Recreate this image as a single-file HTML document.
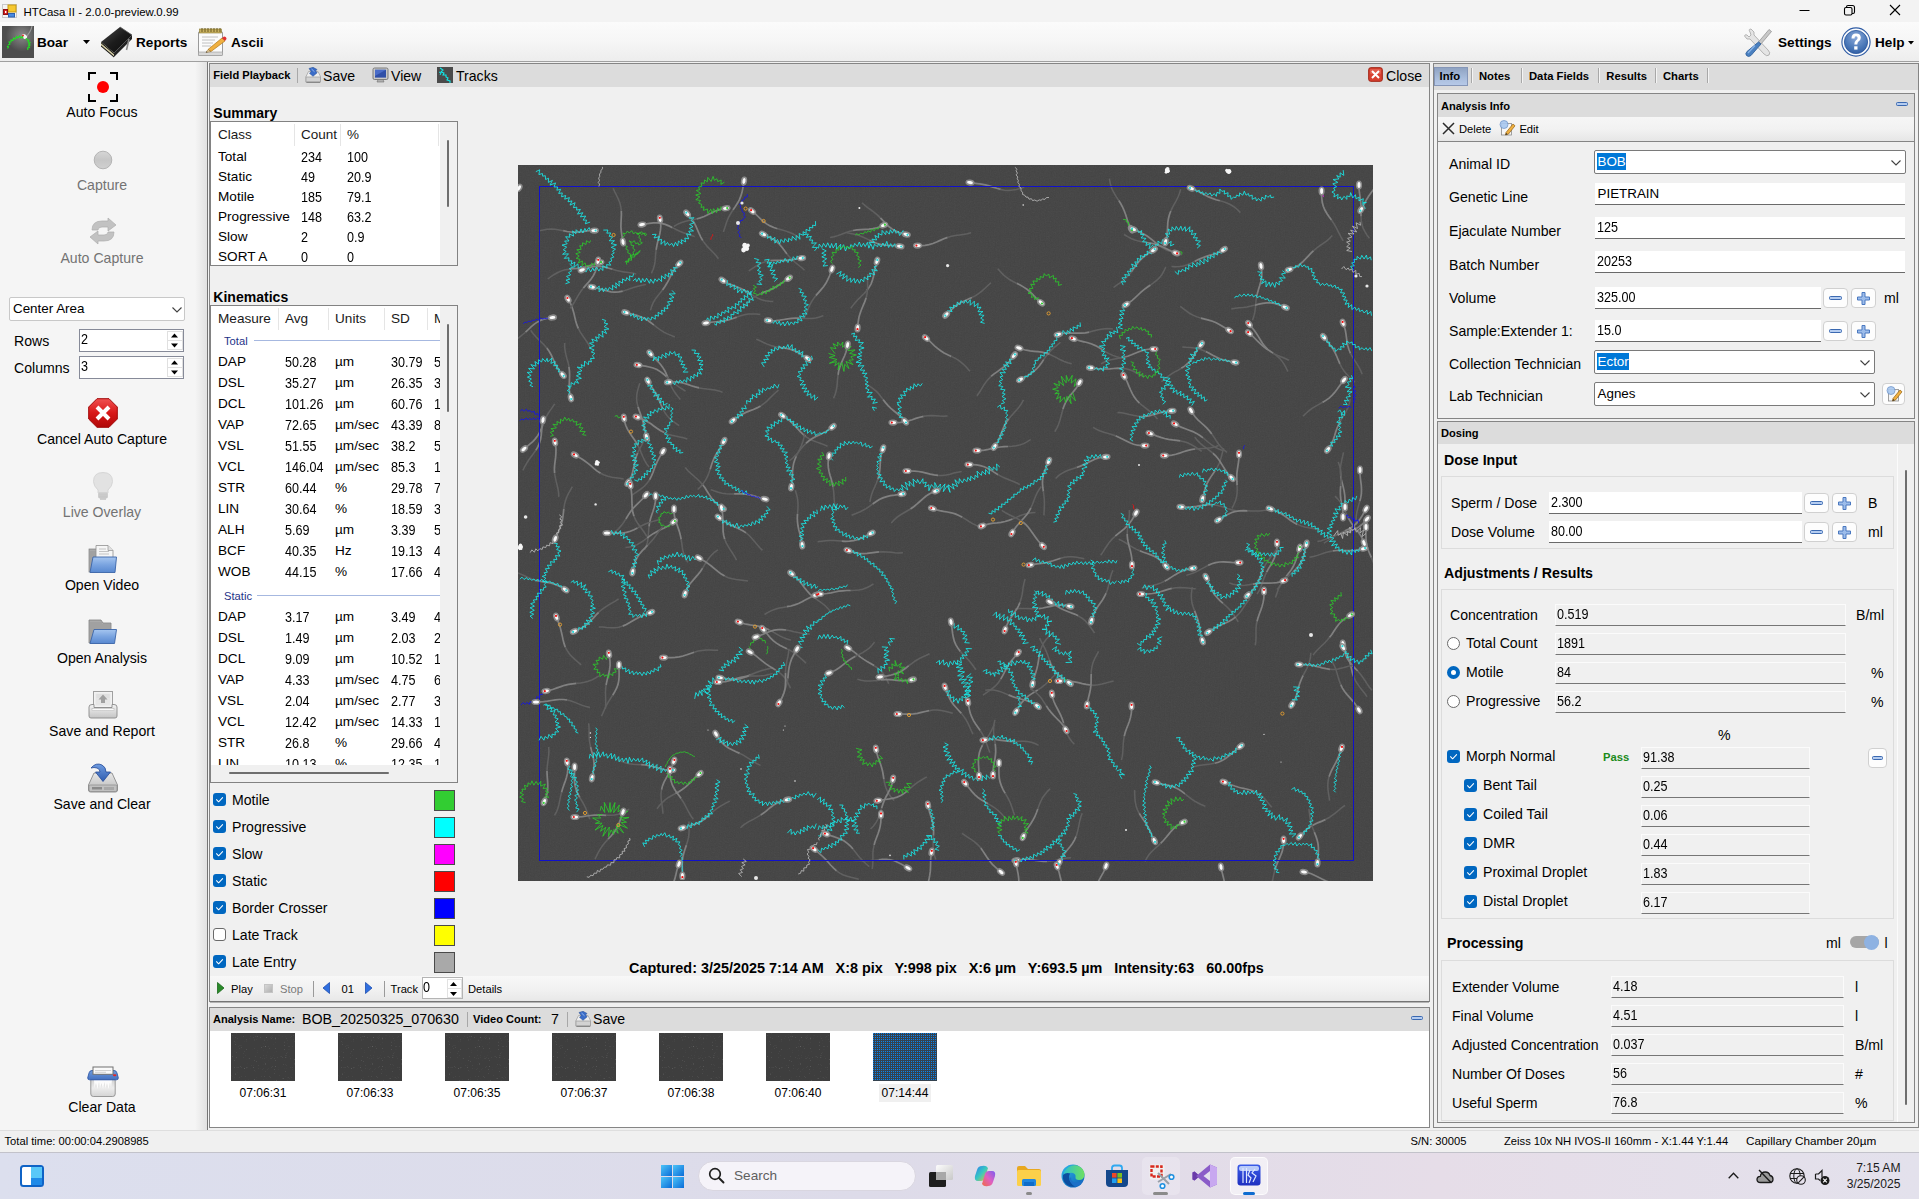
<!DOCTYPE html>
<html><head><meta charset="utf-8"><title>HTCasa II - 2.0.0-preview.0.99</title>
<style>
html,body{margin:0;padding:0;width:1919px;height:1199px;overflow:hidden;background:#f0f0f0;font-family:"Liberation Sans",sans-serif;}
#root{position:relative;width:1919px;height:1199px;overflow:hidden}
#root div{position:absolute;box-sizing:border-box}
.t{white-space:pre}
.tb{background:#fff;border-bottom:1px solid #6a6a6a}
.ro{background:#f0f0f0;border:1px solid #fbfbfb;border-bottom:1px solid #767676}
.btn{background:#fdfdfd;border:1px solid #d0d0d0;border-radius:4px}
.cb{background:#0067c0;border-radius:3px}
.gb{border:1px solid #dcdcdc}
svg{display:block}
</style></head><body><div id="root">

<div style="left:0px;top:0px;width:1919px;height:22px;background:#f3f3f3"></div>
<div style="left:2px;top:3px"><svg width="16" height="16" viewBox="0 0 16 16"><rect x="0.5" y="1.5" width="14" height="13" fill="#f4f4f4" stroke="#c8c8c8"/>
<rect x="6" y="2" width="8" height="7" fill="#f6c830" stroke="#c79a10" stroke-width="1"/>
<rect x="1.5" y="6.5" width="4" height="5" fill="#d02020" stroke="#901010"/>
<rect x="3" y="8" width="1.4" height="2" fill="#fff"/>
<rect x="6.5" y="10.5" width="6" height="3.5" fill="#4a8ae0" stroke="#2a60b0"/></svg></div>
<div class="t" style="left:23.5px;top:1.5px;line-height:20px;font-size:11.45px;color:#000;">HTCasa II - 2.0.0-preview.0.99</div>
<div style="left:1780px;top:0"><svg width="139" height="22" viewBox="0 0 139 22"><path d="M19.500 10.500 H29.500" stroke="#000" stroke-width="1"/><rect x="64.500" y="7.500" width="7.500" height="7.500" rx="1.500" fill="none" stroke="#000" stroke-width="1.100"/><path d="M66.500 7.500 V7 Q66.500 5.500 68 5.500 H72.500 Q74.500 5.500 74.500 7.500 V12 Q74.500 13.500 73 13.500 H72" fill="none" stroke="#000" stroke-width="1.100"/><path d="M110 5 L120 15 M120 5 L110 15" stroke="#000" stroke-width="1.100"/></svg></div>
<div style="left:0px;top:22px;width:1919px;height:39px;background:linear-gradient(#fbfbfb,#f6f6f6 50%,#ededed)"></div>
<div style="left:0px;top:60px;width:1919px;height:2px;background:#a0a0a0;height:1px;top:61px"></div>
<div style="left:2px;top:26px"><svg width="32" height="32" viewBox="0 0 32 32"><defs><radialGradient id="bg1" cx="0.62" cy="0.3" r="0.5"><stop offset="0" stop-color="#8a8a8a"/><stop offset="1" stop-color="#4d4d4d"/></radialGradient></defs>
<rect width="32" height="32" fill="url(#bg1)"/>
<path d="M23 12 Q29 6 30 0" stroke="#9a9a9a" stroke-width="1.2" fill="none"/>
<ellipse cx="22.5" cy="10.5" rx="3" ry="2" fill="#f4f4f4" transform="rotate(35 22.5 10.5)"/>
<path d="M6 19 l2-1 -1-2 2 0 0-2 2 .5 .5-2.5 2 1 1-2.500 1.500 1.500 1.500-2 1 2 2-1.500 .5 2 M24 12 l1 2 2 0 -1 2 2 .5 -1.500 1.500 1.500 1 -1.500 1 1 1.500 -2 .5 .5 2 M5 20 l1.500 1 -1 1.500" stroke="#22e022" stroke-width="1.1" fill="none"/>
<circle cx="21" cy="9.500" r="0.900" fill="#e01010"/></svg></div>
<div class="t" style="left:37px;top:32.8px;line-height:20px;font-size:13.6px;font-weight:bold;color:#000;">Boar</div>
<div style="left:83px;top:40px"><svg width="7" height="4"><path d="M0 0 H7 L3.500 4 Z" fill="#000"/></svg></div>
<div style="left:100px;top:26px"><svg width="34" height="32" viewBox="0 0 34 32"><defs><linearGradient id="bk" x1="0" y1="0" x2="1" y2="1"><stop offset="0" stop-color="#4a4a4a"/><stop offset="0.5" stop-color="#1c1c1c"/><stop offset="1" stop-color="#0a0a0a"/></linearGradient></defs>
<path d="M1 16 L20 1 L32 9 L14 27 Z" fill="url(#bk)"/>
<path d="M1 16 L14 27 L14 31 L1 20 Z" fill="#d8d0a8"/>
<path d="M1 16 L14 27 L14 28.200 L1 17.200 Z" fill="#111"/>
<path d="M1 19.200 L14 30.200 L14 31.500 L1 20.600 Z" fill="#111"/>
<path d="M14 27 L32 9 L32 13 L14 31 Z" fill="#222"/>
<path d="M29 13 L26.500 24" stroke="#8a8a8a" stroke-width="1.600"/>
<path d="M20 1 L32 9" stroke="#555" stroke-width="0.800"/></svg></div>
<div class="t" style="left:136px;top:32.8px;line-height:20px;font-size:13.6px;font-weight:bold;color:#000;">Reports</div>
<div style="left:197px;top:27px"><svg width="30" height="30" viewBox="0 0 30 30"><rect x="1.500" y="4.500" width="24" height="24" rx="1.500" fill="#fbfbfb" stroke="#9a9a9a"/>
<rect x="1.500" y="25" width="24" height="3.500" fill="#d8d8d8" stroke="#9a9a9a" stroke-width="0.600"/>
<rect x="2.500" y="2" width="22" height="4" fill="#c8b060" stroke="#8a7a30" stroke-width="0.600"/>
<path d="M5 1v4M8 1v4M11 1v4M14 1v4M17 1v4M20 1v4M23 1v4" stroke="#6a5a20" stroke-width="1"/>
<path d="M5 10h16M5 13h13M5 16h11M5 19h9" stroke="#c0c0c0" stroke-width="1"/>
<path d="M11 22.500 L25 11 L28 14 L14 24.500 Z" fill="#f0b040" stroke="#b07818" stroke-width="0.700"/>
<path d="M25 11 L27 9.500 Q29.500 9.500 29.500 12 L28 14 Z" fill="#e03030"/>
<path d="M11 22.500 L9 25.500 L14 24.500 Z" fill="#e8d0a0" stroke="#8a6a30" stroke-width="0.500"/>
<path d="M9 25.500 l1.500-.3 -.8-1z" fill="#333"/></svg></div>
<div class="t" style="left:231px;top:32.8px;line-height:20px;font-size:13.6px;font-weight:bold;color:#000;">Ascii</div>
<div style="left:1744px;top:28px"><svg width="30" height="30" viewBox="0 0 30 30"><path d="M6 4 Q4 1 7 1 L10 4 L10 7 L24 22 Q27 25 25 27 Q23 29 20 26 L6 11 L3 11 L0.500 8 Q1 6 3 7 L5 9 L7 7 Z" fill="#e4e4e4" stroke="#a4a4a4" stroke-width="0.800"/>
<path d="M25 1.500 L27.500 3.500 L17 16 L14.500 14 Z" fill="#c8c8c8" stroke="#8c8c8c" stroke-width="0.700"/>
<path d="M14.500 14 L17 16 L7 27.500 Q4.500 29.500 2.500 27.500 Q1 25.500 3 23.500 Z" fill="#4a80c0" stroke="#2a5a98" stroke-width="0.800"/>
<path d="M4 25 L11 17.500" stroke="#8ab4e8" stroke-width="1.200"/></svg></div>
<div class="t" style="left:1778px;top:32.8px;line-height:20px;font-size:13.6px;font-weight:bold;color:#000;">Settings</div>
<div style="left:1841px;top:27px"><svg width="30" height="30" viewBox="0 0 30 30"><defs><radialGradient id="hg" cx="0.5" cy="0.3" r="0.8"><stop offset="0" stop-color="#8aa8d8"/><stop offset="0.6" stop-color="#4a78b8"/><stop offset="1" stop-color="#2a569c"/></radialGradient></defs>
<circle cx="15" cy="15" r="14.100" fill="#fbfcfe" stroke="#2f5ca4" stroke-width="1.100"/>
<circle cx="15" cy="15" r="11.600" fill="url(#hg)" stroke="#2a569c" stroke-width="0.800"/>
<path d="M10.500 11.500 Q10.500 6.500 15 6.500 Q19.800 6.500 19.800 10.800 Q19.800 13.200 17.500 14.600 Q16.300 15.400 16.300 17.500 L13.300 17.500 Q13.300 14.600 15 13.300 Q16.600 12.200 16.600 11 Q16.600 9.300 15 9.300 Q13.500 9.300 13.500 11.500 Z" fill="#fff"/>
<rect x="13.200" y="19.300" width="3.300" height="3.300" fill="#fff"/></svg></div>
<div class="t" style="left:1875px;top:32.8px;line-height:20px;font-size:13.6px;font-weight:bold;color:#000;">Help</div>
<div style="left:1908px;top:41px"><svg width="6" height="4"><path d="M0 0 H6 L3 3.500 Z" fill="#000"/></svg></div>
<div style="left:0px;top:62px;width:207px;height:1068px;background:linear-gradient(90deg,#f5f5f5 0,#f5f5f5 195px,#e2e2e2 207px)"></div>
<div style="left:207px;top:62px;width:2px;height:1068px;background:#f4f4f4;border-left:1px solid #767676"></div>
<div style="left:88px;top:72px"><svg width="30" height="30" viewBox="0 0 30 30"><path d="M1 8V1H8M22 1H29V8M29 22V29H22M8 29H1V22" fill="none" stroke="#000" stroke-width="2"/>
<circle cx="15" cy="15" r="6" fill="#ff0000"/></svg></div>
<div class="t" style="left:-98px;width:400px;text-align:center;top:102.0px;line-height:20px;font-size:14.1px;color:#000;">Auto Focus</div>
<div style="left:93px;top:150px"><svg width="20" height="20" viewBox="0 0 20 20"><defs><linearGradient id="cg" x1="0" y1="0" x2="0" y2="1"><stop offset="0" stop-color="#d6d6d6"/><stop offset="0.5" stop-color="#c6c6c6"/><stop offset="1" stop-color="#d0d0d0"/></linearGradient></defs>
<circle cx="10" cy="10" r="8.800" fill="url(#cg)" stroke="#b4b4b4" stroke-width="1"/></svg></div>
<div class="t" style="left:-98px;width:400px;text-align:center;top:175.0px;line-height:20px;font-size:14.1px;color:#737373;">Capture</div>
<div style="left:89px;top:217px"><svg width="28" height="28" viewBox="0 0 28 28"><g fill="#c2c2c2" stroke="#aeaeae" stroke-width="0.700">
<path d="M3 13 Q3 4 13 4 L19 4 L19 1 L27 8 L19 14 L19 10 L13 10 Q9 10 9 13 Z"/>
<path d="M25 15 Q25 24 15 24 L9 24 L9 27 L1 20 L9 14 L9 18 L15 18 Q19 18 19 15 Z"/></g></svg></div>
<div class="t" style="left:-98px;width:400px;text-align:center;top:248.0px;line-height:20px;font-size:14.1px;color:#737373;">Auto Capture</div>
<div style="left:9px;top:297px;width:176px;height:24px;background:#fff;border:1px solid #c8c8c8;border-radius:2px"></div>
<div class="t" style="left:13px;top:299.3px;line-height:20px;font-size:13.4px;color:#000;">Center Area</div>
<div style="left:172px;top:307px"><svg width="10" height="6" viewBox="0 0 10 6"><path d="M0.500 0.500 L5 5 L9.500 0.500" fill="none" stroke="#404040" stroke-width="1.100"/></svg></div>
<div class="t" style="left:14px;top:331.0px;line-height:20px;font-size:14.1px;color:#000;">Rows</div>
<div class="t" style="left:14px;top:358.0px;line-height:20px;font-size:14.1px;color:#000;">Columns</div>
<div style="left:79px;top:329px;width:105px;height:23px;background:#fff;border:1px solid #868a98"></div>
<div class="t" style="left:80.5px;top:329.1px;line-height:20px;font-size:14.3px;color:#000;transform:scaleX(0.88);transform-origin:0 50%;">2</div>
<div style="left:170px;top:332px"><svg width="9" height="17" viewBox="0 0 9 17"><path d="M1 5.500 L4.500 1.500 L8 5.500 Z M1 11.5 L4.500 15.5 L8 11.5 Z" fill="#000"/></svg></div>
<div style="left:167px;top:331px;width:16px;height:19px;border:1px solid #e0e0e0;background:transparent"></div>
<div style="left:167px;top:340.0px;width:16px;height:1px;background:#e0e0e0"></div>
<div style="left:79px;top:356px;width:105px;height:23px;background:#fff;border:1px solid #868a98"></div>
<div class="t" style="left:80.5px;top:356.1px;line-height:20px;font-size:14.3px;color:#000;transform:scaleX(0.88);transform-origin:0 50%;">3</div>
<div style="left:170px;top:359px"><svg width="9" height="17" viewBox="0 0 9 17"><path d="M1 5.500 L4.500 1.500 L8 5.500 Z M1 11.5 L4.500 15.5 L8 11.5 Z" fill="#000"/></svg></div>
<div style="left:167px;top:358px;width:16px;height:19px;border:1px solid #e0e0e0;background:transparent"></div>
<div style="left:167px;top:367.0px;width:16px;height:1px;background:#e0e0e0"></div>
<div style="left:88px;top:398px"><svg width="30" height="30" viewBox="0 0 30 30"><defs><linearGradient id="rg" x1="0" y1="0" x2="0" y2="1"><stop offset="0" stop-color="#f05050"/><stop offset="0.5" stop-color="#d81818"/><stop offset="1" stop-color="#b00808"/></linearGradient></defs>
<path d="M9 0.700 H21 L29.300 9 V21 L21 29.300 H9 L0.700 21 V9 Z" fill="url(#rg)" stroke="#a00808" stroke-width="1"/>
<path d="M9 9 L21 21 M21 9 L9 21" stroke="#fff" stroke-width="4" stroke-linecap="butt"/></svg></div>
<div class="t" style="left:-98px;width:400px;text-align:center;top:429.2px;line-height:20px;font-size:14.1px;color:#000;">Cancel Auto Capture</div>
<div style="left:93px;top:472px"><svg width="20" height="28" viewBox="0 0 20 28"><path d="M10 0.500 Q19.500 0.500 19.500 9.500 Q19.500 14 15 18 L15 21 L5 21 L5 18 Q0.500 14 0.500 9.500 Q0.500 0.500 10 0.500 Z" fill="#e2e2e2" stroke="#d0d0d0" stroke-width="0.800"/>
<rect x="5.500" y="21" width="9" height="5" rx="1" fill="#d2d2d2" stroke="#c0c0c0" stroke-width="0.600"/>
<path d="M6 23h8M6 24.800h8" stroke="#bcbcbc" stroke-width="0.700"/>
<path d="M7 27 h6" stroke="#c0c0c0" stroke-width="1.500"/></svg></div>
<div class="t" style="left:-98px;width:400px;text-align:center;top:502.20000000000005px;line-height:20px;font-size:14.1px;color:#737373;">Live Overlay</div>
<div style="left:88px;top:544px"><svg width="30" height="30" viewBox="0 0 30 30"><defs><linearGradient id="fg1" x1="0" y1="0" x2="0" y2="1"><stop offset="0" stop-color="#a6c6f0"/><stop offset="0.5" stop-color="#7aa4e0"/><stop offset="1" stop-color="#5888d0"/></linearGradient></defs>
<rect x="1" y="5" width="8" height="23" fill="#aaaaaa" stroke="#808080" stroke-width="0.700"/>
<path d="M2 8h6M2 10h6M2 12h6M2 14h6M2 16h6M2 18h6M2 20h6M2 22h6M2 24h6" stroke="#8e8e8e" stroke-width="0.600"/>
<path d="M8 1.500 H20 L25 6.500 V20 H8 Z" fill="#f6f6f6" stroke="#909090" stroke-width="0.800"/>
<path d="M20 1.500 V6.500 H25" fill="#e0e0e0" stroke="#909090" stroke-width="0.700"/>
<path d="M11 5h7M11 7.500h10M11 10h10" stroke="#b8b8b8" stroke-width="0.800"/>
<path d="M5 13 H28.500 L27 28.500 H2 Z" fill="url(#fg1)" stroke="#3a64a8" stroke-width="0.900"/></svg></div>
<div class="t" style="left:-98px;width:400px;text-align:center;top:575.0px;line-height:20px;font-size:14.1px;color:#000;">Open Video</div>
<div style="left:88px;top:619px"><svg width="30" height="26" viewBox="0 0 30 26"><defs><linearGradient id="fg2" x1="0" y1="0" x2="0" y2="1"><stop offset="0" stop-color="#a6c6f0"/><stop offset="0.5" stop-color="#7aa4e0"/><stop offset="1" stop-color="#5888d0"/></linearGradient></defs>
<path d="M1 1 H13 L15 4 H23 V24 H1 Z" fill="#aaaaaa" stroke="#808080" stroke-width="0.800"/>
<path d="M2 4h12M2 6h20M2 8h20M2 10h20M2 12h20M2 14h20M2 16h20M2 18h20M2 20h20M2 22h20" stroke="#8e8e8e" stroke-width="0.600"/>
<path d="M6 10.500 H28.500 L26.500 24.500 H2 Z" fill="url(#fg2)" stroke="#3a64a8" stroke-width="0.900"/></svg></div>
<div class="t" style="left:-98px;width:400px;text-align:center;top:648.0px;line-height:20px;font-size:14.1px;color:#000;">Open Analysis</div>
<div style="left:88px;top:691px"><svg width="30" height="28" viewBox="0 0 30 28"><defs><linearGradient id="pg" x1="0" y1="0" x2="0" y2="1"><stop offset="0" stop-color="#f4f4f4"/><stop offset="1" stop-color="#c4c4c4"/></linearGradient></defs>
<rect x="5.500" y="0.500" width="19" height="16" fill="#f2f2f2" stroke="#a0a0a0"/>
<rect x="7.500" y="2.500" width="15" height="12" fill="#e6e6e6"/>
<path d="M8.500 4h13M8.500 6h13" stroke="#d4d4d4" stroke-width="0.700"/>
<path d="M15 3.500 L19.500 8.500 H17 V12 H13 V8.500 H10.500 Z" fill="#a0a0a0"/>
<path d="M1 16 Q1 13.500 4 13.500 H6 V16.500 H24 V13.500 H26 Q29 13.500 29 16 V25 Q29 27 27 27 H3 Q1 27 1 25 Z" fill="url(#pg)" stroke="#8a8a8a" stroke-width="0.900"/>
<rect x="4" y="17.500" width="22" height="2.200" fill="#fafafa" stroke="#b0b0b0" stroke-width="0.500"/></svg></div>
<div class="t" style="left:-98px;width:400px;text-align:center;top:721.0px;line-height:20px;font-size:14.1px;color:#000;">Save and Report</div>
<div style="left:88px;top:763px"><svg width="30" height="30" viewBox="0 0 30 30"><defs><linearGradient id="dg" x1="0" y1="0" x2="0" y2="1"><stop offset="0" stop-color="#e8e8e8"/><stop offset="1" stop-color="#b8b8b8"/></linearGradient>
<linearGradient id="ag" x1="0" y1="0" x2="0" y2="1"><stop offset="0" stop-color="#6f9ce0"/><stop offset="1" stop-color="#2f5cb0"/></linearGradient></defs>
<path d="M6 10 H24 L29.500 22 V27 Q29.500 29 27.500 29 H2.500 Q0.500 29 0.500 27 V22 Z" fill="url(#dg)" stroke="#8a8a8a" stroke-width="0.900"/>
<rect x="1" y="22" width="28" height="6.500" rx="1.500" fill="#c0c0c0" stroke="#8a8a8a" stroke-width="0.700"/>
<rect x="4" y="24" width="10" height="2.500" fill="#8a8a8a"/>
<path d="M17 24v3M19 24v3M21 24v3M23 24v3M25 24v3" stroke="#8a8a8a" stroke-width="0.900"/>
<path d="M3 5 Q8 -1 14 2 Q18 4 18 9 H22.500 L15 18.500 L7.500 9 H12 Q12 6 9 5 Q6 4 3 5 Z" fill="url(#ag)" stroke="#244a98" stroke-width="0.800"/></svg></div>
<div class="t" style="left:-98px;width:400px;text-align:center;top:794.0px;line-height:20px;font-size:14.1px;color:#000;">Save and Clear</div>
<div style="left:87px;top:1066px"><svg width="32" height="32" viewBox="0 0 32 32"><defs><linearGradient id="sg" x1="0" y1="0" x2="0" y2="1"><stop offset="0" stop-color="#6f9cdc"/><stop offset="1" stop-color="#4470c0"/></linearGradient>
<linearGradient id="bing" x1="0" y1="0" x2="0" y2="1"><stop offset="0" stop-color="#d2d2d2"/><stop offset="0.5" stop-color="#ececec"/><stop offset="1" stop-color="#d4d4d4"/></linearGradient></defs>
<path d="M3.800 13.500 H28.200 V28 Q28.200 30.500 25.700 30.500 H6.300 Q3.800 30.500 3.800 28 Z" fill="url(#bing)" stroke="#8e8e8e" stroke-width="0.900"/>
<path d="M7 14 L7.500 22 L9 17 L10.500 23 L12 16 L13 22.500 L14.500 17 L16 23 L17.500 16 L18.500 22.500 L20 17 L21.500 23 L23 16.500 L24 22 L25 14 Z" fill="#fdfdfd" opacity="0.95"/>
<path d="M5 4.500 H27 Q29.300 4.500 29.900 6.800 L31.300 11.800 Q31.400 13.800 29.400 13.800 H2.600 Q0.600 13.800 0.700 11.800 L2.100 6.800 Q2.700 4.500 5 4.500 Z" fill="url(#sg)" stroke="#2f58a8" stroke-width="0.900"/>
<rect x="6" y="1" width="20" height="7.300" fill="#fafafa" stroke="#707070" stroke-width="1"/>
<path d="M8 4.500h16M8 6.300h11" stroke="#c8c8c8" stroke-width="0.800"/>
<rect x="26" y="8.200" width="3.400" height="2.100" rx="1" fill="#e02828"/></svg></div>
<div class="t" style="left:-98px;width:400px;text-align:center;top:1097.0px;line-height:20px;font-size:14.1px;color:#000;">Clear Data</div>
<div style="left:209px;top:63px;width:1221px;height:939px;background:#f0f0f0;border:1px solid #858585"></div>
<div style="left:210px;top:64px;width:1219px;height:23px;background:#dcdcdc"></div>
<div class="t" style="left:213.3px;top:65.3px;line-height:20px;font-size:11.1px;font-weight:bold;color:#000;">Field Playback</div>
<div style="left:297px;top:68px;width:1px;height:15px;background:#a8a8a8"></div>
<div style="left:305px;top:67px"><svg width="17" height="17" viewBox="0 0 17 17"><path d="M1 9.500 L3.500 4.500 H13 L15.500 9.500 V15 H1 Z" fill="#eeeeee" stroke="#a4a4a4" stroke-width="0.800"/>
<rect x="1" y="10" width="14.500" height="5" fill="#d2d2d2" stroke="#9a9a9a" stroke-width="0.700"/>
<path d="M1.500 15.300 H15" stroke="#7c7c7c" stroke-width="1"/>
<path d="M4 1.500 L8 0.300 L12 2.500 L10.500 4 L12.200 5.800 L8 9.300 L4.500 6.300 L6.300 4.800 Z" fill="#3a6cc8" stroke="#1f4890" stroke-width="0.500"/>
<path d="M6.500 2 L9.500 4.800" stroke="#9cc0f4" stroke-width="0.900"/></svg></div>
<div class="t" style="left:323px;top:65.5px;line-height:20px;font-size:14.1px;color:#000;">Save</div>
<div style="left:372px;top:67px"><svg width="17" height="16" viewBox="0 0 17 16"><rect x="1" y="1" width="15" height="11.500" rx="1.500" fill="#c8c8c8" stroke="#707070" stroke-width="0.900"/>
<rect x="3" y="2.800" width="11" height="7.800" fill="#2f4fa8"/>
<path d="M3 2.800 H14 L3 9 Z" fill="#4a6cc8"/>
<path d="M5 15 H12 L11 12.500 H6 Z" fill="#b0b0b0" stroke="#707070" stroke-width="0.600"/></svg></div>
<div class="t" style="left:391px;top:65.5px;line-height:20px;font-size:14.1px;color:#000;">View</div>
<div style="left:437px;top:67px"><svg width="16" height="16" viewBox="0 0 16 16"><rect width="16" height="16" fill="#4a4a4a"/>
<path d="M3 1 l3 2 -2 2 3 1 -1 2 3 0 0 2 2 1 -1 2 3 1 0 2" stroke="#10e8e8" stroke-width="1.100" fill="none"/>
<path d="M2 5 l2 1 -1 2" stroke="#10e8e8" stroke-width="1" fill="none"/></svg></div>
<div class="t" style="left:456px;top:65.5px;line-height:20px;font-size:14.1px;color:#000;">Tracks</div>
<div style="left:1368px;top:67px"><svg width="15" height="15" viewBox="0 0 15 15"><rect x="0.700" y="0.700" width="13.600" height="13.600" rx="2" fill="#d84030" stroke="#a02010" stroke-width="1"/>
<rect x="2" y="2" width="11" height="5" rx="1" fill="#e87060" opacity="0.6"/>
<path d="M4 4 L11 11 M11 4 L4 11" stroke="#fff" stroke-width="2"/></svg></div>
<div class="t" style="left:1386px;top:65.5px;line-height:20px;font-size:14.1px;color:#000;">Close</div>
<div class="t" style="left:213.3px;top:103.3px;line-height:20px;font-size:14.05px;font-weight:bold;color:#000;">Summary</div>
<div style="left:210px;top:121px;width:248px;height:145px;background:#fff;border:1px solid #828282"></div>
<div style="left:440px;top:122px;width:17px;height:143px;background:#f0f0f0"></div>
<div style="left:446.5px;top:140px;width:2px;height:67px;background:#6e6e6e;border-radius:1px"></div>
<div style="left:294px;top:124px;width:1px;height:22px;background:#e5e5e5"></div>
<div style="left:340px;top:124px;width:1px;height:22px;background:#e5e5e5"></div>
<div style="left:438px;top:124px;width:1px;height:22px;background:#e5e5e5"></div>
<div class="t" style="left:218px;top:125.0px;line-height:20px;font-size:13.5px;color:#1a1a1a;">Class</div>
<div class="t" style="left:301px;top:125.0px;line-height:20px;font-size:13.5px;color:#1a1a1a;">Count</div>
<div class="t" style="left:347px;top:125.0px;line-height:20px;font-size:13.5px;color:#1a1a1a;">%</div>
<div style="left:211px;top:147px;width:228px;height:118px;overflow:hidden">
<div class="t" style="left:7px;top:0.4000000000000057px;line-height:20px;font-size:13.6px;color:#000;">Total</div>
<div class="t" style="left:89.9px;top:-0.49999999999999467px;line-height:20px;font-size:14.3px;color:#000;transform:scaleX(0.88);transform-origin:0 50%;">234</div>
<div class="t" style="left:135.9px;top:-0.49999999999999467px;line-height:20px;font-size:14.3px;color:#000;transform:scaleX(0.88);transform-origin:0 50%;">100</div>
<div class="t" style="left:7px;top:20.400000000000006px;line-height:20px;font-size:13.6px;color:#000;">Static</div>
<div class="t" style="left:89.9px;top:19.500000000000007px;line-height:20px;font-size:14.3px;color:#000;transform:scaleX(0.88);transform-origin:0 50%;">49</div>
<div class="t" style="left:135.9px;top:19.500000000000007px;line-height:20px;font-size:14.3px;color:#000;transform:scaleX(0.88);transform-origin:0 50%;">20.9</div>
<div class="t" style="left:7px;top:40.400000000000006px;line-height:20px;font-size:13.6px;color:#000;">Motile</div>
<div class="t" style="left:89.9px;top:39.50000000000001px;line-height:20px;font-size:14.3px;color:#000;transform:scaleX(0.88);transform-origin:0 50%;">185</div>
<div class="t" style="left:135.9px;top:39.50000000000001px;line-height:20px;font-size:14.3px;color:#000;transform:scaleX(0.88);transform-origin:0 50%;">79.1</div>
<div class="t" style="left:7px;top:60.400000000000006px;line-height:20px;font-size:13.6px;color:#000;">Progressive</div>
<div class="t" style="left:89.9px;top:59.5px;line-height:20px;font-size:14.3px;color:#000;transform:scaleX(0.88);transform-origin:0 50%;">148</div>
<div class="t" style="left:135.9px;top:59.5px;line-height:20px;font-size:14.3px;color:#000;transform:scaleX(0.88);transform-origin:0 50%;">63.2</div>
<div class="t" style="left:7px;top:80.4px;line-height:20px;font-size:13.6px;color:#000;">Slow</div>
<div class="t" style="left:89.9px;top:79.5px;line-height:20px;font-size:14.3px;color:#000;transform:scaleX(0.88);transform-origin:0 50%;">2</div>
<div class="t" style="left:135.9px;top:79.5px;line-height:20px;font-size:14.3px;color:#000;transform:scaleX(0.88);transform-origin:0 50%;">0.9</div>
<div class="t" style="left:7px;top:100.39999999999998px;line-height:20px;font-size:13.6px;color:#000;">SORT A</div>
<div class="t" style="left:89.9px;top:99.49999999999997px;line-height:20px;font-size:14.3px;color:#000;transform:scaleX(0.88);transform-origin:0 50%;">0</div>
<div class="t" style="left:135.9px;top:99.49999999999997px;line-height:20px;font-size:14.3px;color:#000;transform:scaleX(0.88);transform-origin:0 50%;">0</div>
</div>
<div class="t" style="left:213.3px;top:287.3px;line-height:20px;font-size:14.05px;font-weight:bold;color:#000;">Kinematics</div>
<div style="left:210px;top:305px;width:248px;height:478px;background:#fff;border:1px solid #828282"></div>
<div style="left:440px;top:306px;width:17px;height:459px;background:#f0f0f0"></div>
<div style="left:211px;top:765px;width:246px;height:17px;background:#f0f0f0"></div>
<div style="left:446.5px;top:324px;width:2px;height:88px;background:#6e6e6e;border-radius:1px"></div>
<div style="left:229px;top:772px;width:160px;height:2px;background:#6e6e6e;border-radius:1px"></div>
<div style="left:278px;top:308px;width:1px;height:22px;background:#e5e5e5"></div>
<div style="left:328px;top:308px;width:1px;height:22px;background:#e5e5e5"></div>
<div style="left:384px;top:308px;width:1px;height:22px;background:#e5e5e5"></div>
<div style="left:427px;top:308px;width:1px;height:22px;background:#e5e5e5"></div>
<div style="left:211px;top:306px;width:229px;height:459px;overflow:hidden">
<div class="t" style="left:7px;top:3.0px;line-height:20px;font-size:13.6px;color:#1a1a1a;">Measure</div>
<div class="t" style="left:74px;top:3.0px;line-height:20px;font-size:13.6px;color:#1a1a1a;">Avg</div>
<div class="t" style="left:124px;top:3.0px;line-height:20px;font-size:13.6px;color:#1a1a1a;">Units</div>
<div class="t" style="left:180px;top:3.0px;line-height:20px;font-size:13.6px;color:#1a1a1a;">SD</div>
<div class="t" style="left:223px;top:3.0px;line-height:20px;font-size:13.6px;color:#1a1a1a;">Max</div>
<div class="t" style="left:13px;top:24.5px;line-height:20px;font-size:11.2px;color:#1e3287;">Total</div>
<div style="left:43px;top:34.0px;width:300px;height:1px;background:#a6b8e0"></div>
<div class="t" style="left:7px;top:46.39999999999998px;line-height:20px;font-size:13.6px;color:#000;">DAP</div>
<div class="t" style="left:73.9px;top:45.49999999999998px;line-height:20px;font-size:14.3px;color:#000;transform:scaleX(0.88);transform-origin:0 50%;">50.28</div>
<div class="t" style="left:124px;top:46.39999999999998px;line-height:20px;font-size:13.6px;color:#000;">µm</div>
<div class="t" style="left:179.9px;top:45.49999999999998px;line-height:20px;font-size:14.3px;color:#000;transform:scaleX(0.88);transform-origin:0 50%;">30.79</div>
<div class="t" style="left:222.9px;top:45.49999999999998px;line-height:20px;font-size:14.3px;color:#000;transform:scaleX(0.88);transform-origin:0 50%;">5</div>
<div class="t" style="left:7px;top:67.39999999999998px;line-height:20px;font-size:13.6px;color:#000;">DSL</div>
<div class="t" style="left:73.9px;top:66.49999999999997px;line-height:20px;font-size:14.3px;color:#000;transform:scaleX(0.88);transform-origin:0 50%;">35.27</div>
<div class="t" style="left:124px;top:67.39999999999998px;line-height:20px;font-size:13.6px;color:#000;">µm</div>
<div class="t" style="left:179.9px;top:66.49999999999997px;line-height:20px;font-size:14.3px;color:#000;transform:scaleX(0.88);transform-origin:0 50%;">26.35</div>
<div class="t" style="left:222.9px;top:66.49999999999997px;line-height:20px;font-size:14.3px;color:#000;transform:scaleX(0.88);transform-origin:0 50%;">3</div>
<div class="t" style="left:7px;top:88.39999999999998px;line-height:20px;font-size:13.6px;color:#000;">DCL</div>
<div class="t" style="left:73.9px;top:87.49999999999997px;line-height:20px;font-size:14.3px;color:#000;transform:scaleX(0.88);transform-origin:0 50%;">101.26</div>
<div class="t" style="left:124px;top:88.39999999999998px;line-height:20px;font-size:13.6px;color:#000;">µm</div>
<div class="t" style="left:179.9px;top:87.49999999999997px;line-height:20px;font-size:14.3px;color:#000;transform:scaleX(0.88);transform-origin:0 50%;">60.76</div>
<div class="t" style="left:222.9px;top:87.49999999999997px;line-height:20px;font-size:14.3px;color:#000;transform:scaleX(0.88);transform-origin:0 50%;">1</div>
<div class="t" style="left:7px;top:109.39999999999998px;line-height:20px;font-size:13.6px;color:#000;">VAP</div>
<div class="t" style="left:73.9px;top:108.49999999999997px;line-height:20px;font-size:14.3px;color:#000;transform:scaleX(0.88);transform-origin:0 50%;">72.65</div>
<div class="t" style="left:124px;top:109.39999999999998px;line-height:20px;font-size:13.6px;color:#000;">µm/sec</div>
<div class="t" style="left:179.9px;top:108.49999999999997px;line-height:20px;font-size:14.3px;color:#000;transform:scaleX(0.88);transform-origin:0 50%;">43.39</div>
<div class="t" style="left:222.9px;top:108.49999999999997px;line-height:20px;font-size:14.3px;color:#000;transform:scaleX(0.88);transform-origin:0 50%;">8</div>
<div class="t" style="left:7px;top:130.39999999999998px;line-height:20px;font-size:13.6px;color:#000;">VSL</div>
<div class="t" style="left:73.9px;top:129.49999999999997px;line-height:20px;font-size:14.3px;color:#000;transform:scaleX(0.88);transform-origin:0 50%;">51.55</div>
<div class="t" style="left:124px;top:130.39999999999998px;line-height:20px;font-size:13.6px;color:#000;">µm/sec</div>
<div class="t" style="left:179.9px;top:129.49999999999997px;line-height:20px;font-size:14.3px;color:#000;transform:scaleX(0.88);transform-origin:0 50%;">38.2</div>
<div class="t" style="left:222.9px;top:129.49999999999997px;line-height:20px;font-size:14.3px;color:#000;transform:scaleX(0.88);transform-origin:0 50%;">5</div>
<div class="t" style="left:7px;top:151.39999999999998px;line-height:20px;font-size:13.6px;color:#000;">VCL</div>
<div class="t" style="left:73.9px;top:150.49999999999997px;line-height:20px;font-size:14.3px;color:#000;transform:scaleX(0.88);transform-origin:0 50%;">146.04</div>
<div class="t" style="left:124px;top:151.39999999999998px;line-height:20px;font-size:13.6px;color:#000;">µm/sec</div>
<div class="t" style="left:179.9px;top:150.49999999999997px;line-height:20px;font-size:14.3px;color:#000;transform:scaleX(0.88);transform-origin:0 50%;">85.3</div>
<div class="t" style="left:222.9px;top:150.49999999999997px;line-height:20px;font-size:14.3px;color:#000;transform:scaleX(0.88);transform-origin:0 50%;">1</div>
<div class="t" style="left:7px;top:172.39999999999998px;line-height:20px;font-size:13.6px;color:#000;">STR</div>
<div class="t" style="left:73.9px;top:171.49999999999997px;line-height:20px;font-size:14.3px;color:#000;transform:scaleX(0.88);transform-origin:0 50%;">60.44</div>
<div class="t" style="left:124px;top:172.39999999999998px;line-height:20px;font-size:13.6px;color:#000;">%</div>
<div class="t" style="left:179.9px;top:171.49999999999997px;line-height:20px;font-size:14.3px;color:#000;transform:scaleX(0.88);transform-origin:0 50%;">29.78</div>
<div class="t" style="left:222.9px;top:171.49999999999997px;line-height:20px;font-size:14.3px;color:#000;transform:scaleX(0.88);transform-origin:0 50%;">7</div>
<div class="t" style="left:7px;top:193.39999999999998px;line-height:20px;font-size:13.6px;color:#000;">LIN</div>
<div class="t" style="left:73.9px;top:192.49999999999997px;line-height:20px;font-size:14.3px;color:#000;transform:scaleX(0.88);transform-origin:0 50%;">30.64</div>
<div class="t" style="left:124px;top:193.39999999999998px;line-height:20px;font-size:13.6px;color:#000;">%</div>
<div class="t" style="left:179.9px;top:192.49999999999997px;line-height:20px;font-size:14.3px;color:#000;transform:scaleX(0.88);transform-origin:0 50%;">18.59</div>
<div class="t" style="left:222.9px;top:192.49999999999997px;line-height:20px;font-size:14.3px;color:#000;transform:scaleX(0.88);transform-origin:0 50%;">3</div>
<div class="t" style="left:7px;top:214.39999999999998px;line-height:20px;font-size:13.6px;color:#000;">ALH</div>
<div class="t" style="left:73.9px;top:213.49999999999997px;line-height:20px;font-size:14.3px;color:#000;transform:scaleX(0.88);transform-origin:0 50%;">5.69</div>
<div class="t" style="left:124px;top:214.39999999999998px;line-height:20px;font-size:13.6px;color:#000;">µm</div>
<div class="t" style="left:179.9px;top:213.49999999999997px;line-height:20px;font-size:14.3px;color:#000;transform:scaleX(0.88);transform-origin:0 50%;">3.39</div>
<div class="t" style="left:222.9px;top:213.49999999999997px;line-height:20px;font-size:14.3px;color:#000;transform:scaleX(0.88);transform-origin:0 50%;">5</div>
<div class="t" style="left:7px;top:235.39999999999998px;line-height:20px;font-size:13.6px;color:#000;">BCF</div>
<div class="t" style="left:73.9px;top:234.49999999999997px;line-height:20px;font-size:14.3px;color:#000;transform:scaleX(0.88);transform-origin:0 50%;">40.35</div>
<div class="t" style="left:124px;top:235.39999999999998px;line-height:20px;font-size:13.6px;color:#000;">Hz</div>
<div class="t" style="left:179.9px;top:234.49999999999997px;line-height:20px;font-size:14.3px;color:#000;transform:scaleX(0.88);transform-origin:0 50%;">19.13</div>
<div class="t" style="left:222.9px;top:234.49999999999997px;line-height:20px;font-size:14.3px;color:#000;transform:scaleX(0.88);transform-origin:0 50%;">4</div>
<div class="t" style="left:7px;top:256.4px;line-height:20px;font-size:13.6px;color:#000;">WOB</div>
<div class="t" style="left:73.9px;top:255.5px;line-height:20px;font-size:14.3px;color:#000;transform:scaleX(0.88);transform-origin:0 50%;">44.15</div>
<div class="t" style="left:124px;top:256.4px;line-height:20px;font-size:13.6px;color:#000;">%</div>
<div class="t" style="left:179.9px;top:255.5px;line-height:20px;font-size:14.3px;color:#000;transform:scaleX(0.88);transform-origin:0 50%;">17.66</div>
<div class="t" style="left:222.9px;top:255.5px;line-height:20px;font-size:14.3px;color:#000;transform:scaleX(0.88);transform-origin:0 50%;">4</div>
<div class="t" style="left:13px;top:279.5px;line-height:20px;font-size:11.2px;color:#1e3287;">Static</div>
<div style="left:46px;top:289.0px;width:300px;height:1px;background:#a6b8e0"></div>
<div class="t" style="left:7px;top:301.4px;line-height:20px;font-size:13.6px;color:#000;">DAP</div>
<div class="t" style="left:73.9px;top:300.5px;line-height:20px;font-size:14.3px;color:#000;transform:scaleX(0.88);transform-origin:0 50%;">3.17</div>
<div class="t" style="left:124px;top:301.4px;line-height:20px;font-size:13.6px;color:#000;">µm</div>
<div class="t" style="left:179.9px;top:300.5px;line-height:20px;font-size:14.3px;color:#000;transform:scaleX(0.88);transform-origin:0 50%;">3.49</div>
<div class="t" style="left:222.9px;top:300.5px;line-height:20px;font-size:14.3px;color:#000;transform:scaleX(0.88);transform-origin:0 50%;">4</div>
<div class="t" style="left:7px;top:322.4px;line-height:20px;font-size:13.6px;color:#000;">DSL</div>
<div class="t" style="left:73.9px;top:321.5px;line-height:20px;font-size:14.3px;color:#000;transform:scaleX(0.88);transform-origin:0 50%;">1.49</div>
<div class="t" style="left:124px;top:322.4px;line-height:20px;font-size:13.6px;color:#000;">µm</div>
<div class="t" style="left:179.9px;top:321.5px;line-height:20px;font-size:14.3px;color:#000;transform:scaleX(0.88);transform-origin:0 50%;">2.03</div>
<div class="t" style="left:222.9px;top:321.5px;line-height:20px;font-size:14.3px;color:#000;transform:scaleX(0.88);transform-origin:0 50%;">2</div>
<div class="t" style="left:7px;top:343.4px;line-height:20px;font-size:13.6px;color:#000;">DCL</div>
<div class="t" style="left:73.9px;top:342.5px;line-height:20px;font-size:14.3px;color:#000;transform:scaleX(0.88);transform-origin:0 50%;">9.09</div>
<div class="t" style="left:124px;top:343.4px;line-height:20px;font-size:13.6px;color:#000;">µm</div>
<div class="t" style="left:179.9px;top:342.5px;line-height:20px;font-size:14.3px;color:#000;transform:scaleX(0.88);transform-origin:0 50%;">10.52</div>
<div class="t" style="left:222.9px;top:342.5px;line-height:20px;font-size:14.3px;color:#000;transform:scaleX(0.88);transform-origin:0 50%;">1</div>
<div class="t" style="left:7px;top:364.4px;line-height:20px;font-size:13.6px;color:#000;">VAP</div>
<div class="t" style="left:73.9px;top:363.5px;line-height:20px;font-size:14.3px;color:#000;transform:scaleX(0.88);transform-origin:0 50%;">4.33</div>
<div class="t" style="left:124px;top:364.4px;line-height:20px;font-size:13.6px;color:#000;">µm/sec</div>
<div class="t" style="left:179.9px;top:363.5px;line-height:20px;font-size:14.3px;color:#000;transform:scaleX(0.88);transform-origin:0 50%;">4.75</div>
<div class="t" style="left:222.9px;top:363.5px;line-height:20px;font-size:14.3px;color:#000;transform:scaleX(0.88);transform-origin:0 50%;">6</div>
<div class="t" style="left:7px;top:385.4px;line-height:20px;font-size:13.6px;color:#000;">VSL</div>
<div class="t" style="left:73.9px;top:384.5px;line-height:20px;font-size:14.3px;color:#000;transform:scaleX(0.88);transform-origin:0 50%;">2.04</div>
<div class="t" style="left:124px;top:385.4px;line-height:20px;font-size:13.6px;color:#000;">µm/sec</div>
<div class="t" style="left:179.9px;top:384.5px;line-height:20px;font-size:14.3px;color:#000;transform:scaleX(0.88);transform-origin:0 50%;">2.77</div>
<div class="t" style="left:222.9px;top:384.5px;line-height:20px;font-size:14.3px;color:#000;transform:scaleX(0.88);transform-origin:0 50%;">3</div>
<div class="t" style="left:7px;top:406.4px;line-height:20px;font-size:13.6px;color:#000;">VCL</div>
<div class="t" style="left:73.9px;top:405.5px;line-height:20px;font-size:14.3px;color:#000;transform:scaleX(0.88);transform-origin:0 50%;">12.42</div>
<div class="t" style="left:124px;top:406.4px;line-height:20px;font-size:13.6px;color:#000;">µm/sec</div>
<div class="t" style="left:179.9px;top:405.5px;line-height:20px;font-size:14.3px;color:#000;transform:scaleX(0.88);transform-origin:0 50%;">14.33</div>
<div class="t" style="left:222.9px;top:405.5px;line-height:20px;font-size:14.3px;color:#000;transform:scaleX(0.88);transform-origin:0 50%;">1</div>
<div class="t" style="left:7px;top:427.4px;line-height:20px;font-size:13.6px;color:#000;">STR</div>
<div class="t" style="left:73.9px;top:426.5px;line-height:20px;font-size:14.3px;color:#000;transform:scaleX(0.88);transform-origin:0 50%;">26.8</div>
<div class="t" style="left:124px;top:427.4px;line-height:20px;font-size:13.6px;color:#000;">%</div>
<div class="t" style="left:179.9px;top:426.5px;line-height:20px;font-size:14.3px;color:#000;transform:scaleX(0.88);transform-origin:0 50%;">29.66</div>
<div class="t" style="left:222.9px;top:426.5px;line-height:20px;font-size:14.3px;color:#000;transform:scaleX(0.88);transform-origin:0 50%;">4</div>
<div class="t" style="left:7px;top:448.4px;line-height:20px;font-size:13.6px;color:#000;">LIN</div>
<div class="t" style="left:73.9px;top:447.5px;line-height:20px;font-size:14.3px;color:#000;transform:scaleX(0.88);transform-origin:0 50%;">10.13</div>
<div class="t" style="left:124px;top:448.4px;line-height:20px;font-size:13.6px;color:#000;">%</div>
<div class="t" style="left:179.9px;top:447.5px;line-height:20px;font-size:14.3px;color:#000;transform:scaleX(0.88);transform-origin:0 50%;">12.35</div>
<div class="t" style="left:222.9px;top:447.5px;line-height:20px;font-size:14.3px;color:#000;transform:scaleX(0.88);transform-origin:0 50%;">1</div>
</div>
<div style="left:210px;top:1001px;width:1219px;height:1px;background:#757575"></div>
<div style="left:210px;top:1002px;width:1219px;height:1px;background:#b4b4b4"></div>
<div class="cb" style="left:213px;top:793px;width:13px;height:13px;"><svg width="13" height="13" viewBox="0 0 13 13"><path d="M3.500 6.700 L5.600 8.800 L9.600 4.600" fill="none" stroke="#fff" stroke-width="1.050" stroke-linecap="round" stroke-linejoin="round"/></svg></div>
<div class="t" style="left:232px;top:790.0px;line-height:20px;font-size:14.1px;color:#000;">Motile</div>
<div style="left:434px;top:790px;width:21px;height:21px;background:#32cd32;border:1px solid #4a4a4a"></div>
<div class="cb" style="left:213px;top:820px;width:13px;height:13px;"><svg width="13" height="13" viewBox="0 0 13 13"><path d="M3.500 6.700 L5.600 8.800 L9.600 4.600" fill="none" stroke="#fff" stroke-width="1.050" stroke-linecap="round" stroke-linejoin="round"/></svg></div>
<div class="t" style="left:232px;top:817.0px;line-height:20px;font-size:14.1px;color:#000;">Progressive</div>
<div style="left:434px;top:817px;width:21px;height:21px;background:#00ffff;border:1px solid #4a4a4a"></div>
<div class="cb" style="left:213px;top:847px;width:13px;height:13px;"><svg width="13" height="13" viewBox="0 0 13 13"><path d="M3.500 6.700 L5.600 8.800 L9.600 4.600" fill="none" stroke="#fff" stroke-width="1.050" stroke-linecap="round" stroke-linejoin="round"/></svg></div>
<div class="t" style="left:232px;top:844.0px;line-height:20px;font-size:14.1px;color:#000;">Slow</div>
<div style="left:434px;top:844px;width:21px;height:21px;background:#ff00ff;border:1px solid #4a4a4a"></div>
<div class="cb" style="left:213px;top:874px;width:13px;height:13px;"><svg width="13" height="13" viewBox="0 0 13 13"><path d="M3.500 6.700 L5.600 8.800 L9.600 4.600" fill="none" stroke="#fff" stroke-width="1.050" stroke-linecap="round" stroke-linejoin="round"/></svg></div>
<div class="t" style="left:232px;top:871.0px;line-height:20px;font-size:14.1px;color:#000;">Static</div>
<div style="left:434px;top:871px;width:21px;height:21px;background:#ff0000;border:1px solid #4a4a4a"></div>
<div class="cb" style="left:213px;top:901px;width:13px;height:13px;"><svg width="13" height="13" viewBox="0 0 13 13"><path d="M3.500 6.700 L5.600 8.800 L9.600 4.600" fill="none" stroke="#fff" stroke-width="1.050" stroke-linecap="round" stroke-linejoin="round"/></svg></div>
<div class="t" style="left:232px;top:898.0px;line-height:20px;font-size:14.1px;color:#000;">Border Crosser</div>
<div style="left:434px;top:898px;width:21px;height:21px;background:#0000ff;border:1px solid #4a4a4a"></div>
<div style="left:213px;top:928px;width:13px;height:13px;background:#fff;border:1px solid #6a6a6a;border-radius:3px"></div>
<div class="t" style="left:232px;top:925.0px;line-height:20px;font-size:14.1px;color:#000;">Late Track</div>
<div style="left:434px;top:925px;width:21px;height:21px;background:#ffff00;border:1px solid #4a4a4a"></div>
<div class="cb" style="left:213px;top:955px;width:13px;height:13px;"><svg width="13" height="13" viewBox="0 0 13 13"><path d="M3.500 6.700 L5.600 8.800 L9.600 4.600" fill="none" stroke="#fff" stroke-width="1.050" stroke-linecap="round" stroke-linejoin="round"/></svg></div>
<div class="t" style="left:232px;top:952.0px;line-height:20px;font-size:14.1px;color:#000;">Late Entry</div>
<div style="left:434px;top:952px;width:21px;height:21px;background:#a9a9a9;border:1px solid #4a4a4a"></div>
<div style="left:518px;top:165px;width:855px;height:716px;overflow:hidden"><svg width="855" height="716" viewBox="0 0 855 716"><defs><filter id="nz" x="0" y="0" width="100%" height="100%"><feTurbulence type="fractalNoise" baseFrequency="0.8" numOctaves="2" seed="3" result="n"/><feColorMatrix in="n" type="matrix" values="0 0 0 0 0.262  0 0 0 0 0.262  0 0 0 0 0.262  0.35 0.35 0 0 -0.2"/></filter><filter id="bl1" x="0" y="0" width="100%" height="100%"><feGaussianBlur stdDeviation="0.55"/></filter><filter id="bl2" x="0" y="0" width="100%" height="100%"><feGaussianBlur stdDeviation="0.45"/></filter></defs><rect width="855" height="716" fill="#444444"/><rect width="855" height="716" fill="#2e2e2e" filter="url(#nz)" opacity="0.3"/><g filter="url(#bl1)"><path d="M72.9 65.6 L68.9 66.0 L65.0 66.6 L61.0 67.0 L57.0 67.2 L53.0 67.0 L49.0 66.5 L45.1 65.7" stroke="#808080" stroke-width="1.700" fill="none"/><path d="M45.1 65.7 L41.2 64.9 L37.2 64.3 L33.2 64.1 L29.2 64.3 L25.3 64.9 L21.3 65.7" stroke="#606060" stroke-width="1.500" fill="none"/><path d="M78.6 98.4 L74.8 99.7 L71.0 100.9 L67.1 102.0 L63.2 102.8 L59.2 103.4 L55.2 103.7 L51.3 104.2" stroke="#808080" stroke-width="1.700" fill="none"/><path d="M51.3 104.2 L47.3 104.8 L43.5 105.9 L39.8 107.5 L36.3 109.5 L33.0 111.7 L29.7 114.0" stroke="#606060" stroke-width="1.500" fill="none"/><path d="M171.4 51.1 L173.9 54.3 L176.1 57.6 L177.9 61.2 L179.5 64.8 L181.1 68.5 L182.8 72.1 L184.8 75.6" stroke="#808080" stroke-width="1.700" fill="none"/><path d="M184.8 75.6 L187.1 78.8 L189.7 81.9 L192.5 84.7 L195.3 87.6 L198.0 90.5 L200.4 93.7" stroke="#606060" stroke-width="1.500" fill="none"/><path d="M142.6 57.4 L142.8 61.4 L142.4 65.4 L141.7 69.4 L140.6 73.2 L139.6 77.1 L138.8 81.0 L138.1 84.9" stroke="#808080" stroke-width="1.700" fill="none"/><path d="M138.1 84.9 L137.7 88.9 L137.4 92.9 L137.0 96.9 L136.3 100.8 L135.1 104.6 L133.4 108.3" stroke="#606060" stroke-width="1.500" fill="none"/><path d="M127.4 59.0 L131.4 58.3 L135.4 57.9 L139.4 57.8 L143.3 58.4 L147.2 59.4 L150.9 60.9 L154.5 62.7" stroke="#808080" stroke-width="1.700" fill="none"/><path d="M154.5 62.7 L158.1 64.5 L161.7 66.2 L165.4 67.7 L169.2 69.0 L173.0 70.2 L176.7 71.6" stroke="#606060" stroke-width="1.500" fill="none"/><path d="M204.5 43.8 L200.7 44.9 L196.9 46.3 L193.3 48.1 L189.7 49.8 L186.1 51.5 L182.3 52.9 L178.5 54.0" stroke="#808080" stroke-width="1.700" fill="none"/><path d="M178.5 54.0 L174.6 54.8 L170.7 55.6 L166.8 56.5 L163.0 57.7 L159.3 59.3 L155.9 61.4" stroke="#606060" stroke-width="1.500" fill="none"/><path d="M248.4 70.6 L252.0 72.4 L255.4 74.4 L258.7 76.7 L261.6 79.5 L264.2 82.5 L266.6 85.7 L269.0 88.9" stroke="#808080" stroke-width="1.700" fill="none"/><path d="M269.0 88.9 L271.6 91.9 L274.3 94.8 L277.3 97.5 L280.4 100.0 L283.6 102.5 L286.5 105.2" stroke="#606060" stroke-width="1.500" fill="none"/><path d="M158.9 101.1 L156.5 104.2 L154.4 107.6 L152.6 111.2 L150.8 114.8 L148.9 118.3 L146.8 121.7 L144.5 125.0" stroke="#808080" stroke-width="1.700" fill="none"/><path d="M144.5 125.0 L142.0 128.1 L139.5 131.2 L137.1 134.4 L135.1 137.9 L133.6 141.6 L132.5 145.4" stroke="#606060" stroke-width="1.500" fill="none"/><path d="M77.5 122.7 L81.3 123.8 L85.2 124.9 L89.0 126.0 L92.9 126.8 L96.9 127.1 L100.9 126.9 L104.8 126.1" stroke="#808080" stroke-width="1.700" fill="none"/><path d="M104.8 126.1 L108.7 124.9 L112.4 123.6 L116.2 122.3 L120.1 121.2 L124.0 120.3 L127.9 119.6" stroke="#606060" stroke-width="1.500" fill="none"/><path d="M111.0 148.4 L114.9 149.4 L118.8 150.4 L122.6 151.7 L126.2 153.3 L129.7 155.3 L132.9 157.7 L136.0 160.2" stroke="#808080" stroke-width="1.700" fill="none"/><path d="M136.0 160.2 L139.2 162.7 L142.4 165.0 L145.8 167.1 L149.4 168.9 L153.1 170.4 L156.8 172.0" stroke="#606060" stroke-width="1.500" fill="none"/><path d="M42.6 207.3 L40.3 204.0 L38.2 200.6 L36.5 197.0 L34.8 193.3 L33.1 189.7 L31.1 186.3 L28.8 183.0" stroke="#808080" stroke-width="1.700" fill="none"/><path d="M28.8 183.0 L26.2 180.0 L23.4 177.2 L20.4 174.4 L17.6 171.6 L15.0 168.5 L12.7 165.3" stroke="#606060" stroke-width="1.500" fill="none"/><path d="M52.0 229.6 L51.4 225.6 L51.2 221.6 L51.3 217.6 L51.5 213.6 L51.6 209.6 L51.4 205.6 L50.9 201.7" stroke="#808080" stroke-width="1.700" fill="none"/><path d="M50.9 201.7 L50.1 197.7 L49.0 193.9 L48.0 190.0 L47.2 186.1 L46.7 182.1 L46.7 178.1" stroke="#606060" stroke-width="1.500" fill="none"/><path d="M30.9 153.0 L27.0 153.8 L23.2 155.1 L19.6 156.9 L16.3 159.1 L13.3 161.7 L10.4 164.5 L7.5 167.2" stroke="#808080" stroke-width="1.700" fill="none"/><path d="M7.5 167.2 L4.4 169.8 L1.3 172.3 L-2.0 174.6 L-5.3 176.9 L-8.4 179.4 L-11.3 182.1" stroke="#606060" stroke-width="1.500" fill="none"/><path d="M280.1 93.6 L276.2 94.4 L272.2 94.9 L268.2 95.3 L264.2 95.3 L260.2 95.3 L256.2 95.3 L252.3 95.7" stroke="#808080" stroke-width="1.700" fill="none"/><path d="M252.3 95.7 L248.3 96.4 L244.5 97.7 L240.9 99.5 L237.5 101.5 L234.2 103.7 L230.8 105.9" stroke="#606060" stroke-width="1.500" fill="none"/><path d="M267.7 115.2 L264.5 117.5 L261.2 119.8 L257.8 122.0 L254.3 123.9 L250.6 125.5 L246.9 126.9 L243.2 128.4" stroke="#808080" stroke-width="1.700" fill="none"/><path d="M243.2 128.4 L239.6 130.1 L236.1 132.1 L232.9 134.5 L230.0 137.3 L227.4 140.3 L224.8 143.3" stroke="#606060" stroke-width="1.500" fill="none"/><path d="M207.7 117.2 L211.3 118.9 L215.0 120.4 L218.7 121.8 L222.4 123.3 L226.0 125.0 L229.5 127.0 L232.9 129.1" stroke="#808080" stroke-width="1.700" fill="none"/><path d="M232.9 129.1 L236.3 131.2 L239.8 133.2 L243.5 134.7 L247.4 135.7 L251.3 136.3 L255.3 136.5" stroke="#606060" stroke-width="1.500" fill="none"/><path d="M253.9 155.8 L257.9 155.7 L261.9 155.2 L265.8 154.5 L269.7 153.8 L273.7 153.3 L277.7 153.1 L281.7 153.1" stroke="#808080" stroke-width="1.700" fill="none"/><path d="M281.7 153.1 L285.7 153.4 L289.7 153.5 L293.7 153.5 L297.7 153.0 L301.5 152.0 L305.3 150.6" stroke="#606060" stroke-width="1.500" fill="none"/><path d="M286.7 191.6 L283.4 189.4 L279.9 187.4 L276.3 185.7 L272.5 184.4 L268.6 183.5 L264.7 182.9 L260.7 182.3" stroke="#808080" stroke-width="1.700" fill="none"/><path d="M260.7 182.3 L256.8 181.5 L252.9 180.5 L249.2 179.1 L245.5 177.5 L241.9 175.7 L238.3 174.1" stroke="#606060" stroke-width="1.500" fill="none"/><path d="M134.6 191.1 L137.4 194.0 L140.2 196.8 L142.8 199.8 L145.2 203.1 L147.2 206.5 L148.8 210.2 L150.3 213.9" stroke="#808080" stroke-width="1.700" fill="none"/><path d="M150.3 213.9 L151.7 217.7 L153.3 221.3 L155.2 224.9 L157.4 228.2 L159.8 231.4 L162.3 234.5" stroke="#606060" stroke-width="1.500" fill="none"/><path d="M153.9 216.8 L157.9 216.8 L161.9 217.3 L165.8 218.2 L169.6 219.4 L173.3 220.7 L177.2 221.9 L181.1 222.9" stroke="#808080" stroke-width="1.700" fill="none"/><path d="M181.1 222.9 L185.0 223.5 L189.0 224.0 L193.0 224.4 L196.9 225.0 L200.8 225.9 L204.5 227.3" stroke="#606060" stroke-width="1.500" fill="none"/><path d="M131.7 218.9 L133.9 222.3 L136.1 225.6 L138.2 229.0 L140.0 232.6 L141.6 236.3 L143.1 240.0 L144.7 243.6" stroke="#808080" stroke-width="1.700" fill="none"/><path d="M144.7 243.6 L146.6 247.2 L148.9 250.4 L151.6 253.4 L154.6 256.0 L157.9 258.3 L161.2 260.6" stroke="#606060" stroke-width="1.500" fill="none"/><path d="M-0.8 26.0 L-2.5 29.6 L-3.9 33.4 L-4.9 37.2 L-5.4 41.2 L-5.6 45.2 L-5.7 49.2 L-6.0 53.2" stroke="#808080" stroke-width="1.700" fill="none"/><path d="M-6.0 53.2 L-6.5 57.2 L-7.4 61.1 L-8.4 64.9 L-9.5 68.8 L-10.5 72.6 L-11.1 76.6" stroke="#606060" stroke-width="1.500" fill="none"/><path d="M225.4 19.4 L224.8 23.4 L224.0 27.3 L222.8 31.2 L221.3 34.8 L219.4 38.3 L217.2 41.7 L214.9 45.0" stroke="#808080" stroke-width="1.700" fill="none"/><path d="M214.9 45.0 L212.8 48.4 L210.8 51.9 L209.2 55.5 L207.9 59.3 L206.7 63.1 L205.4 66.9" stroke="#606060" stroke-width="1.500" fill="none"/><path d="M191.4 157.4 L195.4 157.0 L199.4 156.7 L203.4 156.3 L207.3 155.7 L211.2 154.7 L215.0 153.5 L218.8 152.1" stroke="#808080" stroke-width="1.700" fill="none"/><path d="M218.8 152.1 L222.6 150.8 L226.4 149.7 L230.4 149.1 L234.4 148.9 L238.4 149.1 L242.3 149.5" stroke="#606060" stroke-width="1.500" fill="none"/><path d="M51.8 137.0 L53.5 140.6 L54.8 144.4 L55.9 148.3 L56.8 152.2 L57.7 156.0 L58.9 159.9 L60.4 163.6" stroke="#808080" stroke-width="1.700" fill="none"/><path d="M60.4 163.6 L62.3 167.1 L64.5 170.4 L66.8 173.7 L69.1 177.0 L71.1 180.4 L72.8 184.1" stroke="#606060" stroke-width="1.500" fill="none"/><path d="M67.3 103.8 L71.1 102.6 L75.0 101.7 L79.0 101.3 L83.0 101.5 L86.9 102.2 L90.8 103.2 L94.6 104.3" stroke="#808080" stroke-width="1.700" fill="none"/><path d="M94.6 104.3 L98.5 105.4 L102.4 106.3 L106.3 106.9 L110.3 107.5 L114.2 108.0 L118.2 108.9" stroke="#606060" stroke-width="1.500" fill="none"/><path d="M104.4 73.6 L103.7 69.6 L103.2 65.6 L102.9 61.7 L103.0 57.7 L103.2 53.7 L103.4 49.7 L103.3 45.7" stroke="#808080" stroke-width="1.700" fill="none"/><path d="M103.3 45.7 L102.8 41.7 L101.8 37.8 L100.3 34.1 L98.6 30.5 L96.8 26.9 L95.1 23.3" stroke="#606060" stroke-width="1.500" fill="none"/><path d="M236.7 48.2 L239.6 51.0 L242.5 53.8 L245.4 56.5 L248.6 58.9 L252.1 60.9 L255.8 62.5 L259.6 63.7" stroke="#808080" stroke-width="1.700" fill="none"/><path d="M259.6 63.7 L263.4 64.8 L267.2 65.9 L271.0 67.2 L274.7 68.8 L278.2 70.7 L281.7 72.7" stroke="#606060" stroke-width="1.500" fill="none"/><path d="M123.4 200.6 L127.4 201.2 L131.3 202.0 L135.2 203.0 L138.9 204.5 L142.3 206.6 L145.5 209.0 L148.5 211.6" stroke="#808080" stroke-width="1.700" fill="none"/><path d="M148.5 211.6 L151.4 214.4 L154.4 217.0 L157.6 219.5 L160.8 221.8 L164.2 224.0 L167.5 226.2" stroke="#606060" stroke-width="1.500" fill="none"/><path d="M79.4 99.4 L78.5 103.3 L77.1 107.1 L75.3 110.7 L73.1 114.0 L70.6 117.1 L67.9 120.1 L65.3 123.1" stroke="#808080" stroke-width="1.700" fill="none"/><path d="M65.3 123.1 L62.9 126.3 L60.7 129.7 L58.7 133.1 L56.7 136.6 L54.6 140.0 L52.2 143.2" stroke="#606060" stroke-width="1.500" fill="none"/><path d="M455.4 18.2 L459.4 18.7 L463.4 19.2 L467.3 19.9 L471.2 20.9 L475.0 22.1 L478.8 23.3 L482.7 24.4" stroke="#808080" stroke-width="1.700" fill="none"/><path d="M482.7 24.4 L486.6 25.2 L490.6 25.4 L494.6 25.1 L498.5 24.4 L502.4 23.4 L506.2 22.3" stroke="#606060" stroke-width="1.500" fill="none"/><path d="M362.6 61.6 L358.8 62.9 L354.9 63.7 L350.9 64.2 L347.0 64.4 L343.0 64.6 L339.0 64.9 L335.0 65.5" stroke="#808080" stroke-width="1.700" fill="none"/><path d="M335.0 65.5 L331.1 66.5 L327.4 67.8 L323.6 69.2 L319.9 70.6 L316.0 71.8 L312.1 72.5" stroke="#606060" stroke-width="1.500" fill="none"/><path d="M378.5 80.8 L374.5 80.5 L370.5 80.3 L366.5 80.0 L362.6 79.3 L358.7 78.3 L355.0 76.9 L351.4 75.2" stroke="#808080" stroke-width="1.700" fill="none"/><path d="M351.4 75.2 L347.8 73.4 L344.2 71.7 L340.4 70.2 L336.6 69.2 L332.7 68.4 L328.7 67.8" stroke="#606060" stroke-width="1.500" fill="none"/><path d="M384.9 68.6 L381.1 67.5 L377.4 65.9 L374.0 63.9 L370.8 61.5 L367.9 58.7 L365.2 55.8 L362.4 52.9" stroke="#808080" stroke-width="1.700" fill="none"/><path d="M362.4 52.9 L359.5 50.1 L356.5 47.6 L353.3 45.2 L350.0 42.8 L346.9 40.4 L343.9 37.7" stroke="#606060" stroke-width="1.500" fill="none"/><path d="M358.0 99.4 L357.1 103.3 L356.3 107.3 L355.5 111.2 L354.5 115.0 L353.1 118.8 L351.1 122.3 L348.8 125.5" stroke="#808080" stroke-width="1.700" fill="none"/><path d="M348.8 125.5 L346.1 128.5 L343.3 131.3 L340.4 134.1 L337.7 137.0 L335.1 140.1 L332.8 143.3" stroke="#606060" stroke-width="1.500" fill="none"/><path d="M312.8 107.3 L311.4 111.0 L309.8 114.7 L307.9 118.2 L305.7 121.5 L303.1 124.6 L300.5 127.6 L297.8 130.6" stroke="#808080" stroke-width="1.700" fill="none"/><path d="M297.8 130.6 L295.4 133.8 L293.3 137.2 L291.4 140.7 L289.9 144.4 L288.4 148.1 L286.8 151.8" stroke="#606060" stroke-width="1.500" fill="none"/><path d="M403.1 80.6 L407.1 80.3 L411.0 79.6 L414.9 78.5 L418.6 77.0 L422.2 75.4 L425.9 73.8 L429.6 72.4" stroke="#808080" stroke-width="1.700" fill="none"/><path d="M429.6 72.4 L433.5 71.3 L437.4 70.5 L441.4 70.0 L445.3 69.4 L449.3 68.7 L453.1 67.7" stroke="#606060" stroke-width="1.500" fill="none"/><path d="M430.7 147.3 L433.5 144.5 L436.5 141.8 L439.7 139.5 L443.1 137.4 L446.7 135.7 L450.4 134.1 L454.0 132.4" stroke="#808080" stroke-width="1.700" fill="none"/><path d="M454.0 132.4 L457.6 130.6 L460.9 128.4 L464.1 125.9 L467.0 123.2 L469.9 120.5 L472.9 117.8" stroke="#606060" stroke-width="1.500" fill="none"/><path d="M410.7 175.2 L413.6 178.0 L416.5 180.8 L419.5 183.4 L422.7 185.8 L426.1 187.9 L429.7 189.7 L433.3 191.4" stroke="#808080" stroke-width="1.700" fill="none"/><path d="M433.3 191.4 L436.9 193.2 L440.3 195.2 L443.5 197.6 L446.5 200.2 L449.3 203.2 L451.9 206.2" stroke="#606060" stroke-width="1.500" fill="none"/><path d="M520.5 135.4 L517.6 132.6 L514.9 129.7 L512.0 126.9 L509.0 124.3 L505.7 122.1 L502.2 120.1 L498.6 118.3" stroke="#808080" stroke-width="1.700" fill="none"/><path d="M498.6 118.3 L495.0 116.5 L491.5 114.5 L488.3 112.2 L485.2 109.6 L482.5 106.8 L479.8 103.8" stroke="#606060" stroke-width="1.500" fill="none"/><path d="M339.9 159.5 L340.4 155.5 L341.1 151.6 L342.3 147.8 L343.7 144.0 L345.2 140.4 L346.8 136.7 L348.1 132.9" stroke="#808080" stroke-width="1.700" fill="none"/><path d="M348.1 132.9 L349.0 129.0 L349.5 125.0 L349.6 121.0 L349.6 117.0 L349.6 113.0 L349.8 109.0" stroke="#606060" stroke-width="1.500" fill="none"/><path d="M329.0 183.4 L327.9 187.3 L326.5 191.0 L324.8 194.7 L323.2 198.3 L321.8 202.1 L320.7 205.9 L320.1 209.9" stroke="#808080" stroke-width="1.700" fill="none"/><path d="M320.1 209.9 L319.6 213.9 L319.3 217.8 L318.9 221.8 L318.2 225.8 L317.1 229.6 L315.6 233.3" stroke="#606060" stroke-width="1.500" fill="none"/><path d="M543.5 168.6 L547.4 168.1 L551.4 168.0 L555.4 168.1 L559.4 168.2 L563.4 168.1 L567.4 167.8 L571.3 167.1" stroke="#808080" stroke-width="1.700" fill="none"/><path d="M571.3 167.1 L575.2 166.1 L579.1 165.1 L583.0 164.2 L587.0 163.7 L591.0 163.6 L594.9 163.9" stroke="#606060" stroke-width="1.500" fill="none"/><path d="M505.3 212.9 L508.8 211.0 L512.3 208.9 L515.5 206.6 L518.5 204.0 L521.2 201.0 L523.6 197.7 L525.8 194.4" stroke="#808080" stroke-width="1.700" fill="none"/><path d="M525.8 194.4 L528.1 191.2 L530.6 188.1 L533.4 185.1 L536.3 182.4 L539.4 179.9 L542.4 177.2" stroke="#606060" stroke-width="1.500" fill="none"/><path d="M494.1 193.2 L491.6 196.3 L488.8 199.2 L485.8 201.9 L482.6 204.3 L479.4 206.6 L476.1 208.9 L473.0 211.4" stroke="#808080" stroke-width="1.700" fill="none"/><path d="M473.0 211.4 L470.2 214.3 L467.7 217.4 L465.5 220.7 L463.4 224.1 L461.3 227.5 L458.9 230.8" stroke="#606060" stroke-width="1.500" fill="none"/><path d="M558.3 174.8 L562.1 175.9 L566.0 176.8 L569.9 177.8 L573.7 179.0 L577.4 180.6 L580.9 182.5 L584.3 184.6" stroke="#808080" stroke-width="1.700" fill="none"/><path d="M584.3 184.6 L587.7 186.8 L591.1 188.7 L594.8 190.4 L598.6 191.7 L602.4 192.7 L606.4 193.4" stroke="#606060" stroke-width="1.500" fill="none"/><path d="M504.3 184.2 L508.2 185.2 L512.1 185.9 L516.1 186.3 L520.1 186.7 L524.0 187.2 L527.9 188.1 L531.7 189.4" stroke="#808080" stroke-width="1.700" fill="none"/><path d="M531.7 189.4 L535.3 191.1 L538.9 192.9 L542.4 194.8 L546.1 196.5 L549.8 197.8 L553.7 198.8" stroke="#606060" stroke-width="1.500" fill="none"/><path d="M575.9 203.2 L579.9 203.6 L583.9 203.9 L587.9 204.0 L591.8 203.8 L595.8 203.5 L599.8 203.2 L603.8 203.3" stroke="#808080" stroke-width="1.700" fill="none"/><path d="M603.8 203.3 L607.8 203.8 L611.7 204.8 L615.4 206.3 L618.9 208.1 L622.4 210.0 L626.0 211.9" stroke="#606060" stroke-width="1.500" fill="none"/><path d="M559.9 220.6 L557.6 223.9 L555.1 227.0 L552.5 230.1 L550.1 233.3 L548.0 236.7 L546.3 240.3 L544.9 244.1" stroke="#808080" stroke-width="1.700" fill="none"/><path d="M544.9 244.1 L543.9 248.0 L542.9 251.8 L541.8 255.7 L540.5 259.5 L538.8 263.1 L536.8 266.6" stroke="#606060" stroke-width="1.500" fill="none"/><path d="M676.4 24.5 L680.0 26.3 L683.5 28.2 L687.0 30.1 L690.6 31.9 L694.3 33.4 L698.1 34.7 L701.9 35.8" stroke="#808080" stroke-width="1.700" fill="none"/><path d="M701.9 35.8 L705.8 36.9 L709.5 38.3 L713.1 40.0 L716.5 42.2 L719.6 44.8 L722.4 47.6" stroke="#606060" stroke-width="1.500" fill="none"/><path d="M803.6 29.5 L803.8 33.5 L804.3 37.5 L805.3 41.3 L806.9 45.0 L808.9 48.5 L811.1 51.8 L813.5 55.0" stroke="#808080" stroke-width="1.700" fill="none"/><path d="M813.5 55.0 L815.7 58.3 L817.8 61.8 L819.6 65.3 L821.4 68.9 L823.2 72.5 L825.2 75.9" stroke="#606060" stroke-width="1.500" fill="none"/><path d="M844.8 41.7 L846.7 38.2 L848.5 34.7 L850.6 31.2 L852.9 27.9 L855.3 24.8 L857.8 21.6 L860.2 18.4" stroke="#808080" stroke-width="1.700" fill="none"/><path d="M860.2 18.4 L862.3 15.0 L863.9 11.4 L865.1 7.6 L865.8 3.6 L866.2 -0.4 L866.6 -4.3" stroke="#606060" stroke-width="1.500" fill="none"/><path d="M841.0 23.5 L841.4 27.5 L842.0 31.4 L842.5 35.4 L842.9 39.4 L843.0 43.4 L843.0 47.4 L843.0 51.4" stroke="#808080" stroke-width="1.700" fill="none"/><path d="M843.0 51.4 L843.2 55.4 L843.9 59.3 L845.1 63.1 L846.9 66.7 L849.0 70.1 L851.4 73.3" stroke="#606060" stroke-width="1.500" fill="none"/><path d="M611.7 61.1 L610.1 57.4 L608.9 53.6 L607.7 49.8 L606.3 46.0 L604.7 42.3 L602.8 38.8 L600.7 35.4" stroke="#808080" stroke-width="1.700" fill="none"/><path d="M600.7 35.4 L598.5 32.1 L596.4 28.7 L594.5 25.2 L593.1 21.4 L592.1 17.6 L591.4 13.6" stroke="#606060" stroke-width="1.500" fill="none"/><path d="M618.4 65.6 L622.1 67.2 L625.6 68.9 L629.1 71.0 L632.3 73.3 L635.4 75.9 L638.4 78.5 L641.6 81.0" stroke="#808080" stroke-width="1.700" fill="none"/><path d="M641.6 81.0 L644.9 83.2 L648.5 85.0 L652.2 86.4 L656.0 87.6 L659.9 88.7 L663.7 89.9" stroke="#606060" stroke-width="1.500" fill="none"/><path d="M648.4 73.5 L649.0 69.6 L649.4 65.6 L649.6 61.6 L649.8 57.6 L650.4 53.7 L651.4 49.8 L652.8 46.0" stroke="#808080" stroke-width="1.700" fill="none"/><path d="M652.8 46.0 L654.5 42.4 L656.4 38.9 L658.4 35.4 L660.1 31.8 L661.6 28.1 L662.7 24.3" stroke="#606060" stroke-width="1.500" fill="none"/><path d="M632.8 86.8 L629.4 89.0 L626.2 91.4 L623.2 94.1 L620.5 97.0 L618.0 100.2 L615.7 103.4 L613.4 106.7" stroke="#808080" stroke-width="1.700" fill="none"/><path d="M613.4 106.7 L611.0 109.8 L608.2 112.7 L605.2 115.4 L602.0 117.8 L598.7 120.1 L595.5 122.5" stroke="#606060" stroke-width="1.500" fill="none"/><path d="M654.7 86.8 L651.1 85.1 L647.5 83.3 L643.9 81.6 L640.2 80.1 L636.4 78.9 L632.5 78.1 L628.5 77.5" stroke="#808080" stroke-width="1.700" fill="none"/><path d="M628.5 77.5 L624.6 76.9 L620.6 76.1 L616.8 75.0 L613.1 73.5 L609.6 71.6 L606.1 69.5" stroke="#606060" stroke-width="1.500" fill="none"/><path d="M702.7 86.4 L699.1 88.0 L695.3 89.3 L691.4 90.4 L687.6 91.6 L683.9 93.0 L680.2 94.6 L676.6 96.4" stroke="#808080" stroke-width="1.700" fill="none"/><path d="M676.6 96.4 L673.0 98.1 L669.4 99.7 L665.5 100.9 L661.6 101.6 L657.6 101.8 L653.6 101.5" stroke="#606060" stroke-width="1.500" fill="none"/><path d="M743.6 104.4 L743.9 108.4 L743.6 112.4 L742.8 116.4 L741.8 120.2 L740.6 124.0 L739.5 127.9 L738.6 131.8" stroke="#808080" stroke-width="1.700" fill="none"/><path d="M738.6 131.8 L738.0 135.7 L737.7 139.7 L737.3 143.7 L736.7 147.7 L735.8 151.6 L734.4 155.3" stroke="#606060" stroke-width="1.500" fill="none"/><path d="M774.4 103.5 L778.0 101.8 L781.4 99.6 L784.5 97.0 L787.3 94.2 L790.0 91.3 L792.7 88.4 L795.6 85.6" stroke="#808080" stroke-width="1.700" fill="none"/><path d="M795.6 85.6 L798.7 83.0 L801.9 80.7 L805.2 78.4 L808.5 76.1 L811.5 73.5 L814.2 70.5" stroke="#606060" stroke-width="1.500" fill="none"/><path d="M764.2 141.0 L760.5 139.6 L756.6 138.5 L752.7 137.9 L748.7 137.8 L744.7 138.3 L740.8 139.2 L736.9 140.2" stroke="#808080" stroke-width="1.700" fill="none"/><path d="M736.9 140.2 L733.0 141.1 L729.1 141.9 L725.2 142.4 L721.2 142.8 L717.2 143.3 L713.3 144.0" stroke="#606060" stroke-width="1.500" fill="none"/><path d="M733.2 161.7 L735.8 164.8 L738.1 168.0 L740.3 171.4 L742.3 174.8 L744.5 178.2 L746.9 181.4 L749.6 184.3" stroke="#808080" stroke-width="1.700" fill="none"/><path d="M749.6 184.3 L752.7 186.8 L756.2 188.9 L759.8 190.5 L763.5 192.0 L767.2 193.5 L770.9 195.2" stroke="#606060" stroke-width="1.500" fill="none"/><path d="M733.7 170.2 L736.5 173.0 L739.3 175.9 L742.2 178.7 L745.2 181.3 L748.4 183.7 L751.8 185.9 L755.1 188.1" stroke="#808080" stroke-width="1.700" fill="none"/><path d="M755.1 188.1 L758.3 190.5 L761.3 193.1 L764.0 196.1 L766.2 199.4 L768.1 202.9 L769.9 206.5" stroke="#606060" stroke-width="1.500" fill="none"/><path d="M708.6 163.8 L705.2 161.7 L701.8 159.7 L698.2 157.8 L694.5 156.3 L690.7 155.1 L686.8 154.1 L682.9 153.1" stroke="#808080" stroke-width="1.700" fill="none"/><path d="M682.9 153.1 L679.1 151.9 L675.4 150.4 L671.9 148.5 L668.6 146.2 L665.5 143.8 L662.3 141.3" stroke="#606060" stroke-width="1.500" fill="none"/><path d="M826.2 161.3 L827.3 165.1 L828.0 169.1 L828.5 173.0 L829.1 177.0 L829.8 180.9 L831.0 184.8 L832.5 188.5" stroke="#808080" stroke-width="1.700" fill="none"/><path d="M832.5 188.5 L834.5 192.0 L836.6 195.3 L838.8 198.7 L840.9 202.1 L842.7 205.6 L844.2 209.3" stroke="#606060" stroke-width="1.500" fill="none"/><path d="M807.9 174.8 L810.5 177.9 L812.9 181.0 L815.2 184.3 L817.1 187.8 L818.8 191.5 L820.3 195.2 L821.9 198.8" stroke="#808080" stroke-width="1.700" fill="none"/><path d="M821.9 198.8 L823.7 202.4 L825.9 205.8 L828.4 208.9 L831.2 211.7 L834.1 214.4 L837.1 217.2" stroke="#606060" stroke-width="1.500" fill="none"/><path d="M611.0 137.8 L614.2 135.4 L617.2 132.7 L620.0 130.0 L623.0 127.2 L626.0 124.6 L629.2 122.2 L632.5 120.0" stroke="#808080" stroke-width="1.700" fill="none"/><path d="M632.5 120.0 L635.8 117.7 L638.9 115.2 L641.7 112.4 L644.2 109.2 L646.1 105.7 L647.7 102.0" stroke="#606060" stroke-width="1.500" fill="none"/><path d="M632.5 184.0 L628.5 184.5 L624.7 185.5 L620.9 186.8 L617.2 188.3 L613.5 189.8 L609.7 191.2 L605.8 192.2" stroke="#808080" stroke-width="1.700" fill="none"/><path d="M605.8 192.2 L601.9 193.0 L598.0 193.7 L594.1 194.4 L590.2 195.5 L586.5 197.0 L583.0 198.9" stroke="#606060" stroke-width="1.500" fill="none"/><path d="M607.8 214.0 L609.5 217.6 L611.0 221.3 L612.6 225.0 L614.3 228.6 L616.3 232.1 L618.7 235.3 L621.5 238.1" stroke="#808080" stroke-width="1.700" fill="none"/><path d="M621.5 238.1 L624.6 240.7 L627.7 243.1 L630.9 245.6 L634.0 248.2 L636.8 251.0 L639.5 254.0" stroke="#606060" stroke-width="1.500" fill="none"/><path d="M681.1 182.2 L679.0 185.6 L676.9 189.0 L674.8 192.4 L672.4 195.6 L669.7 198.5 L666.6 201.1 L663.2 203.3" stroke="#808080" stroke-width="1.700" fill="none"/><path d="M663.2 203.3 L659.8 205.3 L656.3 207.2 L652.8 209.3 L649.6 211.6 L646.5 214.1 L643.5 216.8" stroke="#606060" stroke-width="1.500" fill="none"/><path d="M713.5 196.7 L709.6 195.9 L705.7 195.0 L701.9 193.7 L698.3 192.1 L694.7 190.3 L691.2 188.3 L687.7 186.5" stroke="#808080" stroke-width="1.700" fill="none"/><path d="M687.7 186.5 L684.0 185.0 L680.1 183.8 L676.2 183.1 L672.2 182.6 L668.2 182.3 L664.3 181.9" stroke="#606060" stroke-width="1.500" fill="none"/><path d="M823.8 217.7 L821.4 220.9 L819.1 224.2 L816.7 227.4 L814.0 230.4 L811.1 233.1 L807.8 235.4 L804.4 237.4" stroke="#808080" stroke-width="1.700" fill="none"/><path d="M804.4 237.4 L800.9 239.3 L797.4 241.3 L794.0 243.4 L790.8 245.9 L787.8 248.5 L785.0 251.3" stroke="#606060" stroke-width="1.500" fill="none"/><path d="M24.4 258.4 L23.9 262.4 L23.6 266.4 L23.2 270.4 L22.6 274.3 L21.4 278.2 L19.8 281.8 L17.8 285.3" stroke="#808080" stroke-width="1.700" fill="none"/><path d="M17.8 285.3 L15.5 288.5 L13.1 291.7 L10.7 295.0 L8.6 298.3 L6.6 301.8 L4.9 305.4" stroke="#606060" stroke-width="1.500" fill="none"/><path d="M37.6 280.4 L38.0 284.4 L37.9 288.4 L37.6 292.4 L37.1 296.4 L36.6 300.4 L36.4 304.4 L36.6 308.3" stroke="#808080" stroke-width="1.700" fill="none"/><path d="M36.6 308.3 L37.3 312.3 L38.1 316.2 L39.1 320.1 L40.0 324.0 L40.6 327.9 L40.8 331.9" stroke="#606060" stroke-width="1.500" fill="none"/><path d="M8.7 281.8 L11.8 279.2 L14.8 276.6 L17.5 273.6 L19.9 270.4 L21.8 266.9 L23.5 263.3 L24.9 259.6" stroke="#808080" stroke-width="1.700" fill="none"/><path d="M24.9 259.6 L26.4 255.8 L28.1 252.2 L30.0 248.7 L32.2 245.4 L34.5 242.1 L36.7 238.8" stroke="#606060" stroke-width="1.500" fill="none"/><path d="M60.0 291.8 L63.5 293.8 L66.8 296.0 L70.0 298.4 L73.1 300.9 L76.1 303.6 L79.2 306.1 L82.6 308.3" stroke="#808080" stroke-width="1.700" fill="none"/><path d="M82.6 308.3 L86.2 310.0 L89.9 311.3 L93.9 312.2 L97.8 312.7 L101.8 313.3 L105.7 313.9" stroke="#606060" stroke-width="1.500" fill="none"/><path d="M106.6 256.4 L107.7 260.3 L109.3 263.9 L111.3 267.4 L113.6 270.7 L115.9 274.0 L118.1 277.3 L120.1 280.8" stroke="#808080" stroke-width="1.700" fill="none"/><path d="M120.1 280.8 L121.8 284.4 L123.3 288.1 L124.9 291.8 L126.6 295.4 L128.6 298.9 L131.1 302.0" stroke="#606060" stroke-width="1.500" fill="none"/><path d="M122.3 253.2 L126.0 254.8 L129.5 256.7 L132.9 258.8 L136.1 261.2 L139.3 263.5 L142.7 265.7 L146.2 267.6" stroke="#808080" stroke-width="1.700" fill="none"/><path d="M146.2 267.6 L149.9 269.1 L153.7 270.2 L157.6 271.1 L161.6 271.9 L165.5 272.8 L169.3 274.0" stroke="#606060" stroke-width="1.500" fill="none"/><path d="M127.6 268.6 L126.7 264.7 L125.9 260.7 L125.0 256.8 L123.9 253.0 L122.6 249.2 L121.2 245.5 L120.0 241.7" stroke="#808080" stroke-width="1.700" fill="none"/><path d="M120.0 241.7 L119.0 237.8 L118.6 233.8 L118.8 229.8 L119.5 225.9 L120.6 222.0 L121.8 218.2" stroke="#606060" stroke-width="1.500" fill="none"/><path d="M111.8 314.7 L113.4 311.1 L114.6 307.2 L115.5 303.3 L116.3 299.4 L117.1 295.5 L118.2 291.7 L119.7 287.9" stroke="#808080" stroke-width="1.700" fill="none"/><path d="M119.7 287.9 L121.4 284.3 L123.3 280.8 L125.1 277.2 L126.7 273.6 L128.0 269.8 L128.8 265.9" stroke="#606060" stroke-width="1.500" fill="none"/><path d="M143.2 289.4 L141.2 292.9 L139.4 296.4 L137.7 300.1 L136.3 303.8 L134.9 307.6 L133.4 311.2 L131.5 314.8" stroke="#808080" stroke-width="1.700" fill="none"/><path d="M131.5 314.8 L129.2 318.1 L126.5 321.0 L123.4 323.6 L120.2 325.9 L116.9 328.2 L113.6 330.5" stroke="#606060" stroke-width="1.500" fill="none"/><path d="M113.0 323.4 L113.5 327.4 L113.8 331.4 L113.9 335.4 L114.0 339.4 L114.2 343.4 L114.8 347.3 L116.0 351.2" stroke="#808080" stroke-width="1.700" fill="none"/><path d="M116.0 351.2 L117.6 354.8 L119.7 358.3 L122.0 361.5 L124.4 364.7 L126.7 368.0 L128.8 371.4" stroke="#606060" stroke-width="1.500" fill="none"/><path d="M125.8 332.7 L122.9 335.5 L120.0 338.3 L117.2 341.1 L114.5 344.0 L112.1 347.2 L109.9 350.6 L107.8 354.0" stroke="#808080" stroke-width="1.700" fill="none"/><path d="M107.8 354.0 L105.7 357.4 L103.3 360.6 L100.7 363.6 L97.6 366.2 L94.4 368.5 L91.0 370.7" stroke="#606060" stroke-width="1.500" fill="none"/><path d="M137.6 334.5 L137.1 338.5 L136.2 342.4 L135.0 346.2 L133.7 350.0 L132.5 353.8 L131.6 357.7 L131.0 361.6" stroke="#808080" stroke-width="1.700" fill="none"/><path d="M131.0 361.6 L130.6 365.6 L130.4 369.6 L130.0 373.6 L129.3 377.5 L128.1 381.4 L126.5 385.0" stroke="#606060" stroke-width="1.500" fill="none"/><path d="M201.8 341.1 L198.7 338.6 L195.8 335.8 L193.3 332.7 L191.1 329.4 L188.9 326.0 L186.8 322.6 L184.4 319.4" stroke="#808080" stroke-width="1.700" fill="none"/><path d="M184.4 319.4 L181.8 316.4 L178.9 313.7 L175.8 311.0 L172.8 308.4 L169.9 305.7 L167.3 302.6" stroke="#606060" stroke-width="1.500" fill="none"/><path d="M153.2 358.9 L149.9 361.1 L146.3 362.9 L142.7 364.6 L139.1 366.4 L135.6 368.4 L132.3 370.6 L129.1 373.0" stroke="#808080" stroke-width="1.700" fill="none"/><path d="M129.1 373.0 L125.9 375.4 L122.6 377.6 L119.1 379.6 L115.4 381.0 L111.5 382.0 L107.5 382.6" stroke="#606060" stroke-width="1.500" fill="none"/><path d="M156.0 347.5 L156.5 351.5 L157.5 355.3 L158.8 359.1 L160.1 362.9 L161.4 366.7 L162.4 370.6 L163.2 374.5" stroke="#808080" stroke-width="1.700" fill="none"/><path d="M163.2 374.5 L163.8 378.4 L164.3 382.4 L165.0 386.3 L166.2 390.2 L167.8 393.8 L169.8 397.3" stroke="#606060" stroke-width="1.500" fill="none"/><path d="M217.6 253.5 L220.9 251.2 L224.3 249.2 L227.9 247.4 L231.6 245.9 L235.4 244.5 L239.0 242.9 L242.6 241.0" stroke="#808080" stroke-width="1.700" fill="none"/><path d="M242.6 241.0 L245.8 238.7 L248.9 236.1 L251.7 233.3 L254.5 230.5 L257.4 227.7 L260.5 225.1" stroke="#606060" stroke-width="1.500" fill="none"/><path d="M267.2 252.4 L270.5 254.8 L273.5 257.4 L276.4 260.2 L279.1 263.1 L281.8 266.1 L284.6 268.9 L287.6 271.5" stroke="#808080" stroke-width="1.700" fill="none"/><path d="M287.6 271.5 L291.0 273.7 L294.6 275.5 L298.3 276.9 L302.1 278.3 L305.8 279.6 L309.5 281.2" stroke="#606060" stroke-width="1.500" fill="none"/><path d="M273.9 318.5 L274.2 314.5 L274.4 310.5 L274.5 306.5 L274.9 302.6 L275.6 298.6 L276.8 294.8 L278.3 291.1" stroke="#808080" stroke-width="1.700" fill="none"/><path d="M278.3 291.1 L280.1 287.5 L281.9 283.9 L283.5 280.3 L284.9 276.5 L285.9 272.7 L286.6 268.7" stroke="#606060" stroke-width="1.500" fill="none"/><path d="M204.3 279.3 L202.3 282.8 L200.1 286.1 L198.0 289.5 L196.1 293.1 L194.6 296.8 L193.3 300.5 L192.1 304.4" stroke="#808080" stroke-width="1.700" fill="none"/><path d="M192.1 304.4 L190.8 308.2 L189.3 311.9 L187.4 315.4 L185.1 318.6 L182.5 321.7 L179.7 324.6" stroke="#606060" stroke-width="1.500" fill="none"/><path d="M243.5 333.3 L239.7 332.1 L235.9 330.9 L232.0 329.9 L228.1 329.1 L224.1 328.8 L220.1 328.8 L216.1 328.9" stroke="#808080" stroke-width="1.700" fill="none"/><path d="M216.1 328.9 L212.1 329.0 L208.1 328.8 L204.2 328.2 L200.3 327.3 L196.5 326.0 L192.7 324.6" stroke="#606060" stroke-width="1.500" fill="none"/><path d="M203.6 354.5 L206.9 356.8 L210.3 358.9 L213.9 360.6 L217.6 362.2 L221.2 363.9 L224.8 365.7 L228.1 367.9" stroke="#808080" stroke-width="1.700" fill="none"/><path d="M228.1 367.9 L231.2 370.5 L233.9 373.4 L236.5 376.4 L239.0 379.5 L241.6 382.6 L244.5 385.4" stroke="#606060" stroke-width="1.500" fill="none"/><path d="M204.2 346.4 L204.7 350.4 L204.9 354.4 L205.0 358.4 L205.0 362.4 L205.1 366.4 L205.7 370.4 L206.7 374.2" stroke="#808080" stroke-width="1.700" fill="none"/><path d="M206.7 374.2 L208.2 377.9 L210.2 381.4 L212.3 384.8 L214.5 388.1 L216.6 391.5 L218.5 395.1" stroke="#606060" stroke-width="1.500" fill="none"/><path d="M38.6 370.6 L40.3 367.0 L41.9 363.3 L43.2 359.6 L44.3 355.7 L44.9 351.8 L45.4 347.8 L45.8 343.8" stroke="#808080" stroke-width="1.700" fill="none"/><path d="M45.8 343.8 L46.4 339.8 L47.4 336.0 L48.7 332.2 L50.4 328.6 L52.4 325.1 L54.3 321.6" stroke="#606060" stroke-width="1.500" fill="none"/><path d="M44.3 422.8 L40.8 420.9 L37.1 419.4 L33.3 418.2 L29.4 417.5 L25.4 416.9 L21.5 416.2 L17.6 415.3" stroke="#808080" stroke-width="1.700" fill="none"/><path d="M17.6 415.3 L13.8 414.1 L10.1 412.5 L6.5 410.8 L2.8 409.1 L-0.9 407.6 L-4.7 406.4" stroke="#606060" stroke-width="1.500" fill="none"/><path d="M59.4 465.0 L63.0 463.2 L66.4 461.2 L69.6 458.8 L72.5 456.0 L75.3 453.1 L77.9 450.2 L80.7 447.3" stroke="#808080" stroke-width="1.700" fill="none"/><path d="M80.7 447.3 L83.7 444.6 L86.9 442.3 L90.3 440.1 L93.8 438.2 L97.3 436.2 L100.6 433.9" stroke="#606060" stroke-width="1.500" fill="none"/><path d="M39.6 455.3 L41.0 459.0 L42.3 462.8 L43.3 466.7 L44.2 470.6 L45.0 474.5 L46.0 478.4 L47.3 482.2" stroke="#808080" stroke-width="1.700" fill="none"/><path d="M47.3 482.2 L49.2 485.7 L51.5 489.0 L54.2 491.9 L57.1 494.6 L60.2 497.2 L63.1 499.9" stroke="#606060" stroke-width="1.500" fill="none"/><path d="M115.3 403.5 L116.2 399.6 L117.5 395.9 L119.3 392.3 L121.5 388.9 L124.1 385.9 L126.9 383.0 L129.7 380.2" stroke="#808080" stroke-width="1.700" fill="none"/><path d="M129.7 380.2 L132.5 377.3 L135.1 374.3 L137.5 371.1 L139.8 367.8 L142.1 364.6 L144.7 361.5" stroke="#606060" stroke-width="1.500" fill="none"/><path d="M92.5 368.0 L96.5 368.1 L100.5 368.2 L104.5 368.0 L108.4 367.4 L112.3 366.2 L116.0 364.7 L119.5 362.9" stroke="#808080" stroke-width="1.700" fill="none"/><path d="M119.5 362.9 L123.1 361.0 L126.7 359.3 L130.4 357.8 L134.2 356.6 L138.1 355.5 L141.9 354.5" stroke="#606060" stroke-width="1.500" fill="none"/><path d="M129.6 448.6 L125.9 450.0 L122.2 451.7 L118.7 453.5 L115.2 455.6 L111.8 457.6 L108.3 459.5 L104.6 461.1" stroke="#808080" stroke-width="1.700" fill="none"/><path d="M104.6 461.1 L100.8 462.2 L96.8 462.7 L92.8 462.7 L88.8 462.5 L84.8 462.1 L80.8 461.9" stroke="#606060" stroke-width="1.500" fill="none"/><path d="M168.1 425.6 L169.9 422.0 L172.1 418.7 L174.7 415.6 L177.3 412.6 L179.9 409.6 L182.4 406.4 L184.6 403.1" stroke="#808080" stroke-width="1.700" fill="none"/><path d="M184.6 403.1 L186.7 399.7 L188.8 396.3 L191.1 393.0 L193.6 389.9 L196.6 387.2 L199.9 384.9" stroke="#606060" stroke-width="1.500" fill="none"/><path d="M184.0 394.8 L187.5 396.8 L190.8 399.1 L193.9 401.5 L197.0 404.1 L200.1 406.7 L203.3 409.1 L206.7 411.1" stroke="#808080" stroke-width="1.700" fill="none"/><path d="M206.7 411.1 L210.3 412.7 L214.2 413.8 L218.1 414.5 L222.1 414.9 L226.1 415.4 L230.0 416.0" stroke="#606060" stroke-width="1.500" fill="none"/><path d="M283.8 376.5 L283.0 372.6 L281.9 368.7 L280.8 364.9 L280.0 361.0 L279.5 357.0 L279.3 353.0 L279.5 349.0" stroke="#808080" stroke-width="1.700" fill="none"/><path d="M279.5 349.0 L279.8 345.0 L280.0 341.0 L279.9 337.0 L279.4 333.1 L278.5 329.2 L277.3 325.3" stroke="#606060" stroke-width="1.500" fill="none"/><path d="M276.2 410.5 L279.1 413.3 L281.7 416.3 L284.1 419.5 L286.5 422.7 L289.0 425.8 L291.7 428.8 L294.7 431.4" stroke="#808080" stroke-width="1.700" fill="none"/><path d="M294.7 431.4 L297.9 433.9 L301.1 436.2 L304.4 438.5 L307.5 441.0 L310.3 443.9 L312.8 447.0" stroke="#606060" stroke-width="1.500" fill="none"/><path d="M294.7 431.2 L291.1 432.9 L287.6 434.8 L284.1 436.7 L280.5 438.5 L276.7 439.9 L272.9 441.0 L268.9 441.7" stroke="#808080" stroke-width="1.700" fill="none"/><path d="M268.9 441.7 L265.0 442.4 L261.1 443.1 L257.2 444.2 L253.5 445.6 L249.9 447.4 L246.5 449.5" stroke="#606060" stroke-width="1.500" fill="none"/><path d="M224.3 458.2 L228.2 459.2 L232.1 459.9 L236.1 460.5 L240.0 461.1 L243.9 462.0 L247.7 463.2 L251.4 464.9" stroke="#808080" stroke-width="1.700" fill="none"/><path d="M251.4 464.9 L254.9 466.8 L258.3 468.9 L261.8 470.8 L265.3 472.6 L269.1 474.0 L272.9 475.1" stroke="#606060" stroke-width="1.500" fill="none"/><path d="M247.2 466.7 L249.8 469.8 L252.4 472.8 L255.2 475.6 L258.4 478.1 L261.8 480.2 L265.3 482.1 L268.9 483.8" stroke="#808080" stroke-width="1.700" fill="none"/><path d="M268.9 483.8 L272.5 485.6 L275.9 487.7 L279.1 490.1 L282.1 492.7 L285.1 495.4 L288.0 498.1" stroke="#606060" stroke-width="1.500" fill="none"/><path d="M241.3 470.8 L245.0 469.3 L248.6 467.7 L252.4 466.2 L256.2 465.1 L260.2 464.6 L264.2 464.6 L268.2 465.0" stroke="#808080" stroke-width="1.700" fill="none"/><path d="M268.2 465.0 L272.1 465.8 L276.0 466.8 L279.9 467.6 L283.8 468.2 L287.8 468.7 L291.8 468.9" stroke="#606060" stroke-width="1.500" fill="none"/><path d="M311.8 263.9 L308.5 266.2 L305.0 268.1 L301.4 269.9 L297.8 271.6 L294.3 273.5 L291.0 275.8 L287.9 278.4" stroke="#808080" stroke-width="1.700" fill="none"/><path d="M287.9 278.4 L285.2 281.2 L282.6 284.3 L280.1 287.4 L277.4 290.4 L274.6 293.2 L271.5 295.8" stroke="#606060" stroke-width="1.500" fill="none"/><path d="M385.0 253.8 L382.2 251.1 L379.1 248.5 L376.0 246.0 L372.9 243.4 L370.1 240.6 L367.5 237.6 L365.0 234.4" stroke="#808080" stroke-width="1.700" fill="none"/><path d="M365.0 234.4 L362.6 231.2 L360.1 228.1 L357.2 225.3 L354.1 222.8 L350.7 220.7 L347.2 218.9" stroke="#606060" stroke-width="1.500" fill="none"/><path d="M378.5 257.6 L382.5 257.4 L386.5 256.8 L390.3 255.9 L394.2 254.7 L397.9 253.4 L401.8 252.2 L405.6 251.3" stroke="#808080" stroke-width="1.700" fill="none"/><path d="M405.6 251.3 L409.6 250.8 L413.6 250.6 L417.6 250.8 L421.6 251.1 L425.6 251.2 L429.6 251.0" stroke="#606060" stroke-width="1.500" fill="none"/><path d="M478.4 278.8 L480.4 275.3 L482.0 271.6 L483.4 267.9 L484.9 264.1 L486.5 260.5 L488.5 257.0 L490.8 253.7" stroke="#808080" stroke-width="1.700" fill="none"/><path d="M490.8 253.7 L493.4 250.7 L496.1 247.8 L498.8 244.8 L501.3 241.7 L503.6 238.4 L505.5 234.9" stroke="#606060" stroke-width="1.500" fill="none"/><path d="M462.5 285.6 L466.5 285.1 L470.4 284.3 L474.3 283.4 L478.2 282.6 L482.2 282.0 L486.1 281.7 L490.1 281.5" stroke="#808080" stroke-width="1.700" fill="none"/><path d="M490.1 281.5 L494.1 281.3 L498.1 280.8 L502.0 279.9 L505.8 278.6 L509.3 276.7 L512.6 274.5" stroke="#606060" stroke-width="1.500" fill="none"/><path d="M454.5 299.6 L458.5 299.9 L462.4 300.6 L466.2 301.8 L469.9 303.4 L473.3 305.4 L476.7 307.6 L480.1 309.7" stroke="#808080" stroke-width="1.700" fill="none"/><path d="M480.1 309.7 L483.6 311.6 L487.3 313.3 L491.0 314.8 L494.7 316.2 L498.4 317.8 L501.9 319.7" stroke="#606060" stroke-width="1.500" fill="none"/><path d="M392.5 306.0 L396.5 306.1 L400.5 306.5 L404.4 307.2 L408.3 308.1 L412.2 309.1 L416.1 309.9 L420.1 310.4" stroke="#808080" stroke-width="1.700" fill="none"/><path d="M420.1 310.4 L424.1 310.4 L428.1 310.0 L432.0 309.2 L435.8 308.1 L439.7 307.2 L443.6 306.4" stroke="#606060" stroke-width="1.500" fill="none"/><path d="M310.4 294.4 L310.1 298.4 L310.3 302.4 L311.0 306.4 L312.0 310.2 L313.2 314.1 L314.2 317.9 L315.0 321.9" stroke="#808080" stroke-width="1.700" fill="none"/><path d="M315.0 321.9 L315.6 325.8 L315.9 329.8 L316.1 333.8 L316.5 337.8 L317.2 341.7 L318.4 345.5" stroke="#606060" stroke-width="1.500" fill="none"/><path d="M363.9 287.0 L363.0 290.9 L362.5 294.9 L362.2 298.9 L362.0 302.9 L361.6 306.9 L360.9 310.8 L359.7 314.6" stroke="#808080" stroke-width="1.700" fill="none"/><path d="M359.7 314.6 L358.3 318.3 L356.7 322.0 L355.0 325.7 L353.6 329.4 L352.6 333.3 L351.9 337.2" stroke="#606060" stroke-width="1.500" fill="none"/><path d="M380.6 329.6 L376.6 330.2 L372.6 330.7 L368.7 331.6 L364.9 332.9 L361.3 334.6 L357.9 336.7 L354.6 339.0" stroke="#808080" stroke-width="1.700" fill="none"/><path d="M354.6 339.0 L351.4 341.3 L348.1 343.6 L344.6 345.5 L341.0 347.3 L337.3 348.8 L333.6 350.2" stroke="#606060" stroke-width="1.500" fill="none"/><path d="M414.7 327.2 L411.2 329.0 L407.8 331.3 L404.8 333.8 L401.8 336.5 L398.8 339.2 L395.7 341.7 L392.4 344.0" stroke="#808080" stroke-width="1.700" fill="none"/><path d="M392.4 344.0 L389.0 346.0 L385.5 348.0 L382.1 350.1 L378.9 352.4 L375.9 355.1 L373.3 358.1" stroke="#606060" stroke-width="1.500" fill="none"/><path d="M417.7 344.6 L421.6 345.6 L425.5 346.4 L429.4 347.0 L433.4 347.8 L437.2 348.9 L440.9 350.4 L444.4 352.3" stroke="#808080" stroke-width="1.700" fill="none"/><path d="M444.4 352.3 L447.8 354.4 L451.2 356.6 L454.6 358.6 L458.2 360.4 L461.9 361.8 L465.8 363.0" stroke="#606060" stroke-width="1.500" fill="none"/><path d="M350.2 369.6 L346.7 371.4 L343.1 373.2 L339.3 374.6 L335.5 375.7 L331.5 376.2 L327.5 376.3 L323.5 376.1" stroke="#808080" stroke-width="1.700" fill="none"/><path d="M323.5 376.1 L319.5 375.7 L315.6 375.5 L311.6 375.5 L307.6 375.8 L303.6 376.3 L299.6 376.8" stroke="#606060" stroke-width="1.500" fill="none"/><path d="M333.3 386.6 L337.1 387.7 L341.1 388.4 L345.1 388.6 L349.1 388.3 L353.0 387.8 L357.0 387.3 L361.0 386.9" stroke="#808080" stroke-width="1.700" fill="none"/><path d="M361.0 386.9 L365.0 386.7 L369.0 386.9 L372.9 387.3 L376.9 387.7 L380.9 387.9 L384.9 387.8" stroke="#606060" stroke-width="1.500" fill="none"/><path d="M529.4 299.4 L527.8 303.0 L526.3 306.8 L525.2 310.6 L524.6 314.6 L524.5 318.6 L524.8 322.5 L525.4 326.5" stroke="#808080" stroke-width="1.700" fill="none"/><path d="M525.4 326.5 L525.9 330.5 L526.3 334.5 L526.4 338.5 L526.3 342.5 L526.1 346.4 L525.9 350.4" stroke="#606060" stroke-width="1.500" fill="none"/><path d="M584.5 292.1 L580.6 292.9 L576.8 294.2 L573.2 295.9 L569.6 297.7 L566.0 299.5 L562.4 301.1 L558.6 302.5" stroke="#808080" stroke-width="1.700" fill="none"/><path d="M558.6 302.5 L554.8 303.8 L551.0 305.0 L547.3 306.5 L543.8 308.4 L540.5 310.7 L537.6 313.5" stroke="#606060" stroke-width="1.500" fill="none"/><path d="M467.3 359.8 L471.2 358.9 L475.1 358.2 L479.1 357.8 L483.1 357.3 L487.0 356.5 L490.8 355.4 L494.6 354.0" stroke="#808080" stroke-width="1.700" fill="none"/><path d="M494.6 354.0 L498.3 352.4 L501.9 350.8 L505.7 349.4 L509.5 348.4 L513.5 347.7 L517.5 347.5" stroke="#606060" stroke-width="1.500" fill="none"/><path d="M495.8 365.0 L498.1 361.7 L500.7 358.7 L503.4 355.7 L506.1 352.8 L508.7 349.8 L511.0 346.5 L512.9 342.9" stroke="#808080" stroke-width="1.700" fill="none"/><path d="M512.9 342.9 L514.5 339.3 L515.9 335.5 L517.4 331.8 L519.0 328.2 L521.0 324.7 L523.3 321.5" stroke="#606060" stroke-width="1.500" fill="none"/><path d="M522.5 378.5 L519.9 375.5 L517.5 372.3 L515.2 369.0 L512.9 365.7 L510.5 362.5 L507.9 359.6 L504.8 357.0" stroke="#808080" stroke-width="1.700" fill="none"/><path d="M504.8 357.0 L501.5 354.8 L497.9 352.9 L494.3 351.2 L490.7 349.5 L487.2 347.6 L483.8 345.4" stroke="#606060" stroke-width="1.500" fill="none"/><path d="M515.4 399.4 L519.4 398.9 L523.4 398.5 L527.3 397.8 L531.2 396.9 L535.1 395.8 L538.9 394.5 L542.7 393.3" stroke="#808080" stroke-width="1.700" fill="none"/><path d="M542.7 393.3 L546.5 392.3 L550.5 391.8 L554.5 391.7 L558.5 392.2 L562.4 392.9 L566.3 393.8" stroke="#606060" stroke-width="1.500" fill="none"/><path d="M305.1 429.0 L309.1 428.5 L313.0 427.8 L316.9 427.0 L320.8 426.2 L324.8 425.8 L328.8 425.5 L332.8 425.5" stroke="#808080" stroke-width="1.700" fill="none"/><path d="M332.8 425.5 L336.8 425.3 L340.8 425.0 L344.7 424.2 L348.5 422.8 L352.1 421.0 L355.5 418.9" stroke="#606060" stroke-width="1.500" fill="none"/><path d="M433.6 460.4 L434.1 464.4 L434.6 468.4 L435.3 472.3 L436.3 476.2 L437.9 479.9 L440.0 483.3 L442.4 486.4" stroke="#808080" stroke-width="1.700" fill="none"/><path d="M442.4 486.4 L445.1 489.4 L447.9 492.2 L450.7 495.2 L453.2 498.3 L455.6 501.5 L457.9 504.7" stroke="#606060" stroke-width="1.500" fill="none"/><path d="M574.4 452.6 L575.9 448.8 L577.7 445.2 L579.7 441.8 L582.0 438.5 L584.3 435.2 L586.3 431.8 L588.1 428.2" stroke="#808080" stroke-width="1.700" fill="none"/><path d="M588.1 428.2 L589.5 424.5 L590.5 420.6 L591.4 416.7 L592.3 412.8 L593.4 409.0 L594.9 405.3" stroke="#606060" stroke-width="1.500" fill="none"/><path d="M548.5 440.7 L544.6 440.2 L540.6 440.1 L536.6 440.5 L532.7 441.3 L528.8 442.2 L524.8 443.0 L520.9 443.6" stroke="#808080" stroke-width="1.700" fill="none"/><path d="M520.9 443.6 L516.9 443.8 L512.9 443.8 L508.9 443.6 L504.9 443.5 L500.9 443.6 L496.9 444.2" stroke="#606060" stroke-width="1.500" fill="none"/><path d="M535.0 438.8 L538.4 440.8 L541.9 442.9 L545.5 444.7 L549.1 446.2 L552.9 447.7 L556.6 449.1 L560.2 450.8" stroke="#808080" stroke-width="1.700" fill="none"/><path d="M560.2 450.8 L563.6 452.9 L566.8 455.4 L569.5 458.3 L572.0 461.5 L574.3 464.7 L576.6 468.0" stroke="#606060" stroke-width="1.500" fill="none"/><path d="M488.2 461.7 L489.8 458.0 L491.7 454.5 L493.9 451.2 L496.1 447.9 L498.4 444.6 L500.4 441.1 L502.0 437.4" stroke="#808080" stroke-width="1.700" fill="none"/><path d="M502.0 437.4 L503.2 433.6 L504.1 429.7 L504.7 425.8 L505.2 421.8 L506.0 417.9 L507.1 414.0" stroke="#606060" stroke-width="1.500" fill="none"/><path d="M650.5 246.1 L646.5 246.7 L642.6 247.6 L638.8 248.7 L635.0 249.8 L631.1 250.8 L627.1 251.4 L623.1 251.5" stroke="#808080" stroke-width="1.700" fill="none"/><path d="M623.1 251.5 L619.1 251.1 L615.2 250.3 L611.3 249.4 L607.4 248.5 L603.5 247.8 L599.5 247.4" stroke="#606060" stroke-width="1.500" fill="none"/><path d="M674.8 248.6 L677.1 251.8 L679.9 254.8 L682.8 257.5 L685.8 260.2 L688.7 262.9 L691.4 265.9 L693.8 269.0" stroke="#808080" stroke-width="1.700" fill="none"/><path d="M693.8 269.0 L696.1 272.3 L698.2 275.7 L700.5 279.0 L703.0 282.1 L705.9 284.9 L709.0 287.4" stroke="#606060" stroke-width="1.500" fill="none"/><path d="M660.0 260.8 L663.7 262.4 L667.4 263.8 L671.2 265.2 L674.9 266.6 L678.5 268.4 L681.9 270.5 L685.1 272.9" stroke="#808080" stroke-width="1.700" fill="none"/><path d="M685.1 272.9 L688.2 275.5 L691.2 278.0 L694.4 280.4 L697.8 282.5 L701.4 284.3 L705.2 285.7" stroke="#606060" stroke-width="1.500" fill="none"/><path d="M635.3 269.6 L639.0 271.1 L642.8 272.4 L646.6 273.5 L650.5 274.3 L654.5 274.9 L658.5 275.3 L662.4 275.9" stroke="#808080" stroke-width="1.700" fill="none"/><path d="M662.4 275.9 L666.3 276.7 L670.1 278.0 L673.7 279.8 L677.2 281.8 L680.5 284.1 L683.8 286.3" stroke="#606060" stroke-width="1.500" fill="none"/><path d="M623.5 280.6 L619.5 280.2 L615.6 279.2 L611.9 277.8 L608.3 276.0 L604.8 274.2 L601.2 272.4 L597.5 270.8" stroke="#808080" stroke-width="1.700" fill="none"/><path d="M597.5 270.8 L593.7 269.5 L589.9 268.4 L586.0 267.3 L582.2 266.0 L578.6 264.4 L575.2 262.3" stroke="#606060" stroke-width="1.500" fill="none"/><path d="M649.9 290.6 L653.9 290.2 L657.8 289.3 L661.6 288.1 L665.4 286.8 L669.2 285.6 L673.1 284.6 L677.0 284.0" stroke="#808080" stroke-width="1.700" fill="none"/><path d="M677.0 284.0 L681.0 283.7 L685.0 283.5 L689.0 283.3 L693.0 282.8 L696.9 281.9 L700.6 280.5" stroke="#606060" stroke-width="1.500" fill="none"/><path d="M721.0 292.5 L720.6 296.5 L720.0 300.4 L719.4 304.4 L718.9 308.4 L718.8 312.4 L718.9 316.4 L719.1 320.4" stroke="#808080" stroke-width="1.700" fill="none"/><path d="M719.1 320.4 L719.2 324.3 L719.1 328.3 L718.5 332.3 L717.4 336.1 L715.8 339.8 L714.0 343.4" stroke="#606060" stroke-width="1.500" fill="none"/><path d="M811.9 281.8 L813.8 278.3 L815.3 274.6 L816.6 270.8 L817.7 266.9 L819.0 263.2 L820.6 259.5 L822.4 255.9" stroke="#808080" stroke-width="1.700" fill="none"/><path d="M822.4 255.9 L824.4 252.5 L826.5 249.1 L828.5 245.6 L830.2 242.0 L831.4 238.2 L832.2 234.2" stroke="#606060" stroke-width="1.500" fill="none"/><path d="M842.0 308.5 L842.3 312.5 L842.8 316.5 L843.3 320.4 L843.5 324.4 L843.4 328.4 L842.8 332.4 L841.8 336.3" stroke="#808080" stroke-width="1.700" fill="none"/><path d="M841.8 336.3 L840.7 340.1 L839.6 344.0 L838.7 347.9 L838.2 351.8 L838.1 355.8 L838.1 359.8" stroke="#606060" stroke-width="1.500" fill="none"/><path d="M685.4 330.5 L686.3 326.7 L687.4 322.8 L688.8 319.1 L690.6 315.5 L692.7 312.1 L695.0 308.8 L697.2 305.5" stroke="#808080" stroke-width="1.700" fill="none"/><path d="M697.2 305.5 L699.3 302.1 L701.1 298.5 L702.5 294.8 L703.6 290.9 L704.6 287.0 L705.7 283.2" stroke="#606060" stroke-width="1.500" fill="none"/><path d="M711.4 310.5 L708.9 307.4 L706.7 304.0 L704.6 300.6 L702.5 297.2 L700.3 293.9 L697.7 290.8 L694.8 288.1" stroke="#808080" stroke-width="1.700" fill="none"/><path d="M694.8 288.1 L691.7 285.6 L688.5 283.2 L685.3 280.8 L682.2 278.2 L679.4 275.4 L676.8 272.3" stroke="#606060" stroke-width="1.500" fill="none"/><path d="M666.5 342.1 L670.5 342.2 L674.5 341.9 L678.5 341.4 L682.4 340.7 L686.3 340.1 L690.3 339.7 L694.3 339.7" stroke="#808080" stroke-width="1.700" fill="none"/><path d="M694.3 339.7 L698.3 340.2 L702.2 341.1 L706.0 342.3 L709.8 343.6 L713.6 344.8 L717.5 345.7" stroke="#606060" stroke-width="1.500" fill="none"/><path d="M703.3 353.2 L706.7 351.1 L710.2 349.2 L713.8 347.5 L717.7 346.4 L721.6 345.8 L725.6 345.6 L729.6 345.8" stroke="#808080" stroke-width="1.700" fill="none"/><path d="M729.6 345.8 L733.6 346.0 L737.6 346.1 L741.6 346.0 L745.6 345.6 L749.6 345.1 L753.5 344.7" stroke="#606060" stroke-width="1.500" fill="none"/><path d="M616.2 351.0 L614.2 354.5 L611.9 357.8 L609.3 360.8 L606.5 363.6 L603.4 366.1 L600.2 368.6 L597.2 371.2" stroke="#808080" stroke-width="1.700" fill="none"/><path d="M597.2 371.2 L594.3 373.9 L591.6 376.9 L589.3 380.2 L587.1 383.5 L585.0 386.9 L582.7 390.2" stroke="#606060" stroke-width="1.500" fill="none"/><path d="M646.0 398.9 L643.1 396.1 L640.0 393.6 L636.6 391.5 L632.9 389.9 L629.2 388.5 L625.4 387.2 L621.7 385.8" stroke="#808080" stroke-width="1.700" fill="none"/><path d="M621.7 385.8 L618.0 384.1 L614.5 382.2 L611.1 380.1 L607.7 377.9 L604.3 375.9 L600.7 374.2" stroke="#606060" stroke-width="1.500" fill="none"/><path d="M671.5 403.9 L667.7 404.9 L663.9 406.2 L660.2 407.9 L656.8 409.9 L653.4 412.1 L650.1 414.2 L646.6 416.2" stroke="#808080" stroke-width="1.700" fill="none"/><path d="M646.6 416.2 L643.0 417.9 L639.2 419.2 L635.3 420.2 L631.4 421.1 L627.5 422.0 L623.7 423.1" stroke="#606060" stroke-width="1.500" fill="none"/><path d="M717.5 397.6 L713.5 397.4 L709.5 397.1 L705.5 396.9 L701.5 397.0 L697.6 397.7 L693.7 398.8 L690.1 400.4" stroke="#808080" stroke-width="1.700" fill="none"/><path d="M690.1 400.4 L686.5 402.3 L683.1 404.2 L679.5 406.1 L675.9 407.7 L672.1 409.1 L668.3 410.4" stroke="#606060" stroke-width="1.500" fill="none"/><path d="M614.0 396.5 L613.7 392.5 L613.0 388.6 L612.1 384.7 L611.0 380.8 L610.1 376.9 L609.4 373.0 L609.2 369.0" stroke="#808080" stroke-width="1.700" fill="none"/><path d="M609.2 369.0 L609.4 365.0 L609.9 361.0 L610.5 357.1 L611.1 353.1 L611.4 349.1 L611.4 345.1" stroke="#606060" stroke-width="1.500" fill="none"/><path d="M755.4 344.9 L759.1 346.5 L762.6 348.4 L766.0 350.6 L769.2 352.9 L772.4 355.3 L775.8 357.5 L779.3 359.4" stroke="#808080" stroke-width="1.700" fill="none"/><path d="M779.3 359.4 L783.0 360.9 L786.8 362.0 L790.8 362.8 L794.7 363.4 L798.6 364.2 L802.5 365.2" stroke="#606060" stroke-width="1.500" fill="none"/><path d="M842.6 384.4 L838.6 385.2 L834.7 385.6 L830.7 385.7 L826.7 385.6 L822.7 385.4 L818.7 385.5 L814.7 385.9" stroke="#808080" stroke-width="1.700" fill="none"/><path d="M814.7 385.9 L810.8 386.7 L806.9 387.8 L803.2 389.1 L799.4 390.4 L795.5 391.5 L791.6 392.2" stroke="#606060" stroke-width="1.500" fill="none"/><path d="M827.0 338.5 L827.0 334.5 L826.8 330.5 L826.2 326.5 L825.4 322.6 L824.4 318.8 L823.4 314.9 L822.7 311.0" stroke="#808080" stroke-width="1.700" fill="none"/><path d="M822.7 311.0 L822.3 307.0 L822.4 303.0 L823.0 299.0 L823.8 295.1 L824.7 291.2 L825.5 287.3" stroke="#606060" stroke-width="1.500" fill="none"/><path d="M825.0 348.5 L824.6 344.5 L823.9 340.6 L823.2 336.6 L822.6 332.7 L822.4 328.7 L822.4 324.7 L822.7 320.7" stroke="#808080" stroke-width="1.700" fill="none"/><path d="M822.7 320.7 L823.1 316.7 L823.3 312.7 L823.2 308.7 L822.6 304.8 L821.6 300.9 L820.2 297.1" stroke="#606060" stroke-width="1.500" fill="none"/><path d="M846.2 347.0 L844.3 350.5 L842.1 353.9 L839.7 357.1 L836.9 359.9 L833.7 362.3 L830.2 364.3 L826.6 366.0" stroke="#808080" stroke-width="1.700" fill="none"/><path d="M826.6 366.0 L823.0 367.7 L819.4 369.5 L815.9 371.5 L812.6 373.7 L809.3 376.0 L806.0 378.2" stroke="#606060" stroke-width="1.500" fill="none"/><path d="M846.8 356.7 L843.9 359.5 L840.8 362.0 L837.3 363.9 L833.6 365.4 L829.8 366.6 L825.9 367.6 L822.0 368.7" stroke="#808080" stroke-width="1.700" fill="none"/><path d="M822.0 368.7 L818.2 369.9 L814.5 371.3 L810.8 372.9 L807.1 374.4 L803.3 375.7 L799.4 376.6" stroke="#606060" stroke-width="1.500" fill="none"/><path d="M848.0 365.5 L847.9 369.5 L848.0 373.5 L848.3 377.5 L849.1 381.4 L850.3 385.2 L851.8 388.9 L853.4 392.6" stroke="#808080" stroke-width="1.700" fill="none"/><path d="M853.4 392.6 L854.9 396.3 L856.1 400.1 L856.9 404.0 L857.5 408.0 L857.9 412.0 L858.3 416.0" stroke="#606060" stroke-width="1.500" fill="none"/><path d="M844.8 374.7 L843.0 371.1 L840.8 367.8 L838.4 364.6 L835.9 361.5 L833.5 358.3 L831.4 354.9 L829.5 351.4" stroke="#808080" stroke-width="1.700" fill="none"/><path d="M829.5 351.4 L827.8 347.7 L826.2 344.1 L824.4 340.5 L822.3 337.1 L819.8 333.9 L817.0 331.1" stroke="#606060" stroke-width="1.500" fill="none"/><path d="M780.5 386.4 L779.4 390.3 L778.3 394.1 L776.9 397.9 L775.2 401.5 L773.2 404.9 L770.8 408.1 L768.3 411.3" stroke="#808080" stroke-width="1.700" fill="none"/><path d="M768.3 411.3 L765.9 414.5 L763.7 417.8 L761.7 421.3 L760.1 424.9 L758.8 428.7 L757.5 432.5" stroke="#606060" stroke-width="1.500" fill="none"/><path d="M759.0 381.5 L758.6 385.5 L757.7 389.4 L756.3 393.1 L754.6 396.7 L752.6 400.2 L750.5 403.6 L748.6 407.2" stroke="#808080" stroke-width="1.700" fill="none"/><path d="M748.6 407.2 L747.0 410.8 L745.5 414.5 L744.2 418.3 L742.8 422.0 L741.1 425.7 L739.0 429.1" stroke="#606060" stroke-width="1.500" fill="none"/><path d="M732.1 427.9 L734.8 425.0 L737.2 421.8 L739.3 418.4 L741.0 414.8 L742.5 411.1 L743.9 407.3 L745.4 403.6" stroke="#808080" stroke-width="1.700" fill="none"/><path d="M745.4 403.6 L747.2 400.1 L749.4 396.7 L751.7 393.5 L754.2 390.3 L756.6 387.1 L758.8 383.8" stroke="#606060" stroke-width="1.500" fill="none"/><path d="M787.7 382.5 L786.8 386.4 L785.9 390.3 L784.6 394.0 L782.9 397.6 L780.6 401.0 L778.0 404.0 L775.1 406.8" stroke="#808080" stroke-width="1.700" fill="none"/><path d="M775.1 406.8 L772.2 409.5 L769.3 412.2 L766.6 415.2 L764.0 418.2 L761.5 421.4 L759.1 424.5" stroke="#606060" stroke-width="1.500" fill="none"/><path d="M762.7 416.8 L758.8 417.6 L754.8 418.0 L750.8 418.1 L746.8 418.1 L742.8 418.2 L738.8 418.5 L734.9 419.1" stroke="#808080" stroke-width="1.700" fill="none"/><path d="M734.9 419.1 L730.9 419.7 L727.0 420.2 L723.0 420.4 L719.0 420.1 L715.1 419.2 L711.3 417.9" stroke="#606060" stroke-width="1.500" fill="none"/><path d="M746.0 429.5 L745.8 433.5 L745.1 437.4 L744.1 441.3 L742.8 445.1 L741.4 448.8 L740.1 452.6 L739.0 456.5" stroke="#808080" stroke-width="1.700" fill="none"/><path d="M739.0 456.5 L738.3 460.4 L738.0 464.4 L738.0 468.4 L738.0 472.4 L737.8 476.4 L737.3 480.4" stroke="#606060" stroke-width="1.500" fill="none"/><path d="M689.7 415.3 L691.3 419.0 L692.9 422.7 L694.6 426.3 L696.7 429.7 L699.2 432.8 L702.0 435.7 L705.0 438.4" stroke="#808080" stroke-width="1.700" fill="none"/><path d="M705.0 438.4 L708.0 441.0 L710.8 443.8 L713.5 446.8 L715.9 450.0 L718.1 453.3 L720.2 456.8" stroke="#606060" stroke-width="1.500" fill="none"/><path d="M693.2 465.2 L696.7 463.1 L700.2 461.3 L703.9 459.6 L707.5 458.0 L711.2 456.3 L714.6 454.3 L717.8 451.9" stroke="#808080" stroke-width="1.700" fill="none"/><path d="M717.8 451.9 L720.7 449.1 L723.2 446.0 L725.4 442.7 L727.6 439.3 L729.9 436.1 L732.4 432.9" stroke="#606060" stroke-width="1.500" fill="none"/><path d="M683.5 472.6 L682.6 468.7 L682.0 464.7 L681.3 460.8 L680.4 456.9 L679.3 453.1 L677.9 449.3 L676.5 445.6" stroke="#808080" stroke-width="1.700" fill="none"/><path d="M676.5 445.6 L675.1 441.8 L674.0 438.0 L673.4 434.0 L673.3 430.0 L673.7 426.0 L674.3 422.1" stroke="#606060" stroke-width="1.500" fill="none"/><path d="M626.5 429.0 L630.5 428.9 L634.5 428.5 L638.4 427.8 L642.3 426.8 L646.1 425.6 L649.9 424.4 L653.8 423.4" stroke="#808080" stroke-width="1.700" fill="none"/><path d="M653.8 423.4 L657.7 422.7 L661.7 422.5 L665.7 422.7 L669.7 423.1 L673.7 423.5 L677.7 423.7" stroke="#606060" stroke-width="1.500" fill="none"/><path d="M829.7 451.7 L826.4 453.9 L823.3 456.5 L820.6 459.5 L818.2 462.7 L816.0 466.0 L813.8 469.4 L811.4 472.6" stroke="#808080" stroke-width="1.700" fill="none"/><path d="M811.4 472.6 L808.9 475.6 L806.1 478.5 L803.1 481.2 L800.3 484.0 L797.5 486.9 L795.1 490.1" stroke="#606060" stroke-width="1.500" fill="none"/><path d="M825.6 482.4 L826.5 486.3 L827.7 490.1 L829.5 493.8 L831.7 497.1 L834.2 500.2 L836.9 503.1 L839.7 506.0" stroke="#808080" stroke-width="1.700" fill="none"/><path d="M839.7 506.0 L842.3 509.0 L844.7 512.2 L847.0 515.5 L849.1 518.9 L851.4 522.2 L853.9 525.3" stroke="#606060" stroke-width="1.500" fill="none"/><path d="M91.6 492.4 L92.0 496.4 L92.1 500.4 L91.6 504.4 L90.8 508.3 L89.8 512.2 L88.9 516.1 L88.1 520.0" stroke="#808080" stroke-width="1.700" fill="none"/><path d="M88.1 520.0 L87.6 524.0 L87.5 528.0 L87.6 532.0 L87.7 536.0 L87.7 540.0 L87.3 543.9" stroke="#606060" stroke-width="1.500" fill="none"/><path d="M101.0 503.5 L101.1 507.5 L101.1 511.5 L100.8 515.5 L100.0 519.4 L98.6 523.2 L96.8 526.7 L94.7 530.2" stroke="#808080" stroke-width="1.700" fill="none"/><path d="M94.7 530.2 L92.5 533.5 L90.4 536.9 L88.4 540.4 L86.7 544.0 L85.1 547.6 L83.5 551.3" stroke="#606060" stroke-width="1.500" fill="none"/><path d="M149.1 492.6 L153.1 492.6 L157.1 492.4 L161.1 491.9 L165.0 491.0 L168.8 489.8 L172.5 488.5 L176.3 487.2" stroke="#808080" stroke-width="1.700" fill="none"/><path d="M176.3 487.2 L180.2 486.1 L184.1 485.4 L188.1 485.1 L192.1 485.1 L196.1 485.2 L200.1 485.2" stroke="#606060" stroke-width="1.500" fill="none"/><path d="M31.4 525.4 L35.3 524.3 L39.1 522.9 L42.8 521.6 L46.6 520.3 L50.5 519.4 L54.5 518.8 L58.4 518.3" stroke="#808080" stroke-width="1.700" fill="none"/><path d="M58.4 518.3 L62.4 517.9 L66.4 517.3 L70.2 516.3 L74.0 514.9 L77.5 513.0 L80.9 510.8" stroke="#606060" stroke-width="1.500" fill="none"/><path d="M21.5 537.0 L25.5 536.7 L29.5 536.2 L33.4 535.5 L37.3 534.9 L41.3 534.5 L45.3 534.5 L49.3 535.0" stroke="#808080" stroke-width="1.700" fill="none"/><path d="M49.3 535.0 L53.2 536.0 L56.9 537.4 L60.6 538.9 L64.3 540.4 L68.1 541.6 L72.0 542.6" stroke="#606060" stroke-width="1.500" fill="none"/><path d="M74.7 609.5 L75.5 605.6 L76.0 601.6 L76.0 597.6 L75.5 593.7 L74.7 589.8 L73.6 585.9 L72.6 582.0" stroke="#808080" stroke-width="1.700" fill="none"/><path d="M72.6 582.0 L71.8 578.1 L71.3 574.1 L71.1 570.1 L71.1 566.1 L71.0 562.1 L70.7 558.2" stroke="#606060" stroke-width="1.500" fill="none"/><path d="M150.5 605.0 L146.5 604.5 L142.6 603.6 L138.8 602.6 L134.9 601.5 L131.0 600.6 L127.1 600.0 L123.1 599.7" stroke="#808080" stroke-width="1.700" fill="none"/><path d="M123.1 599.7 L119.1 599.5 L115.1 599.3 L111.1 598.8 L107.2 597.8 L103.5 596.3 L100.0 594.5" stroke="#606060" stroke-width="1.500" fill="none"/><path d="M49.6 600.4 L49.8 604.4 L49.4 608.4 L48.5 612.3 L47.3 616.1 L45.9 619.9 L44.6 623.7 L43.5 627.5" stroke="#808080" stroke-width="1.700" fill="none"/><path d="M43.5 627.5 L42.6 631.4 L41.8 635.3 L41.0 639.2 L40.0 643.1 L38.5 646.8 L36.5 650.3" stroke="#606060" stroke-width="1.500" fill="none"/><path d="M56.6 605.5 L56.5 609.5 L56.4 613.5 L56.5 617.5 L57.2 621.4 L58.3 625.3 L59.9 629.0 L61.8 632.5" stroke="#808080" stroke-width="1.700" fill="none"/><path d="M61.8 632.5 L63.8 635.9 L65.8 639.4 L67.6 643.0 L69.1 646.7 L70.5 650.4 L71.8 654.2" stroke="#606060" stroke-width="1.500" fill="none"/><path d="M60.5 652.0 L64.5 651.6 L68.4 651.0 L72.4 650.5 L76.4 650.1 L80.4 650.0 L84.4 650.1 L88.4 650.3" stroke="#808080" stroke-width="1.700" fill="none"/><path d="M88.4 650.3 L92.4 650.3 L96.4 650.0 L100.3 649.2 L104.0 647.8 L107.6 646.1 L111.1 644.1" stroke="#606060" stroke-width="1.500" fill="none"/><path d="M27.6 633.6 L28.8 629.8 L29.6 625.9 L29.8 621.9 L29.7 617.9 L29.4 613.9 L29.1 609.9 L29.0 605.9" stroke="#808080" stroke-width="1.700" fill="none"/><path d="M29.0 605.9 L29.2 601.9 L29.7 597.9 L30.2 594.0 L30.7 590.0 L30.9 586.0 L30.6 582.0" stroke="#606060" stroke-width="1.500" fill="none"/><path d="M103.8 650.3 L102.6 654.1 L101.2 657.9 L99.7 661.5 L97.7 665.0 L95.4 668.3 L92.8 671.3 L90.0 674.2" stroke="#808080" stroke-width="1.700" fill="none"/><path d="M90.0 674.2 L87.3 677.2 L84.8 680.3 L82.5 683.6 L80.5 687.0 L78.7 690.6 L77.0 694.2" stroke="#606060" stroke-width="1.500" fill="none"/><path d="M178.8 610.9 L175.9 613.7 L173.2 616.6 L170.4 619.4 L167.4 622.1 L164.2 624.5 L160.8 626.7 L157.3 628.6" stroke="#808080" stroke-width="1.700" fill="none"/><path d="M157.3 628.6 L153.8 630.5 L150.4 632.5 L147.1 634.9 L144.2 637.6 L141.5 640.5 L139.0 643.7" stroke="#606060" stroke-width="1.500" fill="none"/><path d="M154.8 599.3 L153.3 603.0 L151.6 606.6 L149.8 610.2 L147.9 613.7 L146.0 617.2 L144.5 620.9 L143.5 624.8" stroke="#808080" stroke-width="1.700" fill="none"/><path d="M143.5 624.8 L143.0 628.8 L143.1 632.8 L143.5 636.8 L144.1 640.7 L144.6 644.7 L145.0 648.7" stroke="#606060" stroke-width="1.500" fill="none"/><path d="M152.0 608.5 L152.3 612.5 L153.1 616.4 L154.4 620.2 L156.3 623.7 L158.4 627.1 L160.8 630.3 L163.1 633.6" stroke="#808080" stroke-width="1.700" fill="none"/><path d="M163.1 633.6 L165.3 637.0 L167.2 640.4 L169.1 644.0 L170.9 647.5 L173.0 651.0 L175.3 654.2" stroke="#606060" stroke-width="1.500" fill="none"/><path d="M205.5 513.2 L209.4 513.8 L213.4 514.2 L217.4 514.3 L221.4 513.8 L225.3 512.8 L229.0 511.4 L232.7 509.8" stroke="#808080" stroke-width="1.700" fill="none"/><path d="M232.7 509.8 L236.3 508.2 L240.1 506.7 L243.9 505.5 L247.7 504.5 L251.6 503.6 L255.5 502.7" stroke="#606060" stroke-width="1.500" fill="none"/><path d="M203.5 517.0 L207.5 516.6 L211.4 515.7 L215.2 514.6 L219.0 513.4 L222.9 512.3 L226.8 511.5 L230.8 511.1" stroke="#808080" stroke-width="1.700" fill="none"/><path d="M230.8 511.1 L234.8 511.0 L238.8 510.9 L242.8 510.8 L246.8 510.4 L250.7 509.6 L254.5 508.4" stroke="#606060" stroke-width="1.500" fill="none"/><path d="M199.8 572.0 L202.0 575.3 L204.6 578.4 L207.6 581.0 L210.9 583.2 L214.5 585.1 L218.1 586.8 L221.7 588.4" stroke="#808080" stroke-width="1.700" fill="none"/><path d="M221.7 588.4 L225.3 590.2 L228.8 592.3 L232.1 594.4 L235.5 596.6 L238.9 598.7 L242.5 600.4" stroke="#606060" stroke-width="1.500" fill="none"/><path d="M235.0 488.8 L238.3 491.1 L241.3 493.7 L244.4 496.2 L247.6 498.6 L250.9 500.9 L254.3 503.0 L257.7 505.1" stroke="#808080" stroke-width="1.700" fill="none"/><path d="M257.7 505.1 L261.0 507.3 L264.1 509.9 L266.8 512.8 L269.1 516.1 L270.9 519.7 L272.5 523.3" stroke="#606060" stroke-width="1.500" fill="none"/><path d="M277.2 487.0 L275.3 490.5 L273.5 494.1 L272.2 497.9 L271.2 501.8 L270.6 505.7 L270.2 509.7 L269.8 513.7" stroke="#808080" stroke-width="1.700" fill="none"/><path d="M269.8 513.7 L269.2 517.6 L268.2 521.5 L266.9 525.3 L265.4 529.0 L263.8 532.7 L262.4 536.4" stroke="#606060" stroke-width="1.500" fill="none"/><path d="M262.8 535.0 L264.6 531.4 L266.0 527.7 L267.0 523.8 L267.4 519.8 L267.6 515.8 L267.5 511.8 L267.5 507.8" stroke="#808080" stroke-width="1.700" fill="none"/><path d="M267.5 507.8 L267.7 503.8 L268.2 499.9 L268.9 495.9 L269.8 492.0 L270.5 488.1 L270.8 484.1" stroke="#606060" stroke-width="1.500" fill="none"/><path d="M167.4 662.0 L171.3 660.9 L175.1 659.8 L178.9 658.4 L182.5 656.7 L185.9 654.5 L189.0 652.0 L192.0 649.4" stroke="#808080" stroke-width="1.700" fill="none"/><path d="M192.0 649.4 L194.9 646.7 L198.0 644.1 L201.3 641.8 L204.7 639.8 L208.3 637.9 L211.8 636.1" stroke="#606060" stroke-width="1.500" fill="none"/><path d="M266.1 635.3 L262.3 636.5 L258.7 638.2 L255.3 640.3 L252.1 642.7 L249.0 645.3 L245.9 647.8 L242.6 650.1" stroke="#808080" stroke-width="1.700" fill="none"/><path d="M242.6 650.1 L239.2 652.2 L235.7 654.1 L232.2 655.9 L228.7 657.9 L225.4 660.2 L222.4 662.8" stroke="#606060" stroke-width="1.500" fill="none"/><path d="M164.4 707.5 L164.3 703.5 L164.2 699.5 L164.4 695.5 L164.9 691.5 L165.9 687.7 L167.1 683.9 L168.4 680.1" stroke="#808080" stroke-width="1.700" fill="none"/><path d="M168.4 680.1 L169.6 676.3 L170.5 672.4 L171.0 668.4 L171.1 664.4 L171.0 660.4 L170.9 656.4" stroke="#606060" stroke-width="1.500" fill="none"/><path d="M159.8 702.3 L158.7 706.1 L157.8 710.0 L156.8 713.9 L155.5 717.7 L153.9 721.4 L152.1 724.9 L150.1 728.4" stroke="#808080" stroke-width="1.700" fill="none"/><path d="M150.1 728.4 L148.2 731.9 L146.6 735.6 L145.4 739.4 L144.6 743.3 L144.2 747.3 L144.1 751.3" stroke="#606060" stroke-width="1.500" fill="none"/><path d="M298.7 686.2 L301.8 688.8 L304.7 691.5 L307.6 694.3 L310.2 697.3 L312.8 700.3 L315.6 703.2 L318.6 705.9" stroke="#808080" stroke-width="1.700" fill="none"/><path d="M318.6 705.9 L321.8 708.2 L325.4 710.0 L329.2 711.3 L333.1 712.3 L337.0 713.2 L340.8 714.2" stroke="#606060" stroke-width="1.500" fill="none"/><path d="M333.0 484.8 L336.3 487.1 L339.4 489.6 L342.5 492.1 L345.8 494.4 L349.2 496.6 L352.6 498.6 L356.1 500.6" stroke="#808080" stroke-width="1.700" fill="none"/><path d="M356.1 500.6 L359.4 502.8 L362.4 505.4 L365.1 508.4 L367.4 511.7 L369.2 515.3 L370.7 518.9" stroke="#606060" stroke-width="1.500" fill="none"/><path d="M314.3 506.8 L317.8 505.0 L321.2 502.7 L324.3 500.3 L327.4 497.8 L330.6 495.4 L334.0 493.2 L337.5 491.3" stroke="#808080" stroke-width="1.700" fill="none"/><path d="M337.5 491.3 L341.1 489.4 L344.6 487.6 L348.0 485.5 L351.2 483.1 L354.0 480.3 L356.5 477.1" stroke="#606060" stroke-width="1.500" fill="none"/><path d="M365.4 511.4 L369.4 510.8 L373.3 510.0 L377.2 508.9 L380.9 507.4 L384.4 505.5 L387.6 503.2 L390.8 500.7" stroke="#808080" stroke-width="1.700" fill="none"/><path d="M390.8 500.7 L394.0 498.3 L397.2 496.0 L400.7 493.9 L404.2 492.1 L407.9 490.5 L411.5 488.8" stroke="#606060" stroke-width="1.500" fill="none"/><path d="M390.9 515.3 L387.0 515.7 L383.0 515.7 L379.0 515.3 L375.0 514.9 L371.0 514.6 L367.0 514.6 L363.0 514.9" stroke="#808080" stroke-width="1.700" fill="none"/><path d="M363.0 514.9 L359.0 515.4 L355.1 515.8 L351.1 516.1 L347.1 515.9 L343.1 515.2 L339.3 514.1" stroke="#606060" stroke-width="1.500" fill="none"/><path d="M383.5 549.0 L387.5 549.1 L391.5 549.1 L395.5 548.8 L399.4 548.3 L403.4 547.4 L407.2 546.5 L411.2 545.7" stroke="#808080" stroke-width="1.700" fill="none"/><path d="M411.2 545.7 L415.1 545.1 L419.1 545.1 L423.1 545.5 L427.0 546.3 L430.9 547.2 L434.8 548.2" stroke="#606060" stroke-width="1.500" fill="none"/><path d="M428.2 525.3 L429.6 529.0 L431.2 532.7 L433.1 536.2 L435.4 539.5 L438.0 542.5 L440.7 545.5 L443.4 548.4" stroke="#808080" stroke-width="1.700" fill="none"/><path d="M443.4 548.4 L445.9 551.6 L448.1 554.9 L450.0 558.4 L451.7 562.0 L453.3 565.7 L455.0 569.3" stroke="#606060" stroke-width="1.500" fill="none"/><path d="M450.6 540.4 L451.3 544.4 L452.3 548.3 L453.7 552.0 L455.5 555.6 L457.6 559.0 L459.9 562.3 L462.2 565.5" stroke="#808080" stroke-width="1.700" fill="none"/><path d="M462.2 565.5 L464.3 568.9 L466.2 572.5 L467.7 576.1 L469.1 579.9 L470.4 583.7 L471.8 587.4" stroke="#606060" stroke-width="1.500" fill="none"/><path d="M515.3 515.5 L516.4 511.7 L517.6 507.9 L518.8 504.0 L519.7 500.2 L520.4 496.2 L521.0 492.3 L521.7 488.3" stroke="#808080" stroke-width="1.700" fill="none"/><path d="M521.7 488.3 L522.7 484.5 L524.2 480.7 L526.1 477.2 L528.5 474.0 L531.3 471.1 L534.1 468.3" stroke="#606060" stroke-width="1.500" fill="none"/><path d="M516.8 539.1 L513.2 537.3 L509.5 535.9 L505.6 534.8 L501.8 533.8 L497.9 532.7 L494.1 531.4 L490.4 529.9" stroke="#808080" stroke-width="1.700" fill="none"/><path d="M490.4 529.9 L486.7 528.4 L483.0 526.9 L479.2 525.7 L475.3 524.9 L471.3 524.8 L467.3 525.2" stroke="#606060" stroke-width="1.500" fill="none"/><path d="M499.8 543.7 L501.9 540.3 L504.2 537.1 L506.9 534.1 L509.9 531.4 L513.1 529.1 L516.5 527.0 L519.9 524.9" stroke="#808080" stroke-width="1.700" fill="none"/><path d="M519.9 524.9 L523.3 522.7 L526.4 520.2 L529.4 517.5 L532.2 514.7 L535.0 511.8 L537.9 509.1" stroke="#606060" stroke-width="1.500" fill="none"/><path d="M497.8 490.7 L495.1 493.7 L492.6 496.8 L490.4 500.1 L488.3 503.6 L486.5 507.1 L484.7 510.7 L482.7 514.2" stroke="#808080" stroke-width="1.700" fill="none"/><path d="M482.7 514.2 L480.5 517.5 L477.8 520.5 L474.8 523.1 L471.6 525.5 L468.3 527.8 L465.0 530.1" stroke="#606060" stroke-width="1.500" fill="none"/><path d="M548.8 516.1 L545.5 513.9 L542.3 511.5 L539.3 508.8 L536.7 505.8 L534.5 502.4 L532.8 498.8 L531.4 495.1" stroke="#808080" stroke-width="1.700" fill="none"/><path d="M531.4 495.1 L530.1 491.3 L528.7 487.5 L527.1 483.9 L525.3 480.3 L523.4 476.8 L521.6 473.2" stroke="#606060" stroke-width="1.500" fill="none"/><path d="M544.5 516.0 L548.5 516.0 L552.5 516.3 L556.5 516.8 L560.4 517.6 L564.3 518.6 L568.2 519.4 L572.1 520.0" stroke="#808080" stroke-width="1.700" fill="none"/><path d="M572.1 520.0 L576.1 520.2 L580.1 519.8 L584.0 519.0 L587.9 518.0 L591.7 516.9 L595.6 515.9" stroke="#606060" stroke-width="1.500" fill="none"/><path d="M534.6 532.4 L535.8 536.3 L537.4 539.9 L539.3 543.5 L541.1 547.0 L542.9 550.6 L544.4 554.3 L545.6 558.1" stroke="#808080" stroke-width="1.700" fill="none"/><path d="M545.6 558.1 L546.8 562.0 L548.0 565.8 L549.4 569.5 L551.3 573.0 L553.6 576.3 L556.3 579.2" stroke="#606060" stroke-width="1.500" fill="none"/><path d="M546.2 562.0 L543.8 558.8 L541.1 555.8 L538.3 553.0 L535.5 550.1 L532.9 547.1 L530.4 544.0 L528.2 540.6" stroke="#808080" stroke-width="1.700" fill="none"/><path d="M528.2 540.6 L526.1 537.3 L523.8 533.9 L521.3 530.8 L518.5 528.0 L515.3 525.6 L511.9 523.5" stroke="#606060" stroke-width="1.500" fill="none"/><path d="M569.6 536.6 L570.5 532.7 L571.5 528.8 L572.3 524.9 L572.9 520.9 L573.1 516.9 L573.1 512.9 L573.2 508.9" stroke="#808080" stroke-width="1.700" fill="none"/><path d="M573.2 508.9 L573.4 504.9 L574.1 501.0 L575.2 497.1 L576.8 493.5 L578.7 489.9 L580.6 486.4" stroke="#606060" stroke-width="1.500" fill="none"/><path d="M358.6 587.4 L359.7 591.3 L361.1 595.1 L362.4 598.8 L363.6 602.6 L364.6 606.5 L365.3 610.5 L365.9 614.4" stroke="#808080" stroke-width="1.700" fill="none"/><path d="M365.9 614.4 L366.6 618.3 L367.7 622.2 L369.2 625.9 L371.1 629.4 L373.5 632.6 L376.1 635.6" stroke="#606060" stroke-width="1.500" fill="none"/><path d="M374.4 617.4 L373.2 621.3 L371.6 624.9 L369.8 628.5 L367.9 632.0 L366.2 635.7 L364.8 639.4 L363.6 643.2" stroke="#808080" stroke-width="1.700" fill="none"/><path d="M363.6 643.2 L362.4 647.0 L361.2 650.8 L359.7 654.5 L357.7 658.0 L355.3 661.2 L352.5 664.1" stroke="#606060" stroke-width="1.500" fill="none"/><path d="M469.4 574.4 L473.4 574.2 L477.4 574.5 L481.4 575.1 L485.3 575.7 L489.3 576.2 L493.3 576.4 L497.3 576.4" stroke="#808080" stroke-width="1.700" fill="none"/><path d="M497.3 576.4 L501.3 576.3 L505.3 576.3 L509.3 576.5 L513.2 577.3 L517.0 578.5 L520.6 580.3" stroke="#606060" stroke-width="1.500" fill="none"/><path d="M461.0 607.5 L460.8 603.5 L460.5 599.5 L460.4 595.5 L460.7 591.5 L461.4 587.6 L462.7 583.8 L464.5 580.2" stroke="#808080" stroke-width="1.700" fill="none"/><path d="M464.5 580.2 L466.6 576.8 L468.8 573.5 L470.9 570.1 L472.9 566.6 L474.6 563.0 L476.3 559.4" stroke="#606060" stroke-width="1.500" fill="none"/><path d="M475.0 606.5 L475.4 602.5 L476.1 598.6 L476.8 594.6 L477.4 590.7 L477.7 586.7 L477.6 582.7 L477.2 578.7" stroke="#808080" stroke-width="1.700" fill="none"/><path d="M477.2 578.7 L476.6 574.8 L476.0 570.8 L475.6 566.8 L475.7 562.8 L476.1 558.8 L476.9 554.9" stroke="#606060" stroke-width="1.500" fill="none"/><path d="M481.0 601.5 L480.9 605.5 L481.0 609.5 L481.3 613.5 L482.2 617.4 L483.5 621.2 L485.2 624.8 L487.2 628.3" stroke="#808080" stroke-width="1.700" fill="none"/><path d="M487.2 628.3 L489.2 631.7 L491.1 635.3 L492.7 638.9 L494.1 642.7 L495.3 646.5 L496.6 650.3" stroke="#606060" stroke-width="1.500" fill="none"/><path d="M449.2 620.7 L451.7 623.8 L454.2 626.9 L457.0 629.9 L460.0 632.5 L463.2 634.8 L466.7 636.8 L470.2 638.8" stroke="#808080" stroke-width="1.700" fill="none"/><path d="M470.2 638.8 L473.7 640.8 L477.0 643.0 L480.1 645.5 L483.0 648.3 L485.7 651.2 L488.4 654.2" stroke="#606060" stroke-width="1.500" fill="none"/><path d="M506.6 668.6 L508.5 665.1 L510.7 661.8 L512.9 658.5 L515.0 655.0 L516.9 651.5 L518.4 647.8 L519.8 644.0" stroke="#808080" stroke-width="1.700" fill="none"/><path d="M519.8 644.0 L521.1 640.3 L522.6 636.6 L524.4 633.0 L526.7 629.7 L529.3 626.6 L532.1 623.8" stroke="#606060" stroke-width="1.500" fill="none"/><path d="M501.5 694.8 L505.5 694.4 L509.5 694.4 L513.4 694.7 L517.4 695.3 L521.4 695.9 L525.3 696.4 L529.3 696.5" stroke="#808080" stroke-width="1.700" fill="none"/><path d="M529.3 696.5 L533.3 696.1 L537.3 695.5 L541.2 694.6 L545.1 693.7 L549.0 693.0 L553.0 692.7" stroke="#606060" stroke-width="1.500" fill="none"/><path d="M542.7 694.7 L544.7 691.2 L547.0 687.9 L549.5 684.8 L552.0 681.7 L554.4 678.5 L556.4 675.1 L558.1 671.4" stroke="#808080" stroke-width="1.700" fill="none"/><path d="M558.1 671.4 L559.3 667.6 L560.2 663.7 L561.0 659.8 L561.8 655.9 L562.8 652.0 L564.2 648.2" stroke="#606060" stroke-width="1.500" fill="none"/><path d="M586.8 704.3 L585.1 707.9 L583.1 711.4 L581.2 714.9 L579.4 718.5 L577.8 722.2 L576.5 725.9 L575.3 729.7" stroke="#808080" stroke-width="1.700" fill="none"/><path d="M575.3 729.7 L573.9 733.5 L572.3 737.1 L570.2 740.5 L567.7 743.7 L564.8 746.5 L561.7 749.0" stroke="#606060" stroke-width="1.500" fill="none"/><path d="M311.3 670.2 L315.1 671.4 L318.9 672.7 L322.6 674.1 L326.2 676.0 L329.4 678.3 L332.4 681.0 L335.0 684.0" stroke="#808080" stroke-width="1.700" fill="none"/><path d="M335.0 684.0 L337.5 687.2 L339.9 690.3 L342.5 693.4 L345.3 696.2 L348.2 699.0 L351.2 701.6" stroke="#606060" stroke-width="1.500" fill="none"/><path d="M363.4 635.0 L367.4 634.5 L371.4 633.9 L375.3 633.2 L379.1 632.1 L382.8 630.5 L386.2 628.4 L389.4 625.9" stroke="#808080" stroke-width="1.700" fill="none"/><path d="M389.4 625.9 L392.4 623.3 L395.4 620.7 L398.6 618.2 L401.9 616.0 L405.3 613.9 L408.8 611.9" stroke="#606060" stroke-width="1.500" fill="none"/><path d="M363.0 653.1 L362.8 657.1 L362.2 661.1 L361.3 664.9 L360.0 668.7 L358.6 672.5 L357.2 676.2 L356.1 680.1" stroke="#808080" stroke-width="1.700" fill="none"/><path d="M356.1 680.1 L355.3 684.0 L354.9 688.0 L354.9 692.0 L354.9 696.0 L354.7 700.0 L354.3 704.0" stroke="#606060" stroke-width="1.500" fill="none"/><path d="M410.6 643.4 L411.6 647.3 L412.8 651.1 L414.0 655.0 L414.9 658.9 L415.5 662.8 L415.6 666.8 L415.5 670.8" stroke="#808080" stroke-width="1.700" fill="none"/><path d="M415.5 670.8 L415.2 674.8 L415.1 678.8 L415.2 682.8 L415.7 686.8 L416.6 690.7 L417.8 694.5" stroke="#606060" stroke-width="1.500" fill="none"/><path d="M413.0 690.4 L412.7 694.4 L412.6 698.4 L412.5 702.4 L412.3 706.4 L411.7 710.4 L411.0 714.3 L410.1 718.2" stroke="#808080" stroke-width="1.700" fill="none"/><path d="M410.1 718.2 L409.4 722.2 L408.9 726.1 L409.0 730.1 L409.6 734.1 L410.6 738.0 L411.9 741.7" stroke="#606060" stroke-width="1.500" fill="none"/><path d="M387.0 701.2 L383.5 699.2 L380.0 697.4 L376.3 695.8 L372.4 694.8 L368.4 694.4 L364.4 694.4 L360.4 694.8" stroke="#808080" stroke-width="1.700" fill="none"/><path d="M360.4 694.8 L356.5 695.2 L352.5 695.6 L348.5 695.7 L344.5 695.7 L340.5 695.5 L336.5 695.4" stroke="#606060" stroke-width="1.500" fill="none"/><path d="M480.3 704.8 L477.3 702.1 L474.4 699.4 L471.8 696.3 L469.5 693.1 L467.3 689.7 L465.1 686.4 L462.8 683.1" stroke="#808080" stroke-width="1.700" fill="none"/><path d="M462.8 683.1 L460.2 680.1 L457.2 677.4 L454.0 675.0 L450.7 672.8 L447.3 670.6 L444.1 668.3" stroke="#606060" stroke-width="1.500" fill="none"/><path d="M498.6 701.4 L499.4 705.4 L500.2 709.3 L500.7 713.3 L500.9 717.3 L500.8 721.3 L500.7 725.3 L500.7 729.3" stroke="#808080" stroke-width="1.700" fill="none"/><path d="M500.7 729.3 L501.1 733.2 L501.9 737.2 L503.2 740.9 L504.9 744.6 L506.7 748.1 L508.6 751.6" stroke="#606060" stroke-width="1.500" fill="none"/><path d="M540.2 704.3 L541.3 708.1 L542.2 712.0 L543.3 715.9 L544.5 719.7 L546.1 723.4 L547.8 727.0 L549.5 730.6" stroke="#808080" stroke-width="1.700" fill="none"/><path d="M549.5 730.6 L551.0 734.3 L552.1 738.2 L552.7 742.1 L552.8 746.1 L552.5 750.1 L552.0 754.1" stroke="#606060" stroke-width="1.500" fill="none"/><path d="M826.7 485.3 L828.6 488.8 L830.2 492.5 L831.6 496.3 L832.6 500.1 L833.5 504.0 L834.4 507.9 L835.7 511.7" stroke="#808080" stroke-width="1.700" fill="none"/><path d="M835.7 511.7 L837.3 515.4 L839.4 518.8 L841.7 522.1 L844.2 525.2 L846.7 528.3 L848.9 531.6" stroke="#606060" stroke-width="1.500" fill="none"/><path d="M784.5 499.6 L788.5 499.8 L792.5 500.2 L796.4 500.9 L800.3 501.8 L804.2 502.9 L808.1 503.7 L812.0 504.3" stroke="#808080" stroke-width="1.700" fill="none"/><path d="M812.0 504.3 L816.0 504.4 L820.0 503.9 L823.9 503.1 L827.8 502.0 L831.6 500.9 L835.5 499.9" stroke="#606060" stroke-width="1.500" fill="none"/><path d="M613.6 544.5 L613.3 548.5 L612.5 552.4 L611.4 556.2 L610.0 560.0 L608.5 563.7 L607.2 567.5 L606.2 571.4" stroke="#808080" stroke-width="1.700" fill="none"/><path d="M606.2 571.4 L605.6 575.3 L605.2 579.3 L605.0 583.3 L604.8 587.3 L604.3 591.3 L603.4 595.2" stroke="#606060" stroke-width="1.500" fill="none"/><path d="M775.8 536.7 L777.5 533.1 L778.8 529.3 L779.8 525.5 L780.8 521.6 L782.0 517.8 L783.5 514.0 L785.2 510.4" stroke="#808080" stroke-width="1.700" fill="none"/><path d="M785.2 510.4 L787.0 506.9 L788.9 503.3 L790.5 499.7 L791.7 495.9 L792.5 491.9 L792.8 487.9" stroke="#606060" stroke-width="1.500" fill="none"/><path d="M839.2 542.0 L837.0 538.7 L834.4 535.6 L831.8 532.6 L829.1 529.6 L826.6 526.5 L824.4 523.1 L822.7 519.5" stroke="#808080" stroke-width="1.700" fill="none"/><path d="M822.7 519.5 L821.3 515.8 L820.1 512.0 L819.0 508.1 L817.8 504.3 L816.3 500.6 L814.4 497.1" stroke="#606060" stroke-width="1.500" fill="none"/><path d="M719.8 583.3 L716.7 585.8 L713.7 588.5 L710.7 591.1 L707.5 593.5 L704.1 595.6 L700.4 597.2 L696.6 598.2" stroke="#808080" stroke-width="1.700" fill="none"/><path d="M696.6 598.2 L692.6 598.9 L688.6 599.4 L684.7 599.9 L680.7 600.5 L676.8 601.4 L673.0 602.5" stroke="#606060" stroke-width="1.500" fill="none"/><path d="M641.4 618.4 L645.3 619.3 L649.3 620.1 L653.1 621.1 L656.9 622.5 L660.5 624.3 L663.8 626.4 L667.0 628.9" stroke="#808080" stroke-width="1.700" fill="none"/><path d="M667.0 628.9 L670.1 631.4 L673.3 633.8 L676.6 636.1 L680.1 638.0 L683.7 639.8 L687.4 641.4" stroke="#606060" stroke-width="1.500" fill="none"/><path d="M635.0 672.6 L633.4 669.0 L631.8 665.3 L629.9 661.8 L627.9 658.3 L625.6 655.0 L623.4 651.7 L621.2 648.3" stroke="#808080" stroke-width="1.700" fill="none"/><path d="M621.2 648.3 L619.4 644.8 L618.1 641.0 L617.3 637.1 L616.9 633.1 L616.7 629.1 L616.6 625.1" stroke="#606060" stroke-width="1.500" fill="none"/><path d="M822.4 586.3 L821.1 590.1 L819.6 593.8 L817.9 597.4 L816.0 600.9 L814.1 604.5 L812.4 608.1 L811.0 611.8" stroke="#808080" stroke-width="1.700" fill="none"/><path d="M811.0 611.8 L810.1 615.7 L809.8 619.7 L809.9 623.7 L810.4 627.7 L811.0 631.6 L811.6 635.6" stroke="#606060" stroke-width="1.500" fill="none"/><path d="M709.3 618.2 L713.0 619.7 L716.8 621.0 L720.6 622.2 L724.5 623.2 L728.4 624.0 L732.3 625.0 L736.0 626.3" stroke="#808080" stroke-width="1.700" fill="none"/><path d="M736.0 626.3 L739.6 628.1 L742.9 630.4 L745.9 633.0 L748.6 636.0 L751.1 639.1 L753.7 642.2" stroke="#606060" stroke-width="1.500" fill="none"/><path d="M784.0 668.9 L786.8 666.0 L789.8 663.4 L793.1 661.2 L796.7 659.3 L800.3 657.6 L804.0 656.1 L807.6 654.4" stroke="#808080" stroke-width="1.700" fill="none"/><path d="M807.6 654.4 L811.1 652.5 L814.5 650.2 L817.6 647.8 L820.7 645.2 L823.8 642.7 L827.0 640.4" stroke="#606060" stroke-width="1.500" fill="none"/><path d="M662.2 658.6 L658.9 660.8 L655.8 663.4 L653.1 666.3 L650.6 669.4 L648.0 672.5 L645.4 675.5 L642.6 678.4" stroke="#808080" stroke-width="1.700" fill="none"/><path d="M642.6 678.4 L639.7 681.1 L636.7 683.7 L633.8 686.5 L631.1 689.5 L628.9 692.8 L627.1 696.4" stroke="#606060" stroke-width="1.500" fill="none"/><path d="M765.6 678.5 L765.1 682.5 L764.2 686.4 L762.8 690.1 L761.2 693.8 L759.6 697.4 L758.1 701.2 L756.9 705.0" stroke="#808080" stroke-width="1.700" fill="none"/><path d="M756.9 705.0 L755.9 708.8 L755.1 712.8 L754.3 716.7 L753.3 720.6 L751.9 724.3 L750.0 727.8" stroke="#606060" stroke-width="1.500" fill="none"/><path d="M799.7 694.5 L800.1 690.5 L800.4 686.5 L800.4 682.5 L800.0 678.6 L799.1 674.7 L797.8 670.9 L796.3 667.1" stroke="#808080" stroke-width="1.700" fill="none"/><path d="M796.3 667.1 L794.9 663.4 L793.6 659.6 L792.6 655.8 L791.9 651.8 L791.4 647.8 L791.0 643.9" stroke="#606060" stroke-width="1.500" fill="none"/><path d="M703.6 705.4 L704.6 709.3 L705.6 713.2 L706.4 717.1 L707.0 721.1 L707.2 725.1 L707.0 729.1 L706.7 733.1" stroke="#808080" stroke-width="1.700" fill="none"/><path d="M706.7 733.1 L706.5 737.0 L706.5 741.0 L706.9 745.0 L707.7 748.9 L708.9 752.8 L710.2 756.6" stroke="#606060" stroke-width="1.500" fill="none"/><path d="M789.4 707.6 L793.3 708.8 L796.9 710.4 L800.5 712.2 L804.0 714.1 L807.7 715.7 L811.4 717.2 L815.2 718.4" stroke="#808080" stroke-width="1.700" fill="none"/><path d="M815.2 718.4 L819.0 719.6 L822.8 720.8 L826.5 722.4 L830.0 724.3 L833.2 726.8 L836.0 729.6" stroke="#606060" stroke-width="1.500" fill="none"/></g><rect x="21.500" y="21.500" width="814" height="674" fill="none" stroke="#1010cc" stroke-width="1"/><g fill="none" stroke-width="0.850" stroke-linejoin="bevel"><polyline points="17.8,6.7 21.7,4.8 20.9,9.6 24.4,8.5 24.7,11.2 27.3,10.7 27.6,14.5 30.6,13.2 30.3,17.4 34.4,15.4 32.0,20.1 37.6,17.9 36.0,21.9 39.7,22.0 38.8,25.2 42.6,24.3 40.7,28.5 44.3,27.9 43.5,31.8 47.7,30.5 46.7,34.2 51.4,32.6 50.0,36.8 54.0,35.9 52.0,40.1 57.1,37.7 55.4,42.7 58.8,42.1 58.6,45.1 62.4,44.4 59.5,49.1 64.8,47.7 62.4,51.9 67.7,51.0 65.1,55.1 68.6,55.1 67.3,58.8 72.1,57.1" stroke="#18eaea"/><polyline points="84.5,1.9 84.4,3.9 83.1,5.2 82.7,7.8 81.5,9.0 81.7,11.6 80.6,13.1 81.5,15.5 80.2,17.6 81.6,19.1 80.9,21.5" stroke="#b8b8b8"/><polyline points="85.3,65.1 89.9,65.0 88.8,68.2 92.7,67.9 91.2,71.3 94.5,72.0 91.3,75.8 96.5,75.7 93.0,78.5 98.5,79.9 93.2,82.4 97.5,84.2 94.5,86.1 96.3,88.0 93.6,89.4 95.8,92.1 92.8,93.2 93.7,96.0 90.9,97.2 92.7,100.2 88.6,99.6 89.1,103.1 84.7,100.7 85.0,105.5 82.5,103.1 80.9,106.1 78.5,102.1 76.1,105.8 74.8,102.9 72.7,106.9 70.3,102.7 67.9,107.1 66.9,102.7 64.0,104.7 63.1,101.0 60.4,103.8 59.9,98.9 55.7,102.5 57.0,97.1 53.2,99.1 53.9,95.8 50.6,96.1 51.0,92.8 46.3,93.4 50.5,88.8 44.6,89.3 48.2,86.4 45.3,84.8 48.7,82.1 44.0,80.1 49.2,78.8 46.6,76.0 51.0,76.0 47.6,71.7 51.9,72.2 51.3,68.8 55.6,71.1 54.6,65.9 57.9,68.7 58.2,64.7 61.5,68.0 63.0,63.9 64.9,68.0 66.9,63.4 68.3,66.3 71.1,62.5 72.9,67.5" stroke="#18eaea"/><polyline points="51.6,99.0 54.8,102.2 51.5,103.5 53.6,106.1 50.5,107.6 52.7,109.9 48.5,111.4 51.9,114.2 48.0,115.1 51.5,117.4 47.4,118.8" stroke="#18eaea"/><polyline points="72.5,75.4 71.6,77.7 68.5,75.7 68.0,79.5 64.6,77.8 64.5,81.0 61.7,80.7 63.2,84.3 58.8,84.7 62.3,87.5 57.8,88.7 61.2,91.1 58.2,93.3 62.0,94.4 60.2,98.0 64.4,95.9 64.0,100.7 67.0,97.8 68.0,101.6 70.0,100.1 72.5,101.5 73.8,98.1 76.5,100.4 76.9,97.1 80.9,100.1" stroke="#2cc82c"/><polyline points="108.8,99.6 107.9,96.1 110.9,96.2 110.5,93.6 113.2,93.0 112.4,90.4 115.8,89.7 115.0,87.3 117.2,85.2 114.8,83.2 115.8,80.5 113.2,80.3 113.0,77.7 111.2,75.9 114.1,77.4 116.3,75.7 117.7,78.7 120.1,77.8 120.8,80.1 122.5,79.0 124.3,77.8 121.8,76.5 122.7,73.9 120.8,72.6 121.6,70.6 119.0,68.2 121.5,68.5 123.5,66.7 125.1,68.8 127.4,68.1 128.5,69.1 127.4,70.9 125.8,68.1 123.6,69.7 122.0,67.6 119.2,69.3 117.6,66.9 115.6,69.0 113.7,65.6 111.2,68.1 109.4,66.0 107.7,68.7 105.0,68.1 106.7,70.6 104.4,72.3 106.2,73.9 105.5,76.6 107.3,77.7 106.7,80.5 109.4,81.5 107.8,83.9 110.2,85.2 109.7,87.7 112.3,88.9 112.4,92.1 115.0,89.4 117.0,90.4 118.0,88.1 120.6,88.2 122.2,85.6 120.1,87.2 119.3,89.4 117.3,89.6 116.5,92.1 113.5,91.9 113.5,95.3 110.1,94.5 110.4,97.3 107.2,96.4" stroke="#2cc82c"/><polyline points="134.1,69.5 138.1,69.3 136.0,73.0 141.5,71.6 139.9,75.3 143.6,74.4 142.9,79.3 146.7,75.8 147.1,80.5 149.5,77.4 151.2,80.3 153.9,78.4 155.6,81.6 157.4,77.3 159.6,81.0 160.5,76.0 164.1,79.1 163.1,74.7 167.7,76.9 166.8,73.0 170.7,73.9 168.6,68.8 173.0,70.0 170.7,66.3 175.5,65.9 171.3,63.3 175.0,61.7 171.6,59.4 176.2,57.8 173.1,55.7 175.9,52.6 171.2,53.3 172.3,48.9" stroke="#18eaea"/><polyline points="206.4,17.2 202.9,19.3 203.2,15.0 199.7,16.6 198.9,13.7 196.4,15.4 195.1,11.4 193.1,16.5 189.8,12.4 189.3,16.8 186.6,14.9 186.2,18.4 183.1,17.9 183.9,21.2 180.5,22.0 181.8,24.7 178.3,25.4 182.9,28.6 177.7,30.0 181.8,31.9 177.8,34.7 182.5,35.5 180.5,38.1 183.7,39.4 183.0,42.4 186.0,41.8 185.4,45.4 189.4,44.0 189.9,48.5 192.7,44.2 194.5,48.7 195.5,43.7 198.6,47.7 199.7,42.8 202.1,46.0 203.1,41.6 206.2,45.3" stroke="#2cc82c"/><polyline points="229.3,29.1 229.3,31.9 226.7,32.2 226.3,34.3 223.8,35.6 224.0,37.5 221.3,39.3 222.9,40.8 222.2,42.9 224.1,44.3 224.2,46.7 226.6,48.2 225.7,50.2 227.4,52.2 225.4,53.4 224.7,55.4 222.3,55.4 221.8,58.3 219.4,59.0 220.5,61.3 219.5,63.5 221.7,65.5 219.9,67.3 222.0,69.4 221.2,71.5 223.4,72.5" stroke="#1414e8"/><polyline points="194.6,69.2 194.7,70.9 193.1,72.3 192.8,74.8" stroke="#f01010"/><polyline points="246.1,70.8 249.8,69.4 249.3,73.4 252.8,71.1 253.2,75.4 256.9,72.3 256.9,78.2 259.5,74.5 261.7,78.9 263.0,74.4 265.9,77.5 267.0,73.6 270.3,77.1 270.7,73.3 273.7,75.6 274.4,71.3 278.1,75.3 278.2,70.6 282.1,74.3 281.1,68.6 285.4,70.3 285.0,66.7 288.2,68.3 288.0,64.4 292.0,66.0 291.4,62.3 294.8,62.9 294.5,60.2 297.6,60.7 297.5,56.2" stroke="#18eaea"/><polyline points="285.7,69.6 290.4,69.1 288.3,72.4 293.4,71.3 291.4,75.2 294.8,75.0 293.7,78.3 298.4,77.8 294.3,82.4 299.5,82.4 296.5,85.9" stroke="#18eaea"/><polyline points="114.9,116.0 117.5,113.6 118.7,116.7 120.9,112.9 123.0,117.7 124.7,113.5 126.6,117.0 128.6,113.2 131.5,118.3 132.6,114.1 135.4,118.3 136.9,113.8 139.0,116.4 140.8,113.6 143.6,116.6 143.4,110.8 147.1,113.9 147.2,109.1 150.8,112.1 150.4,108.1 154.8,110.2 152.6,104.7 157.8,106.6 155.3,102.3 159.4,103.1 157.4,99.1" stroke="#18eaea"/><polyline points="115.6,108.6 114.7,111.8 111.4,110.9 111.9,115.6 108.7,112.6 107.9,115.9 104.5,113.9 104.6,118.1 100.9,116.1 101.3,121.2 97.7,117.8 98.4,123.2 94.3,120.1 94.8,125.0 91.3,122.5 89.8,125.8 87.7,122.8 85.4,126.8 84.4,122.9 81.1,126.8 81.2,121.0 77.3,124.8 76.7,119.8" stroke="#18eaea"/><polyline points="154.0,125.4 157.2,128.8 151.2,129.0 156.0,132.5 151.4,133.5 155.0,136.2 149.5,136.8 152.1,139.8 149.0,140.4 150.0,143.7 146.1,142.7 146.9,146.4 143.4,145.2 144.2,149.4 140.0,147.4 140.5,151.2 137.2,150.0 137.3,154.2 133.8,151.9 132.9,155.2 129.9,152.5 128.3,155.5 126.7,152.2 123.5,156.0 123.2,151.4 120.1,154.7 118.7,150.7 116.0,152.5 115.4,148.5 112.7,151.2 111.6,147.8" stroke="#18eaea"/><polyline points="15.0,221.7 12.0,220.4 14.3,218.0 10.7,216.2 13.4,214.0 9.4,212.1 13.1,210.5 9.2,207.4 14.2,207.2 10.6,203.4 16.5,203.9 12.9,199.6 18.1,201.2 16.9,196.5 20.6,199.1 20.6,194.7 23.6,197.0 24.6,193.5 27.5,196.7 29.1,193.3 29.8,196.8 33.9,193.1 32.9,198.4 37.2,196.5 35.7,200.8 39.8,200.2 38.0,203.8 41.5,204.0 40.2,207.0 45.2,206.4" stroke="#18eaea"/><polyline points="84.1,154.3 87.7,155.5 86.3,158.1 89.8,158.8 86.1,161.6 90.9,164.0 86.4,164.5 88.6,168.5 84.0,166.2 85.2,172.2 80.8,169.1 81.0,173.3 77.6,171.8 79.3,176.3 73.8,174.1 75.5,177.5 71.5,178.2 76.4,180.8 71.2,183.0 76.1,184.9 73.3,187.0 76.9,188.3 74.4,190.6 76.4,193.4 72.5,193.5 73.5,197.0 70.8,196.0 70.4,199.8 66.6,196.0 66.4,201.3 63.1,199.6 64.2,202.9 59.2,202.1 63.9,205.8 59.2,207.4 62.6,209.0 58.4,210.8 63.4,213.3 58.2,214.6 60.6,218.3 57.1,216.5 56.4,219.6 53.2,217.6 52.8,222.2 49.7,220.8 52.2,223.3 49.3,225.6 51.8,226.9 50.4,229.8" stroke="#18eaea"/><polyline points="5.1,158.7 7.2,157.1 8.7,157.5 10.8,156.2 13.2,156.8 14.4,155.1 16.8,155.4 18.4,154.1 20.6,155.0 22.6,153.1 24.9,154.1 26.5,153.2 28.3,153.8 30.7,152.7" stroke="#1414e8"/><polyline points="236.2,93.4 240.7,94.7 238.1,97.5 242.9,97.9 239.4,101.0 242.4,102.8 239.4,105.4 243.1,106.7 240.2,108.9 245.3,110.3 241.6,112.2 244.2,114.4 240.8,116.2 243.7,119.5 238.7,119.0" stroke="#18eaea"/><polyline points="246.3,95.1 251.2,94.3 249.0,98.2 253.6,97.3 249.7,101.8 254.4,101.7 252.0,105.6 257.1,105.2 252.9,108.8 257.6,109.8 254.7,112.7 259.6,113.5 256.2,116.5" stroke="#18eaea"/><polyline points="250.9,102.2 251.7,97.7 254.2,101.0 255.6,97.2 258.3,98.9 259.0,96.4 262.2,98.0 262.9,95.1 265.4,97.1 267.1,93.4 270.0,97.6 271.3,94.0 273.9,96.3 275.3,91.7 277.8,95.0 279.2,90.9 281.2,94.6" stroke="#18eaea"/><polyline points="235.1,120.2 238.4,122.3 235.3,123.8 237.5,125.6 235.3,128.2 238.4,128.9 239.7,130.6 241.7,128.5 244.0,130.0 244.7,126.2 248.2,128.9 248.8,125.8 251.7,126.5 252.3,123.5 255.0,124.9 254.9,121.1 258.6,123.0 259.0,119.9 262.4,120.5 262.6,117.7 265.5,118.1 265.8,115.4 268.8,115.8" stroke="#2cc82c"/><polyline points="234.4,125.6 231.8,129.2 230.0,125.6 227.7,127.6 226.1,124.0 223.8,128.2 222.6,124.0 219.6,127.8 219.9,121.9 216.1,124.5 216.4,119.9 212.0,122.4 212.4,118.9 208.6,120.4 209.6,115.6 205.9,118.0" stroke="#18eaea"/><polyline points="232.5,126.3 233.2,130.1 229.2,128.4 229.9,132.5 226.1,130.5 226.9,134.9 222.8,133.5 223.7,137.2 220.5,136.4 220.9,140.2 217.2,138.5 217.8,143.6 213.8,141.5 213.7,144.2 209.6,142.1 210.9,147.5 207.2,145.4 206.9,148.3 203.9,146.8 203.2,151.0 199.8,148.2 200.0,153.1 196.7,151.0 195.9,154.5 192.7,150.9 192.0,156.2 189.6,152.8 187.8,157.3" stroke="#18eaea"/><polyline points="233.1,130.3 235.4,135.4 230.6,133.3 231.8,137.4 228.7,136.9 229.6,141.1 225.2,138.8 226.3,143.1 222.2,141.5 223.2,146.5 219.6,144.7 220.3,148.8 215.8,146.6 215.9,149.8 212.9,149.2 213.5,153.6 209.7,151.3 209.5,155.0 205.8,152.6 206.5,157.5 202.3,154.8 202.2,158.4 198.9,156.8 198.4,160.3 196.0,158.6" stroke="#18eaea"/><polyline points="280.6,123.4 283.5,124.5 281.9,127.5 285.6,127.8 283.7,131.1 288.3,131.3 285.1,134.9 288.5,135.4 286.4,138.5 290.4,139.7 286.2,142.1 289.3,144.5 286.0,145.5 289.1,149.1 284.4,148.5 286.6,152.2 281.6,150.9 284.1,156.0 279.7,154.0 280.1,158.0 276.7,156.8 275.8,159.6 273.2,156.9 271.2,160.3 269.6,156.2 266.7,161.0 265.2,157.0 262.6,160.4 261.3,156.1 259.4,159.2 257.3,155.6 255.3,158.4 254.0,154.8" stroke="#18eaea"/><polyline points="246.3,202.0 243.5,197.8 247.9,197.6 245.7,194.4 250.6,194.5 247.2,190.5 251.5,190.8 250.0,187.2 254.2,188.2 253.0,184.3 256.4,186.1 256.8,182.3 260.0,185.1 261.1,180.8 264.3,184.1 265.7,181.0 267.7,183.6 269.9,179.5 271.2,183.6 274.1,179.6 274.4,185.3 277.6,183.5 277.8,187.4 281.6,185.4 280.8,189.2 285.0,186.5 283.7,192.1 287.9,190.3" stroke="#18eaea"/><polyline points="293.4,190.8 294.6,194.3 290.9,193.6 292.7,198.0 287.5,195.8 289.5,200.3 284.9,199.6 286.9,203.7 282.9,202.7 284.4,206.2 280.1,206.8 282.9,209.5 279.2,211.5 283.2,212.9 281.7,215.2 286.0,216.1 282.1,220.0 287.5,219.5 284.0,223.6 288.9,223.0 285.9,227.1 290.8,225.8 288.9,230.5 292.7,228.7 293.1,233.3 296.7,229.9 296.6,235.2 300.1,231.9" stroke="#18eaea"/><polyline points="228.9,239.2 228.5,235.6 232.8,237.0 232.1,233.4 234.6,233.9 234.2,229.6 239.0,232.7 238.3,228.6 242.1,229.7 240.7,224.5 244.5,227.7 244.7,223.2 247.7,225.6 249.4,222.8 252.1,224.0 253.3,221.4 255.2,223.1 256.3,219.1 259.5,223.2 261.0,219.3" stroke="#18eaea"/><polyline points="170.2,207.0 165.2,207.1 168.9,203.4 164.4,202.5 166.9,199.6 162.9,199.6 165.1,196.1 161.4,196.1 163.8,192.0 160.3,192.0 161.3,188.7 157.5,190.5 156.7,186.6 154.0,189.1 152.0,186.4 151.2,190.5 147.6,187.9 148.1,192.8 144.2,189.4 143.6,193.4 140.3,191.4 140.5,195.8 137.9,192.0 135.0,196.0 136.4,191.4 132.5,191.6" stroke="#18eaea"/><polyline points="173.6,185.0 177.6,185.2 176.3,188.5 181.2,188.4 179.0,191.8 183.1,192.0 179.6,195.4 184.9,195.7 181.0,199.4 185.1,199.5 182.0,202.5 185.0,204.7 180.7,204.5 183.5,209.2 179.5,207.5 179.6,211.6 176.0,209.3 175.8,213.5 172.9,211.0 172.5,216.2 169.1,212.4 168.6,217.4 166.3,214.7 164.3,217.6 162.1,214.9 160.4,218.4 158.6,215.6 156.5,219.8 154.1,215.8" stroke="#18eaea"/><polyline points="149.5,238.3 145.5,240.2 145.4,236.2 141.7,237.8 143.7,233.1 138.9,234.8 141.3,229.5 135.7,231.3 138.2,227.9 134.8,227.5 135.9,224.7 131.9,223.9 134.4,220.2 129.7,221.2 133.1,216.9" stroke="#18eaea"/><polyline points="497.2,2.3 498.9,4.3 498.1,5.7 499.4,8.2 498.1,9.9 499.8,12.0 499.2,13.8 500.3,15.4 499.9,17.7 501.4,19.3 500.9,21.5 503.0,23.0 503.0,25.8 504.6,27.2 504.6,29.5 506.6,30.1 508.0,32.1 510.0,32.1 511.0,34.2 513.4,33.7 514.6,35.6 516.7,35.0 519.1,36.2 521.3,34.9 523.0,35.3 524.6,34.0 526.9,34.4 528.5,32.5 531.0,32.5" stroke="#b8b8b8"/><polyline points="337.4,70.4 338.5,68.6 340.9,70.1 342.5,68.2 345.4,69.0 346.8,66.5 348.7,67.9 349.9,65.7 352.7,67.2 353.5,64.2 356.5,65.7 357.4,63.4 360.3,64.0 361.4,61.6 363.8,62.5" stroke="#2cc82c"/><polyline points="300.5,83.4 301.2,79.0 303.8,82.5 305.5,78.4 307.9,82.2 309.7,77.8 312.1,83.0 313.6,78.5 315.2,83.0 318.2,78.0 318.5,84.2 322.7,79.3 322.6,84.7 325.6,79.7 327.5,86.0 329.4,81.1 331.6,84.0 332.8,79.6 335.5,81.9 336.7,78.4 339.4,81.4 341.3,77.0 343.2,81.9 345.5,78.3 347.2,81.6 349.4,77.4 350.9,83.2 352.7,78.7 355.1,84.3 356.4,79.3 359.6,81.7 360.4,78.7 363.1,82.0 364.9,78.0 366.8,81.4 368.8,76.4 370.6,82.5 372.7,78.6 374.4,82.2 376.8,78.7 378.1,82.7" stroke="#18eaea"/><polyline points="353.0,80.6 350.9,77.2 356.6,77.8 353.9,74.1 358.6,75.0 356.9,70.4 360.7,72.7 360.2,68.4 363.9,70.1 364.1,65.4 367.6,69.6 368.3,65.8 371.3,69.2 372.3,64.7 374.3,68.2 376.4,64.2 378.1,68.3 380.3,66.1 381.6,70.5 385.1,65.6 385.6,71.4" stroke="#18eaea"/><polyline points="303.8,83.7 308.2,85.9 303.8,88.3 308.0,89.8 303.8,91.9 308.7,93.7 304.5,96.4 307.7,97.5 305.0,101.1 309.8,100.5" stroke="#18eaea"/><polyline points="314.4,98.6 312.5,96.2 314.9,94.4 313.2,92.0 315.7,90.5 314.1,87.3 318.3,87.8 317.8,84.5 320.8,85.2 320.8,81.6 323.6,83.4 325.2,80.8 327.5,82.9 329.3,81.0 330.6,84.0 333.9,81.3 334.4,84.9 337.3,84.7 336.5,87.1 340.3,87.6 338.6,90.6 341.4,92.0 339.7,94.2 343.3,95.9 340.4,98.1 342.9,100.1 340.2,102.6" stroke="#2cc82c"/><polyline points="318.4,109.1 323.2,106.4 321.6,111.4 326.4,108.8 324.5,114.0 329.1,110.5 328.7,116.3 332.6,113.1 332.9,117.4 336.1,113.3 337.2,118.1 339.4,114.2 341.5,118.3 343.1,114.0 345.7,116.8 346.3,112.0 350.0,114.9 349.5,111.2 352.8,111.6 351.5,108.1 356.7,109.7 353.8,104.5 359.3,105.9 356.0,101.8 358.8,101.1 356.2,98.3" stroke="#18eaea"/><polyline points="400.6,80.6 403.1,80.5" stroke="#2cc82c"/><polyline points="466.6,158.4 462.5,157.2 465.7,155.0 462.7,153.2 466.1,150.4 460.9,149.7 465.0,146.5 460.0,146.7 463.0,142.1 459.5,143.1 460.2,138.3 456.3,141.6 456.3,136.2 452.2,140.3 452.3,134.7 449.6,138.2 447.5,135.0 446.0,138.4 442.9,135.6 441.9,139.9 439.3,136.9 438.8,141.6 435.4,140.0 435.7,143.0 431.6,142.1 434.1,146.6 429.5,145.7 430.6,149.4" stroke="#18eaea"/><polyline points="543.8,119.5 540.3,120.4 540.9,116.8 537.3,116.9 538.2,113.0 535.4,114.1 535.4,110.4 531.5,112.8 530.9,109.2 528.2,110.9 526.2,108.6 525.4,112.5 522.2,111.5 522.0,114.8 518.6,113.3 519.3,116.4 514.9,115.9 516.5,119.8 512.7,119.2 514.9,123.4 511.0,123.8 513.3,126.0 510.0,128.2 514.2,129.2 513.3,132.5 516.3,131.4 516.5,134.6 520.3,132.6 519.6,137.1" stroke="#2cc82c"/><polyline points="333.2,169.1 336.6,168.1 335.5,171.8 339.0,171.1 337.3,175.5 341.8,174.8 340.6,177.6 345.4,177.6 341.1,181.4 346.1,182.9 340.9,184.7 344.1,187.6 340.3,188.7 343.6,190.9 339.0,192.1 343.6,194.4 338.0,197.3 343.4,197.8 340.0,201.2 345.9,200.6 342.2,205.1 346.7,205.2 344.4,208.5 349.1,208.2 345.7,211.5 349.7,213.0 346.9,215.5 350.1,217.0 347.1,219.2 350.7,220.6 347.5,223.1 351.0,224.8 348.8,227.5 354.2,227.4 349.5,232.2 354.2,231.4 353.4,234.6 357.4,234.0 354.8,238.4 359.6,237.3" stroke="#18eaea"/><polyline points="317.1,188.6 312.4,182.6 318.0,183.6 315.0,178.7 319.8,181.1 319.6,177.0 322.6,180.4 324.9,177.0 324.5,182.2 330.4,177.1 327.1,184.3 333.2,181.2 330.0,185.6 337.1,184.9 331.6,188.4 338.3,189.9 332.8,191.8 335.3,194.9 331.0,195.2 335.0,199.6 328.0,196.5 331.0,203.6 326.7,199.3 325.9,206.4 323.9,197.6 320.0,204.8 321.1,197.6 316.8,200.7 318.5,196.6 311.4,198.3 318.9,194.5 311.3,192.4 317.1,190.6 310.5,188.4" stroke="#2cc82c"/><polyline points="380.9,240.3 379.2,237.5 382.9,237.0 380.4,233.2 384.5,233.3 382.5,229.8 387.6,230.7 385.5,226.2 388.7,226.8 388.6,223.3 392.3,225.2 392.4,221.4 395.3,223.8 396.1,218.7 398.5,221.9 399.9,218.8 402.4,221.0 404.3,218.4" stroke="#18eaea"/><polyline points="562.0,157.4 562.5,161.5 559.1,160.2 559.4,163.5 555.0,161.9 555.6,166.3 552.3,163.5 551.9,167.9 549.4,165.6 548.5,169.8 545.1,165.5 543.8,170.9" stroke="#18eaea"/><polyline points="541.5,169.3 541.1,172.1 538.5,172.2 539.0,175.4 535.9,175.9 536.6,178.7 533.7,179.0 534.7,181.7 531.5,181.9 532.0,185.1 529.1,185.5 529.4,187.7 526.2,187.8 526.2,191.2 522.6,189.9 522.8,193.1 520.3,192.8 520.2,195.3 516.9,195.4 517.8,198.9 515.8,199.5 517.0,201.9 514.3,203.2 516.4,206.7 513.0,206.8 513.2,209.8 510.6,209.2 509.9,212.0 506.8,211.0 506.6,214.2" stroke="#18eaea"/><polyline points="493.5,190.6 494.9,194.1 491.3,194.1 493.2,198.7 487.6,196.8 491.0,201.6 485.6,199.7 488.4,204.3 484.2,204.3 487.4,207.8 482.0,207.6 484.8,211.2 482.0,211.9 484.7,214.7 481.1,216.4 483.7,218.3 480.7,220.7 484.8,221.5 482.6,224.3 487.1,224.8 484.4,228.3 487.2,229.1 484.0,231.5 487.9,233.8 484.4,235.5 486.5,237.8 483.0,238.9" stroke="#18eaea"/><polyline points="598.5,161.9 599.9,167.7 595.8,165.8 596.3,168.8 591.6,166.7 593.8,171.9 589.0,169.4 590.1,173.8 587.0,173.9 587.7,176.7 583.4,176.5 587.2,180.5 581.4,181.1 586.8,183.6 583.3,186.0 586.7,186.8 584.3,190.4 588.1,190.1 586.3,194.0 591.2,192.9 587.7,196.0 591.6,198.7 587.9,199.8 589.5,203.0 585.5,201.7 585.3,206.2 582.8,203.0 580.2,205.2 578.7,202.6 576.1,204.9 575.2,201.5" stroke="#18eaea"/><polyline points="561.7,214.4 556.2,221.6 558.0,213.8 553.1,218.1 554.3,210.3 550.5,216.3 548.3,210.4 548.2,217.8 543.3,211.3 545.6,220.6 540.7,216.1 541.5,220.7 535.9,218.3 540.2,222.7 534.6,224.2 540.8,225.9 536.8,228.8 541.2,228.2 538.5,234.1 542.8,231.3 541.8,237.3 546.3,232.2 547.5,237.4 549.0,231.3 553.2,238.7 551.6,229.8 557.5,235.8 554.6,227.6" stroke="#2cc82c"/><polyline points="674.3,25.8 676.9,24.0 678.6,27.0 681.2,25.2 682.3,28.1 684.6,26.8 685.6,29.9 688.1,27.5 689.8,29.8 692.2,27.9 693.7,31.0 696.3,28.6 698.3,31.3 699.0,27.3 701.9,28.4 701.8,24.0 703.9,26.4 706.6,25.7 706.2,29.1 710.1,27.7 709.6,31.6 712.5,30.6 713.1,34.3 715.4,32.2 717.8,32.6 718.5,30.1 721.4,31.2 721.6,27.9 724.8,30.2 726.3,26.1 728.0,30.2 730.4,28.5 731.1,31.2 734.2,30.1 734.2,34.3 737.6,32.6 738.5,36.0 740.5,33.5 743.0,36.2 743.9,32.1 747.0,34.3 747.6,30.0 749.8,32.3 752.5,30.1 753.0,32.7 756.1,32.0" stroke="#18eaea"/><polyline points="802.0,29.7 804.9,29.5 805.4,31.9" stroke="#f020f0"/><polyline points="825.2,5.1 825.8,10.4 822.1,7.8 822.2,12.2 818.7,10.5 820.9,14.0 815.1,14.5 819.8,17.4 814.8,18.8 818.6,21.7 815.6,23.0 817.1,25.4 813.9,27.0 816.6,28.7 815.9,32.0 820.1,29.3 819.5,33.8 822.4,31.9 823.7,35.0 825.9,31.3 829.0,34.4 828.7,30.9 831.9,31.7 832.6,27.6 834.8,32.9 837.4,29.7 838.1,33.8 841.2,32.0 840.9,35.8 845.3,33.7 844.7,37.7 848.4,37.4 844.4,38.7 847.3,43.4 843.3,41.5" stroke="#18eaea"/><polyline points="841.9,56.8 842.5,60.2 838.1,57.8 839.5,63.5 834.4,61.1 838.7,66.9 832.6,65.2 836.0,69.0 830.0,68.3 833.9,72.0 829.6,73.4 832.4,76.0 828.6,77.1 831.7,79.1 828.7,81.7 832.3,83.0 828.7,85.5 833.9,86.5" stroke="#b8b8b8"/><polyline points="835.2,104.8 832.6,101.4 836.4,100.7 833.6,98.1 836.5,97.3 836.0,94.2 838.9,94.6 839.1,91.4 842.3,94.1 843.8,90.3 846.1,94.0 848.4,90.1 849.3,94.2 852.5,91.9 853.2,95.2" stroke="#18eaea"/><polyline points="823.6,104.0 825.8,101.5 828.1,104.7 830.2,103.0 831.4,105.1 833.8,104.1 835.0,107.3 837.8,105.4 837.9,109.2 841.2,108.4 841.7,111.5 844.0,111.6" stroke="#b8b8b8"/><polyline points="605.1,54.5 608.4,54.7 608.3,57.0 610.8,57.4 610.1,60.2 612.8,61.2" stroke="#2cc82c"/><polyline points="616.5,67.1 619.4,64.3 620.6,67.5 623.8,65.6 622.6,69.5 626.1,69.4 623.1,72.9 628.1,73.4 624.5,76.6 628.9,77.2 627.9,80.5 632.3,78.5 631.1,83.7 634.6,80.2 636.9,84.0 637.3,79.7 640.2,80.2 639.9,76.1 643.5,78.7 644.6,74.5 646.6,78.0 649.5,74.7 648.9,79.1 653.2,76.4 652.5,80.9 656.2,79.2" stroke="#18eaea"/><polyline points="649.3,75.1 647.2,73.2 650.8,71.6 647.3,68.7 651.7,69.2 650.2,64.0 653.6,66.2 654.1,61.8 656.9,65.3 658.3,61.4 660.7,65.3 662.9,61.2 664.4,65.6 667.1,61.7 667.7,66.4 671.9,61.7 671.5,66.7 674.7,65.2 673.3,69.5 678.1,68.5 675.3,72.9 679.4,72.7 677.6,75.5 682.5,76.1 678.6,79.4 682.4,80.4 679.1,83.2" stroke="#18eaea"/><polyline points="633.4,84.3 633.4,89.0 629.1,86.0 629.6,89.9 626.4,89.4 626.4,92.0 622.3,90.5 622.9,94.5 619.2,93.4 620.1,97.3 616.8,96.8 618.9,101.6 613.6,99.0 615.4,103.5 612.0,103.9 613.0,106.4 609.4,106.2 611.6,110.4 606.7,109.5 608.2,112.6 603.8,112.9 607.7,116.9 603.4,116.6 605.2,120.1" stroke="#18eaea"/><polyline points="661.0,86.3 664.0,87.2 663.7,89.5" stroke="#2cc82c"/><polyline points="703.0,83.9 703.5,88.3 699.6,86.6 699.6,90.1 695.8,87.7 696.2,92.6 692.6,90.5 692.6,93.7 689.6,91.7 690.0,97.0 686.0,93.6 686.0,99.0 682.0,94.9 682.0,100.2 679.0,97.4 678.8,101.9 674.8,97.7 674.6,102.1 670.7,99.8 670.8,104.4 667.5,102.4 667.7,106.4 664.2,104.4 663.0,107.0 660.6,105.4 660.2,109.5 656.8,106.4" stroke="#18eaea"/><polyline points="739.5,106.7 743.9,107.4 740.8,110.3 744.0,111.8 742.1,114.2 745.9,114.4 743.5,118.8 747.9,115.9 748.1,122.0 751.2,117.0 752.4,121.5 754.4,117.5 756.9,122.4 758.1,117.2 761.4,120.0 761.0,116.5 764.5,115.9 761.5,112.7 767.3,113.1 763.5,108.9 767.7,108.1 764.4,105.7" stroke="#18eaea"/><polyline points="773.5,105.1 774.5,102.1 777.2,103.0 777.6,100.5 780.4,102.3 782.2,98.6 784.0,101.8 786.4,99.9 787.8,102.2 790.3,101.6 790.5,104.4 793.9,103.4 793.6,107.2 796.4,107.7 794.1,110.6 797.4,111.2 795.3,114.1 799.5,114.8 798.6,117.7 801.2,117.7 802.3,120.5 804.7,118.3 806.3,120.4 809.0,118.4 810.7,121.2 813.1,119.7 814.2,122.3 817.1,120.1 818.0,123.3 820.3,122.2 821.3,124.7 824.3,124.2 822.5,127.7 826.7,128.0 824.3,131.3 828.0,132.0 825.6,135.0 829.2,135.2 827.1,139.4 830.9,138.1 830.2,142.5 833.7,139.7 833.9,144.6 836.9,142.1 838.4,145.3 840.8,143.1 841.7,146.6 844.3,145.1 846.2,148.0 848.9,145.1 849.6,149.2 852.8,146.5 853.5,150.7" stroke="#18eaea"/><polyline points="716.5,133.2 718.0,131.1 719.8,131.9 721.7,129.4 723.7,131.6 726.1,128.9 728.1,131.3 730.1,128.8 731.7,131.1 734.2,129.3 735.4,132.0 738.0,129.9 739.1,132.8 742.2,130.9 743.6,133.3 745.4,132.5 746.9,134.5 749.9,133.7 750.9,136.2 753.5,135.3 754.5,137.8 757.4,136.4 757.9,138.9 761.0,138.3 761.9,140.7 764.7,139.8" stroke="#18eaea"/><polyline points="806.2,174.5 809.3,174.2 808.6,177.2 811.8,177.3 811.0,181.2 814.0,180.8 814.6,183.3 816.7,183.0 817.7,186.6 820.3,183.8 823.1,184.8 822.6,181.5 826.2,182.2 824.5,178.1 828.4,179.8 828.7,176.0 831.7,178.1 834.1,176.9 834.4,179.7 837.2,179.4 837.4,182.7 840.9,181.3 841.5,184.8 844.1,182.7 846.1,184.9 848.1,182.7 849.7,185.4 852.0,182.6 853.8,185.9" stroke="#18eaea"/><polyline points="603.9,142.1 606.8,145.7 601.8,145.8 606.1,149.1 601.6,149.6 605.1,153.3 600.9,154.2 604.0,155.9 600.3,158.6 604.4,159.8 600.0,162.4 604.8,163.9" stroke="#18eaea"/><polyline points="602.4,174.1 601.2,170.4 604.6,170.3 603.9,167.3 606.7,167.8 607.1,164.4 610.0,165.9 610.9,163.0 613.2,164.8 614.7,161.4 616.7,163.6 619.0,161.8 621.2,164.7 623.1,162.4 624.0,165.4 627.1,163.9 627.8,166.3 630.6,166.2 630.0,169.5 633.6,169.7 633.2,172.5" stroke="#2cc82c"/><polyline points="608.0,173.4 611.1,172.3 610.6,176.1 614.6,175.0 613.4,178.7 617.4,178.1 616.7,181.2 620.3,180.0 619.6,184.1 623.6,181.9 624.2,185.7 626.7,184.4 627.3,187.2 630.7,187.5 628.4,190.7 630.7,191.9 628.2,194.6 631.7,196.3 628.1,198.3 632.5,199.7 630.1,202.6 633.7,201.8 634.1,205.4 636.7,203.9 637.5,207.8 640.1,206.2 640.6,208.8 643.9,209.0 642.6,212.4 646.2,212.1 645.5,215.3 649.2,215.4 647.5,218.4 650.8,219.8 646.4,220.6 647.3,224.5 643.4,222.6 644.3,225.8 641.4,227.3 644.5,228.7 642.5,231.9 645.5,232.5 644.2,235.0 647.7,236.6 644.7,239.3" stroke="#18eaea"/><polyline points="634.3,186.6 638.7,186.5 637.6,189.8 639.8,190.6 639.3,193.2 642.3,194.6 640.4,197.1 642.0,198.5 639.5,200.5 642.1,203.0 639.4,204.6 640.5,207.3 637.2,206.9 637.3,210.2 635.1,209.8 634.3,212.4 631.1,210.1 629.7,213.6 627.8,210.4 625.0,212.2 624.7,208.4 621.0,211.5 622.2,206.8 618.2,208.3 618.8,204.6 615.1,204.7 617.1,201.8 614.0,200.6 615.6,197.7 612.7,196.7" stroke="#2cc82c"/><polyline points="602.0,180.6 607.3,181.5 602.1,184.8 607.6,185.6 604.6,187.8 606.8,190.0 603.6,191.9 607.3,193.9 604.3,195.6 608.0,198.3 603.7,199.2 605.8,202.2 601.5,203.7 605.3,205.1 603.8,208.2 607.5,208.9 604.2,212.6" stroke="#18eaea"/><polyline points="680.4,180.0 681.8,183.0 677.9,182.8 679.4,186.3 676.1,187.0 677.6,190.5 672.3,189.1 676.1,193.3 670.6,193.4 673.5,196.1 670.4,197.6 672.8,199.9 668.0,201.5 672.1,203.7 667.3,205.5 671.0,207.6 667.8,210.1 672.0,211.7 669.0,213.7 673.4,215.0 670.2,218.0 672.8,218.9 671.1,222.3 675.7,221.9 673.3,225.5 677.8,224.3 676.2,228.9 680.7,227.5 679.7,231.5 683.4,229.7 683.3,233.9 686.2,231.8 686.7,236.2 689.4,234.7" stroke="#18eaea"/><polyline points="674.6,199.0 675.4,196.9 678.5,197.9 679.1,195.4 682.0,195.7 683.3,193.8 685.7,195.6 687.0,192.4 689.0,194.4 691.0,192.4 693.4,195.4 695.6,193.2 697.3,194.6 699.6,193.6 701.5,195.8 703.6,194.2 705.3,196.0 707.5,194.2 709.2,196.8 710.9,195.5 712.7,197.6" stroke="#18eaea"/><polyline points="646.6,212.4 652.1,213.4 648.4,216.1 652.8,216.8 649.8,220.0 654.9,220.2 651.9,223.8 656.4,223.0 654.9,227.7 658.7,225.1 659.0,229.4 663.0,226.2 662.3,230.7 665.8,228.7 665.8,232.7 669.9,230.8 669.0,234.8 673.3,233.8 671.3,238.2 676.4,236.3 673.7,240.7" stroke="#18eaea"/><polyline points="833.4,210.3 834.7,213.6 831.2,213.5 833.0,216.6 829.4,217.0 831.1,219.8 827.3,222.1 833.3,223.0 829.0,226.6 834.1,226.8 830.6,229.2 832.4,231.4 828.1,232.2 830.7,235.9 826.3,235.3 829.2,239.6 825.1,239.3" stroke="#18eaea"/><polyline points="835.1,220.2 837.2,221.9 834.8,223.9 837.9,226.0 835.8,228.4 838.0,230.3 835.5,232.2 837.4,233.8 835.6,236.1 836.8,237.8" stroke="#1414e8"/><polyline points="2.3,246.1 4.0,244.5 6.1,246.2 8.3,244.2 9.7,246.2 12.2,245.6 13.4,247.2 16.3,246.4 17.0,249.4 19.8,248.6 20.2,250.8" stroke="#1414e8"/><polyline points="1.7,255.5 3.6,254.1 6.0,255.0 8.0,253.0 10.2,254.8 11.6,253.4 13.9,254.6 15.9,252.9 17.6,255.0 19.8,252.6 21.6,255.2 23.7,252.8" stroke="#1414e8"/><polyline points="68.2,270.3 64.5,269.7 67.2,266.5 61.7,266.3 65.1,262.9 61.2,262.7 63.3,258.4 58.0,260.3 59.1,256.6 55.6,257.0 54.6,254.3 52.0,256.3 50.7,253.1 48.8,255.5 46.7,252.2 45.0,256.1 42.4,254.1 42.6,258.4 38.9,256.4 39.3,260.0 34.9,259.2 38.4,263.0 32.9,263.6 36.0,266.0 32.4,267.2 35.5,270.4 32.3,271.3" stroke="#2cc82c"/><polyline points="96.7,251.3 99.2,250.5 100.3,252.9 102.8,251.9" stroke="#2cc82c"/><polyline points="130.7,268.8 126.2,269.1 128.4,265.5 124.8,264.8 127.5,262.2 123.7,260.5 127.5,259.0 125.1,256.0 129.6,256.0 125.5,251.9 131.1,253.3 129.2,249.0 133.1,250.8 132.2,246.3 135.4,248.2 136.7,244.5 139.6,247.2 140.5,243.1 143.3,245.1 144.2,242.5 147.4,245.0 148.3,240.7 150.8,244.2 151.3,239.0" stroke="#18eaea"/><polyline points="152.8,242.3 155.2,244.0 152.5,246.1 154.6,247.9 152.7,250.2 154.3,252.1 152.2,253.8 154.6,256.6 151.5,257.2 151.9,260.4 149.5,260.4 150.5,263.7 146.1,263.7 149.2,266.5 146.4,268.9 150.2,270.5 147.8,273.5 152.4,272.9 149.3,277.2 153.3,277.4 152.8,279.5 155.9,279.6 155.0,284.0 159.0,282.4 158.1,286.6 162.2,284.8 161.6,288.1 165.2,287.5" stroke="#18eaea"/><polyline points="126.4,270.9 127.9,276.4 123.7,274.2 124.1,277.6 120.0,275.1 120.5,279.3 116.5,278.7 118.0,282.1 114.3,282.6 118.0,286.0 114.5,287.1 117.4,289.6 112.8,291.0 118.1,292.9 114.4,295.5 119.0,295.8 115.6,299.8 120.4,299.9 115.6,302.7 119.9,305.5 116.1,305.9 117.4,308.9 114.5,309.3 115.4,312.7 111.9,312.8 114.0,316.7" stroke="#18eaea"/><polyline points="128.5,274.3 132.0,275.0 129.4,278.2 133.5,279.5 130.7,282.5 135.1,283.0 132.0,286.3 135.5,287.2 133.7,289.4 137.7,290.7 133.8,293.8 137.9,294.8 135.3,297.0 137.6,299.5 134.2,300.1 134.7,303.3 132.3,303.7 132.5,306.8 128.8,305.6 129.5,309.9 126.2,308.3 126.8,312.6 123.7,311.5 123.5,315.0 120.7,313.7 119.8,316.3 116.3,314.8" stroke="#18eaea"/><polyline points="142.5,290.1 142.8,288.2 145.1,287.8" stroke="#f020f0"/><polyline points="131.0,330.6 133.2,328.7 135.0,330.5 137.4,328.5 138.4,331.1 141.1,329.4 142.5,331.7 144.7,330.1 146.3,333.1 148.9,331.3 150.5,333.9 152.9,332.7 154.2,334.5 156.7,332.6 158.9,335.3 160.2,332.9 162.6,334.7 164.0,332.2 166.9,333.8 168.3,330.4 170.3,333.0 172.3,330.2 174.3,331.6 175.8,330.3 177.9,332.2 180.6,329.4 181.8,332.4 184.3,330.8 185.8,333.0 188.5,331.0 189.1,334.3 192.0,333.2 192.7,335.7 195.8,334.7 196.2,337.9 199.5,337.3 199.3,340.4 202.9,339.7" stroke="#18eaea"/><polyline points="146.6,331.8 147.9,335.2 142.9,334.2 144.8,338.1 141.0,337.6 142.4,341.3 138.5,341.3 140.9,344.6 138.0,346.1 139.4,348.2" stroke="#18eaea"/><polyline points="154.6,348.2 152.3,348.8 150.4,347.2 148.4,348.1 146.0,346.6 145.0,348.4 142.9,348.9 143.0,351.2 140.5,352.8 142.0,355.0 140.7,357.3 142.7,358.0 143.1,360.7 145.2,360.0 147.4,362.0 149.3,361.3 151.1,361.8 152.2,359.5 154.6,359.5" stroke="#2cc82c"/><polyline points="226.8,239.9 228.3,243.8 223.6,243.0 225.4,246.7 221.7,246.8 224.8,251.0 219.1,249.1 220.6,253.2 217.1,251.9" stroke="#18eaea"/><polyline points="299.8,268.9 297.4,270.5 296.5,266.6 293.5,268.9 292.6,265.3 289.5,268.3 289.4,264.2 286.1,266.8 286.0,262.7 282.4,264.9 282.5,260.8 278.3,262.8 279.6,258.6 275.0,260.5 275.9,256.2 272.6,257.0 272.5,254.1 269.1,255.1 269.1,251.4 266.2,253.0" stroke="#18eaea"/><polyline points="263.6,252.6 263.7,256.9 260.4,255.0 260.2,258.8 256.3,256.6 256.5,261.3 252.8,259.3 254.2,263.4 248.9,261.9 251.1,265.9 247.5,265.8 250.6,269.2 246.9,271.0 250.9,271.8 249.8,275.4 253.4,273.1 253.9,277.8 257.3,275.3 258.0,277.7 261.2,277.0 260.1,280.4 264.4,280.0 262.1,283.8 266.3,283.7 263.9,286.8 269.4,287.3 265.9,290.0 270.0,291.8 266.8,293.6 269.6,295.8 267.1,297.8 270.3,299.5 268.0,302.3 272.2,302.3 268.6,306.2 273.9,305.4 271.3,310.0 275.6,309.7 273.7,311.8 276.9,314.3 272.2,315.7 275.9,318.6 271.9,318.9" stroke="#18eaea"/><polyline points="203.4,277.2 205.3,280.3 201.4,280.5 203.7,283.8 200.3,284.4 202.2,287.8 198.1,288.0 200.9,290.6 196.5,292.7 199.9,294.6 196.4,296.9 201.3,298.4 197.9,301.0 202.3,301.5 197.4,305.1 201.6,305.6 199.1,309.2 203.2,309.5 201.3,313.2 205.5,312.8 204.0,315.8 207.4,315.7 206.6,319.5 210.2,318.1 210.6,321.1 213.8,320.0 214.2,323.4 217.7,321.8 217.9,326.0 220.7,323.1 221.1,327.5 224.0,325.0 225.6,329.2 228.2,325.7 229.1,329.6" stroke="#18eaea"/><polyline points="223.1,326.0 224.6,325.9 226.4,328.1 228.6,328.1 229.7,329.8 231.9,329.7 233.7,331.4 236.2,331.1 237.4,332.3 239.9,331.9 241.5,333.4 243.9,333.0" stroke="#1414e8"/><polyline points="248.9,341.4 252.1,344.9 248.1,345.5 250.1,348.4 246.0,349.1 247.7,352.3 243.1,350.8 244.8,355.4 240.9,353.8 241.6,358.3 237.8,355.6 237.0,359.6 234.2,356.8 233.1,360.9 230.5,358.7 229.4,361.1 226.6,359.7 225.3,362.0 223.2,360.0 220.8,363.4 218.9,358.1 216.4,362.6 215.0,359.2 212.9,361.6 211.7,356.8 209.0,360.2 208.6,355.2 204.2,358.2 205.2,355.0 202.3,355.1" stroke="#18eaea"/><polyline points="41.3,349.8 43.7,351.7 41.8,354.1 44.0,355.3 42.3,357.3 44.6,360.1 41.4,360.8 42.7,363.3 40.3,365.0 40.9,367.3 38.5,367.9 39.5,371.3" stroke="#b8b8b8"/><polyline points="12.2,387.6 13.8,384.9 16.4,387.2 17.8,383.8 19.8,385.8 21.8,383.7 24.2,384.4 24.9,381.9 27.8,382.5 28.6,380.2 31.5,380.8 32.0,377.7 35.1,378.7 34.6,375.5" stroke="#b8b8b8"/><polyline points="35.7,378.1 39.4,378.6 38.0,381.6 41.6,381.8 38.6,384.5 43.0,386.0 39.8,387.7 41.9,391.1 37.5,390.5 38.9,394.6 35.7,394.3 36.5,397.3 32.4,396.6 33.3,400.4 29.3,400.2 31.4,403.5 27.4,403.7 29.4,407.2 26.1,407.8 28.1,410.1 24.2,411.3 27.8,413.1 24.7,416.6 29.3,416.7 26.2,419.3 28.2,422.1 25.7,422.6 25.3,425.3 22.2,424.4 23.4,428.5 19.5,428.1 20.4,431.7 17.9,431.3 19.0,434.6 15.3,435.0 16.6,437.4 12.6,438.7 16.4,441.2 12.1,442.8 16.3,445.3 11.8,447.3 15.7,449.2 12.0,451.1 14.9,453.5" stroke="#18eaea"/><polyline points="2.0,414.2 3.9,412.1 6.1,414.5 8.5,412.6 10.0,414.8 11.9,413.5 13.5,415.3 15.9,414.1 17.7,415.8 20.1,414.3 21.5,416.3 23.8,414.2 26.0,417.0 28.0,415.5 29.3,417.7 31.8,416.0 33.2,417.9 35.5,417.7 37.0,419.9 39.9,418.5 41.0,421.3 43.3,420.7 43.8,423.8" stroke="#18eaea"/><polyline points="52.8,417.5 55.7,415.5 56.1,418.2 59.2,416.0 59.5,420.4 63.6,417.3 63.1,422.7 67.7,419.6 65.1,424.5 69.1,424.0 67.1,427.8 72.2,426.6 70.2,430.8 74.5,431.0 72.3,433.5 75.1,435.3 73.2,437.8 75.9,439.5 72.6,441.1 77.4,443.3 72.0,444.7 76.6,448.0 72.6,449.2 74.7,451.3 71.1,452.6 74.1,456.6 68.2,455.0 71.5,459.4 66.5,458.1 67.8,462.6 64.8,461.1 64.4,464.4 60.8,462.4 60.3,466.1 57.3,463.6" stroke="#18eaea"/><polyline points="92.0,369.8 93.5,365.4 96.0,370.2 98.0,366.4 99.6,369.3 102.5,365.6 102.9,371.0 106.4,368.4 105.3,373.4 109.1,371.2 109.2,374.4 112.2,374.7 111.1,377.8 115.6,377.6 113.5,380.6 117.1,381.1 114.1,384.9 119.0,384.8 116.9,387.4 120.7,389.6 116.7,391.5 118.6,393.7 115.7,394.7 119.0,398.1 114.3,398.6 118.0,401.7 113.2,402.4" stroke="#18eaea"/><polyline points="90.3,406.9 93.9,404.9 94.2,408.5 97.1,406.0 98.2,410.0 100.8,407.9 101.7,411.1 105.8,410.3 103.9,413.8 106.8,414.8 103.5,417.4 107.7,419.1 103.1,421.6 107.2,422.9 104.3,425.3 108.3,426.9 105.4,430.0 108.4,430.9 106.2,433.4 110.1,434.0 108.2,437.4 111.8,438.2 109.8,441.0 112.8,442.5 110.3,444.2 113.1,446.3 110.7,449.3 114.7,449.2 115.0,452.4 118.0,449.3 119.4,451.5 121.9,449.2 123.9,452.8 125.5,447.7 128.4,451.7 128.8,446.5" stroke="#18eaea"/><polyline points="103.3,414.8 106.5,414.1 106.0,417.8 109.4,416.7 108.9,420.4 112.3,419.7 111.0,423.5 115.1,422.7 113.5,426.9 118.1,425.9 116.6,429.7 119.8,429.5 118.5,432.7 122.4,433.0 120.4,436.5 123.7,436.6 122.6,439.5 126.2,440.0 124.1,443.1 128.2,443.5 126.6,446.8" stroke="#18eaea"/><polyline points="131.6,413.5 130.2,409.8 133.8,410.7 132.5,405.7 137.6,408.2 135.9,403.4 139.7,406.0 140.3,401.2 143.4,404.8 144.5,401.1 147.6,404.3 148.9,399.1 150.7,403.5 153.4,400.3 154.2,403.4 157.6,401.7 157.0,406.1 161.9,402.9 160.5,407.4 164.9,405.4 164.2,409.8 167.4,409.0 165.4,412.8 169.0,413.1 167.3,415.6 171.2,417.2 168.3,419.6 172.0,421.4 168.4,423.1 170.5,425.9 166.4,426.6" stroke="#18eaea"/><polyline points="140.5,399.9 139.2,395.6 143.3,396.9 142.4,392.4 145.9,394.5 146.5,390.8 150.0,393.3 151.1,389.7 153.6,392.1 154.8,388.7 156.7,392.0 159.2,387.0 161.0,391.8 163.8,388.4 164.4,392.0 167.3,390.1 168.1,395.1 170.9,390.4 172.0,395.9 174.7,391.4 177.1,395.0 178.4,391.5 180.3,394.0" stroke="#18eaea"/><polyline points="298.8,344.7 299.5,348.7 295.2,346.5 296.9,351.8 292.2,349.3 292.7,353.5 289.2,352.6 290.3,355.8 285.9,355.3 288.2,358.5 283.3,358.7 286.2,362.3 282.7,363.0 285.4,366.3 282.0,367.2 286.0,369.8 281.2,371.2 285.2,373.4 281.6,375.8 285.2,377.3" stroke="#18eaea"/><polyline points="300.1,421.4 297.8,423.3 296.7,419.0 293.4,423.4 293.0,418.9 289.8,421.0 289.5,417.1 285.9,420.4 286.2,415.6 282.2,417.9 283.1,413.6 278.8,415.2 279.3,411.7 275.5,413.0 276.6,408.1" stroke="#18eaea"/><polyline points="232.4,480.6 232.5,478.0 235.8,477.3 235.4,474.9 238.0,475.2 239.2,472.3 241.7,473.7 243.8,473.6 244.5,475.9 247.0,475.3 247.5,478.3" stroke="#2cc82c"/><polyline points="299.3,455.2 299.1,457.8 295.5,456.5 295.9,460.4 292.2,459.9 293.5,464.4 288.4,461.2 291.0,466.4 285.3,465.0 288.9,469.1 284.7,469.8 286.8,472.6 281.8,472.4 285.8,476.2 280.5,476.5 283.3,480.0" stroke="#18eaea"/><polyline points="300.3,269.5 301.6,267.7 304.0,269.1 305.5,267.3 308.1,268.1 309.0,265.4 311.4,264.9 312.1,262.5" stroke="#18eaea"/><polyline points="356.4,245.8 354.3,242.1 358.8,243.2" stroke="#18eaea"/><polyline points="379.2,239.4 383.5,242.6 379.9,243.9 382.6,246.3 379.8,247.8 383.4,248.9 381.3,252.6 384.8,252.0 384.9,255.1" stroke="#18eaea"/><polyline points="479.2,242.3 482.3,240.0 483.2,244.2 486.6,242.1 486.2,245.5 489.8,245.4 487.7,248.3 489.8,250.0 487.5,252.5 489.5,254.1 487.2,256.2 488.6,258.4 486.0,259.9 488.1,262.8 485.6,264.2 486.6,265.9 483.2,267.1 485.3,270.0 481.5,270.4 483.6,273.7 479.8,274.2 481.0,277.2 478.3,277.9 479.2,280.6" stroke="#18eaea"/><polyline points="303.9,287.1 306.0,290.4 302.0,291.0 304.0,294.3 299.7,294.3 302.7,297.1 299.5,298.9 303.5,301.3 298.5,303.6 302.9,305.2 300.9,308.0 304.6,308.2 303.2,311.6 306.6,311.4 305.0,315.5 309.4,313.6 308.4,317.8 312.1,315.4 311.8,320.8 315.1,317.6 316.4,321.2 317.9,317.2 321.3,320.8 320.5,316.1 325.2,319.3 324.1,314.2 327.8,316.2 327.7,312.0" stroke="#2cc82c"/><polyline points="354.6,281.2 351.9,283.0 350.8,280.2 348.2,282.0 347.5,278.2 344.2,281.3 343.0,276.9 340.5,279.1 338.6,277.0 336.7,278.5 335.2,276.2 333.0,279.1 331.0,276.4 329.4,279.8 326.4,276.3 326.0,280.7 322.2,278.1 322.6,283.1 319.1,281.8 319.8,284.8 316.7,284.9 318.0,288.2 313.5,288.1 315.3,290.8 311.7,291.7 314.8,295.3" stroke="#18eaea"/><polyline points="363.3,285.2 365.2,287.7 361.3,289.0 363.2,291.7 359.6,292.0 363.1,295.3 358.9,296.7 360.5,298.8 358.6,300.7 360.4,302.4 358.6,304.6 360.9,306.3 358.9,308.8 363.2,309.8 360.6,312.7 364.4,312.9 361.9,316.9 366.7,315.9 365.4,320.5 368.2,319.4 368.4,323.1 372.0,320.7 372.0,324.8 375.1,322.8 376.3,326.5 378.9,323.7 380.9,325.9 382.5,323.4 384.7,325.9" stroke="#18eaea"/><polyline points="385.2,325.9 383.5,319.9 389.8,325.0 387.2,317.2 391.9,321.2 391.0,316.2 396.0,321.6 395.0,313.9 398.7,317.8 399.5,314.5 401.8,318.8 404.9,313.7 405.0,318.3 408.3,317.1 406.7,321.9 410.8,319.8 410.9,325.7 413.4,319.6 417.2,324.0 416.7,317.5 419.5,322.8 422.5,319.0 421.7,325.0 427.0,318.9 425.3,326.6 429.3,320.7 432.1,327.4 430.3,319.8 436.2,324.2 434.2,318.8 439.5,321.5 436.9,314.7 440.9,318.5 441.4,313.6 444.4,317.9 446.1,313.8 448.9,316.7 449.9,312.4 452.6,315.9 452.7,311.2 456.7,314.5 457.2,310.2 460.0,312.6 459.0,306.1 463.3,310.4 464.2,306.3 467.6,309.6 467.5,304.5 471.5,309.2 470.9,301.0 474.8,305.3 475.4,302.0 479.1,305.5 478.5,299.0 481.9,302.2" stroke="#18eaea"/><polyline points="302.5,346.1 303.6,340.8 306.2,345.2 307.2,340.0 309.9,343.5 311.8,339.7 314.2,343.9 315.6,338.6 317.9,343.1 319.3,338.6" stroke="#18eaea"/><polyline points="330.1,342.1 327.8,344.8 326.2,340.2 324.3,342.8 322.3,339.9 320.3,344.1 317.2,341.4 318.6,344.9 313.8,344.1 315.8,347.7 313.7,349.1 315.5,351.8 312.7,353.7 316.6,354.8 314.0,357.4 317.3,358.2 315.2,361.7 319.0,361.8 317.1,365.5 321.1,364.2 321.2,367.3 324.7,366.8 324.8,370.8 328.3,367.8 328.0,372.1 331.2,369.9 332.0,373.6 335.0,370.7 336.5,374.3 339.0,372.0 340.8,375.2 342.7,372.1 345.7,374.7 345.4,370.1 349.6,372.9 349.7,368.7" stroke="#18eaea"/><polyline points="332.4,386.8 335.5,385.6 336.2,388.6 339.2,387.1 339.4,391.1 342.5,388.7 343.2,392.4 346.5,391.3 346.4,394.6 349.6,393.5 349.9,397.1 352.2,396.4 352.3,399.3 355.9,398.0 355.9,402.0 358.6,401.4 359.1,404.2 361.9,404.1 361.7,407.1 365.2,406.9 363.5,410.4 367.2,410.1 366.8,413.3 369.3,413.7 368.6,416.9 371.1,417.1 370.7,420.2 373.3,421.1 372.2,423.4 375.4,424.0 373.5,426.8 375.7,428.4 374.2,431.1 376.8,432.6 375.3,434.5 378.7,436.3 376.9,438.9" stroke="#18eaea"/><polyline points="528.4,297.2 529.9,300.4 527.2,301.0 529.8,304.5 526.0,305.3 528.7,308.2 524.1,308.6 525.6,311.7 522.2,311.5 523.0,314.8 519.8,314.1 518.8,316.8 516.2,315.2 515.8,319.4 512.8,318.3 512.6,321.2 509.7,320.1 509.2,323.3 505.8,321.4 505.5,324.7 502.4,323.6 502.0,327.2 499.6,327.2 499.1,329.4 495.7,329.1 496.1,332.3 493.5,332.0 492.6,334.7 489.4,334.0 489.9,337.5 487.2,337.0 486.9,339.6 483.6,338.9 483.9,342.3 480.3,341.4 480.7,345.0 476.9,343.8 477.2,347.3 474.1,345.6 473.9,349.0 470.5,348.2" stroke="#18eaea"/><polyline points="586.1,289.5 583.6,293.3 582.3,289.4 579.8,292.5 577.8,289.4 576.2,293.3 573.9,289.9 572.6,293.4 568.6,291.2 571.0,295.7 565.9,295.0 569.7,298.8 564.8,299.4 569.1,302.1 563.9,303.7 566.9,306.5 563.9,307.6 565.6,310.3 562.0,310.6 563.1,313.9 558.7,311.6 559.1,316.0 555.3,314.6 556.3,319.0 552.6,317.1 552.8,320.3 549.6,321.1 553.4,323.9 549.4,325.5 551.8,328.0 548.9,329.6 552.1,331.7 548.9,333.2 550.3,336.5 546.8,335.7 547.5,338.9 544.2,339.2 545.9,342.8 541.0,341.7 543.1,345.5 540.2,345.8 541.6,349.2 537.7,349.9 540.5,352.6 536.8,353.5 538.8,356.2 535.4,357.2" stroke="#18eaea"/><polyline points="514.4,395.5 517.5,392.9 518.3,396.7 520.9,394.3 522.2,398.3 525.1,395.7 526.1,398.2 528.9,397.3 530.0,399.3 533.0,397.8 533.3,401.7 536.3,400.0 537.7,402.5 540.1,400.8 542.0,403.4 543.4,399.8 545.8,403.6 546.8,399.3 549.9,401.7 550.8,398.1 553.8,399.9 555.2,397.1 557.1,399.5 558.8,396.2 560.9,399.1 563.4,396.8 565.3,399.6 567.5,396.7 568.9,399.6 571.3,396.7 573.0,399.7 575.0,396.9 577.1,398.6 579.2,396.0 581.5,398.4 583.3,396.6 584.9,398.1 587.1,396.1 589.6,397.9 590.8,394.8 593.5,398.2 594.8,395.0 597.7,398.2 599.0,395.4" stroke="#18eaea"/><polyline points="572.7,395.0 575.9,397.0 574.0,399.3 576.3,400.3 573.2,403.2 577.0,404.2 575.2,406.9 578.2,407.9 576.9,411.3 580.5,410.8 580.2,414.8 583.9,413.0 584.0,416.8 587.1,414.0 588.6,417.2 590.6,414.8 592.4,419.5 594.7,416.6 596.3,418.7 598.6,415.6" stroke="#18eaea"/><polyline points="300.2,425.7 302.1,424.4 304.4,425.5 306.1,424.3 307.8,425.1 309.7,424.2 311.8,425.2 313.5,423.3 316.4,424.8 317.6,423.3 320.1,424.1 321.4,421.7 324.3,422.7 325.8,420.9 327.7,422.1 329.6,419.6" stroke="#18eaea"/><polyline points="300.7,456.6 300.8,454.3 303.6,454.6 304.3,451.4 306.8,451.4 307.7,449.2 310.0,448.8 311.1,446.9 313.5,447.1 314.5,445.1 316.7,445.2 318.5,443.7 320.5,444.4 322.2,441.7 324.1,443.5 325.9,440.8 327.8,442.1 329.5,439.6 332.3,440.8" stroke="#18eaea"/><polyline points="299.8,474.5 301.5,470.0 303.8,473.6 305.9,469.4 307.8,473.5 309.9,469.3 311.7,474.0 314.3,470.2 315.8,472.9 318.5,471.5 319.8,474.1 322.9,471.4 323.2,475.6 326.1,473.9 326.4,477.5 329.8,475.2 328.8,480.9" stroke="#18eaea"/><polyline points="372.2,480.6 370.2,477.1 374.6,476.7 371.6,473.5 376.8,473.9" stroke="#18eaea"/><polyline points="433.0,460.1 436.2,458.4 436.1,463.3 440.7,459.9 439.7,465.1 443.5,463.4 442.9,466.6 446.8,466.6 444.8,469.6 449.1,470.3 444.7,473.7 449.2,474.0 446.7,477.6 451.6,478.0" stroke="#18eaea"/><polyline points="547.5,429.6 548.4,425.1 551.4,428.7 552.7,424.8 554.7,427.9 556.7,424.4 558.5,427.6 561.0,425.3 561.9,428.7 565.2,425.8 565.9,429.9 568.6,429.1 568.1,432.8 571.4,431.8 570.6,436.1 574.3,435.3 573.1,438.0 577.5,438.7 575.0,441.5 578.7,443.0 575.3,445.1 577.8,447.6 573.9,448.5 576.2,451.4 572.2,451.8" stroke="#18eaea"/><polyline points="517.7,427.0 520.5,426.0 520.6,429.7 524.9,426.2 524.0,431.2 528.0,428.4 528.3,432.6 531.8,430.4 530.7,434.6 534.5,434.0 533.5,438.4 536.8,436.9 537.8,440.2 540.5,436.3 541.1,441.6 544.2,438.3 545.3,442.4 547.6,439.6 549.1,442.9" stroke="#18eaea"/><polyline points="516.4,425.8 519.2,428.5 515.9,429.5 518.8,432.6 515.2,433.4 517.5,435.8 514.2,437.7 518.8,439.4 514.4,442.4 520.0,442.7 516.5,446.7 520.8,446.8 517.7,449.5 521.6,451.4 517.5,452.0 517.9,455.6 514.6,452.5 513.7,456.5 511.3,453.1 509.3,457.0 508.0,451.6 505.3,454.9 503.7,451.7 500.9,454.8 500.5,450.4 497.2,452.5 497.5,447.4 492.7,451.0 494.6,445.8 490.8,447.6 490.5,444.1" stroke="#18eaea"/><polyline points="474.8,450.8 478.5,446.9 478.4,452.9 481.9,448.7 481.6,454.4 486.2,449.4 485.4,455.5 490.0,451.6 489.2,456.3 493.8,454.4 491.9,459.9 495.9,457.6 495.9,461.5 498.7,461.1 497.4,464.3 502.1,464.2 499.7,467.3 504.4,467.4 501.0,471.1 506.6,470.3 503.6,474.3 507.9,474.5 504.8,478.6 510.5,477.7" stroke="#18eaea"/><polyline points="519.9,451.1 522.1,449.7 523.4,452.7 526.4,449.3 527.0,454.5 530.3,451.2 529.2,456.8 533.9,456.1 529.0,457.0 531.1,460.6 527.3,459.9 528.8,464.1 524.0,464.3 529.1,464.7 527.7,469.5 531.7,465.9 531.1,472.0 535.0,467.3 535.1,471.8 538.6,471.0 537.1,474.1 541.5,474.3 537.1,477.8 542.9,479.3" stroke="#18eaea"/><polyline points="615.1,276.2 611.9,274.0 614.6,271.9 612.3,269.6 615.5,268.5 613.0,265.6 617.3,265.0 614.0,261.6 618.9,261.6 616.4,258.0 620.3,257.9 618.7,254.5 622.2,255.1 621.4,251.4 626.1,253.6 625.7,249.2 629.0,251.2 630.3,248.2 632.1,249.5 633.8,246.2 636.6,249.8 637.2,245.1 639.9,247.8 641.4,244.6 644.3,248.1 645.9,245.3 648.3,248.5 649.8,244.7 652.4,247.2" stroke="#18eaea"/><polyline points="645.3,249.4 648.9,247.4 648.2,252.1 652.2,250.3 652.1,253.7" stroke="#18eaea"/><polyline points="725.6,284.1 725.5,282.4 726.7,280.3" stroke="#1414e8"/><polyline points="819.6,247.2 821.8,244.8 823.9,248.7 826.4,245.5 826.6,248.1 826.7,250.4 823.2,248.7 824.5,252.9 820.9,252.4 821.9,254.9 818.7,257.2 823.3,258.3 820.4,260.6 822.8,262.3 820.5,264.7 823.9,267.0 820.2,268.1 822.4,271.6 818.3,270.9 819.4,274.4 816.3,274.5 817.1,277.4 812.6,277.2 814.8,281.2 811.1,280.4" stroke="#18eaea"/><polyline points="820.6,243.3 822.9,241.2 825.0,242.7 827.3,241.2 829.3,242.8 830.9,241.0 833.3,242.7" stroke="#1414e8"/><polyline points="661.4,312.6 662.3,309.3 665.0,312.0 666.4,308.2 668.9,310.3 669.9,307.9 672.2,310.7 674.3,307.3 676.4,310.4 679.2,307.6 679.9,311.2 682.1,310.8 681.8,313.9 685.6,313.4 685.2,316.3 688.1,316.4 685.7,319.4 689.6,321.0 687.0,322.7 689.4,325.9 685.5,326.8 687.9,329.9 684.2,330.1" stroke="#18eaea"/><polyline points="684.4,307.6 685.6,303.9 688.5,306.6 690.0,304.0 692.0,305.2 693.4,302.9 695.9,306.0 697.8,303.1 699.6,305.6 701.6,303.9 702.9,306.6 706.2,305.1 706.7,308.5 709.2,307.0 709.3,310.4 712.4,309.8" stroke="#18eaea"/><polyline points="707.3,314.8 709.3,316.9 706.0,317.8 707.8,320.9 704.0,321.3 706.1,324.7 703.3,325.3 704.3,328.5 700.2,327.6 700.8,331.2 697.6,331.2 697.8,334.1 694.8,333.2 694.7,336.6 691.6,335.4 691.6,339.3 688.4,337.6 688.0,340.9 684.7,339.7 684.7,343.9 681.8,341.3 680.2,344.7 677.8,342.2 676.1,345.6 674.3,341.0 671.6,344.7 670.4,341.8 668.1,344.7 666.3,341.0" stroke="#18eaea"/><polyline points="694.0,342.3 694.1,339.7 696.6,339.3 697.9,337.3 699.8,338.4 702.3,336.0 702.7,339.7 706.2,338.6 706.2,341.7 708.2,342.3 707.5,345.0 709.4,346.3 707.0,348.4 708.6,350.9 704.9,350.7 704.8,354.0 701.6,353.1" stroke="#18eaea"/><polyline points="614.6,339.3 615.6,340.5 615.5,343.1 616.8,344.6 616.8,347.2" stroke="#f01010"/><polyline points="602.8,348.4 605.6,349.9 603.7,352.8 606.9,353.2 606.6,355.9 610.0,356.1 607.9,359.7 611.2,359.3 611.4,363.0 614.8,361.2 614.0,365.2 617.6,363.9 616.9,368.0 621.6,366.9 619.8,370.7 623.8,370.9 620.4,373.7 625.0,374.2 623.0,377.4 626.8,377.2 625.1,381.0 629.3,380.1 628.0,384.5 631.8,382.7 631.7,386.7 635.3,385.5 635.0,389.0 638.4,387.8 637.7,391.5 640.3,391.2 640.2,394.0 643.3,394.6 642.6,397.7 646.1,397.5 645.1,400.9" stroke="#18eaea"/><polyline points="646.7,375.4 648.2,378.5 644.8,379.5 647.1,381.8 644.0,382.9 646.4,385.8 643.4,387.9 647.0,389.4 644.0,392.2 647.4,392.6 644.8,396.5 648.6,396.3 648.2,399.5 650.7,399.3 650.5,402.6 654.0,401.6 654.4,404.4 657.3,403.3 658.4,406.4 661.0,404.4 663.0,406.8 664.5,403.9 666.7,406.3 668.0,402.8 671.2,405.4 671.5,401.6" stroke="#18eaea"/><polyline points="613.3,402.8 616.0,404.8 613.7,407.1 616.0,409.7 612.8,410.8 613.7,413.1 610.7,413.7 610.5,417.2 607.2,414.9 606.3,417.7 603.9,415.3 602.8,418.7 600.0,416.0" stroke="#18eaea"/><polyline points="753.5,345.3 756.6,343.4 757.5,347.4 760.1,344.4 760.7,348.6 763.5,346.7 764.8,349.4 768.1,347.5 768.2,351.1 771.5,349.7 771.7,352.8 775.0,351.7 775.7,355.0 778.3,354.0 778.8,357.3 782.0,354.1 783.1,358.4 786.1,355.1 786.9,359.6 789.9,356.1 790.5,361.1 793.8,357.6 793.6,362.1 797.1,361.0 797.3,364.0 800.4,363.0 799.8,367.3 804.3,365.1 802.7,369.7 806.8,367.5 806.1,372.3 809.5,369.9 810.1,373.7" stroke="#18eaea"/><polyline points="838.8,330.9 837.5,334.8 834.7,332.4 833.9,336.6 831.3,334.0 830.0,338.1 827.0,335.5 826.9,339.4 822.9,338.1 824.1,341.2 820.9,341.4 822.3,345.0 817.0,343.8 820.2,348.8 815.4,348.0 819.2,351.9 814.7,352.5 816.9,355.3 813.1,356.1 815.2,358.9 811.4,360.0 814.3,362.3 809.3,363.4 813.5,366.1 808.9,367.9 813.7,370.0 811.6,372.2 815.9,373.1 811.4,376.6 817.5,376.0 813.6,380.7 819.4,379.0 817.1,383.3 820.9,381.9 821.0,386.2 824.5,384.1 824.6,387.9 827.2,385.4 829.0,389.4 830.8,385.4 833.6,390.0 834.1,384.3 837.3,387.6 838.0,384.9 840.9,386.5 841.5,382.5" stroke="#18eaea"/><polyline points="826.1,351.4 829.6,349.9 830.0,353.0 832.7,351.8 834.1,354.3 836.3,353.4 836.7,356.3 840.0,354.8 840.6,358.2" stroke="#1414e8"/><polyline points="815.7,371.0 819.7,365.6 820.1,370.3 822.9,368.6 824.6,373.5 825.4,367.3 829.7,370.6 829.2,366.5 832.7,367.9 831.7,362.3 834.8,365.5 836.9,363.1 838.4,367.2 842.5,362.7 842.0,367.8 845.6,365.1 844.0,371.6 848.0,368.5" stroke="#b8b8b8"/><polyline points="751.9,368.1 749.7,370.7 748.4,368.3 746.5,371.4 743.4,368.6 742.6,371.3 739.2,370.3 740.9,374.0 736.8,374.2 739.2,377.4 736.1,378.3 738.6,380.2 736.5,382.7 739.8,383.8 738.0,387.2 741.2,386.9 740.3,390.8 743.5,390.1 743.2,393.8 746.5,392.2 746.0,396.2 749.7,395.0 750.1,397.8 752.8,397.0 753.4,400.7 756.3,397.7 757.8,400.9 759.9,398.6 761.9,402.1 763.7,399.0 766.6,402.0 767.1,397.5 770.2,399.7 771.6,397.4 774.2,398.9 774.5,395.0 777.2,395.8 776.7,392.3 780.5,392.9 778.9,390.0 781.1,388.2 779.2,385.6" stroke="#2cc82c"/><polyline points="728.5,378.3 731.6,379.7 728.5,382.5 732.0,383.4 731.9,386.3 735.0,385.2 735.2,389.8 737.8,387.2 739.3,390.7 742.1,387.4 743.5,390.4 746.0,387.7 747.3,390.9 749.7,387.9 751.8,391.3 753.6,387.7 756.3,391.5 757.1,388.4 760.5,389.7 759.9,385.7 763.1,386.2 761.8,382.6 765.6,382.4" stroke="#18eaea"/><polyline points="726.9,385.4 730.1,383.7 730.3,387.2 734.3,385.5 733.8,390.2 737.3,388.7 737.4,391.9 740.5,390.3 739.3,394.3 744.3,393.4 741.2,397.6 745.3,398.0 742.7,400.6 746.2,402.1 742.9,403.8 745.6,406.4 742.3,407.3 744.6,410.8 741.6,411.7 743.4,414.0 739.7,415.2 742.4,418.1 737.6,418.1 739.5,421.8 735.9,421.3 737.7,425.0 733.5,424.9 734.4,428.3 730.4,426.8" stroke="#18eaea"/><polyline points="787.3,380.7 788.3,383.5 784.9,384.6 787.7,387.4 785.1,388.8 787.7,391.3 783.5,391.9 786.9,395.4 782.0,396.0 784.4,398.7 781.3,399.2 783.3,403.2 779.0,402.6 781.0,406.3 776.6,405.6 777.2,409.1 774.0,407.9 774.2,411.7" stroke="#18eaea"/><polyline points="687.5,414.3 691.6,415.5 688.4,418.5 692.7,419.3 691.6,422.0 695.1,421.3 692.5,426.4 696.9,425.0 695.8,429.0 700.6,427.2 699.1,431.1 703.0,429.2 703.0,433.9 706.1,431.1 708.1,433.3 708.6,428.8 712.0,432.6 712.6,427.9 715.9,429.5 715.0,425.3 720.1,427.2 717.4,423.1 722.5,423.5 719.2,419.9 722.8,419.4 720.7,416.6 724.3,414.8 719.0,414.1 721.9,411.0 719.3,409.2" stroke="#18eaea"/><polyline points="729.1,428.8 731.5,432.6 727.3,432.8 728.8,435.8 725.5,435.5 726.2,438.9 722.6,438.3 723.0,442.1 720.3,441.9 720.0,444.4 717.5,444.0 717.1,447.4 713.9,446.1 714.3,449.7 710.7,449.5 711.5,452.0 708.0,451.7 709.5,455.6 705.1,454.4 706.6,458.9 702.5,457.2 702.9,461.0 699.1,459.2 699.7,463.5 695.9,461.7 696.0,465.9 692.9,463.7" stroke="#18eaea"/><polyline points="624.8,423.3 626.8,419.7 628.8,424.7 630.8,420.6 633.0,423.4 635.4,420.5 635.5,425.7 639.6,423.5 638.0,427.6 641.7,427.0 639.8,430.9 645.0,429.5 642.3,434.1 646.7,433.7 644.1,436.8 647.8,437.4 645.4,441.0 651.0,440.6 647.8,445.5 652.3,442.3 652.7,446.8 655.6,443.8 656.1,449.0 658.7,445.5 660.0,449.6 663.0,447.0 664.6,450.4 666.6,446.9 668.7,449.9 670.7,447.2 672.0,450.7 674.8,448.2 675.0,451.9 678.3,451.0 676.8,454.4 680.0,455.4 678.0,457.4 681.7,459.1 678.8,461.8 683.2,462.4 679.1,465.9 683.5,466.2 679.8,470.0 684.5,470.3 682.5,473.6" stroke="#18eaea"/><polyline points="624.9,429.6 628.8,428.4 627.5,432.8 630.9,432.1 630.5,435.9 635.5,434.1 632.8,438.1 637.9,437.8 634.1,441.6 639.6,441.7 636.9,444.9 639.6,446.2 638.1,448.8 640.9,450.3 638.0,452.7 642.8,454.1 638.0,456.1 642.3,458.9 637.2,459.7 639.9,462.9 635.5,463.0 637.9,466.7 633.8,465.9 635.9,470.2 631.5,468.9 632.6,472.9 628.4,470.4 628.7,474.5 625.8,474.5 625.4,477.3 623.0,476.3 622.9,480.6 619.1,478.4" stroke="#18eaea"/><polyline points="643.1,479.6 639.3,477.6 643.2,476.1 639.3,473.9 644.2,471.7" stroke="#18eaea"/><polyline points="822.9,427.2 823.3,431.1 820.1,430.4 820.0,434.3 816.5,432.7 817.6,436.2 812.9,435.3 815.4,438.8 811.7,439.9 814.7,442.7 812.0,444.3 814.8,446.1 812.3,448.8 816.8,449.0 815.8,452.4 818.4,452.3 817.4,456.3 820.8,454.6 823.0,457.0 823.6,454.0 827.0,455.4 827.3,452.5 831.0,453.9" stroke="#2cc82c"/><polyline points="89.8,490.1 88.4,494.6 85.5,490.3 84.7,494.3 81.2,492.0 81.0,495.5 78.0,495.3 80.2,499.1 74.9,499.3 78.2,501.7 75.8,504.2 79.9,504.4 79.0,507.9 81.7,507.2 81.9,511.7 85.4,508.9 86.7,511.6 88.2,509.7 90.5,513.1 91.4,508.4 94.8,510.6 94.9,507.6 98.2,507.1 96.3,503.7 100.6,504.2" stroke="#2cc82c"/><polyline points="101.1,502.3 104.1,501.3 104.5,504.0 107.7,502.9 107.8,507.1 110.9,504.4 111.6,509.0 114.5,505.9 115.7,509.8 118.5,506.7 119.8,509.6 121.8,507.0 124.1,510.7 125.8,507.1 128.3,510.1 129.2,506.5 132.2,509.1 133.0,505.5 135.9,507.1 136.3,503.5 140.5,505.9 140.1,502.2 143.0,502.0 142.3,499.3" stroke="#18eaea"/><polyline points="2.9,540.1 5.0,537.6 7.3,539.3 8.7,537.4 11.5,539.3 12.0,536.6 15.1,537.7 15.5,534.4 18.5,534.5 18.8,531.7 21.7,532.5 21.7,529.3 24.3,529.5 24.5,527.1" stroke="#1414e8"/><polyline points="25.5,540.1 28.4,538.9 29.4,541.1 31.9,540.0 32.5,543.1 35.6,542.7 36.8,544.7 39.5,544.1 40.1,547.0 42.4,546.6 42.7,549.7 45.7,548.5 46.3,551.2 48.8,552.0 49.4,554.4 51.8,554.0 51.3,557.2 54.3,557.2 53.7,560.8 56.8,561.0 55.9,563.4 58.6,564.7 57.6,567.0 60.3,568.1" stroke="#18eaea"/><polyline points="27.2,540.3 30.4,540.0 28.9,544.4 34.1,542.8 32.6,546.7 37.1,545.5 35.1,549.9 38.5,550.2 36.8,552.8 40.2,553.8 37.0,556.9 41.1,558.2 37.9,560.1 42.5,562.0 37.6,563.5 40.8,566.9 37.0,566.9 37.3,570.0 34.1,569.1 33.9,573.1 30.9,569.4 29.8,573.5 27.0,571.5 25.9,575.2 23.0,571.3 21.1,575.4" stroke="#18eaea"/><polyline points="77.7,562.7 79.3,564.8 77.8,566.5 79.1,569.0 77.2,570.6 78.6,572.8 77.6,574.6 78.5,577.2 76.9,578.7 79.6,581.1 77.6,582.9 80.0,584.5 78.6,587.3 79.7,589.3 77.8,590.4 79.1,593.1 77.7,594.9 78.9,596.8 76.5,598.3 78.0,601.1 75.3,602.5 76.3,605.0 74.3,606.3 75.9,608.7 73.4,610.2" stroke="#18eaea"/><polyline points="71.3,593.5 72.1,589.0 75.4,593.0 75.9,587.5 78.8,591.5 80.6,586.8 82.0,592.4 85.2,586.8 85.9,591.3 88.6,588.8 89.5,593.2 93.2,588.3 93.8,593.9 96.6,589.2 97.8,595.5 100.7,591.6 101.1,596.8 104.3,593.1 105.4,596.7 108.2,592.9 110.0,598.3 111.4,592.2 113.5,596.9 115.6,593.4 117.8,596.2 120.0,593.4 121.2,596.9 124.5,592.9 125.3,597.4 129.0,595.0 127.9,599.7 131.7,596.8 131.2,603.3 135.0,598.8 135.4,603.4 139.0,599.5 138.6,605.6 143.0,601.1 143.0,607.8 145.5,603.7 147.5,606.5 149.2,604.1 152.0,606.4" stroke="#18eaea"/><polyline points="48.6,600.1 51.9,601.5 49.8,604.1 52.2,605.3 51.1,608.0 54.1,609.0 52.6,611.5 55.2,613.4 53.3,615.7 54.5,617.5 53.0,619.6 54.6,621.8 52.4,622.9 53.6,625.8 51.5,627.4 53.0,629.4 50.1,631.1 52.4,633.5 49.6,635.3 51.6,636.8 49.3,639.0 51.1,641.1 49.4,642.9 51.4,645.5" stroke="#18eaea"/><polyline points="51.9,604.7 54.5,605.5 53.1,608.6 56.4,608.8 54.4,612.2 58.4,612.5 56.9,615.4 59.5,616.9 57.3,619.4 60.5,620.9 58.4,623.3 60.6,625.0 58.1,626.4 60.3,629.2 56.9,630.4 59.4,633.1 56.5,635.1 58.8,637.0 57.7,639.0 59.9,640.2 57.7,643.1 61.1,644.0 58.5,647.2" stroke="#18eaea"/><polyline points="7.6,637.7 3.5,636.5 5.5,633.9 1.7,632.0 5.6,629.6 2.0,627.9 4.7,626.4 3.9,624.1 7.6,624.4 6.4,620.2 9.6,621.6 10.1,617.8 12.5,619.6 13.9,615.8 15.9,620.2 18.1,616.4 20.1,619.9 22.8,616.3 22.7,621.1 27.4,619.0 25.1,623.5 29.3,623.1 27.6,626.4 30.7,627.2 27.1,629.1 30.8,632.3 26.1,632.0 28.3,635.8" stroke="#2cc82c"/><polyline points="82.2,645.7 83.2,641.2 86.7,647.5 86.3,637.4 90.9,647.4 92.0,637.6 92.7,647.4 97.0,637.5 95.6,647.7 101.4,639.9 99.9,646.9 105.3,643.2 102.5,649.4 110.1,646.0 101.5,652.8 111.0,652.5 103.3,654.7 108.5,657.2 103.2,657.6 109.5,663.2 99.6,659.0 105.6,667.9 98.1,661.2 100.2,668.3 95.8,664.3 95.7,669.4 93.2,664.9 90.4,671.6 91.4,662.0 84.8,671.3 87.8,662.3 82.5,666.3 85.0,660.4 77.0,665.1 84.1,658.2 77.4,658.4 81.6,656.7 74.6,653.0 82.8,653.0 79.5,649.8 84.3,649.5" stroke="#2cc82c"/><polyline points="111.6,673.0 112.1,675.2 109.9,676.0 110.4,678.9 108.1,680.5 108.6,682.8 106.1,683.6 106.9,686.2 104.2,686.3 104.4,689.0 101.8,689.7 101.6,692.9 98.9,692.5 98.1,694.9 96.0,694.8 95.9,697.7 92.9,697.6 92.6,700.2 89.4,699.9 88.3,702.2 86.5,702.0 84.9,704.2 82.7,704.2 81.7,706.9 79.4,705.4 78.6,708.3 76.2,708.1 75.1,710.7 72.7,710.2 71.1,712.3 68.8,711.8" stroke="#b8b8b8"/><polyline points="176.8,591.5 175.4,591.2 173.5,589.8 171.7,589.2 170.1,587.9 168.0,587.5 166.6,586.7 164.5,587.3 162.2,587.1 160.2,588.2 158.2,588.3 156.4,589.8 154.8,590.1 153.2,592.1 151.7,593.4 151.1,595.2 149.5,596.5 149.1,598.6 148.0,599.8 147.3,602.0" stroke="#2cc82c"/><polyline points="148.4,608.5 150.9,608.7 150.2,612.3 154.3,611.6 153.3,614.9 156.4,614.4 156.7,618.2 159.7,616.5 160.5,618.8 163.5,616.8 165.4,619.6 166.8,616.9 169.7,619.9 170.9,616.8 173.2,617.7 173.5,614.5 176.5,615.2 176.8,612.1 179.9,612.4" stroke="#2cc82c"/><polyline points="220.9,482.1 224.7,485.2 220.7,486.9 224.3,489.5 218.1,489.4 221.1,493.9 216.1,492.0 217.5,497.3 213.8,494.8 213.3,498.4 209.2,495.3 211.3,500.9 206.1,498.7 207.5,502.4 203.4,501.9 205.7,505.9 200.8,504.8" stroke="#18eaea"/><polyline points="265.4,497.1 266.7,500.4 263.2,500.4 264.2,503.2 260.9,503.5 261.1,506.7 258.2,506.4 259.2,509.4 255.6,509.1 255.1,512.2 252.5,511.0 252.0,513.9 249.1,513.0 248.1,515.7 245.5,514.3 244.3,517.6 241.5,514.4 240.0,517.3 237.6,515.4 236.3,519.2 234.2,515.0 232.3,518.8 230.3,514.9 227.9,518.0 226.5,515.1 223.7,517.7 222.4,514.9 220.0,517.5 218.3,513.9 215.7,516.0 214.8,512.3 212.3,515.3 210.6,512.6 207.7,515.3 206.8,512.6 204.3,513.9" stroke="#18eaea"/><polyline points="176.7,533.9 177.9,527.5 180.2,531.2 181.6,525.7 184.2,530.5 183.7,525.0 189.6,529.0 185.4,524.0 192.1,524.4 187.8,520.8 193.7,521.0 190.0,515.8 194.8,518.9 194.8,512.7 198.3,518.0 199.3,513.7" stroke="#18eaea"/><polyline points="189.8,520.2 193.3,522.0 188.9,523.9 192.3,526.2 188.8,528.3 192.9,530.1 189.2,532.6 193.0,533.6 191.3,536.1 193.7,536.9 191.5,540.5 196.2,539.8 194.9,543.9 198.4,543.5 196.9,546.8 201.2,546.3 200.1,550.0 203.8,548.7 203.2,552.7 206.9,551.1 207.1,554.8 209.9,553.5 210.9,556.8 213.7,554.0 214.5,557.7 217.2,555.5" stroke="#18eaea"/><polyline points="198.2,574.9 203.2,572.2 201.7,577.7 206.2,574.8 205.5,578.9 209.4,576.2 209.7,581.1 212.3,577.4 214.4,580.6 216.3,577.0 219.2,580.1 218.5,575.4 223.1,578.1 221.4,573.6 225.9,574.3 222.9,570.5 227.8,570.3 224.5,566.5 228.1,566.5 225.2,562.9 230.3,562.3 226.6,559.2" stroke="#18eaea"/><polyline points="230.7,481.4 232.0,482.7 232.1,484.7" stroke="#2cc82c"/><polyline points="249.6,481.2 249.9,483.4 249.0,485.0 249.7,486.8 248.5,489.2" stroke="#2cc82c"/><polyline points="277.6,487.2 277.2,482.6 281.4,485.1 280.8,481.7 284.5,482.6" stroke="#18eaea"/><polyline points="198.6,614.7 202.1,617.1 197.4,619.0 201.1,620.7 196.9,622.8 201.0,625.3 197.0,627.0 199.3,629.4 196.3,630.4 200.2,633.8 195.5,633.9 198.7,637.2 194.3,638.3 196.5,641.1 193.7,641.7 195.0,644.3 192.0,645.4 194.5,649.0 190.0,648.4 191.2,652.2 187.0,650.5 187.2,654.3 184.0,652.8 183.8,656.7 181.0,656.4 181.3,659.7 177.9,657.2 176.8,660.4 173.4,657.9 173.1,663.0 170.1,659.4 169.2,663.7 166.1,660.7" stroke="#18eaea"/><polyline points="240.4,589.5 241.3,593.4 238.0,592.0 237.9,595.9 234.9,595.0 235.1,598.2 231.2,597.1 233.5,601.1 229.0,601.5 231.4,604.3 228.2,605.4 231.4,608.8 226.2,609.3 229.9,611.8 226.3,614.1 229.0,615.7 227.1,618.2 230.0,619.4 228.4,622.1 231.7,623.0 229.0,626.5 232.8,626.2 231.2,629.6 236.3,628.6 234.3,632.8 237.7,632.4 236.9,636.0 240.8,634.9 241.2,638.3 244.6,636.3 244.5,640.7 247.8,637.0 249.6,640.7 251.4,636.8 253.6,640.0 255.0,636.5 257.7,638.7 258.5,635.9 261.9,639.2 262.6,634.1 265.8,637.6 266.5,634.3" stroke="#18eaea"/><polyline points="273.2,635.3 274.1,632.3 277.4,634.0 277.4,630.1 280.8,632.4 281.5,629.2 284.2,630.5 285.9,628.0 288.2,630.1 290.2,626.6 292.2,630.4 294.3,628.8 295.4,632.4 298.2,628.1" stroke="#18eaea"/><polyline points="126.6,681.9 124.8,677.9 128.6,678.8 127.3,675.1 130.7,676.0 130.8,673.0 134.3,674.4 135.0,670.3 137.5,672.6 138.7,669.6 141.4,671.1 143.2,668.4 144.5,670.8 146.8,667.7 148.5,672.1 151.4,669.8 152.4,672.9 155.5,671.2 154.8,675.2 159.0,673.4 157.6,676.9 162.0,676.9 160.2,679.5 162.6,681.1 161.6,683.7 164.2,685.3 161.3,687.4 164.4,688.9 162.2,691.7" stroke="#18eaea"/><polyline points="163.8,691.9 164.1,694.1 163.9,696.1 164.3,698.2 164.0,700.3 164.3,702.4 164.1,703.7 164.4,706.1 164.2,708.3 164.5,710.0" stroke="#18eaea"/><polyline points="269.4,668.1 273.0,664.1 273.3,669.3 275.7,666.7 277.2,670.0 279.4,666.0 282.4,668.9 282.5,664.4 286.1,667.0 285.8,662.0 289.2,665.6 289.4,660.6 292.8,663.3 294.4,660.7 296.4,663.7 298.3,658.6" stroke="#18eaea"/><polyline points="225.2,693.9 228.3,696.5 223.8,697.6 227.1,699.9 223.5,701.5 225.4,703.7 222.3,704.8 224.4,707.5 220.6,708.5 223.8,711.6" stroke="#b8b8b8"/><polyline points="299.1,677.2 298.4,679.7 295.9,679.5 295.1,681.8 292.3,681.6 292.3,684.2 289.5,684.5 290.7,687.4 289.1,689.0 291.0,691.4 290.1,693.2 292.1,694.8 290.6,697.3 291.5,699.3 288.9,700.0 288.5,702.7 285.8,702.9 285.8,706.2 283.4,705.5 282.5,708.3 280.2,709.0" stroke="#b8b8b8"/><polyline points="323.2,484.1 324.4,485.9 323.3,488.2 325.0,490.0 323.9,492.0 325.8,493.2 325.6,496.0 327.9,496.1 327.9,499.2 330.7,499.7 331.2,501.8 333.4,502.6 333.6,504.9" stroke="#2cc82c"/><polyline points="306.4,509.1 308.4,513.0 305.0,513.0 306.8,516.0 302.2,515.8 305.1,519.7 300.1,520.2 303.9,522.7 300.4,524.6 303.8,526.3 300.0,528.7 303.9,529.7 302.3,532.6 304.8,533.8 303.8,536.7 308.0,536.2 306.2,539.9 309.7,539.1 310.5,542.4 313.0,541.6 314.4,544.3 316.6,541.0 319.2,544.9 320.5,541.0 322.7,543.7 323.9,540.1 326.5,542.6" stroke="#18eaea"/><polyline points="363.9,481.9 369.8,482.3 366.1,485.3 371.1,486.3 366.1,489.5 370.2,490.3 365.7,492.3 371.6,495.2 366.8,495.9 369.5,499.4 366.0,499.6 366.9,503.4 362.7,501.4 363.9,506.4 359.8,503.4 360.3,508.4" stroke="#18eaea"/><polyline points="371.7,506.3 370.8,502.0 374.5,503.7 373.8,498.8 377.3,501.1 377.1,495.5 379.0,501.3 383.5,498.0 381.4,502.2 386.8,502.2 382.8,504.6 385.5,508.9 380.0,505.7 380.5,510.7 376.4,508.2 377.8,511.3 376.0,515.1 380.4,511.9 380.9,515.7 383.7,513.2 384.5,517.0 387.5,514.2 389.6,518.7 390.1,513.6" stroke="#2cc82c"/><polyline points="418.1,497.9 421.5,495.4 421.5,499.7 425.3,494.8 426.1,500.1 428.7,497.1 430.5,502.1 432.2,496.3 434.7,499.8 436.1,495.6 439.3,499.8 439.5,495.3 443.4,498.0 442.4,492.7 445.9,493.5 443.9,490.0 449.2,490.4 446.8,487.1 450.8,486.8 448.1,483.5 453.8,483.7" stroke="#18eaea"/><polyline points="437.0,498.6 443.8,499.4 438.2,502.5 445.1,503.0 439.8,506.2 446.6,506.9 439.6,510.8 446.0,511.1 441.0,515.1 448.6,514.1 443.3,518.2 450.2,517.7 445.0,522.0 451.7,521.6 447.3,525.6 453.0,526.0 446.6,529.4 452.7,530.5 447.1,533.2" stroke="#18eaea"/><polyline points="427.4,527.0 431.7,525.6 429.1,530.6 432.6,529.8 432.3,533.2 435.9,531.8 435.3,537.1 438.4,533.5 440.1,538.3 441.8,533.3 444.5,536.1 443.8,531.5 448.8,533.3 446.2,529.6 451.7,529.7 446.8,526.0 452.3,525.8 449.6,522.8 452.9,521.1 450.4,518.9 455.0,516.7 450.7,515.3 454.4,512.4 448.5,512.0 453.2,508.5" stroke="#18eaea"/><polyline points="464.8,506.4 469.1,504.4 467.9,508.8 472.1,506.8 472.4,510.1 475.2,507.6 476.7,511.4 477.1,507.2 481.5,509.2 479.6,504.8 484.9,506.9 482.7,501.8 487.4,504.3 486.5,499.2 490.4,501.4 490.5,497.7 493.5,501.0 494.1,495.6 497.3,500.2 498.6,495.9 501.0,497.9 502.8,495.1 504.8,498.6 506.7,495.4 507.1,498.9 511.7,497.4 509.0,502.1 514.2,501.4 511.2,504.6 514.7,505.6 512.5,508.6 516.9,508.9 513.2,512.1 517.4,513.8 513.5,515.2" stroke="#18eaea"/><polyline points="479.5,496.7 482.4,495.9 482.0,499.8 486.0,497.5 486.0,501.7 488.9,501.2 488.7,504.0 491.9,503.6 490.6,507.6 494.9,507.1 492.9,510.2 495.9,511.6 492.3,514.7 496.5,515.4 493.8,517.9 497.2,519.4 495.7,521.9 499.3,522.6 497.5,525.6 501.2,525.3 500.3,529.2 504.3,528.4 503.8,531.4 507.5,529.9 507.0,534.3 510.2,533.2 510.5,536.6 513.7,535.2 513.6,539.0 516.5,537.4 516.9,540.7" stroke="#18eaea"/><polyline points="498.5,531.4 502.2,532.1 500.3,535.2 502.4,536.9 500.4,539.2 503.7,541.3 499.8,541.8 501.2,545.2" stroke="#18eaea"/><polyline points="512.2,482.5 516.8,481.1 514.8,486.1 519.5,484.2 518.5,487.8 522.5,486.5 520.1,491.5 524.9,489.7 523.5,494.4 527.1,493.7 526.2,496.8 530.2,496.0 528.6,499.8 532.5,499.1 531.5,502.7 536.4,501.7 534.3,505.6 537.7,505.6 536.2,509.0 540.7,507.5 538.9,512.8 544.1,509.8 543.4,514.2 546.7,512.4 546.3,517.3 550.0,514.3" stroke="#18eaea"/><polyline points="533.9,484.8 538.6,481.6 537.0,486.6 540.6,484.8 541.1,489.2 543.6,487.1 545.6,490.2 547.3,486.5 548.9,489.6 553.2,486.0 550.6,491.0 554.0,492.6 550.4,493.8 554.1,497.3 547.6,497.5" stroke="#18eaea"/><polyline points="546.7,514.4 548.8,515.0 548.7,517.5 551.4,518.0" stroke="#2cc82c"/><polyline points="569.7,542.8 573.1,543.0 572.7,546.0 575.9,545.4 575.6,548.8 578.6,548.4 576.6,552.2 580.6,552.3 578.4,555.2 580.4,557.4 577.1,558.1 579.4,561.1 576.5,561.9 579.2,564.2 575.1,567.2 580.0,566.6 578.2,570.8 581.4,570.2 581.4,573.2 584.4,572.8 583.8,576.5 586.9,576.6 585.2,579.9 589.1,580.1 587.6,582.4 591.4,583.7 588.8,586.2 592.4,588.1 589.4,590.4 592.3,591.6 590.3,594.5 594.5,594.7 593.3,597.5 596.3,597.7 595.4,601.6 599.5,600.9 598.0,604.7" stroke="#18eaea"/><polyline points="338.0,583.3 344.0,584.8 339.4,586.9 343.6,588.9 339.3,591.9 344.5,592.3 341.8,595.3 346.2,594.7 344.5,599.4 348.6,597.7 349.6,600.8 351.7,597.7 354.3,601.9 355.4,597.8 357.7,599.5 358.0,595.5 362.6,597.5 360.5,594.2 364.6,593.5 361.4,590.3" stroke="#2cc82c"/><polyline points="367.7,617.3 372.6,617.2 370.4,620.2 374.2,620.6 371.9,624.5 376.3,623.4 376.1,627.1 379.4,623.9 380.7,628.2 382.6,624.2 384.9,628.8 384.8,624.1 390.4,627.5 386.1,622.1 392.4,622.6 388.7,618.4 393.7,618.7" stroke="#2cc82c"/><polyline points="470.7,576.0 471.7,572.6 474.4,575.3 475.4,570.6 477.8,574.1 480.1,571.1 482.2,573.5 484.2,570.2 485.2,573.9 488.3,572.4 489.2,576.3 492.3,573.6 492.6,576.7 496.5,574.4 495.7,578.9 498.9,577.5 499.2,580.4 502.7,579.5 502.5,583.3 505.2,582.5 505.2,585.8 507.7,586.3 507.6,588.8 510.9,589.1 509.7,592.5 513.7,592.5 510.5,596.7 514.6,596.4 513.1,599.6" stroke="#18eaea"/><polyline points="426.6,577.9 430.3,579.8 425.0,582.2 429.6,583.7 425.8,586.2 431.6,587.4 427.0,590.7 433.1,590.9 428.8,595.1 434.4,594.2 431.7,598.5 437.1,596.7 434.1,601.6 438.5,600.2 437.0,604.4 441.4,603.0 440.5,607.1 445.4,604.3 443.6,610.0 448.1,607.3 447.3,612.2 450.8,609.3 451.1,613.2 454.1,611.0 455.3,615.3 458.1,612.6 459.8,616.1 461.6,611.7 464.1,616.0 464.6,610.6 468.4,614.6 468.3,609.9 472.1,613.6" stroke="#18eaea"/><polyline points="458.7,607.2 456.5,606.6 457.1,603.8 453.5,602.7 456.1,601.1 454.7,598.7 457.6,597.6 456.5,594.4 460.5,595.0 460.7,592.0 463.1,593.5 465.4,591.6 467.2,593.3 469.3,591.2 470.7,594.5 473.9,593.7 473.0,597.1 476.4,597.3 475.2,600.3 478.2,601.4 475.2,603.2 477.4,606.0 473.9,607.0 475.4,609.5" stroke="#2cc82c"/><polyline points="439.6,605.0 439.0,608.1 435.5,605.9 435.0,609.0 432.3,608.4 431.8,611.4 428.1,609.8 428.5,612.6 425.1,613.5 427.1,616.5 423.8,616.9 425.6,620.2 422.3,620.8 424.2,623.7 421.0,625.2 425.0,627.2 422.2,629.2 425.3,631.3 422.6,633.3 425.0,635.1 423.3,637.7" stroke="#18eaea"/><polyline points="464.6,623.9 466.8,626.0 464.3,628.3 468.2,630.2 464.8,631.8 467.7,633.9 465.7,635.9 468.1,638.0 466.4,640.3 470.1,641.2 469.4,643.8 472.2,644.3 471.7,647.7 474.9,646.8 474.7,649.7 478.7,649.6 476.4,653.5 480.2,653.4 478.0,656.4 482.5,657.1 480.2,659.7 483.2,660.6" stroke="#18eaea"/><polyline points="482.5,669.2 479.8,666.7 484.1,664.7 478.8,662.7 483.5,661.4 479.4,658.5 483.6,658.3 483.0,654.5 486.2,656.2 486.4,651.1 490.4,656.0 490.9,651.3 493.7,655.1 495.1,650.7 496.6,654.4 499.6,651.0 500.4,655.2 504.0,651.5 503.3,655.7 508.3,654.6 505.5,658.8 510.6,658.6 506.0,662.4 509.9,663.8 506.5,664.9 510.1,668.0 504.9,667.4" stroke="#2cc82c"/><polyline points="480.1,670.5 483.5,670.7 483.0,673.8 485.5,674.3 485.3,677.1 488.6,677.0 488.0,680.0 491.2,679.3 491.5,682.0 494.8,681.3 495.0,684.9 497.8,683.2 498.7,686.4 501.9,684.6" stroke="#18eaea"/><polyline points="555.5,628.5 558.7,629.6 557.3,632.2 560.5,633.0 558.1,636.0 563.4,636.5 559.8,639.5 563.3,641.2 559.6,642.4 561.9,645.6 557.2,644.1 558.2,648.4 555.4,647.4 555.9,651.5 551.2,649.3 553.3,653.3 548.6,653.7 551.8,656.7 548.7,657.8 551.4,660.7 547.8,661.7 549.2,665.1 545.6,664.9 547.9,669.1 543.3,667.9 544.4,671.1 540.6,670.9 541.3,674.1 538.3,674.1 538.6,677.4 534.7,675.8 536.0,679.9 532.4,679.4 533.5,683.2 528.2,681.0 529.5,685.3 525.9,683.5 526.1,687.8 522.8,686.0 523.2,690.0 519.5,687.8 518.9,691.4 515.7,689.2 515.3,693.7 512.0,691.3 511.7,694.4 508.5,691.9 507.4,695.7 505.1,692.9 503.1,697.0 500.9,693.5" stroke="#18eaea"/><polyline points="538.0,675.0 543.5,674.9 539.4,678.6 543.7,679.1 542.7,681.7 545.5,682.7 544.2,684.8 548.2,686.3 544.2,689.0 547.6,691.3 542.7,691.3 544.8,695.0 541.3,694.9" stroke="#18eaea"/><polyline points="299.2,634.7 302.6,632.1 302.3,637.5 306.3,634.0 305.4,639.3 308.8,637.7 308.3,641.4 313.3,639.9 310.5,644.6 314.8,644.3 313.5,647.0 315.7,648.2 313.3,650.2 317.1,652.7 313.7,654.1 316.9,656.8 313.5,658.0 316.3,660.9 311.8,661.5 314.0,665.5 309.6,664.4 310.0,667.2 306.6,666.6 306.7,669.6 303.2,667.5 303.0,671.4 300.3,670.7" stroke="#18eaea"/><polyline points="321.4,640.0 325.1,640.1 323.7,643.3 326.8,643.9 326.2,646.7 328.7,647.4 327.2,650.1 330.2,651.5 327.0,654.2 332.1,655.4 327.6,657.5 330.8,659.7 326.6,660.8 331.0,664.0 326.4,664.6 329.4,668.3 325.2,668.3 326.2,670.9 322.3,670.4 323.8,675.0 320.5,674.8 320.4,677.7 317.3,676.5 317.9,680.4 313.9,678.3 313.9,682.9 310.7,679.5 310.0,683.8 307.0,682.3 306.0,684.7 303.6,683.2 302.8,687.7 299.2,683.9" stroke="#18eaea"/><polyline points="301.2,675.3 300.5,673.1 302.7,671.9 302.4,669.0 304.6,668.7 303.8,665.4 306.9,665.3 305.8,662.5 309.2,662.1 307.7,659.0" stroke="#b8b8b8"/><polyline points="300.0,664.9 301.3,660.7 304.5,664.1 304.9,660.3 308.3,663.7 309.4,659.8 312.0,662.4 312.7,657.8 315.6,660.1 316.3,655.9 318.9,657.9 320.0,654.2 323.0,658.0 323.3,652.5 326.0,655.4 328.6,652.1 329.4,656.9 332.9,652.2 333.9,656.4 336.6,654.7" stroke="#18eaea"/><polyline points="341.8,668.2 338.3,668.2 340.1,664.9 335.8,664.9 339.9,660.8 333.9,661.2 338.4,657.8 333.4,655.9 338.4,654.5 335.9,651.9 340.5,651.6 337.2,648.1 342.1,648.4 340.0,644.6 343.4,644.3 342.4,640.1 346.3,643.3 346.8,638.5 349.2,640.4 350.6,638.0 353.0,640.5 355.6,638.7 355.5,641.8 358.9,640.8 358.9,644.2" stroke="#18eaea"/><polyline points="410.4,644.2 414.1,645.1 412.1,647.7 415.1,649.1 413.0,651.7 416.7,653.0 413.2,656.0 416.4,657.7 413.7,659.8 416.5,661.5 412.6,663.0 415.5,665.5" stroke="#18eaea"/><polyline points="385.9,694.5 385.7,690.2 389.0,692.1 389.3,688.0 393.3,691.1 393.3,686.6 397.2,689.7 395.7,684.6 399.9,686.1 399.4,682.3 403.5,684.4 402.7,680.3 405.5,680.4 405.0,677.4 409.1,678.0 406.8,674.3 412.0,674.6 408.4,670.5 413.5,670.5" stroke="#18eaea"/><polyline points="410.3,671.5 413.7,670.7 413.0,674.7 416.9,673.6 415.7,677.5 419.9,676.7 417.5,680.0 421.4,681.1 417.1,684.2 421.1,685.4" stroke="#18eaea"/><polyline points="619.3,485.0 622.9,482.2 622.8,486.3 626.1,484.2 626.3,488.6 629.4,484.7 631.8,487.8 632.4,484.8 635.9,486.0 636.0,482.7 639.3,483.7 639.0,480.3" stroke="#18eaea"/><polyline points="852.7,484.8 854.1,488.9 850.4,487.8 851.0,491.1 847.1,490.5 848.2,493.7 845.2,493.9 844.7,496.7 842.5,495.7 840.9,499.2 839.3,495.1 836.4,497.7 836.2,493.5 832.2,495.6 833.2,491.4 828.7,492.8 830.5,488.3 827.0,488.4 828.2,486.1 824.2,485.1" stroke="#18eaea"/><polyline points="825.7,488.4 824.9,491.5 821.8,491.0 820.6,493.6 818.1,492.6 817.5,495.8 814.8,493.5 813.6,497.6 811.1,495.1 809.9,497.8 807.2,495.8 805.9,499.3 803.3,498.2 802.2,500.8 799.4,498.9 797.8,501.6 795.4,499.1 794.2,501.6 791.7,498.1 789.5,500.9 787.8,498.4 786.0,500.4 784.3,497.9" stroke="#18eaea"/><polyline points="775.2,521.9 781.5,522.3 775.9,525.5 781.7,526.6 778.2,529.1 781.5,531.3 777.4,531.9 779.3,535.1 774.3,534.4 776.7,538.0" stroke="#18eaea"/><polyline points="658.0,572.9 662.2,572.5 660.9,576.2 664.2,576.7 663.2,579.4 666.7,579.2 664.8,583.3 668.1,582.9 668.0,586.6 672.1,585.1 671.2,589.3 675.1,587.0 674.4,591.2 677.5,589.6 678.7,592.4 681.4,591.1 682.2,594.9 685.6,591.1 686.7,594.7 688.6,592.8 690.5,595.2 692.4,593.4 695.2,596.2 696.2,591.7 699.2,594.3 700.2,591.8 703.2,594.5 703.9,590.8 706.9,592.2 707.1,588.6 710.6,590.9 711.4,587.9 714.4,589.6 714.8,586.2 718.1,587.7 717.6,583.0 721.1,584.6" stroke="#18eaea"/><polyline points="674.6,591.4 678.2,594.2 674.0,595.6 677.5,598.3 673.2,599.1 675.9,601.8 673.2,602.9 675.5,606.6 670.5,606.2 673.0,609.6 668.4,609.3 670.3,613.3 666.0,612.7 667.8,616.4 663.7,615.0 664.3,618.8 661.4,617.9 661.3,621.9 657.8,619.1 656.5,622.5 654.1,619.8 652.6,623.8 650.6,619.9 647.9,623.2 647.6,618.8 644.3,620.5 643.4,618.5 640.4,619.7" stroke="#18eaea"/><polyline points="598.8,605.9 603.2,604.3 602.1,607.2 606.5,609.8 601.3,609.3 603.9,613.8" stroke="#18eaea"/><polyline points="631.7,600.4 633.3,602.9 630.8,604.4 632.4,607.3 630.1,608.2 631.4,610.8 628.7,612.2 630.0,614.4 627.4,616.2 629.6,618.8 626.9,619.9 629.2,622.6 626.3,623.9 627.9,626.8 625.7,628.4 627.1,630.4 625.5,631.9 627.0,634.2 624.8,636.1 627.6,637.9 624.5,640.2 627.6,642.0 625.5,644.6 627.7,646.2 625.5,648.5 628.6,650.1 625.6,652.3 628.5,654.2 626.6,656.7 629.5,657.7 627.3,660.2 630.2,661.4 629.5,664.0 632.0,665.1 631.5,667.5 633.8,668.3 633.1,671.7 636.2,672.3" stroke="#18eaea"/><polyline points="821.9,586.0 823.4,587.8 820.8,589.6 822.5,591.8 820.1,593.6 821.7,596.3 819.7,597.8 820.6,599.7 818.6,601.7 820.0,603.4 817.9,605.1 819.0,607.2 817.4,609.4 818.4,611.3 816.3,613.3 819.0,615.7 815.8,617.4 817.9,619.2 816.2,621.6 817.8,623.4 815.8,625.4 817.6,627.3" stroke="#18eaea"/><polyline points="707.7,617.8 712.6,617.2 710.1,620.9 713.6,620.7 712.7,624.3 716.5,623.7 715.7,627.2 719.2,625.3 719.6,629.0 722.5,627.4 724.3,629.6 726.0,625.1 728.4,629.8 729.8,625.8 732.1,628.7 733.9,626.0 735.8,629.1 738.5,625.0 739.0,630.2 743.3,628.1 740.3,632.6 745.0,631.8 741.9,635.4 746.6,635.8 744.4,639.2 748.4,639.8 744.3,643.3 749.5,643.7 747.3,646.6 752.3,645.8 749.8,650.9 754.3,647.7 753.3,653.5 756.3,650.4 757.5,655.3 761.4,649.6 762.0,654.7 764.4,652.1 765.4,656.2 769.5,653.1 767.5,658.7 772.8,657.4 769.4,661.2 774.2,661.6 770.7,665.3 775.0,665.4 771.3,669.0 777.9,668.8 773.9,672.4" stroke="#18eaea"/><polyline points="773.4,624.5 776.6,622.5 777.5,626.3 780.2,624.1 781.1,627.3 783.7,626.0 784.4,628.9 787.2,628.0 786.8,631.1 790.1,631.9 788.8,634.5 792.2,635.3 790.6,638.1 793.5,638.9 791.5,641.9 795.4,643.0 793.2,645.2 795.9,647.5 792.4,648.9 795.1,651.1 793.1,653.1 795.0,655.9 791.7,656.5 793.5,659.2 790.6,660.5 791.7,663.2 788.2,663.7 788.8,666.7 785.8,666.0 786.3,669.3 782.1,668.7" stroke="#18eaea"/><polyline points="665.9,634.0 663.9,636.0 662.1,632.3 659.9,635.9 657.7,631.8 656.5,636.6 652.8,633.6 654.0,639.5 649.3,635.8 651.3,640.9 647.4,640.3 649.8,643.9 644.9,644.5 649.0,647.1 644.4,648.8 647.0,650.1 645.3,652.6 648.2,654.3 646.4,657.5 650.4,656.6 649.0,660.3 653.2,659.2 653.0,664.4 655.6,660.9 658.2,664.0 658.7,659.8 661.8,660.4 661.8,656.3" stroke="#2cc82c"/><polyline points="765.1,677.8 766.6,680.5 762.7,680.7 763.2,683.3 760.7,683.6 761.3,686.9 757.5,686.5 759.5,689.7 756.1,690.8 758.2,694.0 755.1,695.4 758.4,697.2 755.0,699.9 757.8,701.5 756.2,703.5 759.8,704.7 758.2,707.2 761.3,707.7" stroke="#18eaea"/><polyline points="767.4,680.3 768.9,678.3 770.7,679.9 773.3,677.5 775.0,680.2 777.3,677.3 778.8,681.0 781.3,678.2 783.3,680.4 785.2,678.1 786.7,679.7 789.0,678.3 790.6,680.7 793.8,678.8 793.2,682.7 796.4,682.3 796.2,685.0 799.5,685.7 797.6,688.9 801.0,689.3 799.4,692.3 801.6,694.0 798.3,695.5" stroke="#18eaea"/></g><g filter="url(#bl2)"><circle cx="225.6" cy="85.0" r="2.4" fill="#f4f4f4"/><circle cx="230.0" cy="80.4" r="1.8" fill="#f4f4f4"/><circle cx="229.0" cy="83.8" r="2.1" fill="#f4f4f4"/><circle cx="226.7" cy="80.1" r="2.3" fill="#f4f4f4"/><circle cx="226.4" cy="80.8" r="2.0" fill="#f4f4f4"/><circle cx="227.1" cy="82.7" r="2.4" fill="#f4f4f4"/><circle cx="228.0" cy="83.0" r="2.6" fill="#f8f8f8"/><circle cx="220.0" cy="58.0" r="2.0" fill="#e8e8e8"/><circle cx="224.0" cy="38.0" r="1.6" fill="#e8e8e8"/><circle cx="95.6" cy="70.0" r="1.600" fill="none" stroke="#e8a030" stroke-width="0.900"/><circle cx="227.6" cy="43.6" r="1.600" fill="none" stroke="#e8a030" stroke-width="0.900"/><circle cx="245.6" cy="56.0" r="1.600" fill="none" stroke="#e8a030" stroke-width="0.900"/><circle cx="314.0" cy="103.0" r="2.0" fill="#e8e8e8"/><circle cx="429.6" cy="100.6" r="1.6" fill="#e8e8e8"/><circle cx="341.4" cy="43.0" r="1.0" fill="#e8e8e8"/><circle cx="505.2" cy="40.0" r="0.8" fill="#e8e8e8"/><circle cx="530.6" cy="148.4" r="1.600" fill="none" stroke="#e8a030" stroke-width="0.900"/><circle cx="649.6" cy="3.9" r="1.9" fill="#f4f4f4"/><circle cx="648.5" cy="4.9" r="1.7" fill="#f4f4f4"/><circle cx="648.9" cy="4.5" r="1.6" fill="#f4f4f4"/><circle cx="648.1" cy="7.3" r="1.4" fill="#f4f4f4"/><circle cx="650.1" cy="6.5" r="1.4" fill="#f4f4f4"/><circle cx="650.5" cy="5.9" r="1.4" fill="#f4f4f4"/><circle cx="649.0" cy="6.0" r="1.9" fill="#f8f8f8"/><circle cx="711.0" cy="7.1" r="1.5" fill="#f4f4f4"/><circle cx="711.5" cy="6.5" r="1.9" fill="#f4f4f4"/><circle cx="709.6" cy="6.4" r="1.7" fill="#f4f4f4"/><circle cx="710.7" cy="6.9" r="1.2" fill="#f4f4f4"/><circle cx="710.6" cy="7.2" r="1.8" fill="#f4f4f4"/><circle cx="708.7" cy="5.2" r="1.5" fill="#f4f4f4"/><circle cx="711.0" cy="6.0" r="2.0" fill="#f8f8f8"/><circle cx="838.0" cy="111.0" r="1.6" fill="#e8e8e8"/><circle cx="849.0" cy="121.0" r="1.6" fill="#e8e8e8"/><circle cx="78.2" cy="299.0" r="1.6" fill="#f4f4f4"/><circle cx="78.4" cy="297.8" r="1.1" fill="#f4f4f4"/><circle cx="78.9" cy="296.6" r="1.6" fill="#f4f4f4"/><circle cx="80.8" cy="297.6" r="1.1" fill="#f4f4f4"/><circle cx="80.3" cy="297.5" r="1.1" fill="#f4f4f4"/><circle cx="79.9" cy="299.7" r="1.1" fill="#f4f4f4"/><circle cx="79.0" cy="298.0" r="1.7" fill="#f8f8f8"/><circle cx="113.0" cy="266.6" r="1.600" fill="none" stroke="#e8a030" stroke-width="0.900"/><circle cx="7.6" cy="352.0" r="1.8" fill="#e8e8e8"/><circle cx="77.6" cy="339.4" r="1.2" fill="#e8e8e8"/><circle cx="1.3" cy="382.7" r="1.7" fill="#f4f4f4"/><circle cx="2.5" cy="380.2" r="1.7" fill="#f4f4f4"/><circle cx="3.7" cy="381.9" r="1.3" fill="#f4f4f4"/><circle cx="2.0" cy="381.0" r="1.5" fill="#f4f4f4"/><circle cx="3.1" cy="383.7" r="1.4" fill="#f4f4f4"/><circle cx="1.7" cy="384.1" r="1.1" fill="#f4f4f4"/><circle cx="2.0" cy="382.0" r="1.8" fill="#f8f8f8"/><circle cx="42.0" cy="459.6" r="1.600" fill="none" stroke="#e8a030" stroke-width="0.900"/><circle cx="237.0" cy="461.6" r="1.600" fill="none" stroke="#e8a030" stroke-width="0.900"/><circle cx="310.4" cy="292.4" r="1.8" fill="#e8e8e8"/><circle cx="475.0" cy="354.6" r="1.600" fill="none" stroke="#e8a030" stroke-width="0.900"/><circle cx="502.8" cy="358.0" r="1.600" fill="none" stroke="#e8a030" stroke-width="0.900"/><circle cx="510.0" cy="400.0" r="1.8" fill="#e8e8e8"/><circle cx="505.6" cy="399.6" r="1.600" fill="none" stroke="#e8a030" stroke-width="0.900"/><circle cx="721.0" cy="290.0" r="1.6" fill="#e8e8e8"/><circle cx="621.0" cy="300.0" r="1.0" fill="#e8e8e8"/><circle cx="767.0" cy="415.0" r="1.600" fill="none" stroke="#e8a030" stroke-width="0.900"/><circle cx="793.0" cy="470.0" r="2.0" fill="#e8e8e8"/><circle cx="72.4" cy="568.0" r="0.8" fill="#e8e8e8"/><circle cx="72.4" cy="572.4" r="0.6" fill="#e8e8e8"/><circle cx="58.0" cy="652.0" r="1.4" fill="#e8e8e8"/><circle cx="67.0" cy="648.0" r="1.600" fill="none" stroke="#e8a030" stroke-width="0.900"/><circle cx="100.4" cy="660.0" r="1.600" fill="none" stroke="#e8a030" stroke-width="0.900"/><circle cx="238.0" cy="713.0" r="2.0" fill="#e8e8e8"/><circle cx="223.0" cy="604.0" r="0.8" fill="#e8e8e8"/><circle cx="267.0" cy="561.0" r="0.6" fill="#e8e8e8"/><circle cx="265.4" cy="565.0" r="0.6" fill="#e8e8e8"/><circle cx="190.0" cy="565.0" r="0.6" fill="#e8e8e8"/><circle cx="277.0" cy="616.0" r="0.8" fill="#e8e8e8"/><circle cx="378.5" cy="549.2" r="1.0" fill="#f4f4f4"/><circle cx="379.0" cy="547.9" r="1.4" fill="#f4f4f4"/><circle cx="379.4" cy="547.9" r="1.4" fill="#f4f4f4"/><circle cx="380.0" cy="549.0" r="1.2" fill="#f4f4f4"/><circle cx="380.5" cy="549.5" r="0.9" fill="#f4f4f4"/><circle cx="378.3" cy="548.6" r="1.1" fill="#f4f4f4"/><circle cx="379.0" cy="549.0" r="1.4" fill="#f8f8f8"/><circle cx="391.0" cy="550.0" r="1.600" fill="none" stroke="#e8a030" stroke-width="0.900"/><circle cx="532.0" cy="516.0" r="1.600" fill="none" stroke="#e8a030" stroke-width="0.900"/><circle cx="372.0" cy="690.4" r="0.8" fill="#e8e8e8"/><circle cx="764.4" cy="548.6" r="1.600" fill="none" stroke="#e8a030" stroke-width="0.900"/><circle cx="608.0" cy="665.0" r="1.0" fill="#e8e8e8"/><circle cx="746.0" cy="569.4" r="0.6" fill="#e8e8e8"/><circle cx="763.0" cy="597.0" r="0.6" fill="#e8e8e8"/><ellipse cx="76.4" cy="65.6" rx="3.800" ry="2.300" transform="rotate(-1 76.4 65.6)" fill="#fafafa" stroke="#8a8a8a" stroke-width="1.600"/><ellipse cx="81.9" cy="97.5" rx="3.800" ry="2.300" transform="rotate(-15 81.9 97.5)" fill="#fafafa" stroke="#8a8a8a" stroke-width="1.600"/><ellipse cx="169.1" cy="48.5" rx="3.800" ry="2.300" transform="rotate(-132 169.1 48.5)" fill="#fafafa" stroke="#8a8a8a" stroke-width="1.600"/><ellipse cx="142.0" cy="54.0" rx="3.800" ry="2.300" transform="rotate(-100 142.0 54.0)" fill="#fafafa" stroke="#8a8a8a" stroke-width="1.600"/><ellipse cx="124.0" cy="59.6" rx="3.800" ry="2.300" transform="rotate(170 124.0 59.6)" fill="#fafafa" stroke="#8a8a8a" stroke-width="1.600"/><ellipse cx="208.0" cy="43.3" rx="3.800" ry="2.300" transform="rotate(-9 208.0 43.3)" fill="#fafafa" stroke="#8a8a8a" stroke-width="1.600"/><ellipse cx="245.2" cy="69.2" rx="3.800" ry="2.300" transform="rotate(-155 245.2 69.2)" fill="#fafafa" stroke="#8a8a8a" stroke-width="1.600"/><ellipse cx="161.4" cy="98.6" rx="3.800" ry="2.300" transform="rotate(-45 161.4 98.6)" fill="#fafafa" stroke="#8a8a8a" stroke-width="1.600"/><ellipse cx="74.0" cy="122.0" rx="3.800" ry="2.300" transform="rotate(-168 74.0 122.0)" fill="#fafafa" stroke="#8a8a8a" stroke-width="1.600"/><ellipse cx="107.7" cy="147.4" rx="3.800" ry="2.300" transform="rotate(-164 107.7 147.4)" fill="#fafafa" stroke="#8a8a8a" stroke-width="1.600"/><ellipse cx="44.9" cy="209.9" rx="3.800" ry="2.300" transform="rotate(49 44.9 209.9)" fill="#fafafa" stroke="#8a8a8a" stroke-width="1.600"/><ellipse cx="52.9" cy="232.9" rx="3.800" ry="2.300" transform="rotate(75 52.9 232.9)" fill="#fafafa" stroke="#8a8a8a" stroke-width="1.600"/><ellipse cx="34.4" cy="152.5" rx="3.800" ry="2.300" transform="rotate(-7 34.4 152.5)" fill="#fafafa" stroke="#8a8a8a" stroke-width="1.600"/><ellipse cx="283.6" cy="93.1" rx="3.800" ry="2.300" transform="rotate(-9 283.6 93.1)" fill="#fafafa" stroke="#8a8a8a" stroke-width="1.600"/><ellipse cx="270.7" cy="113.3" rx="3.800" ry="2.300" transform="rotate(-32 270.7 113.3)" fill="#fafafa" stroke="#8a8a8a" stroke-width="1.600"/><ellipse cx="204.7" cy="115.3" rx="3.800" ry="2.300" transform="rotate(-148 204.7 115.3)" fill="#fafafa" stroke="#8a8a8a" stroke-width="1.600"/><ellipse cx="250.4" cy="155.4" rx="3.800" ry="2.300" transform="rotate(-174 250.4 155.4)" fill="#fafafa" stroke="#8a8a8a" stroke-width="1.600"/><ellipse cx="289.7" cy="193.5" rx="3.800" ry="2.300" transform="rotate(33 289.7 193.5)" fill="#fafafa" stroke="#8a8a8a" stroke-width="1.600"/><ellipse cx="132.3" cy="188.5" rx="3.800" ry="2.300" transform="rotate(-131 132.3 188.5)" fill="#fafafa" stroke="#8a8a8a" stroke-width="1.600"/><ellipse cx="150.4" cy="217.2" rx="3.800" ry="2.300" transform="rotate(174 150.4 217.2)" fill="#fafafa" stroke="#8a8a8a" stroke-width="1.600"/><ellipse cx="130.0" cy="215.9" rx="3.800" ry="2.300" transform="rotate(-119 130.0 215.9)" fill="#fafafa" stroke="#8a8a8a" stroke-width="1.600"/><ellipse cx="1.0" cy="23.0" rx="3.800" ry="2.300" transform="rotate(-60 1.0 23.0)" fill="#fafafa" stroke="#8a8a8a" stroke-width="1.600"/><ellipse cx="226.0" cy="16.0" rx="3.800" ry="2.300" transform="rotate(-80 226.0 16.0)" fill="#fafafa" stroke="#8a8a8a" stroke-width="1.600"/><ellipse cx="188.0" cy="158.0" rx="3.800" ry="2.300" transform="rotate(170 188.0 158.0)" fill="#fafafa" stroke="#8a8a8a" stroke-width="1.600"/><ellipse cx="50.0" cy="134.0" rx="3.800" ry="2.300" transform="rotate(-120 50.0 134.0)" fill="#fafafa" stroke="#8a8a8a" stroke-width="1.600"/><ellipse cx="64.0" cy="105.0" rx="3.800" ry="2.300" transform="rotate(160 64.0 105.0)" fill="#fafafa" stroke="#8a8a8a" stroke-width="1.600"/><ellipse cx="105.0" cy="77.0" rx="3.800" ry="2.300" transform="rotate(80 105.0 77.0)" fill="#fafafa" stroke="#8a8a8a" stroke-width="1.600"/><ellipse cx="234.0" cy="46.0" rx="3.800" ry="2.300" transform="rotate(-140 234.0 46.0)" fill="#fafafa" stroke="#8a8a8a" stroke-width="1.600"/><ellipse cx="120.0" cy="200.0" rx="3.800" ry="2.300" transform="rotate(-170 120.0 200.0)" fill="#fafafa" stroke="#8a8a8a" stroke-width="1.600"/><ellipse cx="80.0" cy="96.0" rx="3.800" ry="2.300" transform="rotate(-80 80.0 96.0)" fill="#fafafa" stroke="#8a8a8a" stroke-width="1.600"/><ellipse cx="452.0" cy="17.6" rx="3.800" ry="2.300" transform="rotate(190 452.0 17.6)" fill="#fafafa" stroke="#8a8a8a" stroke-width="1.600"/><ellipse cx="365.8" cy="60.2" rx="3.800" ry="2.300" transform="rotate(-23 365.8 60.2)" fill="#fafafa" stroke="#8a8a8a" stroke-width="1.600"/><ellipse cx="382.0" cy="81.3" rx="3.800" ry="2.300" transform="rotate(8 382.0 81.3)" fill="#fafafa" stroke="#8a8a8a" stroke-width="1.600"/><ellipse cx="388.3" cy="69.5" rx="3.800" ry="2.300" transform="rotate(14 388.3 69.5)" fill="#fafafa" stroke="#8a8a8a" stroke-width="1.600"/><ellipse cx="359.0" cy="96.1" rx="3.800" ry="2.300" transform="rotate(-73 359.0 96.1)" fill="#fafafa" stroke="#8a8a8a" stroke-width="1.600"/><ellipse cx="314.0" cy="104.0" rx="3.800" ry="2.300" transform="rotate(-70 314.0 104.0)" fill="#fafafa" stroke="#8a8a8a" stroke-width="1.600"/><ellipse cx="399.6" cy="80.6" rx="3.800" ry="2.300" transform="rotate(180 399.6 80.6)" fill="#fafafa" stroke="#8a8a8a" stroke-width="1.600"/><ellipse cx="428.2" cy="149.8" rx="3.800" ry="2.300" transform="rotate(135 428.2 149.8)" fill="#fafafa" stroke="#8a8a8a" stroke-width="1.600"/><ellipse cx="408.0" cy="173.0" rx="3.800" ry="2.300" transform="rotate(-140 408.0 173.0)" fill="#fafafa" stroke="#8a8a8a" stroke-width="1.600"/><ellipse cx="523.1" cy="137.7" rx="3.800" ry="2.300" transform="rotate(41 523.1 137.7)" fill="#fafafa" stroke="#8a8a8a" stroke-width="1.600"/><ellipse cx="339.6" cy="163.0" rx="3.800" ry="2.300" transform="rotate(95 339.6 163.0)" fill="#fafafa" stroke="#8a8a8a" stroke-width="1.600"/><ellipse cx="329.6" cy="180.0" rx="3.800" ry="2.300" transform="rotate(-80 329.6 180.0)" fill="#fafafa" stroke="#8a8a8a" stroke-width="1.600"/><ellipse cx="540.1" cy="169.5" rx="3.800" ry="2.300" transform="rotate(166 540.1 169.5)" fill="#fafafa" stroke="#8a8a8a" stroke-width="1.600"/><ellipse cx="502.3" cy="214.6" rx="3.800" ry="2.300" transform="rotate(151 502.3 214.6)" fill="#fafafa" stroke="#8a8a8a" stroke-width="1.600"/><ellipse cx="496.2" cy="190.4" rx="3.800" ry="2.300" transform="rotate(-53 496.2 190.4)" fill="#fafafa" stroke="#8a8a8a" stroke-width="1.600"/><ellipse cx="555.0" cy="173.6" rx="3.800" ry="2.300" transform="rotate(200 555.0 173.6)" fill="#fafafa" stroke="#8a8a8a" stroke-width="1.600"/><ellipse cx="501.0" cy="183.0" rx="3.800" ry="2.300" transform="rotate(200 501.0 183.0)" fill="#fafafa" stroke="#8a8a8a" stroke-width="1.600"/><ellipse cx="572.4" cy="202.8" rx="3.800" ry="2.300" transform="rotate(-174 572.4 202.8)" fill="#fafafa" stroke="#8a8a8a" stroke-width="1.600"/><ellipse cx="561.6" cy="217.6" rx="3.800" ry="2.300" transform="rotate(-60 561.6 217.6)" fill="#fafafa" stroke="#8a8a8a" stroke-width="1.600"/><ellipse cx="673.1" cy="23.3" rx="3.800" ry="2.300" transform="rotate(-160 673.1 23.3)" fill="#fafafa" stroke="#8a8a8a" stroke-width="1.600"/><ellipse cx="803.6" cy="26.0" rx="3.800" ry="2.300" transform="rotate(-90 803.6 26.0)" fill="#fafafa" stroke="#8a8a8a" stroke-width="1.600"/><ellipse cx="843.0" cy="44.7" rx="3.800" ry="2.300" transform="rotate(121 843.0 44.7)" fill="#fafafa" stroke="#8a8a8a" stroke-width="1.600"/><ellipse cx="841.0" cy="20.0" rx="3.800" ry="2.300" transform="rotate(-90 841.0 20.0)" fill="#fafafa" stroke="#8a8a8a" stroke-width="1.600"/><ellipse cx="613.4" cy="64.2" rx="3.800" ry="2.300" transform="rotate(61 613.4 64.2)" fill="#fafafa" stroke="#8a8a8a" stroke-width="1.600"/><ellipse cx="615.2" cy="64.2" rx="3.800" ry="2.300" transform="rotate(-157 615.2 64.2)" fill="#fafafa" stroke="#8a8a8a" stroke-width="1.600"/><ellipse cx="647.5" cy="76.9" rx="3.800" ry="2.300" transform="rotate(104 647.5 76.9)" fill="#fafafa" stroke="#8a8a8a" stroke-width="1.600"/><ellipse cx="635.7" cy="84.9" rx="3.800" ry="2.300" transform="rotate(-34 635.7 84.9)" fill="#fafafa" stroke="#8a8a8a" stroke-width="1.600"/><ellipse cx="658.0" cy="88.0" rx="3.800" ry="2.300" transform="rotate(20 658.0 88.0)" fill="#fafafa" stroke="#8a8a8a" stroke-width="1.600"/><ellipse cx="705.7" cy="84.6" rx="3.800" ry="2.300" transform="rotate(-31 705.7 84.6)" fill="#fafafa" stroke="#8a8a8a" stroke-width="1.600"/><ellipse cx="743.0" cy="101.0" rx="3.800" ry="2.300" transform="rotate(-100 743.0 101.0)" fill="#fafafa" stroke="#8a8a8a" stroke-width="1.600"/><ellipse cx="771.1" cy="104.7" rx="3.800" ry="2.300" transform="rotate(160 771.1 104.7)" fill="#fafafa" stroke="#8a8a8a" stroke-width="1.600"/><ellipse cx="767.4" cy="142.4" rx="3.800" ry="2.300" transform="rotate(23 767.4 142.4)" fill="#fafafa" stroke="#8a8a8a" stroke-width="1.600"/><ellipse cx="731.0" cy="159.0" rx="3.800" ry="2.300" transform="rotate(-130 731.0 159.0)" fill="#fafafa" stroke="#8a8a8a" stroke-width="1.600"/><ellipse cx="731.0" cy="168.0" rx="3.800" ry="2.300" transform="rotate(-140 731.0 168.0)" fill="#fafafa" stroke="#8a8a8a" stroke-width="1.600"/><ellipse cx="711.6" cy="165.6" rx="3.800" ry="2.300" transform="rotate(30 711.6 165.6)" fill="#fafafa" stroke="#8a8a8a" stroke-width="1.600"/><ellipse cx="825.0" cy="158.0" rx="3.800" ry="2.300" transform="rotate(-110 825.0 158.0)" fill="#fafafa" stroke="#8a8a8a" stroke-width="1.600"/><ellipse cx="805.8" cy="172.0" rx="3.800" ry="2.300" transform="rotate(-128 805.8 172.0)" fill="#fafafa" stroke="#8a8a8a" stroke-width="1.600"/><ellipse cx="608.0" cy="139.6" rx="3.800" ry="2.300" transform="rotate(150 608.0 139.6)" fill="#fafafa" stroke="#8a8a8a" stroke-width="1.600"/><ellipse cx="636.0" cy="184.0" rx="3.800" ry="2.300" transform="rotate(0 636.0 184.0)" fill="#fafafa" stroke="#8a8a8a" stroke-width="1.600"/><ellipse cx="606.0" cy="211.0" rx="3.800" ry="2.300" transform="rotate(-120 606.0 211.0)" fill="#fafafa" stroke="#8a8a8a" stroke-width="1.600"/><ellipse cx="683.2" cy="179.4" rx="3.800" ry="2.300" transform="rotate(-54 683.2 179.4)" fill="#fafafa" stroke="#8a8a8a" stroke-width="1.600"/><ellipse cx="717.0" cy="197.4" rx="3.800" ry="2.300" transform="rotate(11 717.0 197.4)" fill="#fafafa" stroke="#8a8a8a" stroke-width="1.600"/><ellipse cx="826.0" cy="215.0" rx="3.800" ry="2.300" transform="rotate(-50 826.0 215.0)" fill="#fafafa" stroke="#8a8a8a" stroke-width="1.600"/><ellipse cx="25.0" cy="255.0" rx="3.800" ry="2.300" transform="rotate(-80 25.0 255.0)" fill="#fafafa" stroke="#8a8a8a" stroke-width="1.600"/><ellipse cx="37.0" cy="277.0" rx="3.800" ry="2.300" transform="rotate(-100 37.0 277.0)" fill="#fafafa" stroke="#8a8a8a" stroke-width="1.600"/><ellipse cx="6.0" cy="284.0" rx="3.800" ry="2.300" transform="rotate(140 6.0 284.0)" fill="#fafafa" stroke="#8a8a8a" stroke-width="1.600"/><ellipse cx="57.0" cy="290.0" rx="3.800" ry="2.300" transform="rotate(-150 57.0 290.0)" fill="#fafafa" stroke="#8a8a8a" stroke-width="1.600"/><ellipse cx="106.0" cy="253.0" rx="3.800" ry="2.300" transform="rotate(-100 106.0 253.0)" fill="#fafafa" stroke="#8a8a8a" stroke-width="1.600"/><ellipse cx="119.0" cy="252.0" rx="3.800" ry="2.300" transform="rotate(-160 119.0 252.0)" fill="#fafafa" stroke="#8a8a8a" stroke-width="1.600"/><ellipse cx="128.6" cy="271.9" rx="3.800" ry="2.300" transform="rotate(73 128.6 271.9)" fill="#fafafa" stroke="#8a8a8a" stroke-width="1.600"/><ellipse cx="110.0" cy="317.7" rx="3.800" ry="2.300" transform="rotate(120 110.0 317.7)" fill="#fafafa" stroke="#8a8a8a" stroke-width="1.600"/><ellipse cx="145.0" cy="286.4" rx="3.800" ry="2.300" transform="rotate(-60 145.0 286.4)" fill="#fafafa" stroke="#8a8a8a" stroke-width="1.600"/><ellipse cx="112.4" cy="320.0" rx="3.800" ry="2.300" transform="rotate(-100 112.4 320.0)" fill="#fafafa" stroke="#8a8a8a" stroke-width="1.600"/><ellipse cx="128.0" cy="330.0" rx="3.800" ry="2.300" transform="rotate(-50 128.0 330.0)" fill="#fafafa" stroke="#8a8a8a" stroke-width="1.600"/><ellipse cx="137.6" cy="331.0" rx="3.800" ry="2.300" transform="rotate(-90 137.6 331.0)" fill="#fafafa" stroke="#8a8a8a" stroke-width="1.600"/><ellipse cx="204.6" cy="343.1" rx="3.800" ry="2.300" transform="rotate(35 204.6 343.1)" fill="#fafafa" stroke="#8a8a8a" stroke-width="1.600"/><ellipse cx="155.9" cy="356.7" rx="3.800" ry="2.300" transform="rotate(-39 155.9 356.7)" fill="#fafafa" stroke="#8a8a8a" stroke-width="1.600"/><ellipse cx="156.0" cy="344.0" rx="3.800" ry="2.300" transform="rotate(-90 156.0 344.0)" fill="#fafafa" stroke="#8a8a8a" stroke-width="1.600"/><ellipse cx="214.8" cy="255.6" rx="3.800" ry="2.300" transform="rotate(142 214.8 255.6)" fill="#fafafa" stroke="#8a8a8a" stroke-width="1.600"/><ellipse cx="264.3" cy="250.5" rx="3.800" ry="2.300" transform="rotate(-146 264.3 250.5)" fill="#fafafa" stroke="#8a8a8a" stroke-width="1.600"/><ellipse cx="273.3" cy="322.0" rx="3.800" ry="2.300" transform="rotate(100 273.3 322.0)" fill="#fafafa" stroke="#8a8a8a" stroke-width="1.600"/><ellipse cx="205.9" cy="276.2" rx="3.800" ry="2.300" transform="rotate(-63 205.9 276.2)" fill="#fafafa" stroke="#8a8a8a" stroke-width="1.600"/><ellipse cx="246.9" cy="334.1" rx="3.800" ry="2.300" transform="rotate(13 246.9 334.1)" fill="#fafafa" stroke="#8a8a8a" stroke-width="1.600"/><ellipse cx="200.8" cy="352.4" rx="3.800" ry="2.300" transform="rotate(-142 200.8 352.4)" fill="#fafafa" stroke="#8a8a8a" stroke-width="1.600"/><ellipse cx="203.6" cy="343.0" rx="3.800" ry="2.300" transform="rotate(-100 203.6 343.0)" fill="#fafafa" stroke="#8a8a8a" stroke-width="1.600"/><ellipse cx="37.2" cy="373.8" rx="3.800" ry="2.300" transform="rotate(113 37.2 373.8)" fill="#fafafa" stroke="#8a8a8a" stroke-width="1.600"/><ellipse cx="47.3" cy="424.7" rx="3.800" ry="2.300" transform="rotate(33 47.3 424.7)" fill="#fafafa" stroke="#8a8a8a" stroke-width="1.600"/><ellipse cx="56.2" cy="466.4" rx="3.800" ry="2.300" transform="rotate(156 56.2 466.4)" fill="#fafafa" stroke="#8a8a8a" stroke-width="1.600"/><ellipse cx="38.4" cy="452.0" rx="3.800" ry="2.300" transform="rotate(-110 38.4 452.0)" fill="#fafafa" stroke="#8a8a8a" stroke-width="1.600"/><ellipse cx="114.6" cy="407.0" rx="3.800" ry="2.300" transform="rotate(101 114.6 407.0)" fill="#fafafa" stroke="#8a8a8a" stroke-width="1.600"/><ellipse cx="89.0" cy="368.0" rx="3.800" ry="2.300" transform="rotate(180 89.0 368.0)" fill="#fafafa" stroke="#8a8a8a" stroke-width="1.600"/><ellipse cx="132.9" cy="447.3" rx="3.800" ry="2.300" transform="rotate(-22 132.9 447.3)" fill="#fafafa" stroke="#8a8a8a" stroke-width="1.600"/><ellipse cx="167.0" cy="428.9" rx="3.800" ry="2.300" transform="rotate(109 167.0 428.9)" fill="#fafafa" stroke="#8a8a8a" stroke-width="1.600"/><ellipse cx="181.0" cy="393.0" rx="3.800" ry="2.300" transform="rotate(-150 181.0 393.0)" fill="#fafafa" stroke="#8a8a8a" stroke-width="1.600"/><ellipse cx="284.2" cy="380.0" rx="3.800" ry="2.300" transform="rotate(83 284.2 380.0)" fill="#fafafa" stroke="#8a8a8a" stroke-width="1.600"/><ellipse cx="273.4" cy="408.4" rx="3.800" ry="2.300" transform="rotate(-143 273.4 408.4)" fill="#fafafa" stroke="#8a8a8a" stroke-width="1.600"/><ellipse cx="298.0" cy="430.0" rx="3.800" ry="2.300" transform="rotate(-20 298.0 430.0)" fill="#fafafa" stroke="#8a8a8a" stroke-width="1.600"/><ellipse cx="221.0" cy="457.0" rx="3.800" ry="2.300" transform="rotate(-160 221.0 457.0)" fill="#fafafa" stroke="#8a8a8a" stroke-width="1.600"/><ellipse cx="245.0" cy="464.0" rx="3.800" ry="2.300" transform="rotate(-130 245.0 464.0)" fill="#fafafa" stroke="#8a8a8a" stroke-width="1.600"/><ellipse cx="238.0" cy="472.0" rx="3.800" ry="2.300" transform="rotate(160 238.0 472.0)" fill="#fafafa" stroke="#8a8a8a" stroke-width="1.600"/><ellipse cx="314.6" cy="261.8" rx="3.800" ry="2.300" transform="rotate(-39 314.6 261.8)" fill="#fafafa" stroke="#8a8a8a" stroke-width="1.600"/><ellipse cx="387.3" cy="256.5" rx="3.800" ry="2.300" transform="rotate(50 387.3 256.5)" fill="#fafafa" stroke="#8a8a8a" stroke-width="1.600"/><ellipse cx="375.0" cy="257.6" rx="3.800" ry="2.300" transform="rotate(180 375.0 257.6)" fill="#fafafa" stroke="#8a8a8a" stroke-width="1.600"/><ellipse cx="476.5" cy="281.7" rx="3.800" ry="2.300" transform="rotate(124 476.5 281.7)" fill="#fafafa" stroke="#8a8a8a" stroke-width="1.600"/><ellipse cx="459.0" cy="285.6" rx="3.800" ry="2.300" transform="rotate(180 459.0 285.6)" fill="#fafafa" stroke="#8a8a8a" stroke-width="1.600"/><ellipse cx="451.0" cy="299.6" rx="3.800" ry="2.300" transform="rotate(180 451.0 299.6)" fill="#fafafa" stroke="#8a8a8a" stroke-width="1.600"/><ellipse cx="389.0" cy="306.0" rx="3.800" ry="2.300" transform="rotate(180 389.0 306.0)" fill="#fafafa" stroke="#8a8a8a" stroke-width="1.600"/><ellipse cx="311.0" cy="291.0" rx="3.800" ry="2.300" transform="rotate(-80 311.0 291.0)" fill="#fafafa" stroke="#8a8a8a" stroke-width="1.600"/><ellipse cx="365.0" cy="283.7" rx="3.800" ry="2.300" transform="rotate(-72 365.0 283.7)" fill="#fafafa" stroke="#8a8a8a" stroke-width="1.600"/><ellipse cx="384.0" cy="329.0" rx="3.800" ry="2.300" transform="rotate(-10 384.0 329.0)" fill="#fafafa" stroke="#8a8a8a" stroke-width="1.600"/><ellipse cx="418.0" cy="326.0" rx="3.800" ry="2.300" transform="rotate(-20 418.0 326.0)" fill="#fafafa" stroke="#8a8a8a" stroke-width="1.600"/><ellipse cx="414.4" cy="343.4" rx="3.800" ry="2.300" transform="rotate(200 414.4 343.4)" fill="#fafafa" stroke="#8a8a8a" stroke-width="1.600"/><ellipse cx="353.4" cy="368.2" rx="3.800" ry="2.300" transform="rotate(-25 353.4 368.2)" fill="#fafafa" stroke="#8a8a8a" stroke-width="1.600"/><ellipse cx="330.0" cy="385.4" rx="3.800" ry="2.300" transform="rotate(200 330.0 385.4)" fill="#fafafa" stroke="#8a8a8a" stroke-width="1.600"/><ellipse cx="530.8" cy="296.2" rx="3.800" ry="2.300" transform="rotate(-67 530.8 296.2)" fill="#fafafa" stroke="#8a8a8a" stroke-width="1.600"/><ellipse cx="588.0" cy="291.9" rx="3.800" ry="2.300" transform="rotate(-4 588.0 291.9)" fill="#fafafa" stroke="#8a8a8a" stroke-width="1.600"/><ellipse cx="464.0" cy="361.0" rx="3.800" ry="2.300" transform="rotate(160 464.0 361.0)" fill="#fafafa" stroke="#8a8a8a" stroke-width="1.600"/><ellipse cx="494.0" cy="368.0" rx="3.800" ry="2.300" transform="rotate(120 494.0 368.0)" fill="#fafafa" stroke="#8a8a8a" stroke-width="1.600"/><ellipse cx="525.0" cy="381.0" rx="3.800" ry="2.300" transform="rotate(45 525.0 381.0)" fill="#fafafa" stroke="#8a8a8a" stroke-width="1.600"/><ellipse cx="512.0" cy="400.0" rx="3.800" ry="2.300" transform="rotate(170 512.0 400.0)" fill="#fafafa" stroke="#8a8a8a" stroke-width="1.600"/><ellipse cx="301.6" cy="429.0" rx="3.800" ry="2.300" transform="rotate(180 301.6 429.0)" fill="#fafafa" stroke="#8a8a8a" stroke-width="1.600"/><ellipse cx="433.0" cy="457.0" rx="3.800" ry="2.300" transform="rotate(-100 433.0 457.0)" fill="#fafafa" stroke="#8a8a8a" stroke-width="1.600"/><ellipse cx="573.4" cy="455.9" rx="3.800" ry="2.300" transform="rotate(107 573.4 455.9)" fill="#fafafa" stroke="#8a8a8a" stroke-width="1.600"/><ellipse cx="552.0" cy="441.4" rx="3.800" ry="2.300" transform="rotate(12 552.0 441.4)" fill="#fafafa" stroke="#8a8a8a" stroke-width="1.600"/><ellipse cx="532.0" cy="437.0" rx="3.800" ry="2.300" transform="rotate(-150 532.0 437.0)" fill="#fafafa" stroke="#8a8a8a" stroke-width="1.600"/><ellipse cx="487.0" cy="465.0" rx="3.800" ry="2.300" transform="rotate(110 487.0 465.0)" fill="#fafafa" stroke="#8a8a8a" stroke-width="1.600"/><ellipse cx="654.0" cy="245.8" rx="3.800" ry="2.300" transform="rotate(-5 654.0 245.8)" fill="#fafafa" stroke="#8a8a8a" stroke-width="1.600"/><ellipse cx="673.0" cy="245.6" rx="3.800" ry="2.300" transform="rotate(-120 673.0 245.6)" fill="#fafafa" stroke="#8a8a8a" stroke-width="1.600"/><ellipse cx="657.0" cy="259.0" rx="3.800" ry="2.300" transform="rotate(-150 657.0 259.0)" fill="#fafafa" stroke="#8a8a8a" stroke-width="1.600"/><ellipse cx="632.0" cy="268.4" rx="3.800" ry="2.300" transform="rotate(-160 632.0 268.4)" fill="#fafafa" stroke="#8a8a8a" stroke-width="1.600"/><ellipse cx="627.0" cy="280.6" rx="3.800" ry="2.300" transform="rotate(0 627.0 280.6)" fill="#fafafa" stroke="#8a8a8a" stroke-width="1.600"/><ellipse cx="646.4" cy="290.6" rx="3.800" ry="2.300" transform="rotate(180 646.4 290.6)" fill="#fafafa" stroke="#8a8a8a" stroke-width="1.600"/><ellipse cx="721.0" cy="289.0" rx="3.800" ry="2.300" transform="rotate(-90 721.0 289.0)" fill="#fafafa" stroke="#8a8a8a" stroke-width="1.600"/><ellipse cx="809.8" cy="284.6" rx="3.800" ry="2.300" transform="rotate(126 809.8 284.6)" fill="#fafafa" stroke="#8a8a8a" stroke-width="1.600"/><ellipse cx="842.0" cy="305.0" rx="3.800" ry="2.300" transform="rotate(-90 842.0 305.0)" fill="#fafafa" stroke="#8a8a8a" stroke-width="1.600"/><ellipse cx="684.5" cy="333.9" rx="3.800" ry="2.300" transform="rotate(104 684.5 333.9)" fill="#fafafa" stroke="#8a8a8a" stroke-width="1.600"/><ellipse cx="713.8" cy="313.0" rx="3.800" ry="2.300" transform="rotate(46 713.8 313.0)" fill="#fafafa" stroke="#8a8a8a" stroke-width="1.600"/><ellipse cx="663.0" cy="341.9" rx="3.800" ry="2.300" transform="rotate(-176 663.0 341.9)" fill="#fafafa" stroke="#8a8a8a" stroke-width="1.600"/><ellipse cx="700.3" cy="355.0" rx="3.800" ry="2.300" transform="rotate(149 700.3 355.0)" fill="#fafafa" stroke="#8a8a8a" stroke-width="1.600"/><ellipse cx="618.0" cy="348.0" rx="3.800" ry="2.300" transform="rotate(-60 618.0 348.0)" fill="#fafafa" stroke="#8a8a8a" stroke-width="1.600"/><ellipse cx="648.3" cy="401.5" rx="3.800" ry="2.300" transform="rotate(48 648.3 401.5)" fill="#fafafa" stroke="#8a8a8a" stroke-width="1.600"/><ellipse cx="675.0" cy="403.2" rx="3.800" ry="2.300" transform="rotate(-12 675.0 403.2)" fill="#fafafa" stroke="#8a8a8a" stroke-width="1.600"/><ellipse cx="721.0" cy="397.6" rx="3.800" ry="2.300" transform="rotate(0 721.0 397.6)" fill="#fafafa" stroke="#8a8a8a" stroke-width="1.600"/><ellipse cx="614.0" cy="400.0" rx="3.800" ry="2.300" transform="rotate(90 614.0 400.0)" fill="#fafafa" stroke="#8a8a8a" stroke-width="1.600"/><ellipse cx="752.1" cy="343.7" rx="3.800" ry="2.300" transform="rotate(-159 752.1 343.7)" fill="#fafafa" stroke="#8a8a8a" stroke-width="1.600"/><ellipse cx="845.9" cy="383.5" rx="3.800" ry="2.300" transform="rotate(-16 845.9 383.5)" fill="#fafafa" stroke="#8a8a8a" stroke-width="1.600"/><ellipse cx="827.0" cy="342.0" rx="3.800" ry="2.300" transform="rotate(90 827.0 342.0)" fill="#fafafa" stroke="#8a8a8a" stroke-width="1.600"/><ellipse cx="825.0" cy="352.0" rx="3.800" ry="2.300" transform="rotate(90 825.0 352.0)" fill="#fafafa" stroke="#8a8a8a" stroke-width="1.600"/><ellipse cx="848.0" cy="344.0" rx="3.800" ry="2.300" transform="rotate(-60 848.0 344.0)" fill="#fafafa" stroke="#8a8a8a" stroke-width="1.600"/><ellipse cx="849.0" cy="354.0" rx="3.800" ry="2.300" transform="rotate(-50 849.0 354.0)" fill="#fafafa" stroke="#8a8a8a" stroke-width="1.600"/><ellipse cx="848.0" cy="362.0" rx="3.800" ry="2.300" transform="rotate(-90 848.0 362.0)" fill="#fafafa" stroke="#8a8a8a" stroke-width="1.600"/><ellipse cx="846.0" cy="378.0" rx="3.800" ry="2.300" transform="rotate(70 846.0 378.0)" fill="#fafafa" stroke="#8a8a8a" stroke-width="1.600"/><ellipse cx="781.6" cy="383.1" rx="3.800" ry="2.300" transform="rotate(-72 781.6 383.1)" fill="#fafafa" stroke="#8a8a8a" stroke-width="1.600"/><ellipse cx="759.0" cy="378.0" rx="3.800" ry="2.300" transform="rotate(-90 759.0 378.0)" fill="#fafafa" stroke="#8a8a8a" stroke-width="1.600"/><ellipse cx="729.6" cy="430.4" rx="3.800" ry="2.300" transform="rotate(135 729.6 430.4)" fill="#fafafa" stroke="#8a8a8a" stroke-width="1.600"/><ellipse cx="788.4" cy="379.1" rx="3.800" ry="2.300" transform="rotate(-77 788.4 379.1)" fill="#fafafa" stroke="#8a8a8a" stroke-width="1.600"/><ellipse cx="766.0" cy="415.6" rx="3.800" ry="2.300" transform="rotate(-20 766.0 415.6)" fill="#fafafa" stroke="#8a8a8a" stroke-width="1.600"/><ellipse cx="746.0" cy="426.0" rx="3.800" ry="2.300" transform="rotate(-90 746.0 426.0)" fill="#fafafa" stroke="#8a8a8a" stroke-width="1.600"/><ellipse cx="688.1" cy="412.2" rx="3.800" ry="2.300" transform="rotate(-117 688.1 412.2)" fill="#fafafa" stroke="#8a8a8a" stroke-width="1.600"/><ellipse cx="690.3" cy="467.1" rx="3.800" ry="2.300" transform="rotate(146 690.3 467.1)" fill="#fafafa" stroke="#8a8a8a" stroke-width="1.600"/><ellipse cx="684.6" cy="475.9" rx="3.800" ry="2.300" transform="rotate(72 684.6 475.9)" fill="#fafafa" stroke="#8a8a8a" stroke-width="1.600"/><ellipse cx="623.0" cy="429.0" rx="3.800" ry="2.300" transform="rotate(180 623.0 429.0)" fill="#fafafa" stroke="#8a8a8a" stroke-width="1.600"/><ellipse cx="832.7" cy="450.0" rx="3.800" ry="2.300" transform="rotate(-29 832.7 450.0)" fill="#fafafa" stroke="#8a8a8a" stroke-width="1.600"/><ellipse cx="825.0" cy="479.0" rx="3.800" ry="2.300" transform="rotate(-100 825.0 479.0)" fill="#fafafa" stroke="#8a8a8a" stroke-width="1.600"/><ellipse cx="91.0" cy="489.0" rx="3.800" ry="2.300" transform="rotate(-100 91.0 489.0)" fill="#fafafa" stroke="#8a8a8a" stroke-width="1.600"/><ellipse cx="101.0" cy="500.0" rx="3.800" ry="2.300" transform="rotate(-90 101.0 500.0)" fill="#fafafa" stroke="#8a8a8a" stroke-width="1.600"/><ellipse cx="145.6" cy="492.6" rx="3.800" ry="2.300" transform="rotate(180 145.6 492.6)" fill="#fafafa" stroke="#8a8a8a" stroke-width="1.600"/><ellipse cx="28.0" cy="526.0" rx="3.800" ry="2.300" transform="rotate(170 28.0 526.0)" fill="#fafafa" stroke="#8a8a8a" stroke-width="1.600"/><ellipse cx="18.0" cy="537.0" rx="3.800" ry="2.300" transform="rotate(180 18.0 537.0)" fill="#fafafa" stroke="#8a8a8a" stroke-width="1.600"/><ellipse cx="74.0" cy="612.9" rx="3.800" ry="2.300" transform="rotate(103 74.0 612.9)" fill="#fafafa" stroke="#8a8a8a" stroke-width="1.600"/><ellipse cx="154.0" cy="605.0" rx="3.800" ry="2.300" transform="rotate(0 154.0 605.0)" fill="#fafafa" stroke="#8a8a8a" stroke-width="1.600"/><ellipse cx="49.0" cy="597.0" rx="3.800" ry="2.300" transform="rotate(-100 49.0 597.0)" fill="#fafafa" stroke="#8a8a8a" stroke-width="1.600"/><ellipse cx="56.6" cy="602.0" rx="3.800" ry="2.300" transform="rotate(-90 56.6 602.0)" fill="#fafafa" stroke="#8a8a8a" stroke-width="1.600"/><ellipse cx="57.0" cy="652.0" rx="3.800" ry="2.300" transform="rotate(180 57.0 652.0)" fill="#fafafa" stroke="#8a8a8a" stroke-width="1.600"/><ellipse cx="26.2" cy="636.8" rx="3.800" ry="2.300" transform="rotate(113 26.2 636.8)" fill="#fafafa" stroke="#8a8a8a" stroke-width="1.600"/><ellipse cx="105.0" cy="647.0" rx="3.800" ry="2.300" transform="rotate(-70 105.0 647.0)" fill="#fafafa" stroke="#8a8a8a" stroke-width="1.600"/><ellipse cx="181.6" cy="608.8" rx="3.800" ry="2.300" transform="rotate(-39 181.6 608.8)" fill="#fafafa" stroke="#8a8a8a" stroke-width="1.600"/><ellipse cx="156.0" cy="596.0" rx="3.800" ry="2.300" transform="rotate(-70 156.0 596.0)" fill="#fafafa" stroke="#8a8a8a" stroke-width="1.600"/><ellipse cx="152.0" cy="605.0" rx="3.800" ry="2.300" transform="rotate(-90 152.0 605.0)" fill="#fafafa" stroke="#8a8a8a" stroke-width="1.600"/><ellipse cx="202.0" cy="512.7" rx="3.800" ry="2.300" transform="rotate(-172 202.0 512.7)" fill="#fafafa" stroke="#8a8a8a" stroke-width="1.600"/><ellipse cx="200.0" cy="517.0" rx="3.800" ry="2.300" transform="rotate(180 200.0 517.0)" fill="#fafafa" stroke="#8a8a8a" stroke-width="1.600"/><ellipse cx="198.0" cy="569.0" rx="3.800" ry="2.300" transform="rotate(-120 198.0 569.0)" fill="#fafafa" stroke="#8a8a8a" stroke-width="1.600"/><ellipse cx="232.0" cy="487.0" rx="3.800" ry="2.300" transform="rotate(-150 232.0 487.0)" fill="#fafafa" stroke="#8a8a8a" stroke-width="1.600"/><ellipse cx="279.0" cy="484.0" rx="3.800" ry="2.300" transform="rotate(-60 279.0 484.0)" fill="#fafafa" stroke="#8a8a8a" stroke-width="1.600"/><ellipse cx="261.0" cy="538.0" rx="3.800" ry="2.300" transform="rotate(120 261.0 538.0)" fill="#fafafa" stroke="#8a8a8a" stroke-width="1.600"/><ellipse cx="164.1" cy="663.0" rx="3.800" ry="2.300" transform="rotate(163 164.1 663.0)" fill="#fafafa" stroke="#8a8a8a" stroke-width="1.600"/><ellipse cx="269.6" cy="634.6" rx="3.800" ry="2.300" transform="rotate(-12 269.6 634.6)" fill="#fafafa" stroke="#8a8a8a" stroke-width="1.600"/><ellipse cx="164.4" cy="711.0" rx="3.800" ry="2.300" transform="rotate(90 164.4 711.0)" fill="#fafafa" stroke="#8a8a8a" stroke-width="1.600"/><ellipse cx="161.0" cy="699.0" rx="3.800" ry="2.300" transform="rotate(-70 161.0 699.0)" fill="#fafafa" stroke="#8a8a8a" stroke-width="1.600"/><ellipse cx="296.0" cy="684.0" rx="3.800" ry="2.300" transform="rotate(-140 296.0 684.0)" fill="#fafafa" stroke="#8a8a8a" stroke-width="1.600"/><ellipse cx="330.0" cy="483.0" rx="3.800" ry="2.300" transform="rotate(-150 330.0 483.0)" fill="#fafafa" stroke="#8a8a8a" stroke-width="1.600"/><ellipse cx="311.0" cy="508.0" rx="3.800" ry="2.300" transform="rotate(160 311.0 508.0)" fill="#fafafa" stroke="#8a8a8a" stroke-width="1.600"/><ellipse cx="362.0" cy="512.0" rx="3.800" ry="2.300" transform="rotate(170 362.0 512.0)" fill="#fafafa" stroke="#8a8a8a" stroke-width="1.600"/><ellipse cx="394.4" cy="514.6" rx="3.800" ry="2.300" transform="rotate(-13 394.4 514.6)" fill="#fafafa" stroke="#8a8a8a" stroke-width="1.600"/><ellipse cx="380.0" cy="549.0" rx="3.800" ry="2.300" transform="rotate(180 380.0 549.0)" fill="#fafafa" stroke="#8a8a8a" stroke-width="1.600"/><ellipse cx="427.0" cy="522.0" rx="3.800" ry="2.300" transform="rotate(-110 427.0 522.0)" fill="#fafafa" stroke="#8a8a8a" stroke-width="1.600"/><ellipse cx="450.0" cy="537.0" rx="3.800" ry="2.300" transform="rotate(-100 450.0 537.0)" fill="#fafafa" stroke="#8a8a8a" stroke-width="1.600"/><ellipse cx="514.6" cy="519.0" rx="3.800" ry="2.300" transform="rotate(101 514.6 519.0)" fill="#fafafa" stroke="#8a8a8a" stroke-width="1.600"/><ellipse cx="519.6" cy="541.2" rx="3.800" ry="2.300" transform="rotate(36 519.6 541.2)" fill="#fafafa" stroke="#8a8a8a" stroke-width="1.600"/><ellipse cx="498.0" cy="546.7" rx="3.800" ry="2.300" transform="rotate(121 498.0 546.7)" fill="#fafafa" stroke="#8a8a8a" stroke-width="1.600"/><ellipse cx="500.0" cy="488.0" rx="3.800" ry="2.300" transform="rotate(-50 500.0 488.0)" fill="#fafafa" stroke="#8a8a8a" stroke-width="1.600"/><ellipse cx="551.6" cy="518.1" rx="3.800" ry="2.300" transform="rotate(35 551.6 518.1)" fill="#fafafa" stroke="#8a8a8a" stroke-width="1.600"/><ellipse cx="541.0" cy="516.0" rx="3.800" ry="2.300" transform="rotate(180 541.0 516.0)" fill="#fafafa" stroke="#8a8a8a" stroke-width="1.600"/><ellipse cx="534.0" cy="529.0" rx="3.800" ry="2.300" transform="rotate(-100 534.0 529.0)" fill="#fafafa" stroke="#8a8a8a" stroke-width="1.600"/><ellipse cx="548.0" cy="565.0" rx="3.800" ry="2.300" transform="rotate(60 548.0 565.0)" fill="#fafafa" stroke="#8a8a8a" stroke-width="1.600"/><ellipse cx="569.0" cy="540.0" rx="3.800" ry="2.300" transform="rotate(100 569.0 540.0)" fill="#fafafa" stroke="#8a8a8a" stroke-width="1.600"/><ellipse cx="358.0" cy="584.0" rx="3.800" ry="2.300" transform="rotate(-100 358.0 584.0)" fill="#fafafa" stroke="#8a8a8a" stroke-width="1.600"/><ellipse cx="375.0" cy="614.0" rx="3.800" ry="2.300" transform="rotate(-80 375.0 614.0)" fill="#fafafa" stroke="#8a8a8a" stroke-width="1.600"/><ellipse cx="466.0" cy="575.0" rx="3.800" ry="2.300" transform="rotate(170 466.0 575.0)" fill="#fafafa" stroke="#8a8a8a" stroke-width="1.600"/><ellipse cx="461.0" cy="611.0" rx="3.800" ry="2.300" transform="rotate(90 461.0 611.0)" fill="#fafafa" stroke="#8a8a8a" stroke-width="1.600"/><ellipse cx="475.0" cy="610.0" rx="3.800" ry="2.300" transform="rotate(90 475.0 610.0)" fill="#fafafa" stroke="#8a8a8a" stroke-width="1.600"/><ellipse cx="481.0" cy="598.0" rx="3.800" ry="2.300" transform="rotate(-90 481.0 598.0)" fill="#fafafa" stroke="#8a8a8a" stroke-width="1.600"/><ellipse cx="447.0" cy="618.0" rx="3.800" ry="2.300" transform="rotate(-130 447.0 618.0)" fill="#fafafa" stroke="#8a8a8a" stroke-width="1.600"/><ellipse cx="505.2" cy="671.8" rx="3.800" ry="2.300" transform="rotate(113 505.2 671.8)" fill="#fafafa" stroke="#8a8a8a" stroke-width="1.600"/><ellipse cx="498.0" cy="695.3" rx="3.800" ry="2.300" transform="rotate(171 498.0 695.3)" fill="#fafafa" stroke="#8a8a8a" stroke-width="1.600"/><ellipse cx="541.1" cy="697.8" rx="3.800" ry="2.300" transform="rotate(117 541.1 697.8)" fill="#fafafa" stroke="#8a8a8a" stroke-width="1.600"/><ellipse cx="588.0" cy="701.0" rx="3.800" ry="2.300" transform="rotate(-70 588.0 701.0)" fill="#fafafa" stroke="#8a8a8a" stroke-width="1.600"/><ellipse cx="308.0" cy="669.0" rx="3.800" ry="2.300" transform="rotate(200 308.0 669.0)" fill="#fafafa" stroke="#8a8a8a" stroke-width="1.600"/><ellipse cx="360.0" cy="635.6" rx="3.800" ry="2.300" transform="rotate(170 360.0 635.6)" fill="#fafafa" stroke="#8a8a8a" stroke-width="1.600"/><ellipse cx="363.0" cy="649.6" rx="3.800" ry="2.300" transform="rotate(-90 363.0 649.6)" fill="#fafafa" stroke="#8a8a8a" stroke-width="1.600"/><ellipse cx="410.0" cy="640.0" rx="3.800" ry="2.300" transform="rotate(-100 410.0 640.0)" fill="#fafafa" stroke="#8a8a8a" stroke-width="1.600"/><ellipse cx="413.6" cy="687.0" rx="3.800" ry="2.300" transform="rotate(-80 413.6 687.0)" fill="#fafafa" stroke="#8a8a8a" stroke-width="1.600"/><ellipse cx="390.0" cy="703.0" rx="3.800" ry="2.300" transform="rotate(30 390.0 703.0)" fill="#fafafa" stroke="#8a8a8a" stroke-width="1.600"/><ellipse cx="483.0" cy="707.0" rx="3.800" ry="2.300" transform="rotate(40 483.0 707.0)" fill="#fafafa" stroke="#8a8a8a" stroke-width="1.600"/><ellipse cx="498.0" cy="698.0" rx="3.800" ry="2.300" transform="rotate(-100 498.0 698.0)" fill="#fafafa" stroke="#8a8a8a" stroke-width="1.600"/><ellipse cx="539.0" cy="701.0" rx="3.800" ry="2.300" transform="rotate(-110 539.0 701.0)" fill="#fafafa" stroke="#8a8a8a" stroke-width="1.600"/><ellipse cx="825.0" cy="482.3" rx="3.800" ry="2.300" transform="rotate(-120 825.0 482.3)" fill="#fafafa" stroke="#8a8a8a" stroke-width="1.600"/><ellipse cx="781.0" cy="499.5" rx="3.800" ry="2.300" transform="rotate(-178 781.0 499.5)" fill="#fafafa" stroke="#8a8a8a" stroke-width="1.600"/><ellipse cx="613.6" cy="541.0" rx="3.800" ry="2.300" transform="rotate(-90 613.6 541.0)" fill="#fafafa" stroke="#8a8a8a" stroke-width="1.600"/><ellipse cx="773.9" cy="539.7" rx="3.800" ry="2.300" transform="rotate(122 773.9 539.7)" fill="#fafafa" stroke="#8a8a8a" stroke-width="1.600"/><ellipse cx="841.0" cy="545.0" rx="3.800" ry="2.300" transform="rotate(60 841.0 545.0)" fill="#fafafa" stroke="#8a8a8a" stroke-width="1.600"/><ellipse cx="722.6" cy="581.2" rx="3.800" ry="2.300" transform="rotate(-36 722.6 581.2)" fill="#fafafa" stroke="#8a8a8a" stroke-width="1.600"/><ellipse cx="638.1" cy="617.5" rx="3.800" ry="2.300" transform="rotate(-164 638.1 617.5)" fill="#fafafa" stroke="#8a8a8a" stroke-width="1.600"/><ellipse cx="636.5" cy="675.8" rx="3.800" ry="2.300" transform="rotate(65 636.5 675.8)" fill="#fafafa" stroke="#8a8a8a" stroke-width="1.600"/><ellipse cx="823.6" cy="583.0" rx="3.800" ry="2.300" transform="rotate(-70 823.6 583.0)" fill="#fafafa" stroke="#8a8a8a" stroke-width="1.600"/><ellipse cx="706.0" cy="617.0" rx="3.800" ry="2.300" transform="rotate(200 706.0 617.0)" fill="#fafafa" stroke="#8a8a8a" stroke-width="1.600"/><ellipse cx="781.7" cy="671.5" rx="3.800" ry="2.300" transform="rotate(132 781.7 671.5)" fill="#fafafa" stroke="#8a8a8a" stroke-width="1.600"/><ellipse cx="665.4" cy="657.2" rx="3.800" ry="2.300" transform="rotate(-25 665.4 657.2)" fill="#fafafa" stroke="#8a8a8a" stroke-width="1.600"/><ellipse cx="765.6" cy="675.0" rx="3.800" ry="2.300" transform="rotate(-90 765.6 675.0)" fill="#fafafa" stroke="#8a8a8a" stroke-width="1.600"/><ellipse cx="799.5" cy="698.0" rx="3.800" ry="2.300" transform="rotate(94 799.5 698.0)" fill="#fafafa" stroke="#8a8a8a" stroke-width="1.600"/><ellipse cx="703.0" cy="702.0" rx="3.800" ry="2.300" transform="rotate(-100 703.0 702.0)" fill="#fafafa" stroke="#8a8a8a" stroke-width="1.600"/><ellipse cx="786.0" cy="707.0" rx="3.800" ry="2.300" transform="rotate(190 786.0 707.0)" fill="#fafafa" stroke="#8a8a8a" stroke-width="1.600"/></g><g><circle cx="77.6" cy="65.5" r="1.100" fill="#28d8d8"/><circle cx="83.1" cy="97.2" r="1.100" fill="#30d030"/><circle cx="168.3" cy="47.6" r="1.100" fill="#28d8d8"/><circle cx="141.8" cy="52.8" r="1.100" fill="#f01010"/><circle cx="209.2" cy="43.1" r="1.100" fill="#30d030"/><circle cx="244.1" cy="68.7" r="1.100" fill="#28d8d8"/><circle cx="162.3" cy="97.7" r="1.100" fill="#28d8d8"/><circle cx="72.9" cy="121.7" r="1.100" fill="#28d8d8"/><circle cx="106.5" cy="147.1" r="1.100" fill="#28d8d8"/><circle cx="45.7" cy="210.8" r="1.100" fill="#28d8d8"/><circle cx="53.2" cy="234.1" r="1.100" fill="#28d8d8"/><circle cx="284.8" cy="92.9" r="1.100" fill="#28d8d8"/><circle cx="271.7" cy="112.7" r="1.100" fill="#30d030"/><circle cx="203.7" cy="114.7" r="1.100" fill="#28d8d8"/><circle cx="249.2" cy="155.3" r="1.100" fill="#28d8d8"/><circle cx="290.7" cy="194.1" r="1.100" fill="#28d8d8"/><circle cx="131.5" cy="187.6" r="1.100" fill="#28d8d8"/><circle cx="149.2" cy="217.4" r="1.100" fill="#28d8d8"/><circle cx="129.4" cy="214.8" r="1.100" fill="#28d8d8"/><circle cx="49.4" cy="133.0" r="1.100" fill="#f01010"/><circle cx="233.1" cy="45.2" r="1.100" fill="#f01010"/><circle cx="118.8" cy="199.8" r="1.100" fill="#f01010"/><circle cx="80.2" cy="94.8" r="1.100" fill="#f01010"/><circle cx="366.9" cy="59.7" r="1.100" fill="#30d030"/><circle cx="383.2" cy="81.5" r="1.100" fill="#28d8d8"/><circle cx="389.5" cy="69.8" r="1.100" fill="#28d8d8"/><circle cx="359.3" cy="94.9" r="1.100" fill="#28d8d8"/><circle cx="398.4" cy="80.6" r="1.100" fill="#f01010"/><circle cx="427.3" cy="150.7" r="1.100" fill="#28d8d8"/><circle cx="407.1" cy="172.2" r="1.100" fill="#f01010"/><circle cx="524.0" cy="138.5" r="1.100" fill="#30d030"/><circle cx="339.5" cy="164.2" r="1.100" fill="#f01010"/><circle cx="538.9" cy="169.8" r="1.100" fill="#28d8d8"/><circle cx="501.2" cy="215.2" r="1.100" fill="#28d8d8"/><circle cx="496.9" cy="189.4" r="1.100" fill="#28d8d8"/><circle cx="553.9" cy="173.2" r="1.100" fill="#f01010"/><circle cx="571.2" cy="202.7" r="1.100" fill="#28d8d8"/><circle cx="672.0" cy="22.9" r="1.100" fill="#28d8d8"/><circle cx="842.4" cy="45.7" r="1.100" fill="#28d8d8"/><circle cx="613.9" cy="65.2" r="1.100" fill="#30d030"/><circle cx="614.1" cy="63.7" r="1.100" fill="#28d8d8"/><circle cx="647.2" cy="78.1" r="1.100" fill="#28d8d8"/><circle cx="636.7" cy="84.2" r="1.100" fill="#28d8d8"/><circle cx="659.1" cy="88.4" r="1.100" fill="#f01010"/><circle cx="706.7" cy="84.0" r="1.100" fill="#28d8d8"/><circle cx="770.0" cy="105.1" r="1.100" fill="#28d8d8"/><circle cx="768.5" cy="142.9" r="1.100" fill="#28d8d8"/><circle cx="730.2" cy="158.1" r="1.100" fill="#f01010"/><circle cx="730.1" cy="167.2" r="1.100" fill="#f01010"/><circle cx="712.6" cy="166.2" r="1.100" fill="#f01010"/><circle cx="824.6" cy="156.9" r="1.100" fill="#f01010"/><circle cx="805.0" cy="171.1" r="1.100" fill="#28d8d8"/><circle cx="607.0" cy="140.2" r="1.100" fill="#28d8d8"/><circle cx="637.2" cy="184.0" r="1.100" fill="#f01010"/><circle cx="605.4" cy="210.0" r="1.100" fill="#f01010"/><circle cx="683.9" cy="178.4" r="1.100" fill="#28d8d8"/><circle cx="718.1" cy="197.6" r="1.100" fill="#28d8d8"/><circle cx="36.8" cy="275.8" r="1.100" fill="#f01010"/><circle cx="56.0" cy="289.4" r="1.100" fill="#f01010"/><circle cx="105.8" cy="251.8" r="1.100" fill="#f01010"/><circle cx="117.9" cy="251.6" r="1.100" fill="#f01010"/><circle cx="128.9" cy="273.1" r="1.100" fill="#28d8d8"/><circle cx="109.4" cy="318.8" r="1.100" fill="#28d8d8"/><circle cx="112.2" cy="318.8" r="1.100" fill="#f01010"/><circle cx="205.6" cy="343.8" r="1.100" fill="#28d8d8"/><circle cx="156.9" cy="356.0" r="1.100" fill="#30d030"/><circle cx="213.9" cy="256.4" r="1.100" fill="#28d8d8"/><circle cx="263.3" cy="249.8" r="1.100" fill="#28d8d8"/><circle cx="273.0" cy="323.2" r="1.100" fill="#28d8d8"/><circle cx="206.4" cy="275.1" r="1.100" fill="#28d8d8"/><circle cx="199.9" cy="351.6" r="1.100" fill="#28d8d8"/><circle cx="48.3" cy="425.3" r="1.100" fill="#28d8d8"/><circle cx="55.1" cy="466.9" r="1.100" fill="#28d8d8"/><circle cx="38.0" cy="450.9" r="1.100" fill="#f01010"/><circle cx="114.4" cy="408.1" r="1.100" fill="#28d8d8"/><circle cx="134.0" cy="446.8" r="1.100" fill="#28d8d8"/><circle cx="166.6" cy="430.0" r="1.100" fill="#28d8d8"/><circle cx="284.4" cy="381.2" r="1.100" fill="#28d8d8"/><circle cx="272.5" cy="407.7" r="1.100" fill="#28d8d8"/><circle cx="299.1" cy="429.6" r="1.100" fill="#f01010"/><circle cx="219.9" cy="456.6" r="1.100" fill="#f01010"/><circle cx="244.2" cy="463.1" r="1.100" fill="#f01010"/><circle cx="315.5" cy="261.0" r="1.100" fill="#28d8d8"/><circle cx="388.0" cy="257.5" r="1.100" fill="#28d8d8"/><circle cx="373.8" cy="257.6" r="1.100" fill="#f01010"/><circle cx="475.8" cy="282.6" r="1.100" fill="#28d8d8"/><circle cx="457.8" cy="285.6" r="1.100" fill="#f01010"/><circle cx="449.8" cy="299.6" r="1.100" fill="#f01010"/><circle cx="387.8" cy="306.0" r="1.100" fill="#f01010"/><circle cx="365.4" cy="282.6" r="1.100" fill="#28d8d8"/><circle cx="385.2" cy="328.8" r="1.100" fill="#28d8d8"/><circle cx="419.1" cy="325.6" r="1.100" fill="#28d8d8"/><circle cx="413.3" cy="343.0" r="1.100" fill="#f01010"/><circle cx="354.5" cy="367.7" r="1.100" fill="#28d8d8"/><circle cx="328.9" cy="385.0" r="1.100" fill="#f01010"/><circle cx="531.3" cy="295.1" r="1.100" fill="#28d8d8"/><circle cx="589.2" cy="291.8" r="1.100" fill="#28d8d8"/><circle cx="462.9" cy="361.4" r="1.100" fill="#f01010"/><circle cx="493.4" cy="369.0" r="1.100" fill="#f01010"/><circle cx="525.8" cy="381.8" r="1.100" fill="#f01010"/><circle cx="510.8" cy="400.2" r="1.100" fill="#f01010"/><circle cx="300.4" cy="429.0" r="1.100" fill="#f01010"/><circle cx="573.1" cy="457.1" r="1.100" fill="#28d8d8"/><circle cx="553.1" cy="441.7" r="1.100" fill="#28d8d8"/><circle cx="486.6" cy="466.1" r="1.100" fill="#f01010"/><circle cx="655.2" cy="245.7" r="1.100" fill="#28d8d8"/><circle cx="656.0" cy="258.4" r="1.100" fill="#f01010"/><circle cx="630.9" cy="268.0" r="1.100" fill="#f01010"/><circle cx="628.2" cy="280.6" r="1.100" fill="#f01010"/><circle cx="645.2" cy="290.6" r="1.100" fill="#f01010"/><circle cx="721.0" cy="287.8" r="1.100" fill="#f01010"/><circle cx="809.1" cy="285.6" r="1.100" fill="#28d8d8"/><circle cx="684.2" cy="335.1" r="1.100" fill="#28d8d8"/><circle cx="714.6" cy="313.9" r="1.100" fill="#28d8d8"/><circle cx="661.8" cy="341.8" r="1.100" fill="#28d8d8"/><circle cx="699.3" cy="355.6" r="1.100" fill="#28d8d8"/><circle cx="649.1" cy="402.4" r="1.100" fill="#28d8d8"/><circle cx="676.1" cy="402.9" r="1.100" fill="#28d8d8"/><circle cx="722.2" cy="397.6" r="1.100" fill="#f01010"/><circle cx="614.0" cy="401.2" r="1.100" fill="#f01010"/><circle cx="751.0" cy="343.3" r="1.100" fill="#28d8d8"/><circle cx="847.1" cy="383.1" r="1.100" fill="#28d8d8"/><circle cx="782.0" cy="382.0" r="1.100" fill="#30d030"/><circle cx="759.0" cy="376.8" r="1.100" fill="#f01010"/><circle cx="728.7" cy="431.3" r="1.100" fill="#28d8d8"/><circle cx="788.7" cy="377.9" r="1.100" fill="#28d8d8"/><circle cx="767.1" cy="415.2" r="1.100" fill="#f01010"/><circle cx="746.0" cy="424.8" r="1.100" fill="#f01010"/><circle cx="687.6" cy="411.1" r="1.100" fill="#28d8d8"/><circle cx="689.3" cy="467.8" r="1.100" fill="#28d8d8"/><circle cx="685.0" cy="477.0" r="1.100" fill="#28d8d8"/><circle cx="621.8" cy="429.0" r="1.100" fill="#f01010"/><circle cx="833.8" cy="449.4" r="1.100" fill="#30d030"/><circle cx="90.8" cy="487.8" r="1.100" fill="#f01010"/><circle cx="144.4" cy="492.6" r="1.100" fill="#f01010"/><circle cx="26.8" cy="526.2" r="1.100" fill="#f01010"/><circle cx="73.7" cy="614.1" r="1.100" fill="#28d8d8"/><circle cx="155.2" cy="605.0" r="1.100" fill="#28d8d8"/><circle cx="48.8" cy="595.8" r="1.100" fill="#f01010"/><circle cx="55.8" cy="652.0" r="1.100" fill="#f01010"/><circle cx="25.7" cy="637.9" r="1.100" fill="#30d030"/><circle cx="182.5" cy="608.0" r="1.100" fill="#30d030"/><circle cx="156.4" cy="594.9" r="1.100" fill="#f01010"/><circle cx="152.0" cy="603.8" r="1.100" fill="#f01010"/><circle cx="200.8" cy="512.5" r="1.100" fill="#28d8d8"/><circle cx="198.8" cy="517.0" r="1.100" fill="#f01010"/><circle cx="260.4" cy="539.0" r="1.100" fill="#f01010"/><circle cx="162.9" cy="663.4" r="1.100" fill="#28d8d8"/><circle cx="270.7" cy="634.4" r="1.100" fill="#28d8d8"/><circle cx="164.4" cy="712.2" r="1.100" fill="#f01010"/><circle cx="295.1" cy="683.2" r="1.100" fill="#f01010"/><circle cx="395.5" cy="514.3" r="1.100" fill="#30d030"/><circle cx="378.8" cy="549.0" r="1.100" fill="#f01010"/><circle cx="426.6" cy="520.9" r="1.100" fill="#f01010"/><circle cx="449.8" cy="535.8" r="1.100" fill="#f01010"/><circle cx="514.4" cy="520.1" r="1.100" fill="#28d8d8"/><circle cx="520.6" cy="541.9" r="1.100" fill="#28d8d8"/><circle cx="497.4" cy="547.7" r="1.100" fill="#28d8d8"/><circle cx="500.8" cy="487.1" r="1.100" fill="#f01010"/><circle cx="552.6" cy="518.8" r="1.100" fill="#28d8d8"/><circle cx="539.8" cy="516.0" r="1.100" fill="#f01010"/><circle cx="533.8" cy="527.8" r="1.100" fill="#f01010"/><circle cx="548.6" cy="566.0" r="1.100" fill="#f01010"/><circle cx="568.8" cy="541.2" r="1.100" fill="#f01010"/><circle cx="357.8" cy="582.8" r="1.100" fill="#f01010"/><circle cx="375.2" cy="612.8" r="1.100" fill="#f01010"/><circle cx="464.8" cy="575.2" r="1.100" fill="#f01010"/><circle cx="461.0" cy="612.2" r="1.100" fill="#f01010"/><circle cx="475.0" cy="611.2" r="1.100" fill="#f01010"/><circle cx="446.2" cy="617.1" r="1.100" fill="#f01010"/><circle cx="504.7" cy="672.9" r="1.100" fill="#30d030"/><circle cx="496.8" cy="695.5" r="1.100" fill="#28d8d8"/><circle cx="540.6" cy="698.9" r="1.100" fill="#28d8d8"/><circle cx="306.9" cy="668.6" r="1.100" fill="#f01010"/><circle cx="358.8" cy="635.8" r="1.100" fill="#f01010"/><circle cx="363.0" cy="648.4" r="1.100" fill="#f01010"/><circle cx="409.8" cy="638.8" r="1.100" fill="#f01010"/><circle cx="413.8" cy="685.8" r="1.100" fill="#f01010"/><circle cx="497.8" cy="696.8" r="1.100" fill="#f01010"/><circle cx="538.6" cy="699.9" r="1.100" fill="#f01010"/><circle cx="824.4" cy="481.2" r="1.100" fill="#28d8d8"/><circle cx="779.8" cy="499.5" r="1.100" fill="#28d8d8"/><circle cx="613.6" cy="539.8" r="1.100" fill="#f01010"/><circle cx="773.3" cy="540.7" r="1.100" fill="#28d8d8"/><circle cx="723.6" cy="580.5" r="1.100" fill="#28d8d8"/><circle cx="636.9" cy="617.1" r="1.100" fill="#28d8d8"/><circle cx="637.0" cy="676.9" r="1.100" fill="#28d8d8"/><circle cx="824.0" cy="581.9" r="1.100" fill="#f01010"/><circle cx="704.9" cy="616.6" r="1.100" fill="#f01010"/><circle cx="780.9" cy="672.4" r="1.100" fill="#28d8d8"/><circle cx="666.5" cy="656.7" r="1.100" fill="#30d030"/><circle cx="765.6" cy="673.8" r="1.100" fill="#f01010"/><circle cx="799.4" cy="699.2" r="1.100" fill="#28d8d8"/></g></svg></div>
<div class="t" style="left:629px;top:958.0px;line-height:20px;font-size:14.4px;font-weight:bold;color:#000;">Captured: 3/25/2025 7:14 AM   X:8 pix   Y:998 pix   X:6 µm   Y:693.5 µm   Intensity:63   60.00fps</div>
<div style="left:210px;top:976px;width:1219px;height:25px;background:linear-gradient(#f8f8f8,#f0f0f0 60%,#e8e8e8)"></div>
<div style="left:217px;top:982px"><svg width="8" height="12"><path d="M0.500 0.500 L7 6 L0.500 11.500 Z" fill="#2a8a2a" stroke="#1a6a1a" stroke-width="0.800"/></svg></div>
<div class="t" style="left:231px;top:978.5px;line-height:20px;font-size:11.2px;color:#000;">Play</div>
<div style="left:264px;top:984px;width:9px;height:9px;background:linear-gradient(135deg,#d8d8d8,#b0b0b0);border:1px solid #c4c4c4"></div>
<div class="t" style="left:280px;top:978.5px;line-height:20px;font-size:11.2px;color:#7a7a7a;">Stop</div>
<div style="left:313px;top:981px;width:1px;height:16px;background:#9a9a9a"></div>
<div style="left:322px;top:982px"><svg width="8" height="12"><path d="M7.500 0.500 L1 6 L7.500 11.500 Z" fill="#2f6fe0" stroke="#1c4cb0" stroke-width="0.800"/></svg></div>
<div class="t" style="left:341.5px;top:978.5px;line-height:20px;font-size:11.2px;color:#000;">01</div>
<div style="left:365px;top:982px"><svg width="8" height="12"><path d="M0.500 0.500 L7 6 L0.500 11.500 Z" fill="#2f6fe0" stroke="#1c4cb0" stroke-width="0.800"/></svg></div>
<div style="left:384px;top:981px;width:1px;height:16px;background:#9a9a9a"></div>
<div class="t" style="left:390.5px;top:978.5px;line-height:20px;font-size:11.2px;color:#000;">Track</div>
<div style="left:422px;top:977px;width:41px;height:22px;background:#fff;border:1px solid #b4b4b4"></div>
<div class="t" style="left:423.4px;top:977.1px;line-height:20px;font-size:14.3px;color:#000;transform:scaleX(0.88);transform-origin:0 50%;">0</div>
<div style="left:449px;top:981px"><svg width="9" height="16" viewBox="0 0 9 16"><path d="M1 5 L4.500 1 L8 5 Z M1 11 L4.500 15 L8 11 Z" fill="#000"/></svg></div>
<div style="left:447px;top:979px;width:15px;height:19px;border:1px solid #e2e2e2"></div>
<div style="left:447px;top:988px;width:15px;height:1px;background:#e2e2e2"></div>
<div class="t" style="left:468px;top:978.5px;line-height:20px;font-size:11.2px;color:#000;">Details</div>
<div style="left:1433px;top:63px;width:486px;height:1065px;background:#f0f0f0;border:1px solid #858585"></div>
<div style="left:1434px;top:64px;width:484px;height:26px;background:#dcdcdc"></div>
<div style="left:1434px;top:67px;width:34px;height:19px;background:linear-gradient(#8fa3c2,#a9bddc 60%,#b6c9e8);border:1px solid #8596b8"></div>
<div class="t" style="left:1439.5px;top:65.5px;line-height:20px;font-size:11.25px;font-weight:bold;color:#000;">Info</div>
<div class="t" style="left:1479px;top:65.5px;line-height:20px;font-size:11.25px;font-weight:bold;color:#000;">Notes</div>
<div class="t" style="left:1529px;top:65.5px;line-height:20px;font-size:11.25px;font-weight:bold;color:#000;">Data Fields</div>
<div class="t" style="left:1606.3px;top:65.5px;line-height:20px;font-size:11.25px;font-weight:bold;color:#000;">Results</div>
<div class="t" style="left:1663px;top:65.5px;line-height:20px;font-size:11.25px;font-weight:bold;color:#000;">Charts</div>
<div style="left:1471px;top:68px;width:1px;height:15px;background:#a8a8a8"></div>
<div style="left:1472px;top:68px;width:1px;height:15px;background:#f4f4f4"></div>
<div style="left:1521px;top:68px;width:1px;height:15px;background:#a8a8a8"></div>
<div style="left:1522px;top:68px;width:1px;height:15px;background:#f4f4f4"></div>
<div style="left:1598px;top:68px;width:1px;height:15px;background:#a8a8a8"></div>
<div style="left:1599px;top:68px;width:1px;height:15px;background:#f4f4f4"></div>
<div style="left:1655px;top:68px;width:1px;height:15px;background:#a8a8a8"></div>
<div style="left:1656px;top:68px;width:1px;height:15px;background:#f4f4f4"></div>
<div style="left:1707px;top:68px;width:1px;height:15px;background:#a8a8a8"></div>
<div style="left:1708px;top:68px;width:1px;height:15px;background:#f4f4f4"></div>
<div style="left:1437px;top:93px;width:478px;height:326px;background:#f0f0f0;border:1px solid #858585"></div>
<div style="left:1438px;top:94px;width:476px;height:23px;background:#dcdcdc"></div>
<div class="t" style="left:1441px;top:95.8px;line-height:20px;font-size:11.1px;font-weight:bold;color:#000;">Analysis Info</div>
<div style="left:1896px;top:102px"><svg width="12" height="4" viewBox="0 0 12 4"><rect x="0.500" y="0.500" width="11" height="3" rx="1" fill="#b4ccf0" stroke="#3a68b0"/></svg></div>
<div style="left:1438px;top:117px;width:476px;height:24px;background:linear-gradient(#f6f6f6,#f2f2f2 50%,#e6e6e6)"></div>
<div style="left:1438px;top:141px;width:476px;height:1px;background:#858585"></div>
<div style="left:1442px;top:122px"><svg width="13" height="13" viewBox="0 0 13 13"><path d="M1 1 L12 12 M12 1 L1 12" stroke="#2a2a2a" stroke-width="1.500"/></svg></div>
<div class="t" style="left:1459px;top:118.5px;line-height:20px;font-size:11.2px;color:#000;">Delete</div>
<div style="left:1499px;top:120px"><svg width="17" height="16" viewBox="0 0 17 16"><rect x="2.500" y="3.500" width="10" height="11.500" fill="#f6f6f6" stroke="#8a8a8a" stroke-width="0.800"/>
<circle cx="5" cy="4.500" r="4" fill="#a8c8f0" stroke="#6a90c8" stroke-width="0.800" opacity="0.9"/>
<path d="M7 12.500 L14 4 L16 5.800 L9.500 14 L6.500 15 Z" fill="#f0b040" stroke="#906010" stroke-width="0.700"/>
<path d="M6.500 15 l.6-2 1.600 1.300z" fill="#333"/></svg></div>
<div class="t" style="left:1519.4px;top:118.5px;line-height:20px;font-size:11.2px;color:#000;">Edit</div>
<div class="t" style="left:1449px;top:154.2px;line-height:20px;font-size:14.1px;color:#000;">Animal ID</div>
<div style="left:1594px;top:150px;width:312px;height:24px;background:#fff;border:1px solid #7a7a7a;border-radius:2px"></div>
<div style="left:1597px;top:153px;width:29px;height:17px;background:#0078d7"></div>
<div class="t" style="left:1597.5px;top:151.5px;line-height:20px;font-size:13.4px;color:#fff;">BOB</div>
<div style="left:1891px;top:160.0px"><svg width="10" height="6" viewBox="0 0 10 6"><path d="M0.500 0.500 L5 5 L9.500 0.500" fill="none" stroke="#404040" stroke-width="1.100"/></svg></div>
<div class="t" style="left:1449px;top:187.0px;line-height:20px;font-size:14.1px;color:#000;">Genetic Line</div>
<div class="tb" style="left:1595px;top:183px;width:310px;height:22px;"></div>
<div class="t" style="left:1597.5px;top:183.5px;line-height:20px;font-size:13.4px;color:#000;">PIETRAIN</div>
<div class="t" style="left:1449px;top:221.0px;line-height:20px;font-size:14.1px;color:#000;">Ejaculate Number</div>
<div class="tb" style="left:1595px;top:217px;width:310px;height:22px;"></div>
<div class="t" style="left:1597.4px;top:216.79999999999998px;line-height:20px;font-size:14.3px;color:#000;transform:scaleX(0.88);transform-origin:0 50%;">125</div>
<div class="t" style="left:1449px;top:255.0px;line-height:20px;font-size:14.1px;color:#000;">Batch Number</div>
<div class="tb" style="left:1595px;top:251px;width:310px;height:22px;"></div>
<div class="t" style="left:1597.4px;top:250.8px;line-height:20px;font-size:14.3px;color:#000;transform:scaleX(0.88);transform-origin:0 50%;">20253</div>
<div class="t" style="left:1449px;top:288.0px;line-height:20px;font-size:14.1px;color:#000;">Volume</div>
<div class="tb" style="left:1595px;top:287px;width:226px;height:22px;"></div>
<div class="t" style="left:1597.4px;top:286.8px;line-height:20px;font-size:14.3px;color:#000;transform:scaleX(0.88);transform-origin:0 50%;">325.00</div>
<div class="btn" style="left:1823px;top:288px;width:25px;height:20px;"><div style="left:5px;top:7.0px"><svg width="13" height="4" viewBox="0 0 13 4"><rect x="0.500" y="0.500" width="12" height="3" rx="1" fill="#b4ccf0" stroke="#3a68b0"/></svg></div></div>
<div class="btn" style="left:1851px;top:288px;width:25px;height:20px;"><div style="left:5px;top:2.5px"><svg width="13" height="13" viewBox="0 0 13 13"><path d="M5 0.500 H8 V5 H12.500 V8 H8 V12.500 H5 V8 H0.500 V5 H5 Z" fill="#9cbcea" stroke="#4a78c0" stroke-width="1"/></svg></div></div>
<div class="t" style="left:1884px;top:288.0px;line-height:20px;font-size:14.1px;color:#000;">ml</div>
<div class="t" style="left:1449px;top:321.0px;line-height:20px;font-size:14.1px;color:#000;">Sample:Extender 1:</div>
<div class="tb" style="left:1595px;top:320px;width:226px;height:22px;"></div>
<div class="t" style="left:1597.4px;top:319.8px;line-height:20px;font-size:14.3px;color:#000;transform:scaleX(0.88);transform-origin:0 50%;">15.0</div>
<div class="btn" style="left:1823px;top:321px;width:25px;height:20px;"><div style="left:5px;top:7.0px"><svg width="13" height="4" viewBox="0 0 13 4"><rect x="0.500" y="0.500" width="12" height="3" rx="1" fill="#b4ccf0" stroke="#3a68b0"/></svg></div></div>
<div class="btn" style="left:1851px;top:321px;width:25px;height:20px;"><div style="left:5px;top:2.5px"><svg width="13" height="13" viewBox="0 0 13 13"><path d="M5 0.500 H8 V5 H12.500 V8 H8 V12.500 H5 V8 H0.500 V5 H5 Z" fill="#9cbcea" stroke="#4a78c0" stroke-width="1"/></svg></div></div>
<div class="t" style="left:1449px;top:354.0px;line-height:20px;font-size:14.1px;color:#000;">Collection Technician</div>
<div style="left:1594px;top:350px;width:281px;height:24px;background:#fff;border:1px solid #7a7a7a;border-radius:2px"></div>
<div style="left:1597px;top:353px;width:32px;height:17px;background:#0078d7"></div>
<div class="t" style="left:1597.5px;top:351.5px;line-height:20px;font-size:13.4px;color:#fff;">Ector</div>
<div style="left:1860px;top:360.0px"><svg width="10" height="6" viewBox="0 0 10 6"><path d="M0.500 0.500 L5 5 L9.500 0.500" fill="none" stroke="#404040" stroke-width="1.100"/></svg></div>
<div class="t" style="left:1449px;top:386.0px;line-height:20px;font-size:14.1px;color:#000;">Lab Technician</div>
<div style="left:1594px;top:382px;width:281px;height:24px;background:#fff;border:1px solid #7a7a7a;border-radius:2px"></div>
<div class="t" style="left:1597.5px;top:383.5px;line-height:20px;font-size:13.4px;color:#000;">Agnes</div>
<div style="left:1860px;top:392.0px"><svg width="10" height="6" viewBox="0 0 10 6"><path d="M0.500 0.500 L5 5 L9.500 0.500" fill="none" stroke="#404040" stroke-width="1.100"/></svg></div>
<div class="btn" style="left:1882px;top:383px;width:23px;height:22px;"><div style="left:3px;top:2px"><svg width="17" height="16" viewBox="0 0 17 16"><rect x="2.500" y="3.500" width="10" height="11.500" fill="#f6f6f6" stroke="#8a8a8a" stroke-width="0.800"/>
<circle cx="5" cy="4.500" r="4" fill="#a8c8f0" stroke="#6a90c8" stroke-width="0.800" opacity="0.9"/>
<path d="M7 12.500 L14 4 L16 5.800 L9.500 14 L6.500 15 Z" fill="#f0b040" stroke="#906010" stroke-width="0.700"/>
<path d="M6.500 15 l.6-2 1.600 1.300z" fill="#333"/></svg></div></div>
<div style="left:1437px;top:421px;width:478px;height:702px;background:#f0f0f0;border:1px solid #858585"></div>
<div style="left:1438px;top:422px;width:476px;height:22px;background:#dcdcdc"></div>
<div class="t" style="left:1441px;top:423.0px;line-height:20px;font-size:11.1px;font-weight:bold;color:#000;">Dosing</div>
<div style="left:1897px;top:444px;width:17px;height:678px;background:#f0f0f0;border-left:1px solid #fbfbfb"></div>
<div style="left:1905px;top:470px;width:2px;height:635px;background:#6e6e6e;border-radius:1px"></div>
<div class="t" style="left:1444px;top:450.4px;line-height:20px;font-size:14.2px;font-weight:bold;color:#000;">Dose Input</div>
<div class="gb" style="left:1441px;top:476px;width:453px;height:73px;"></div>
<div class="t" style="left:1451px;top:493.0px;line-height:20px;font-size:14.1px;color:#000;">Sperm / Dose</div>
<div class="tb" style="left:1549px;top:492px;width:253px;height:22px;"></div>
<div class="t" style="left:1551.4px;top:491.8px;line-height:20px;font-size:14.3px;color:#000;transform:scaleX(0.88);transform-origin:0 50%;">2.300</div>
<div class="btn" style="left:1804px;top:493px;width:25px;height:20px;"><div style="left:5px;top:7.0px"><svg width="13" height="4" viewBox="0 0 13 4"><rect x="0.500" y="0.500" width="12" height="3" rx="1" fill="#b4ccf0" stroke="#3a68b0"/></svg></div></div>
<div class="btn" style="left:1832px;top:493px;width:25px;height:20px;"><div style="left:5px;top:2.5px"><svg width="13" height="13" viewBox="0 0 13 13"><path d="M5 0.500 H8 V5 H12.500 V8 H8 V12.500 H5 V8 H0.500 V5 H5 Z" fill="#9cbcea" stroke="#4a78c0" stroke-width="1"/></svg></div></div>
<div class="t" style="left:1868px;top:493.0px;line-height:20px;font-size:14.1px;color:#000;">B</div>
<div class="t" style="left:1451px;top:522.0px;line-height:20px;font-size:14.1px;color:#000;">Dose Volume</div>
<div class="tb" style="left:1549px;top:521px;width:253px;height:22px;"></div>
<div class="t" style="left:1551.4px;top:520.8000000000001px;line-height:20px;font-size:14.3px;color:#000;transform:scaleX(0.88);transform-origin:0 50%;">80.00</div>
<div class="btn" style="left:1804px;top:522px;width:25px;height:20px;"><div style="left:5px;top:7.0px"><svg width="13" height="4" viewBox="0 0 13 4"><rect x="0.500" y="0.500" width="12" height="3" rx="1" fill="#b4ccf0" stroke="#3a68b0"/></svg></div></div>
<div class="btn" style="left:1832px;top:522px;width:25px;height:20px;"><div style="left:5px;top:2.5px"><svg width="13" height="13" viewBox="0 0 13 13"><path d="M5 0.500 H8 V5 H12.500 V8 H8 V12.500 H5 V8 H0.500 V5 H5 Z" fill="#9cbcea" stroke="#4a78c0" stroke-width="1"/></svg></div></div>
<div class="t" style="left:1868px;top:522.0px;line-height:20px;font-size:14.1px;color:#000;">ml</div>
<div class="t" style="left:1444px;top:563.4px;line-height:20px;font-size:14.2px;font-weight:bold;color:#000;">Adjustments / Results</div>
<div class="gb" style="left:1441px;top:589px;width:453px;height:330px;"></div>
<div class="t" style="left:1450px;top:605.0px;line-height:20px;font-size:14.1px;color:#000;">Concentration</div>
<div class="ro" style="left:1555px;top:604px;width:291px;height:22px;"></div>
<div class="t" style="left:1557.4px;top:603.8000000000001px;line-height:20px;font-size:14.3px;color:#000;transform:scaleX(0.88);transform-origin:0 50%;">0.519</div>
<div class="t" style="left:1856px;top:605.0px;line-height:20px;font-size:14.1px;color:#000;">B/ml</div>
<div style="left:1447px;top:636.5px;width:13px;height:13px;background:#fff;border:1px solid #6a6a6a;border-radius:50%"></div>
<div class="t" style="left:1466px;top:633.0px;line-height:20px;font-size:14.1px;color:#000;">Total Count</div>
<div class="ro" style="left:1555px;top:633px;width:291px;height:22px;"></div>
<div class="t" style="left:1557.4px;top:632.8000000000001px;line-height:20px;font-size:14.3px;color:#000;transform:scaleX(0.88);transform-origin:0 50%;">1891</div>
<div style="left:1447px;top:665.5px;width:13px;height:13px;background:#fff;border:4px solid #0067c0;border-radius:50%"></div>
<div class="t" style="left:1466px;top:662.0px;line-height:20px;font-size:14.1px;color:#000;">Motile</div>
<div class="ro" style="left:1555px;top:662px;width:291px;height:22px;"></div>
<div class="t" style="left:1557.4px;top:661.8000000000001px;line-height:20px;font-size:14.3px;color:#000;transform:scaleX(0.88);transform-origin:0 50%;">84</div>
<div class="t" style="left:1871px;top:663.0px;line-height:20px;font-size:14.1px;color:#000;">%</div>
<div style="left:1447px;top:694.5px;width:13px;height:13px;background:#fff;border:1px solid #6a6a6a;border-radius:50%"></div>
<div class="t" style="left:1466px;top:691.0px;line-height:20px;font-size:14.1px;color:#000;">Progressive</div>
<div class="ro" style="left:1555px;top:691px;width:291px;height:22px;"></div>
<div class="t" style="left:1557.4px;top:690.8000000000001px;line-height:20px;font-size:14.3px;color:#000;transform:scaleX(0.88);transform-origin:0 50%;">56.2</div>
<div class="t" style="left:1871px;top:692.0px;line-height:20px;font-size:14.1px;color:#000;">%</div>
<div class="t" style="left:1718px;top:725.0px;line-height:20px;font-size:14.1px;color:#000;">%</div>
<div class="cb" style="left:1447px;top:749.5px;width:13px;height:13px;"><svg width="13" height="13" viewBox="0 0 13 13"><path d="M3.500 6.700 L5.600 8.800 L9.600 4.600" fill="none" stroke="#fff" stroke-width="1.050" stroke-linecap="round" stroke-linejoin="round"/></svg></div>
<div class="t" style="left:1466px;top:746.0px;line-height:20px;font-size:14.1px;color:#000;">Morph Normal</div>
<div class="t" style="left:1603px;top:747.0px;line-height:20px;font-size:11.2px;font-weight:bold;color:#1a8a1a;">Pass</div>
<div class="ro" style="left:1641px;top:747px;width:169px;height:22px;"></div>
<div class="t" style="left:1643.4px;top:746.8000000000001px;line-height:20px;font-size:14.3px;color:#000;transform:scaleX(0.88);transform-origin:0 50%;">91.38</div>
<div class="btn" style="left:1868px;top:748px;width:18.5px;height:19.5px;"><div style="left:3px;top:7px"><svg width="11" height="4" viewBox="0 0 11 4"><rect x="0.500" y="0.500" width="10" height="3" rx="1" fill="#b4ccf0" stroke="#3a68b0"/></svg></div></div>
<div class="cb" style="left:1464px;top:778.5px;width:13px;height:13px;"><svg width="13" height="13" viewBox="0 0 13 13"><path d="M3.500 6.700 L5.600 8.800 L9.600 4.600" fill="none" stroke="#fff" stroke-width="1.050" stroke-linecap="round" stroke-linejoin="round"/></svg></div>
<div class="t" style="left:1483px;top:775.0px;line-height:20px;font-size:14.1px;color:#000;">Bent Tail</div>
<div class="ro" style="left:1641px;top:776px;width:169px;height:22px;"></div>
<div class="t" style="left:1643.4px;top:775.8000000000001px;line-height:20px;font-size:14.3px;color:#000;transform:scaleX(0.88);transform-origin:0 50%;">0.25</div>
<div class="cb" style="left:1464px;top:807.5px;width:13px;height:13px;"><svg width="13" height="13" viewBox="0 0 13 13"><path d="M3.500 6.700 L5.600 8.800 L9.600 4.600" fill="none" stroke="#fff" stroke-width="1.050" stroke-linecap="round" stroke-linejoin="round"/></svg></div>
<div class="t" style="left:1483px;top:804.0px;line-height:20px;font-size:14.1px;color:#000;">Coiled Tail</div>
<div class="ro" style="left:1641px;top:805px;width:169px;height:22px;"></div>
<div class="t" style="left:1643.4px;top:804.8000000000001px;line-height:20px;font-size:14.3px;color:#000;transform:scaleX(0.88);transform-origin:0 50%;">0.06</div>
<div class="cb" style="left:1464px;top:836.5px;width:13px;height:13px;"><svg width="13" height="13" viewBox="0 0 13 13"><path d="M3.500 6.700 L5.600 8.800 L9.600 4.600" fill="none" stroke="#fff" stroke-width="1.050" stroke-linecap="round" stroke-linejoin="round"/></svg></div>
<div class="t" style="left:1483px;top:833.0px;line-height:20px;font-size:14.1px;color:#000;">DMR</div>
<div class="ro" style="left:1641px;top:834px;width:169px;height:22px;"></div>
<div class="t" style="left:1643.4px;top:833.8000000000001px;line-height:20px;font-size:14.3px;color:#000;transform:scaleX(0.88);transform-origin:0 50%;">0.44</div>
<div class="cb" style="left:1464px;top:865.5px;width:13px;height:13px;"><svg width="13" height="13" viewBox="0 0 13 13"><path d="M3.500 6.700 L5.600 8.800 L9.600 4.600" fill="none" stroke="#fff" stroke-width="1.050" stroke-linecap="round" stroke-linejoin="round"/></svg></div>
<div class="t" style="left:1483px;top:862.0px;line-height:20px;font-size:14.1px;color:#000;">Proximal Droplet</div>
<div class="ro" style="left:1641px;top:863px;width:169px;height:22px;"></div>
<div class="t" style="left:1643.4px;top:862.8000000000001px;line-height:20px;font-size:14.3px;color:#000;transform:scaleX(0.88);transform-origin:0 50%;">1.83</div>
<div class="cb" style="left:1464px;top:894.5px;width:13px;height:13px;"><svg width="13" height="13" viewBox="0 0 13 13"><path d="M3.500 6.700 L5.600 8.800 L9.600 4.600" fill="none" stroke="#fff" stroke-width="1.050" stroke-linecap="round" stroke-linejoin="round"/></svg></div>
<div class="t" style="left:1483px;top:891.0px;line-height:20px;font-size:14.1px;color:#000;">Distal Droplet</div>
<div class="ro" style="left:1641px;top:892px;width:169px;height:22px;"></div>
<div class="t" style="left:1643.4px;top:891.8000000000001px;line-height:20px;font-size:14.3px;color:#000;transform:scaleX(0.88);transform-origin:0 50%;">6.17</div>
<div class="t" style="left:1447px;top:933.0px;line-height:20px;font-size:14.2px;font-weight:bold;color:#000;">Processing</div>
<div class="t" style="left:1826px;top:933.0px;line-height:20px;font-size:14.1px;color:#000;">ml</div>
<div style="left:1850px;top:936px;width:29px;height:12px;background:#a6a6a6;border-radius:6px"></div>
<div style="left:1864px;top:934.5px;width:15px;height:15px;background:#8eb2e2;border-radius:50%"></div>
<div class="t" style="left:1884.5px;top:933.0px;line-height:20px;font-size:14.1px;color:#000;">l</div>
<div class="gb" style="left:1441px;top:960px;width:453px;height:161px;"></div>
<div class="t" style="left:1452px;top:977.0px;line-height:20px;font-size:14.1px;color:#000;">Extender Volume</div>
<div class="ro" style="left:1611px;top:976px;width:233px;height:22px;"></div>
<div class="t" style="left:1613.4px;top:975.8000000000001px;line-height:20px;font-size:14.3px;color:#000;transform:scaleX(0.88);transform-origin:0 50%;">4.18</div>
<div class="t" style="left:1855px;top:977.0px;line-height:20px;font-size:14.1px;color:#000;">l</div>
<div class="t" style="left:1452px;top:1006.0px;line-height:20px;font-size:14.1px;color:#000;">Final Volume</div>
<div class="ro" style="left:1611px;top:1005px;width:233px;height:22px;"></div>
<div class="t" style="left:1613.4px;top:1004.8000000000001px;line-height:20px;font-size:14.3px;color:#000;transform:scaleX(0.88);transform-origin:0 50%;">4.51</div>
<div class="t" style="left:1855px;top:1006.0px;line-height:20px;font-size:14.1px;color:#000;">l</div>
<div class="t" style="left:1452px;top:1035.0px;line-height:20px;font-size:14.1px;color:#000;">Adjusted Concentration</div>
<div class="ro" style="left:1611px;top:1034px;width:233px;height:22px;"></div>
<div class="t" style="left:1613.4px;top:1033.8px;line-height:20px;font-size:14.3px;color:#000;transform:scaleX(0.88);transform-origin:0 50%;">0.037</div>
<div class="t" style="left:1855px;top:1035.0px;line-height:20px;font-size:14.1px;color:#000;">B/ml</div>
<div class="t" style="left:1452px;top:1064.0px;line-height:20px;font-size:14.1px;color:#000;">Number Of Doses</div>
<div class="ro" style="left:1611px;top:1063px;width:233px;height:22px;"></div>
<div class="t" style="left:1613.4px;top:1062.8px;line-height:20px;font-size:14.3px;color:#000;transform:scaleX(0.88);transform-origin:0 50%;">56</div>
<div class="t" style="left:1855px;top:1064.0px;line-height:20px;font-size:14.1px;color:#000;">#</div>
<div class="t" style="left:1452px;top:1093.0px;line-height:20px;font-size:14.1px;color:#000;">Useful Sperm</div>
<div class="ro" style="left:1611px;top:1092px;width:233px;height:22px;"></div>
<div class="t" style="left:1613.4px;top:1091.8px;line-height:20px;font-size:14.3px;color:#000;transform:scaleX(0.88);transform-origin:0 50%;">76.8</div>
<div class="t" style="left:1855px;top:1093.0px;line-height:20px;font-size:14.1px;color:#000;">%</div>
<div style="left:209px;top:1007px;width:1221px;height:121px;background:#fff;border:1px solid #858585"></div>
<div style="left:210px;top:1008px;width:1219px;height:23px;background:#dcdcdc"></div>
<div class="t" style="left:213px;top:1009.3px;line-height:20px;font-size:11.05px;font-weight:bold;color:#000;">Analysis Name:</div>
<div class="t" style="left:302px;top:1009.0px;line-height:20px;font-size:14.25px;color:#000;">BOB_20250325_070630</div>
<div style="left:467px;top:1012px;width:1px;height:15px;background:#a8a8a8"></div>
<div class="t" style="left:473px;top:1009.3px;line-height:20px;font-size:11.05px;font-weight:bold;color:#000;">Video Count:</div>
<div class="t" style="left:551px;top:1009.0px;line-height:20px;font-size:14.25px;color:#000;">7</div>
<div style="left:567px;top:1012px;width:1px;height:15px;background:#a8a8a8"></div>
<div style="left:575px;top:1011px"><svg width="17" height="17" viewBox="0 0 17 17"><path d="M1 9.500 L3.500 4.500 H13 L15.500 9.500 V15 H1 Z" fill="#eeeeee" stroke="#a4a4a4" stroke-width="0.800"/>
<rect x="1" y="10" width="14.500" height="5" fill="#d2d2d2" stroke="#9a9a9a" stroke-width="0.700"/>
<path d="M1.500 15.300 H15" stroke="#7c7c7c" stroke-width="1"/>
<path d="M4 1.500 L8 0.300 L12 2.500 L10.500 4 L12.200 5.800 L8 9.300 L4.500 6.300 L6.300 4.800 Z" fill="#3a6cc8" stroke="#1f4890" stroke-width="0.500"/>
<path d="M6.500 2 L9.500 4.800" stroke="#9cc0f4" stroke-width="0.900"/></svg></div>
<div class="t" style="left:593px;top:1009.0px;line-height:20px;font-size:14.1px;color:#000;">Save</div>
<div style="left:1411px;top:1016px"><svg width="12" height="4" viewBox="0 0 12 4"><rect x="0.500" y="0.500" width="11" height="3" rx="1" fill="#b4ccf0" stroke="#3a68b0"/></svg></div>
<svg width="0" height="0" style="position:absolute"><defs><filter id="tn" x="0" y="0" width="100%" height="100%"><feTurbulence type="fractalNoise" baseFrequency="0.9" numOctaves="1" seed="5"/><feColorMatrix type="matrix" values="0 0 0 0 0.8  0 0 0 0 0.8  0 0 0 0 0.8  2.2 0 0 0 -1.45"/></filter></defs></svg>
<div style="left:231px;top:1033px;width:64px;height:48px;background:#3e3e3e"><svg width="64" height="48"><rect width="64" height="48" fill="#fff" filter="url(#tn)" opacity="0.55"/></svg></div>
<div class="t" style="left:63px;width:400px;text-align:center;top:1082.7px;line-height:20px;font-size:12.05px;color:#000;">07:06:31</div>
<div style="left:338px;top:1033px;width:64px;height:48px;background:#3e3e3e"><svg width="64" height="48"><rect width="64" height="48" fill="#fff" filter="url(#tn)" opacity="0.55"/></svg></div>
<div class="t" style="left:170px;width:400px;text-align:center;top:1082.7px;line-height:20px;font-size:12.05px;color:#000;">07:06:33</div>
<div style="left:445px;top:1033px;width:64px;height:48px;background:#3e3e3e"><svg width="64" height="48"><rect width="64" height="48" fill="#fff" filter="url(#tn)" opacity="0.55"/></svg></div>
<div class="t" style="left:277px;width:400px;text-align:center;top:1082.7px;line-height:20px;font-size:12.05px;color:#000;">07:06:35</div>
<div style="left:552px;top:1033px;width:64px;height:48px;background:#3e3e3e"><svg width="64" height="48"><rect width="64" height="48" fill="#fff" filter="url(#tn)" opacity="0.55"/></svg></div>
<div class="t" style="left:384px;width:400px;text-align:center;top:1082.7px;line-height:20px;font-size:12.05px;color:#000;">07:06:37</div>
<div style="left:659px;top:1033px;width:64px;height:48px;background:#3e3e3e"><svg width="64" height="48"><rect width="64" height="48" fill="#fff" filter="url(#tn)" opacity="0.55"/></svg></div>
<div class="t" style="left:491px;width:400px;text-align:center;top:1082.7px;line-height:20px;font-size:12.05px;color:#000;">07:06:38</div>
<div style="left:766px;top:1033px;width:64px;height:48px;background:#3e3e3e"><svg width="64" height="48"><rect width="64" height="48" fill="#fff" filter="url(#tn)" opacity="0.55"/></svg></div>
<div class="t" style="left:598px;width:400px;text-align:center;top:1082.7px;line-height:20px;font-size:12.05px;color:#000;">07:06:40</div>
<div style="left:873px;top:1033px;width:64px;height:48px;background-color:#34424f;background-image:radial-gradient(circle at 0.5px 0.5px,#0a84f0 0.62px,rgba(10,132,240,0) 0.95px);background-size:2px 2px"></div>
<div style="left:879px;top:1084px;width:52px;height:18px;background:#f0f0f0"></div>
<div class="t" style="left:705px;width:400px;text-align:center;top:1082.7px;line-height:20px;font-size:12.05px;color:#000;">07:14:44</div>
<div style="left:0px;top:1130px;width:1919px;height:22px;background:#f0f0f0"></div>
<div style="left:0px;top:1130px;width:1919px;height:1px;background:#dedede"></div>
<div class="t" style="left:4.5px;top:1131.3px;line-height:20px;font-size:11.2px;color:#000;">Total time: 00:00:04.2908985</div>
<div class="t" style="left:1410.5px;top:1131.3px;line-height:20px;font-size:11.2px;color:#000;">S/N: 30005</div>
<div class="t" style="left:1504px;top:1131.3px;line-height:20px;font-size:11.2px;color:#000;">Zeiss 10x NH IVOS-II 160mm - X:1.44 Y:1.44</div>
<div class="t" style="left:1746px;top:1131.3px;line-height:20px;font-size:11.75px;color:#000;">Capillary Chamber 20µm</div>
<div style="left:0px;top:1152px;width:1919px;height:47px;background:linear-gradient(90deg,#dcdfee 0%,#dddbe9 45%,#e6dde8 75%,#e3e1ec 100%);border-top:1px solid #c2c2ca"></div>
<div style="left:20px;top:1165px"><svg width="24" height="22" viewBox="0 0 24 22"><rect x="1" y="1" width="22" height="20" rx="2.500" fill="#fff" stroke="#0f63c6" stroke-width="2"/><rect x="11" y="2" width="11" height="11" fill="#5ac8f8"/><rect x="11" y="13" width="11" height="7" fill="#1f8ae8"/></svg></div>
<div style="left:661px;top:1165px"><svg width="23" height="23" viewBox="0 0 23 23"><defs><linearGradient id="wg" x1="0" y1="0" x2="1" y2="1"><stop offset="0" stop-color="#4cc4f8"/><stop offset="1" stop-color="#0a6cd8"/></linearGradient></defs><rect x="0" y="0" width="11" height="11" fill="url(#wg)"/><rect x="12" y="0" width="11" height="11" fill="url(#wg)"/><rect x="0" y="12" width="11" height="11" fill="url(#wg)"/><rect x="12" y="12" width="11" height="11" fill="url(#wg)"/></svg></div>
<div style="left:698px;top:1161px;width:218px;height:30px;background:#f5f3f9;border:1px solid #d9d6e0;border-radius:15px"></div>
<div style="left:708px;top:1167px"><svg width="17" height="17" viewBox="0 0 17 17"><circle cx="7" cy="7" r="5.300" fill="none" stroke="#1f1f1f" stroke-width="1.700"/><path d="M11 11 L15.500 15.500" stroke="#1f1f1f" stroke-width="1.900" stroke-linecap="round"/></svg></div>
<div class="t" style="left:734px;top:1166.0px;line-height:20px;font-size:13.6px;color:#5f5f5f;">Search</div>
<div style="left:929px;top:1165px"><svg width="24" height="22" viewBox="0 0 24 22"><defs><linearGradient id="tv" x1="0" y1="0" x2="1" y2="1"><stop offset="0" stop-color="#fdfdfd"/><stop offset="1" stop-color="#c8c8c8"/></linearGradient></defs><rect x="0" y="7" width="17" height="15" rx="1.500" fill="#1e1e1e"/><rect x="7" y="0" width="17" height="15" rx="1.500" fill="url(#tv)"/><rect x="7" y="7" width="10" height="8" fill="#a8a8a8"/></svg></div>
<div style="left:973px;top:1164px"><svg width="24" height="24" viewBox="0 0 24 24"><defs><linearGradient id="cp1" x1="0" y1="0" x2="1" y2="1"><stop offset="0" stop-color="#2a7cf0"/><stop offset="0.5" stop-color="#38c8c0"/><stop offset="1" stop-color="#f0c030"/></linearGradient><linearGradient id="cp2" x1="1" y1="0" x2="0" y2="1"><stop offset="0" stop-color="#7a5cf0"/><stop offset="0.5" stop-color="#e060c0"/><stop offset="1" stop-color="#f06a40"/></linearGradient></defs><path d="M9 2 Q13 1 15 4 L12 14 Q11 17 8 17 L5 17 Q1 17 2 12 L4 6 Q5 2 9 2 Z" fill="url(#cp1)"/><path d="M15 22 Q11 23 9 20 L12 10 Q13 7 16 7 L19 7 Q23 7 22 12 L20 18 Q19 22 15 22 Z" fill="url(#cp2)"/></svg></div>
<div style="left:1016px;top:1165px"><svg width="26" height="22" viewBox="0 0 26 22"><path d="M1 3 Q1 1 3 1 H9 L12 4 H23 Q25 4 25 6 V9 H1 Z" fill="#e8a820"/><rect x="1" y="5" width="24" height="16" rx="1.500" fill="#fcd04a"/><rect x="6" y="14" width="14" height="7" rx="1.500" fill="#1f86e0"/><rect x="8" y="17" width="10" height="4" fill="#0f6cc8"/></svg></div>
<div style="left:1026px;top:1192px;width:6px;height:2.5px;background:#8a8a8a;border-radius:1.500px"></div>
<div style="left:1061px;top:1164px"><svg width="24" height="24" viewBox="0 0 24 24"><defs><linearGradient id="eg" x1="0" y1="0" x2="1" y2="1"><stop offset="0" stop-color="#2fb8e8"/><stop offset="1" stop-color="#0c5cb8"/></linearGradient><linearGradient id="eg2" x1="0" y1="0" x2="1" y2="0"><stop offset="0" stop-color="#2fc0c8"/><stop offset="1" stop-color="#6fe060"/></linearGradient></defs><circle cx="12" cy="12" r="11.500" fill="url(#eg)"/><path d="M3 8 Q8 0 16 1.500 Q23.500 4 23.500 11 Q23 16 18 16 Q14 16 14.500 13 Q15 10 12 9 Q7 8 3 12 Z" fill="url(#eg2)"/><path d="M8 13 Q8 19 14 22.500 Q10 23.500 6 21 Q1 17 2 11 Q5 8 9 9.500 Q8 11 8 13 Z" fill="#0c4ea0"/><path d="M10 13.500 Q10 18 15 18.500 Q19 18.500 22 16 Q20 21 15 22.500 Q9 20 8.500 14 Z" fill="#1c70c8"/></svg></div>
<div style="left:1105px;top:1164px"><svg width="24" height="24" viewBox="0 0 24 24"><path d="M7 6 V4 Q7 1.500 9.500 1.500 H14.500 Q17 1.500 17 4 V6" fill="none" stroke="#2fa8f0" stroke-width="1.800"/><path d="M1 6 H23 V19 Q23 23 19 23 H5 Q1 23 1 19 Z" fill="#14488c"/><rect x="7" y="9" width="4.600" height="4.600" fill="#f04828"/><rect x="12.400" y="9" width="4.600" height="4.600" fill="#7cc020"/><rect x="7" y="14.400" width="4.600" height="4.600" fill="#20a0f0"/><rect x="12.400" y="14.400" width="4.600" height="4.600" fill="#fcc010"/></svg></div>
<div style="left:1142px;top:1157px;width:38px;height:38px;background:rgba(255,255,255,0.22);border-radius:5px"></div>
<div style="left:1149px;top:1164px"><svg width="26" height="26" viewBox="0 0 26 26"><rect x="0.500" y="0.500" width="15" height="15" rx="2" fill="#f0f0f0"/><rect x="2.500" y="2.500" width="10" height="10" fill="none" stroke="#d8281c" stroke-width="2.400" stroke-dasharray="3 1.300"/><path d="M9 9 L20 20 M9 18 L22 10" stroke="#9aa0a8" stroke-width="2"/><circle cx="13.500" cy="22" r="2.300" fill="#fff" stroke="#1f90e0" stroke-width="1.600"/><circle cx="22.500" cy="13" r="2.300" fill="#fff" stroke="#1f90e0" stroke-width="1.600"/></svg></div>
<div style="left:1153px;top:1192px;width:15px;height:2.5px;background:#8a8a8a;border-radius:1.500px"></div>
<div style="left:1192px;top:1164px"><svg width="26" height="24" viewBox="0 0 26 24"><path d="M18 0.500 L25 3.500 V20.500 L18 23.500 L6 13.500 L2.500 16.500 L0.500 15.500 V8.500 L2.500 7.500 L6 10.500 Z" fill="#8a5cc8"/><path d="M18 0.500 L25 3.500 V20.500 L18 23.500 Z" fill="#c8a8f0"/><path d="M18 7 L11.500 12 L18 17 Z" fill="#e3dfee"/><path d="M0.500 8.500 L2.500 7.500 L6 10.500 L4 12 L6 13.500 L2.500 16.500 L0.500 15.500 Z" fill="#6a3ca8"/></svg></div>
<div style="left:1230px;top:1157px;width:38px;height:38px;background:rgba(255,255,255,0.55);border:1px solid rgba(255,255,255,0.7);border-radius:5px"></div>
<div style="left:1237px;top:1164px"><svg width="24" height="22" viewBox="0 0 24 22"><defs><linearGradient id="hc" x1="0" y1="0" x2="0" y2="1"><stop offset="0" stop-color="#3a5ce8"/><stop offset="1" stop-color="#1f30c0"/></linearGradient></defs><rect x="0.500" y="0.500" width="23" height="21" rx="3" fill="url(#hc)"/><rect x="2" y="2" width="20" height="5" rx="2" fill="#c8d8fc" opacity="0.9"/><path d="M6 4V19M9.500 4V19M13 6 L11 11 L14 14 L12 19M18 5 L15 9 L19 12 L16 18" stroke="#dfe8ff" stroke-width="1.200" fill="none"/></svg></div>
<div style="left:1243px;top:1192px;width:12px;height:3px;background:#0f6cd0;border-radius:1.500px"></div>
<div style="left:1728px;top:1172px"><svg width="11" height="7" viewBox="0 0 11 7"><path d="M0.700 6.300 L5.500 1.200 L10.300 6.300" fill="none" stroke="#1a1a1a" stroke-width="1.300"/></svg></div>
<div style="left:1756px;top:1169px"><svg width="18" height="15" viewBox="0 0 18 15"><path d="M4.500 13.500 Q1 13.500 1 10.500 Q1 7.500 4.300 7.300 Q5 3 9.300 3 Q13 3 14 6.500 Q17 7 17 10.300 Q17 13.500 13.500 13.500 Z" fill="#9a9a9a" stroke="#1a1a1a" stroke-width="1.300"/><path d="M3 1 L15.500 14" stroke="#1a1a1a" stroke-width="1.400"/></svg></div>
<div style="left:1789px;top:1168px"><svg width="17" height="17" viewBox="0 0 17 17"><circle cx="8" cy="8" r="7.200" fill="none" stroke="#1a1a1a" stroke-width="1.100"/><ellipse cx="8" cy="8" rx="3.200" ry="7.200" fill="none" stroke="#1a1a1a" stroke-width="1"/><path d="M1 5.500 H15 M1 10.500 H9" stroke="#1a1a1a" stroke-width="1"/><circle cx="12" cy="12" r="4.300" fill="#e6e1ec" stroke="#1a1a1a" stroke-width="1.100"/><path d="M9.200 14.800 L14.800 9.200" stroke="#1a1a1a" stroke-width="1.100"/></svg></div>
<div style="left:1814px;top:1169px"><svg width="17" height="17" viewBox="0 0 17 17"><path d="M1.500 5 H4.500 L8 1.500 V8" fill="none" stroke="#1a1a1a" stroke-width="1.200"/><path d="M1.500 5 V10 H4.500 L6 11.500" fill="none" stroke="#1a1a1a" stroke-width="1.200"/><circle cx="11" cy="11.500" r="4.500" fill="#1a1a1a"/><path d="M9.200 9.700 L12.800 13.300 M12.800 9.700 L9.200 13.300" stroke="#fff" stroke-width="1.200"/></svg></div>
<div class="t" style="left:1500.5px;width:400px;text-align:right;top:1158.0px;line-height:20px;font-size:12.1px;color:#1a1a1a;">7:15 AM</div>
<div class="t" style="left:1500.5px;width:400px;text-align:right;top:1174.0px;line-height:20px;font-size:12.1px;color:#1a1a1a;">3/25/2025</div>
</div></body></html>
